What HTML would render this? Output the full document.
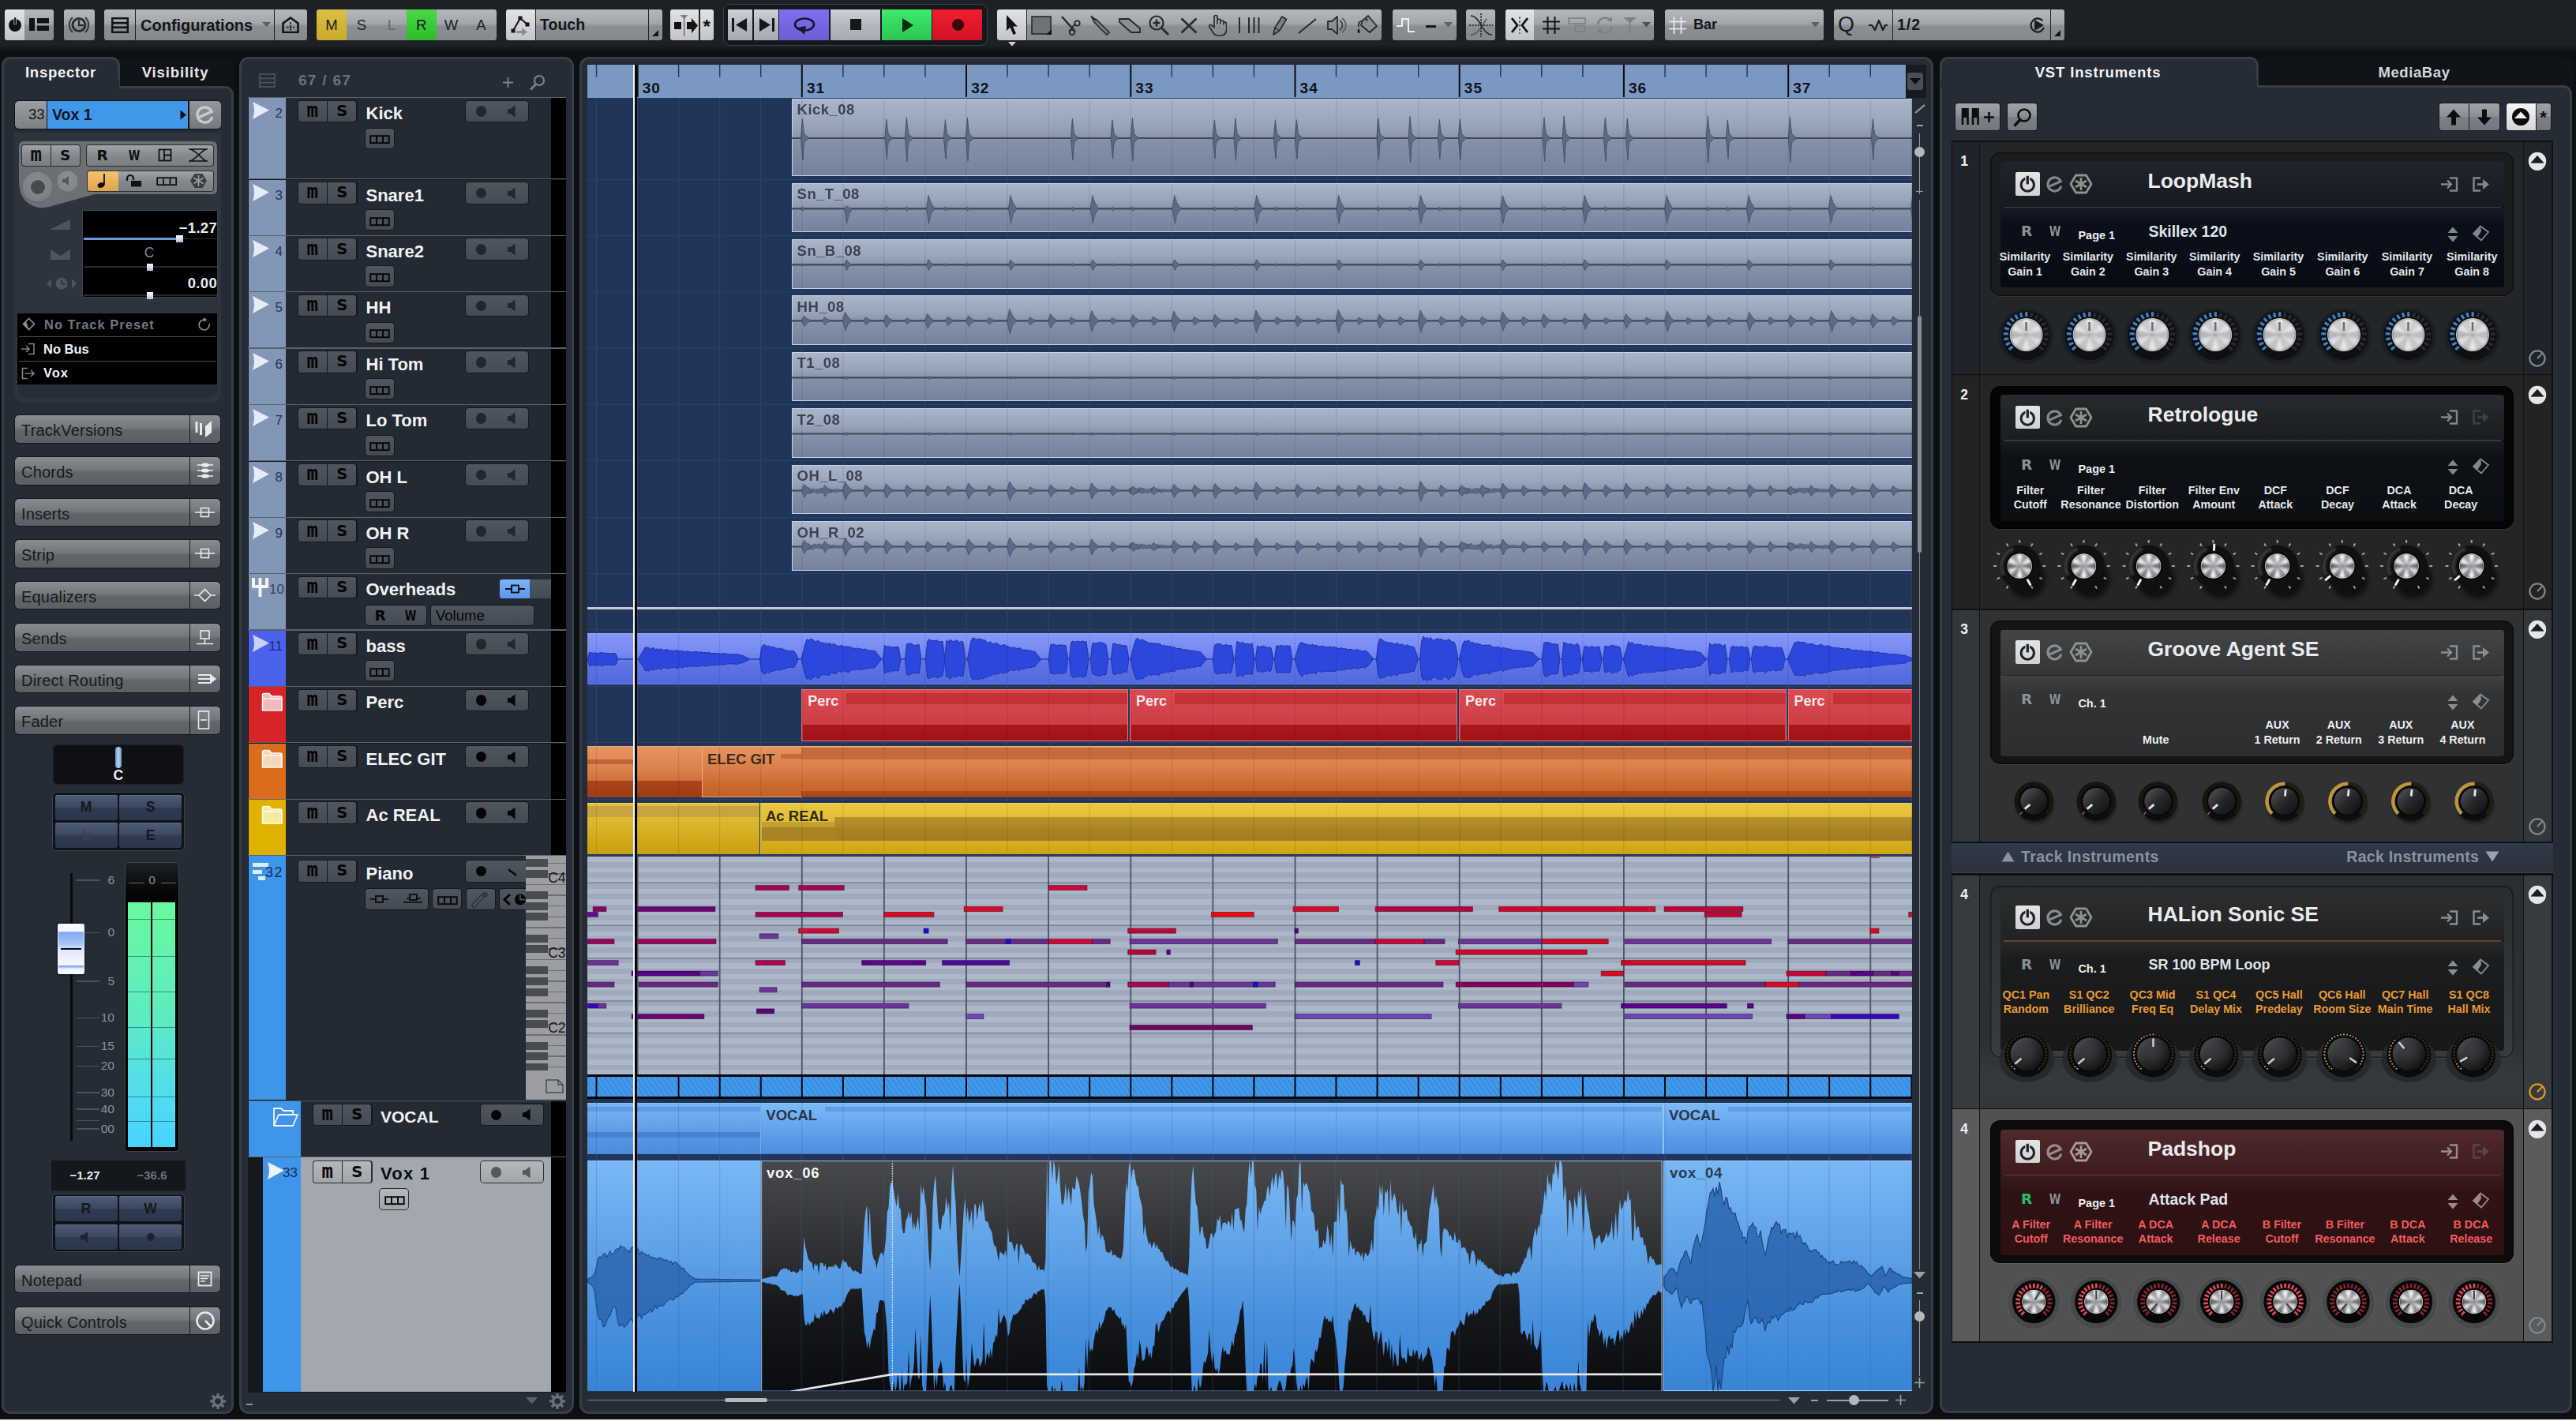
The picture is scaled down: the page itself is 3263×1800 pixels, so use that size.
<!DOCTYPE html>
<html><head><meta charset="utf-8"><title>Cubase</title><style>
html,body{margin:0;padding:0;background:#0d0f11;}
body{width:3263px;height:1800px;position:relative;overflow:hidden;font-family:"Liberation Sans","DejaVu Sans",sans-serif;}
body div,body svg{position:absolute;box-sizing:border-box;}
.t{white-space:nowrap;}
</style></head><body>
<div style="left:0px;top:0px;width:3263px;height:1800px;background:#0d0f11;"></div>
<div style="left:0px;top:0px;width:3263px;height:66px;background:linear-gradient(#1d2126 0,#1d2126 86%,#15181c 93%,#0d0f11 100%);"></div>
<div style="left:6px;top:12px;width:25px;height:39px;background:linear-gradient(#e2e3e5,#d2d4d6 50%,#c2c4c7);border-radius:3px 0 0 3px;"></div>
<div style="left:31px;top:12px;width:37px;height:39px;background:linear-gradient(#b4b7bb,#a3a7ab 45%,#8b8f94 55%,#85898e);border-radius:0 3px 3px 0;"></div>
<svg style="left:8px;top:20px;" width="22" height="22" viewBox="0 0 22 22"><path d="M6.5 5.5A8 8 0 1 0 15.5 5.5" fill="none" stroke="#111316" stroke-width="0"/><circle cx="11" cy="12" r="8" fill="#111316"/><rect x="9.5" y="2" width="3.4" height="9" fill="#dcdde0"/><rect x="10.2" y="2" width="2" height="8.5" fill="#111316"/></svg>
<svg style="left:37px;top:23px;" width="26" height="17" viewBox="0 0 26 17"><rect x="0" y="0" width="7" height="16" fill="#111316"/><rect x="10" y="0" width="15" height="6.5" fill="#111316"/><rect x="10" y="9.5" width="15" height="6.5" fill="#111316"/></svg>
<div style="left:81px;top:12px;width:39px;height:39px;background:linear-gradient(#b4b7bb,#a3a7ab 45%,#8b8f94 55%,#85898e);border-radius:3px;"></div>
<svg style="left:85px;top:17px;" width="30" height="30" viewBox="0 0 30 30"><circle cx="15" cy="14.5" r="8" fill="none" stroke="#2a2d31" stroke-width="3"/><path d="M15 8.5V15H21" fill="none" stroke="#2a2d31" stroke-width="2.5"/><path d="M7 5A13 13 0 0 0 7 24M23 5A13 13 0 0 1 23 24" fill="none" stroke="#3a3d42" stroke-width="2.2"/></svg>
<div style="left:132px;top:12px;width:39px;height:39px;background:linear-gradient(#b4b7bb,#a3a7ab 45%,#8b8f94 55%,#85898e);border-radius:3px 0 0 3px;"></div>
<div style="left:172px;top:12px;width:175px;height:39px;background:linear-gradient(#b4b7bb,#a3a7ab 45%,#8b8f94 55%,#85898e);border-radius:0;"></div>
<div style="left:348px;top:12px;width:41px;height:39px;background:linear-gradient(#b4b7bb,#a3a7ab 45%,#8b8f94 55%,#85898e);border-radius:0 3px 3px 0;"></div>
<svg style="left:141px;top:22px;" width="22" height="20" viewBox="0 0 22 20"><rect x="1.2" y="1.2" width="19.6" height="17.6" fill="none" stroke="#111316" stroke-width="2.4"/><rect x="1" y="5.8" width="20" height="2.6" fill="#111316"/><rect x="1" y="11.4" width="20" height="2.6" fill="#111316"/></svg>
<div class="t" style="left:178px;top:20px;font-size:20px;line-height:24px;color:#15171a;font-weight:bold;">Configurations</div>
<svg style="left:332px;top:27px;" width="12" height="8" viewBox="0 0 12 8"><path d="M0 1H11L5.5 7Z" fill="#5d6166"/></svg>
<svg style="left:356px;top:20px;" width="24" height="22" viewBox="0 0 24 22"><path d="M2.5 21V9.5L12 2.5L21.5 9.5V21Z" fill="none" stroke="#111316" stroke-width="2.6"/><path d="M12 8V19M7 14.5H17" stroke="#111316" stroke-width="1.6" stroke-dasharray="2.5 1.5"/></svg>
<div style="left:401px;top:12px;width:38px;height:39px;background:linear-gradient(#dcc044,#c8aa2c);border-radius:3px 0 0 3px;"></div>
<div class="t" style="left:401px;top:20.5px;width:38px;text-align:center;font-size:18.5px;line-height:22.2px;color:#1a1a1a;font-weight:normal;">M</div>
<div style="left:438.9px;top:12px;width:38px;height:39px;background:linear-gradient(#b4b7bb,#a3a7ab 45%,#8b8f94 55%,#85898e);border-radius:0;"></div>
<div class="t" style="left:438.9px;top:20.5px;width:38px;text-align:center;font-size:18.5px;line-height:22.2px;color:#1a1c1f;font-weight:normal;">S</div>
<div style="left:476.8px;top:12px;width:38px;height:39px;background:linear-gradient(#b4b7bb,#a3a7ab 45%,#8b8f94 55%,#85898e);border-radius:0;"></div>
<div class="t" style="left:476.8px;top:20.5px;width:38px;text-align:center;font-size:18.5px;line-height:22.2px;color:#63676c;font-weight:normal;">L</div>
<div style="left:514.7px;top:12px;width:38px;height:39px;background:linear-gradient(#48d848,#2cbc2c);border-radius:0;"></div>
<div class="t" style="left:514.7px;top:20.5px;width:38px;text-align:center;font-size:18.5px;line-height:22.2px;color:#0c1a0c;font-weight:normal;">R</div>
<div style="left:552.6px;top:12px;width:38px;height:39px;background:linear-gradient(#b4b7bb,#a3a7ab 45%,#8b8f94 55%,#85898e);border-radius:0;"></div>
<div class="t" style="left:552.6px;top:20.5px;width:38px;text-align:center;font-size:18.5px;line-height:22.2px;color:#1a1c1f;font-weight:normal;">W</div>
<div style="left:590.5px;top:12px;width:38px;height:39px;background:linear-gradient(#b4b7bb,#a3a7ab 45%,#8b8f94 55%,#85898e);border-radius:0 3px 3px 0;"></div>
<div class="t" style="left:590.5px;top:20.5px;width:38px;text-align:center;font-size:18.5px;line-height:22.2px;color:#1a1c1f;font-weight:normal;">A</div>
<div style="left:641px;top:12px;width:37px;height:39px;background:linear-gradient(#e2e3e5,#d2d4d6 50%,#c2c4c7);border-radius:3px 0 0 3px;"></div>
<div style="left:679px;top:12px;width:142px;height:39px;background:linear-gradient(#b4b7bb,#a3a7ab 45%,#8b8f94 55%,#85898e);border-radius:0;"></div>
<div style="left:822px;top:12px;width:17px;height:39px;background:linear-gradient(#b4b7bb,#a3a7ab 45%,#8b8f94 55%,#85898e);border-radius:0 3px 3px 0;"></div>
<svg style="left:646px;top:18px;" width="30" height="30" viewBox="0 0 30 30"><path d="M4 21L13 5L22 13" fill="none" stroke="#111316" stroke-width="2"/><rect x="10.5" y="2.5" width="5" height="5" fill="#111316"/><rect x="1.5" y="18.5" width="5" height="5" fill="#111316"/><rect x="19.5" y="10.5" width="5" height="5" fill="#111316"/><path d="M8 21H15V17L22 22.5L15 28V24H8Z" fill="#8b8f94"/></svg>
<div class="t" style="left:684px;top:20px;font-size:19.5px;line-height:23.4px;color:#15171a;font-weight:bold;">Touch</div>
<svg style="left:826px;top:38px;" width="9" height="9" viewBox="0 0 9 9"><path d="M8 0V8H0Z" fill="#111316"/></svg>
<div style="left:849px;top:12px;width:36px;height:39px;background:linear-gradient(#e2e3e5,#d2d4d6 50%,#c2c4c7);border-radius:3px 0 0 3px;"></div>
<div style="left:886.5px;top:12px;width:17.5px;height:39px;background:linear-gradient(#e2e3e5,#d2d4d6 50%,#c2c4c7);border-radius:0 3px 3px 0;"></div>
<svg style="left:853px;top:17px;" width="32" height="30" viewBox="0 0 32 30"><rect x="1" y="11" width="9" height="9" fill="#111316"/><path d="M17 11H23V6L31 15.5L23 25V20H17Z" fill="#111316"/><path d="M8 2H19L13.5 7Z" fill="#8a8d91"/><rect x="13" y="2" width="1.2" height="27" fill="#55585c"/></svg>
<div class="t" style="left:886.5px;top:20px;width:17.5px;text-align:center;font-size:24px;line-height:28.8px;color:#111316;font-weight:bold;">*</div>
<div style="left:916px;top:5px;width:335px;height:52.6px;background:#15181c;border:1.5px solid #3b4149;border-radius:9px;box-sizing:border-box;"></div>
<div style="left:922px;top:12px;width:31px;height:39px;background:linear-gradient(#cdd1d6,#b4b9c0 50%,#a4aab2);border-radius:0;"></div>
<div style="left:955px;top:12px;width:31px;height:39px;background:linear-gradient(#cdd1d6,#b4b9c0 50%,#a4aab2);border-radius:0;"></div>
<div style="left:987px;top:12px;width:63.4px;height:39px;background:linear-gradient(#8070f0,#6c5cd4);border-radius:0;"></div>
<div style="left:1052px;top:12px;width:63px;height:39px;background:linear-gradient(#cdd1d6,#b4b9c0 50%,#a4aab2);border-radius:0;"></div>
<div style="left:1116.5px;top:12px;width:63.1px;height:39px;background:linear-gradient(#3cec6c,#2cc455);border-radius:0;"></div>
<div style="left:1181px;top:12px;width:63px;height:39px;background:linear-gradient(#f41c30,#d01424);border-radius:0;"></div>
<svg style="left:927px;top:23px;" width="22" height="17" viewBox="0 0 22 17"><rect x="0" y="0" width="3" height="17" fill="#15171a"/><path d="M19 0V17L5 8.5Z" fill="#15171a"/></svg>
<svg style="left:961px;top:23px;" width="22" height="17" viewBox="0 0 22 17"><rect x="17" y="0" width="3" height="17" fill="#15171a"/><path d="M1 0V17L15 8.5Z" fill="#15171a"/></svg>
<svg style="left:1004px;top:19px;" width="30" height="26" viewBox="0 0 30 26"><ellipse cx="15" cy="12" rx="12" ry="7.5" fill="none" stroke="#18152e" stroke-width="2.6"/><path d="M6 16L17 14L15 25Z" fill="#18152e"/></svg>
<div style="left:1076.5px;top:24px;width:14px;height:14px;background:#15171a;"></div>
<svg style="left:1141px;top:22px;" width="18" height="20" viewBox="0 0 18 20"><path d="M2 1L16 10L2 19Z" fill="#0a2a12"/></svg>
<div style="left:1205.5px;top:24px;width:15px;height:15px;background:#3a0408;border-radius:50%;"></div>
<div style="left:1262.8px;top:12px;width:37.7px;height:39px;background:linear-gradient(#e2e3e5,#d2d4d6 50%,#c2c4c7);border-radius:3px 0 0 3px;"></div>
<div style="left:1300.5px;top:12px;width:449.1px;height:39px;background:linear-gradient(#b4b7bb,#a3a7ab 45%,#8b8f94 55%,#85898e);border-radius:0 3px 3px 0;"></div>
<svg style="left:1274px;top:18px;" width="16" height="28" viewBox="0 0 16 28"><path d="M1 1V21L5.5 16.5L9.5 26L13 24.5L9 15.5H15Z" fill="#111316"/></svg>
<svg style="left:1277px;top:53px;" width="10" height="6" viewBox="0 0 10 6"><path d="M0 0H10L5 5.5Z" fill="#d0d2d4"/></svg>
<svg style="left:1306px;top:20px;" width="28" height="25" viewBox="0 0 28 25"><rect x="1" y="1" width="24" height="22" fill="#6f7378" stroke="#26292d" stroke-width="1.6"/><path d="M26 17V24H19Z" fill="#111316"/></svg>
<svg style="left:1342px;top:18px;" width="30" height="28" viewBox="0 0 30 28"><path d="M3 3L20 22" stroke="#26292d" stroke-width="2.4"/><path d="M20 12L12 22" stroke="#26292d" stroke-width="2"/><circle cx="22.5" cy="11.5" r="3.2" fill="none" stroke="#26292d" stroke-width="1.8"/><circle cx="16" cy="23" r="3.2" fill="none" stroke="#26292d" stroke-width="1.8"/></svg>
<svg style="left:1380px;top:18px;" width="28" height="28" viewBox="0 0 28 28"><path d="M3 4L9 7L25 23L22 26L6 10Z" fill="#7d8186" stroke="#26292d" stroke-width="1.6"/><path d="M2 2L8 8" stroke="#26292d" stroke-width="1.6"/></svg>
<svg style="left:1416px;top:20px;" width="30" height="24" viewBox="0 0 30 24"><path d="M2 4H14L28 16V21H17L2 8Z" fill="#8b8f94" stroke="#26292d" stroke-width="1.8"/><path d="M2 8L14 4M17 21L28 16" stroke="#26292d" stroke-width="0"/></svg>
<svg style="left:1454px;top:18px;" width="30" height="28" viewBox="0 0 30 28"><circle cx="11" cy="11" r="8.5" fill="none" stroke="#26292d" stroke-width="2.2"/><path d="M17.5 17.5L26 26" stroke="#26292d" stroke-width="3"/><path d="M6.5 11H15.5M11 6.5V15.5" stroke="#26292d" stroke-width="2.4"/></svg>
<svg style="left:1495px;top:22px;" width="22" height="21" viewBox="0 0 22 21"><path d="M1.5 1.5L20.5 19.5M20.5 1.5L1.5 19.5" stroke="#26292d" stroke-width="2.6"/></svg>
<svg style="left:1530px;top:17px;" width="24" height="30" viewBox="0 0 24 30"><path d="M8 14V4.5a2 2 0 0 1 4 0V13V9a2 2 0 0 1 4 0v4V11a2 2 0 0 1 4 0v3v-1a1.8 1.8 0 0 1 3.6 0V20c0 5-3 8-8 8h-3c-3 0-5-2-7-5L2 17c-1-2 1.5-3.5 3-2L8 18Z" fill="none" stroke="#26292d" stroke-width="1.7" stroke-linejoin="round"/></svg>
<svg style="left:1568px;top:22px;" width="30" height="21" viewBox="0 0 30 21"><path d="M2 0V20M14 0V20M20.5 0V20M26.5 0V20" stroke="#26292d" stroke-width="2"/></svg>
<svg style="left:1610px;top:18px;" width="22" height="28" viewBox="0 0 22 28"><path d="M3 26L5 17L14 3L19.5 6.5L10.5 21Z" fill="#7d8186" stroke="#26292d" stroke-width="1.7" stroke-linejoin="round"/><path d="M5 17L10.5 21" stroke="#26292d" stroke-width="1.2"/></svg>
<svg style="left:1643px;top:22px;" width="26" height="22" viewBox="0 0 26 22"><path d="M2 20L24 2" stroke="#26292d" stroke-width="2"/></svg>
<svg style="left:1680px;top:19px;" width="30" height="26" viewBox="0 0 30 26"><path d="M2 8H7L14 2V24L7 18H2Z" fill="#8b8f94" stroke="#26292d" stroke-width="1.8" stroke-linejoin="round"/><path d="M17 7A7 7 0 0 1 17 19" fill="none" stroke="#3c4045" stroke-width="1.8"/><path d="M20 4A11 11 0 0 1 20 22" fill="none" stroke="#5a5e63" stroke-width="1.8"/></svg>
<svg style="left:1716px;top:17px;" width="30" height="30" viewBox="0 0 30 30"><path d="M10 9L17 3L28 16L19 24L8 15Z" fill="#8b8f94" stroke="#26292d" stroke-width="1.8" stroke-linejoin="round"/><path d="M10 9C6 10 4 13 5 17" fill="none" stroke="#26292d" stroke-width="1.8"/><path d="M5 19C3 22 3 25 5 25C7 25 7 22 5 19Z" fill="#111316"/><circle cx="15" cy="8" r="1.5" fill="#26292d"/></svg>
<div style="left:1763.7px;top:12px;width:81.3px;height:39px;background:linear-gradient(#b4b7bb,#a3a7ab 45%,#8b8f94 55%,#85898e);border-radius:3px;"></div>
<svg style="left:1768px;top:22px;" width="26" height="20" viewBox="0 0 26 20"><path d="M1 11H8V2H16V18H24" fill="none" stroke="#eceef0" stroke-width="2"/></svg>
<div style="left:1806px;top:31.5px;width:13px;height:3.5px;background:#15171a;"></div>
<svg style="left:1829px;top:28px;" width="11" height="7" viewBox="0 0 11 7"><path d="M0 0H11L5.5 6.5Z" fill="#5d6166"/></svg>
<div style="left:1857px;top:12px;width:37px;height:39px;background:linear-gradient(#b4b7bb,#a3a7ab 45%,#8b8f94 55%,#85898e);border-radius:3px;"></div>
<svg style="left:1861px;top:16px;" width="30" height="32" viewBox="0 0 30 32"><path d="M2 4C14 4 16 28 29 28" fill="none" stroke="#26292d" stroke-width="1.6"/><path d="M2 28C12 28 16 16 22 8" fill="none" stroke="#4a4e53" stroke-width="1.4"/><path d="M0 16H30M15 1V31" stroke="#111316" stroke-width="1.6" stroke-dasharray="2 1.6"/></svg>
<div style="left:1906.6px;top:12px;width:36.8px;height:39px;background:linear-gradient(#e2e3e5,#d2d4d6 50%,#c2c4c7);border-radius:3px 0 0 3px;"></div>
<div style="left:1943.4px;top:12px;width:152px;height:39px;background:linear-gradient(#b4b7bb,#a3a7ab 45%,#8b8f94 55%,#85898e);border-radius:0 3px 3px 0;"></div>
<svg style="left:1913px;top:21px;" width="24" height="22" viewBox="0 0 24 22"><path d="M2 2L9 11L2 20M22 2L15 11L22 20" fill="none" stroke="#111316" stroke-width="2.8"/><path d="M12 0V22" stroke="#55585c" stroke-width="1.6" stroke-dasharray="3 2"/></svg>
<svg style="left:1954px;top:21px;" width="22" height="22" viewBox="0 0 22 22"><path d="M6.5 0V22M15.5 0V22M0 6.5H22M0 15.5H22" stroke="#111316" stroke-width="2"/></svg>
<svg style="left:1986px;top:22px;" width="24" height="20" viewBox="0 0 24 20"><rect x="1" y="1" width="21" height="7" fill="none" stroke="#7c8085" stroke-width="1.6"/><rect x="9" y="11" width="13" height="7" fill="none" stroke="#7c8085" stroke-width="1.6"/></svg>
<svg style="left:2020px;top:20px;" width="26" height="24" viewBox="0 0 26 24"><path d="M4 11A9 9 0 0 1 20 6M22 13A9 9 0 0 1 6 18" fill="none" stroke="#7c8085" stroke-width="2.4"/><path d="M16 7H22V1ZM10 17H4V23Z" fill="#7c8085"/></svg>
<svg style="left:2056px;top:21px;" width="18" height="22" viewBox="0 0 18 22"><path d="M0 1H17L8.5 8Z" fill="#7c8085"/><rect x="7.5" y="1" width="2" height="21" fill="#7c8085"/></svg>
<svg style="left:2080px;top:28px;" width="11" height="7" viewBox="0 0 11 7"><path d="M0 0H11L5.5 6.5Z" fill="#4d5156"/></svg>
<div style="left:2109px;top:12px;width:200.6px;height:39px;background:linear-gradient(#b4b7bb,#a3a7ab 45%,#8b8f94 55%,#85898e);border-radius:3px;"></div>
<svg style="left:2114px;top:21px;" width="22" height="22" viewBox="0 0 22 22"><path d="M6.5 0V22M15.5 0V22M0 6.5H22M0 15.5H22" stroke="#eef0f2" stroke-width="1.6"/></svg>
<div class="t" style="left:2145px;top:21px;font-size:18px;line-height:21.6px;color:#15171a;font-weight:bold;">Bar</div>
<svg style="left:2294px;top:28px;" width="11" height="7" viewBox="0 0 11 7"><path d="M0 0H11L5.5 6.5Z" fill="#5d6166"/></svg>
<div style="left:2323px;top:12px;width:73.5px;height:39px;background:linear-gradient(#b4b7bb,#a3a7ab 45%,#8b8f94 55%,#85898e);border-radius:3px 0 0 3px;"></div>
<div style="left:2397.5px;top:12px;width:199px;height:39px;background:linear-gradient(#b4b7bb,#a3a7ab 45%,#8b8f94 55%,#85898e);border-radius:0;"></div>
<div style="left:2597.5px;top:12px;width:17.1px;height:39px;background:linear-gradient(#b4b7bb,#a3a7ab 45%,#8b8f94 55%,#85898e);border-radius:0 3px 3px 0;"></div>
<div class="t" style="left:2328px;top:15px;font-size:27px;line-height:32.4px;color:#1a1c1f;font-weight:normal;">Q</div>
<svg style="left:2366px;top:24px;" width="26" height="16" viewBox="0 0 26 16"><path d="M1 8H5L9 14L14 2L19 14L22 8H25" fill="none" stroke="#1a1c1f" stroke-width="2.2" stroke-linejoin="round"/></svg>
<div class="t" style="left:2403px;top:20px;font-size:19.5px;line-height:23.4px;color:#15171a;font-weight:bold;letter-spacing:1px;">1/2</div>
<svg style="left:2570px;top:20px;" width="24" height="24" viewBox="0 0 24 24"><circle cx="11" cy="12" r="8.5" fill="none" stroke="#1a1c1f" stroke-width="2.2" stroke-dasharray="44 9.4" transform="rotate(20 11 12)"/><path d="M7 5V19L19 12Z" fill="#1a1c1f"/></svg>
<svg style="left:2602px;top:38px;" width="9" height="9" viewBox="0 0 9 9"><path d="M8 0V8H0Z" fill="#111316"/></svg>
<div style="left:150px;top:73px;width:146px;height:40px;background:#101317;border-radius:0 10px 0 0;"></div>
<div style="left:1.8px;top:72px;width:150.2px;height:41px;background:#252c36;border-radius:11px 11px 0 0;border:3px solid #353e49;border-bottom:none;"></div>
<div style="left:1.8px;top:108.5px;width:294px;height:1682.8px;background:#252c36;border-radius:0 11px 11px 11px;border:3px solid #353e49;"></div>
<div style="left:4.5px;top:100px;width:146px;height:12px;background:#252c36;"></div>
<div class="t" style="left:3px;top:81px;width:148px;text-align:center;font-size:18.5px;line-height:22.2px;color:#f2f3f5;font-weight:bold;letter-spacing:.75px;">Inspector</div>
<div class="t" style="left:150px;top:81px;width:144px;text-align:center;font-size:18.5px;line-height:22.2px;color:#e6e8ea;font-weight:bold;letter-spacing:.9px;">Visibility</div>
<div style="left:17.5px;top:126.5px;width:262.5px;height:37.5px;background:#101317;border-radius:6px;"></div>
<div style="left:18.5px;top:127.5px;width:40px;height:35.5px;background:linear-gradient(#9a9da1,#7c8085);border-radius:5px 0 0 5px;"></div>
<div style="left:59.5px;top:127.5px;width:178.5px;height:35.5px;background:#4197ea;"></div>
<div style="left:239.5px;top:127.5px;width:40px;height:35.5px;background:linear-gradient(#94989c,#74787d);border-radius:0 5px 5px 0;"></div>
<div class="t" style="left:18.5px;top:134px;width:40px;text-align:right;font-size:18.5px;line-height:22.2px;color:#15171a;font-weight:normal;padding-right:2px;">33</div>
<div class="t" style="left:66px;top:134px;font-size:19.5px;line-height:23.4px;color:#0c1624;font-weight:bold;">Vox 1</div>
<svg style="left:228px;top:139px;" width="9" height="13" viewBox="0 0 9 13"><path d="M0.5 0.5V12.5L8 6.5Z" fill="#0c1018"/></svg>
<svg style="left:245px;top:130px;" width="30" height="30" viewBox="0 0 30 30"><g transform="rotate(-24 15 15)"><path d="M5 15H24A9.6 9.6 0 1 0 20.8 22.4" fill="none" stroke="#c8cacd" stroke-width="3.4" stroke-linecap="round"/></g></svg>
<div style="left:18px;top:168px;width:262px;height:342px;background:#2d343d;border-radius:0 0 12px 12px;"></div>
<div style="left:23px;top:397px;width:252px;height:107px;background:#272e37;border-radius:0 0 10px 10px;"></div>
<svg style="left:22px;top:178px;" width="256" height="90" viewBox="0 0 256 90"><path d="M8 1H246Q253 1 253 8V62Q253 68 246 68H98L40 84Q24 88 12 78Q2 70 2 50V8Q2 1 8 1Z" fill="#6c6f73"/></svg>
<div style="left:26.5px;top:183px;width:75px;height:27.5px;background:#2a2d31;border-radius:4px;"></div>
<div style="left:27.5px;top:184px;width:36.5px;height:25.5px;background:linear-gradient(#a0a3a7,#85898e 50%,#7a7e83);border-radius:3px 0 0 3px;"></div>
<div style="left:65px;top:184px;width:35.5px;height:25.5px;background:linear-gradient(#a0a3a7,#85898e 50%,#7a7e83);border-radius:0 3px 3px 0;"></div>
<div class="t" style="left:27.5px;top:182px;width:36.5px;text-align:center;font-size:24px;line-height:28.8px;color:#0d0e10;font-weight:bold;font-family:DejaVu Sans Mono,Liberation Mono,monospace;">m</div>
<div class="t" style="left:65px;top:185.5px;width:35.5px;text-align:center;font-size:18.5px;line-height:22.2px;color:#0d0e10;font-weight:bold;font-family:DejaVu Sans,Liberation Sans,sans-serif;">S</div>
<div style="left:108.5px;top:183px;width:162px;height:27.5px;background:#2a2d31;border-radius:4px;"></div>
<div style="left:109.5px;top:184px;width:160px;height:25.5px;background:linear-gradient(#a0a3a7,#85898e 50%,#7a7e83);border-radius:3px;"></div>
<div class="t" style="left:109.5px;top:185.5px;width:40px;text-align:center;font-size:18.5px;line-height:22.2px;color:#0d0e10;font-weight:bold;font-family:DejaVu Sans,Liberation Sans,sans-serif;">R</div>
<div class="t" style="left:149.5px;top:185.5px;width:40px;text-align:center;font-size:18.5px;line-height:22.2px;color:#0d0e10;font-weight:bold;font-family:DejaVu Sans,Liberation Sans,sans-serif;transform:scaleX(.72);">W</div>
<svg style="left:200px;top:188px;" width="20" height="18" viewBox="0 0 20 18"><rect x="1.5" y="1.5" width="15" height="14" fill="none" stroke="#111" stroke-width="1.8"/><path d="M8 1.5V15.5M8 8.5H16" stroke="#111" stroke-width="1.8"/></svg>
<svg style="left:238px;top:188px;" width="26" height="18" viewBox="0 0 26 18"><path d="M1 1H25M1 16H25M3 1C12 4 16 12 23 16M3 16C12 12 16 4 23 1" fill="none" stroke="#111" stroke-width="1.6"/></svg>
<div style="left:109.5px;top:215.5px;width:161.5px;height:27px;background:#2a2d31;border-radius:4px;"></div>
<div style="left:110.5px;top:216.5px;width:39.5px;height:25px;background:linear-gradient(#f4c46c,#e0a44c);border-radius:3px 0 0 3px;"></div>
<div style="left:150px;top:216.5px;width:120px;height:25px;background:linear-gradient(#a0a3a7,#85898e 50%,#7a7e83);border-radius:0 3px 3px 0;"></div>
<svg style="left:122px;top:219px;" width="16" height="20" viewBox="0 0 16 20"><ellipse cx="6" cy="15.5" rx="4.5" ry="3.2" fill="#111" transform="rotate(-20 6 15.5)"/><path d="M10 15V1" stroke="#111" stroke-width="1.8"/></svg>
<svg style="left:157px;top:220px;" width="26" height="18" viewBox="0 0 26 18"><path d="M4 9V6A4 4 0 0 1 12 6V8" fill="none" stroke="#111" stroke-width="2.2"/><rect x="9" y="9" width="13" height="7.5" fill="#111"/></svg>
<svg style="left:198px;top:224px;" width="28" height="12" viewBox="0 0 28 12"><rect x="1.2" y="1.2" width="24" height="9" fill="none" stroke="#111" stroke-width="1.8"/><path d="M9 1V10M17.5 1V10" stroke="#111" stroke-width="1.8"/></svg>
<svg style="left:240px;top:218px;" width="24" height="22" viewBox="0 0 24 22"><path d="M6.5 2H16.5L22 11L16.5 20H6.5L1 11Z" fill="#3a3d41"/><path d="M11.5 4V18M5.5 7.5L17.5 14.5M17.5 7.5L5.5 14.5" stroke="#a0a3a7" stroke-width="1.6"/></svg>
<div style="left:27px;top:216px;width:40.5px;height:40.5px;background:radial-gradient(circle at 50% 40%,#8a8e93,#74787d);border-radius:50%;box-shadow:inset 0 0 0 1.5px #66696e;"></div>
<div style="left:38.5px;top:227.5px;width:18px;height:18px;background:#46494e;border-radius:50%;"></div>
<div style="left:71px;top:215px;width:28.5px;height:28.5px;background:radial-gradient(circle at 50% 40%,#8e9297,#7a7e83);border-radius:50%;box-shadow:inset 0 0 0 1.2px #66696e;"></div>
<svg style="left:78px;top:222px;" width="14" height="14" viewBox="0 0 14 14"><path d="M1 4.5H4.5L9 1V13L4.5 9.5H1Z" fill="#55585d"/></svg>
<div style="left:104px;top:266px;width:171.5px;height:111px;background:#000;border:1px solid #3a424d;"></div>
<div class="t" style="left:150px;top:278px;width:125px;text-align:right;font-size:18.5px;line-height:22.2px;color:#e4ecf6;font-weight:bold;letter-spacing:.3px;">−1.27</div>
<div style="left:105.5px;top:301.5px;width:169px;height:1.5px;background:#262a30;"></div>
<div style="left:105.5px;top:301px;width:121px;height:2.5px;background:#6e98d8;"></div>
<div style="left:223px;top:298px;width:8.5px;height:8.5px;background:linear-gradient(#fff,#a8c0dc);"></div>
<div class="t" style="left:150px;top:310px;width:78px;text-align:center;font-size:17.5px;line-height:21px;color:#7888a0;font-weight:normal;">C</div>
<div style="left:105.5px;top:337px;width:169px;height:1.5px;background:#262a30;"></div>
<div style="left:185.5px;top:334px;width:8.5px;height:8.5px;background:linear-gradient(#fff,#a8c0dc);"></div>
<div class="t" style="left:150px;top:348px;width:125px;text-align:right;font-size:18.5px;line-height:22.2px;color:#e4ecf6;font-weight:bold;letter-spacing:.3px;">0.00</div>
<div style="left:105.5px;top:373px;width:169px;height:1.5px;background:#262a30;"></div>
<div style="left:185.5px;top:370px;width:8.5px;height:8.5px;background:linear-gradient(#fff,#a8c0dc);"></div>
<svg style="left:62px;top:276px;" width="30" height="16" viewBox="0 0 30 16"><path d="M1 15H27V2Z" fill="#4c545f"/></svg>
<svg style="left:62px;top:315px;" width="30" height="15" viewBox="0 0 30 15"><path d="M2 1V14H27V1L14.5 9Z" fill="#4c545f"/></svg>
<svg style="left:58px;top:350px;" width="40" height="18" viewBox="0 0 40 18"><path d="M7 3V15L1 9ZM33 3V15L39 9Z" fill="#4c545f"/><circle cx="20" cy="9" r="7.5" fill="#4c545f"/><path d="M20 4V9.5H25" fill="none" stroke="#2d343d" stroke-width="1.8"/></svg>
<div style="left:22px;top:396.5px;width:253px;height:90px;background:#000;"></div>
<div style="left:24px;top:426px;width:250px;height:1.2px;background:#4a4f56;"></div>
<div style="left:24px;top:457px;width:250px;height:1.2px;background:#4a4f56;"></div>
<div class="t" style="left:56px;top:402px;font-size:16.5px;line-height:19.8px;color:#6c7787;font-weight:bold;letter-spacing:1px;">No Track Preset</div>
<div class="t" style="left:55px;top:432.5px;font-size:16.5px;line-height:19.8px;color:#f0f2f4;font-weight:bold;">No Bus</div>
<div class="t" style="left:55px;top:463px;font-size:16.5px;line-height:19.8px;color:#f0f2f4;font-weight:bold;letter-spacing:1px;">Vox</div>
<svg style="left:28px;top:402px;" width="18" height="18" viewBox="0 0 18 18"><path d="M8.5 1.5L15.5 8.5L8.5 15.5L1.5 8.5Z" fill="none" stroke="#8a9098" stroke-width="1.6"/><path d="M8.5 15.5L1.5 8.5L5 5Z" fill="#8a9098"/></svg>
<svg style="left:250px;top:402px;" width="18" height="18" viewBox="0 0 18 18"><path d="M9 3A6.5 6.5 0 1 0 15 8" fill="none" stroke="#8a9098" stroke-width="1.6"/><path d="M8 0L12 3L8 6Z" fill="#8a9098"/></svg>
<svg style="left:27px;top:434px;" width="20" height="16" viewBox="0 0 20 16"><path d="M0 8H10M6 4L10 8L6 12" fill="none" stroke="#7c838c" stroke-width="1.6"/><path d="M9 1.5H16V14.5H9" fill="none" stroke="#7c838c" stroke-width="1.6"/></svg>
<svg style="left:27px;top:465px;" width="20" height="16" viewBox="0 0 20 16"><path d="M8 1.5H1.5V14.5H8" fill="none" stroke="#7c838c" stroke-width="1.6"/><path d="M5 8H16M12 4L16 8L12 12" fill="none" stroke="#7c838c" stroke-width="1.6"/></svg>
<div style="left:18px;top:525px;width:262px;height:36.5px;background:#14171b;border-radius:6px;"></div>
<div style="left:19px;top:526px;width:221px;height:34.5px;background:linear-gradient(#898d92,#74787d 45%,#62666b 55%,#5c6065);border-radius:5px 0 0 5px;"></div>
<div style="left:241px;top:526px;width:38px;height:34.5px;background:linear-gradient(#898d92,#74787d 45%,#62666b 55%,#5c6065);border-radius:0 5px 5px 0;"></div>
<div class="t" style="left:27px;top:533px;font-size:20px;line-height:24px;color:#17191c;font-weight:normal;letter-spacing:.2px;">TrackVersions</div>
<svg style="left:241px;top:526px;" width="38" height="34.5" viewBox="0 0 38 34.5"><path d="M8 8V22M13.5 10V25" stroke="#e8eaec" stroke-width="3"/><path d="M19 14L27 7V22L19 28Z" fill="#e8eaec"/></svg>
<div style="left:18px;top:578px;width:262px;height:36.5px;background:#14171b;border-radius:6px;"></div>
<div style="left:19px;top:579px;width:221px;height:34.5px;background:linear-gradient(#898d92,#74787d 45%,#62666b 55%,#5c6065);border-radius:5px 0 0 5px;"></div>
<div style="left:241px;top:579px;width:38px;height:34.5px;background:linear-gradient(#898d92,#74787d 45%,#62666b 55%,#5c6065);border-radius:0 5px 5px 0;"></div>
<div class="t" style="left:27px;top:586px;font-size:20px;line-height:24px;color:#17191c;font-weight:normal;letter-spacing:.2px;">Chords</div>
<svg style="left:241px;top:579px;" width="38" height="34.5" viewBox="0 0 38 34.5"><path d="M9 10H29M9 17H29M9 24H29" stroke="#e8eaec" stroke-width="1.5"/><ellipse cx="19" cy="10" rx="5" ry="2.6" fill="#e8eaec"/><ellipse cx="19" cy="17" rx="5" ry="2.6" fill="#e8eaec"/><ellipse cx="19" cy="24" rx="5" ry="2.6" fill="#e8eaec"/></svg>
<div style="left:18px;top:630.5px;width:262px;height:36.5px;background:#14171b;border-radius:6px;"></div>
<div style="left:19px;top:631.5px;width:221px;height:34.5px;background:linear-gradient(#898d92,#74787d 45%,#62666b 55%,#5c6065);border-radius:5px 0 0 5px;"></div>
<div style="left:241px;top:631.5px;width:38px;height:34.5px;background:linear-gradient(#898d92,#74787d 45%,#62666b 55%,#5c6065);border-radius:0 5px 5px 0;"></div>
<div class="t" style="left:27px;top:638.5px;font-size:20px;line-height:24px;color:#17191c;font-weight:normal;letter-spacing:.2px;">Inserts</div>
<svg style="left:241px;top:631.5px;" width="38" height="34.5" viewBox="0 0 38 34.5"><path d="M6 17H31" stroke="#e8eaec" stroke-width="1.6"/><rect x="13.5" y="11.5" width="10" height="11" fill="none" stroke="#e8eaec" stroke-width="1.6"/></svg>
<div style="left:18px;top:683px;width:262px;height:36.5px;background:#14171b;border-radius:6px;"></div>
<div style="left:19px;top:684px;width:221px;height:34.5px;background:linear-gradient(#898d92,#74787d 45%,#62666b 55%,#5c6065);border-radius:5px 0 0 5px;"></div>
<div style="left:241px;top:684px;width:38px;height:34.5px;background:linear-gradient(#898d92,#74787d 45%,#62666b 55%,#5c6065);border-radius:0 5px 5px 0;"></div>
<div class="t" style="left:27px;top:691px;font-size:20px;line-height:24px;color:#17191c;font-weight:normal;letter-spacing:.2px;">Strip</div>
<svg style="left:241px;top:684px;" width="38" height="34.5" viewBox="0 0 38 34.5"><path d="M6 17H31" stroke="#e8eaec" stroke-width="1.6"/><rect x="13.5" y="11.5" width="10" height="11" fill="none" stroke="#e8eaec" stroke-width="1.6"/></svg>
<div style="left:18px;top:735.6px;width:262px;height:36.5px;background:#14171b;border-radius:6px;"></div>
<div style="left:19px;top:736.6px;width:221px;height:34.5px;background:linear-gradient(#898d92,#74787d 45%,#62666b 55%,#5c6065);border-radius:5px 0 0 5px;"></div>
<div style="left:241px;top:736.6px;width:38px;height:34.5px;background:linear-gradient(#898d92,#74787d 45%,#62666b 55%,#5c6065);border-radius:0 5px 5px 0;"></div>
<div class="t" style="left:27px;top:743.6px;font-size:20px;line-height:24px;color:#17191c;font-weight:normal;letter-spacing:.2px;">Equalizers</div>
<svg style="left:241px;top:736.6px;" width="38" height="34.5" viewBox="0 0 38 34.5"><path d="M5 17H11L18.5 9.5L26 17H32M11 17L18.5 24.5L26 17" fill="none" stroke="#e8eaec" stroke-width="1.6"/></svg>
<div style="left:18px;top:789px;width:262px;height:36.5px;background:#14171b;border-radius:6px;"></div>
<div style="left:19px;top:790px;width:221px;height:34.5px;background:linear-gradient(#898d92,#74787d 45%,#62666b 55%,#5c6065);border-radius:5px 0 0 5px;"></div>
<div style="left:241px;top:790px;width:38px;height:34.5px;background:linear-gradient(#898d92,#74787d 45%,#62666b 55%,#5c6065);border-radius:0 5px 5px 0;"></div>
<div class="t" style="left:27px;top:797px;font-size:20px;line-height:24px;color:#17191c;font-weight:normal;letter-spacing:.2px;">Sends</div>
<svg style="left:241px;top:790px;" width="38" height="34.5" viewBox="0 0 38 34.5"><rect x="13" y="9" width="11" height="10" fill="none" stroke="#e8eaec" stroke-width="1.6"/><path d="M18.5 19V25M8 25.5H29" stroke="#e8eaec" stroke-width="1.6"/></svg>
<div style="left:18px;top:841.5px;width:262px;height:36.5px;background:#14171b;border-radius:6px;"></div>
<div style="left:19px;top:842.5px;width:221px;height:34.5px;background:linear-gradient(#898d92,#74787d 45%,#62666b 55%,#5c6065);border-radius:5px 0 0 5px;"></div>
<div style="left:241px;top:842.5px;width:38px;height:34.5px;background:linear-gradient(#898d92,#74787d 45%,#62666b 55%,#5c6065);border-radius:0 5px 5px 0;"></div>
<div class="t" style="left:27px;top:849.5px;font-size:20px;line-height:24px;color:#17191c;font-weight:normal;letter-spacing:.2px;">Direct Routing</div>
<svg style="left:241px;top:842.5px;" width="38" height="34.5" viewBox="0 0 38 34.5"><path d="M10 12H25M10 17H25M10 22H25" stroke="#e8eaec" stroke-width="1.8"/><path d="M25 10.5L33 17L25 23.5Z" fill="#e8eaec"/></svg>
<div style="left:18px;top:894px;width:262px;height:36.5px;background:#14171b;border-radius:6px;"></div>
<div style="left:19px;top:895px;width:221px;height:34.5px;background:linear-gradient(#898d92,#74787d 45%,#62666b 55%,#5c6065);border-radius:5px 0 0 5px;"></div>
<div style="left:241px;top:895px;width:38px;height:34.5px;background:linear-gradient(#898d92,#74787d 45%,#62666b 55%,#5c6065);border-radius:0 5px 5px 0;"></div>
<div class="t" style="left:27px;top:902px;font-size:20px;line-height:24px;color:#17191c;font-weight:normal;letter-spacing:.2px;">Fader</div>
<svg style="left:241px;top:895px;" width="38" height="34.5" viewBox="0 0 38 34.5"><rect x="10.5" y="6" width="13" height="22" fill="none" stroke="#e8eaec" stroke-width="1.6"/><path d="M13 17H21" stroke="#e8eaec" stroke-width="1.6"/></svg>
<div style="left:18px;top:1601.5px;width:262px;height:36.5px;background:#14171b;border-radius:6px;"></div>
<div style="left:19px;top:1602.5px;width:221px;height:34.5px;background:linear-gradient(#898d92,#74787d 45%,#62666b 55%,#5c6065);border-radius:5px 0 0 5px;"></div>
<div style="left:241px;top:1602.5px;width:38px;height:34.5px;background:linear-gradient(#898d92,#74787d 45%,#62666b 55%,#5c6065);border-radius:0 5px 5px 0;"></div>
<div class="t" style="left:27px;top:1609.5px;font-size:20px;line-height:24px;color:#17191c;font-weight:normal;letter-spacing:.2px;">Notepad</div>
<svg style="left:241px;top:1602.5px;" width="38" height="34.5" viewBox="0 0 38 34.5"><rect x="10.5" y="8.5" width="16" height="17" fill="none" stroke="#e8eaec" stroke-width="1.8"/><path d="M13 13H24M13 16.5H22M13 20H19" stroke="#e8eaec" stroke-width="1.4"/></svg>
<div style="left:18px;top:1654.5px;width:262px;height:36.5px;background:#14171b;border-radius:6px;"></div>
<div style="left:19px;top:1655.5px;width:221px;height:34.5px;background:linear-gradient(#898d92,#74787d 45%,#62666b 55%,#5c6065);border-radius:5px 0 0 5px;"></div>
<div style="left:241px;top:1655.5px;width:38px;height:34.5px;background:linear-gradient(#898d92,#74787d 45%,#62666b 55%,#5c6065);border-radius:0 5px 5px 0;"></div>
<div class="t" style="left:27px;top:1662.5px;font-size:20px;line-height:24px;color:#17191c;font-weight:normal;letter-spacing:.2px;">Quick Controls</div>
<svg style="left:241px;top:1655.5px;" width="38" height="34.5" viewBox="0 0 38 34.5"><circle cx="19" cy="17" r="10.5" fill="none" stroke="#e8eaec" stroke-width="2.6"/><path d="M19 17L26 24" stroke="#e8eaec" stroke-width="2.6"/></svg>
<div style="left:66.5px;top:943px;width:166.5px;height:51px;background:#0e1014;border-radius:6px;border:1px solid #1c2026;"></div>
<div style="left:146px;top:946px;width:8px;height:27px;background:linear-gradient(90deg,#6e94c0,#b4d4f4 50%,#6e94c0);border-radius:4px;"></div>
<div class="t" style="left:66.5px;top:972px;width:166.5px;text-align:center;font-size:17.5px;line-height:21px;color:#f0f2f4;font-weight:bold;">C</div>
<div style="left:65.5px;top:1003px;width:168.5px;height:74.5px;background:#0f1216;border:1.5px solid #3c444f;border-radius:6px;"></div>
<div style="left:69.5px;top:1006.5px;width:79px;height:32px;background:linear-gradient(#4d5d77,#3b4960 48%,#2f3b50 52%,#2b364a);border-radius:3px;box-shadow:inset 0 1px 0 #5c6c86;"></div>
<div class="t" style="left:69.5px;top:1012px;width:79px;text-align:center;font-size:17.5px;line-height:21px;color:#14171b;font-weight:bold;">M</div>
<div style="left:151px;top:1006.5px;width:79px;height:32px;background:linear-gradient(#4d5d77,#3b4960 48%,#2f3b50 52%,#2b364a);border-radius:3px;box-shadow:inset 0 1px 0 #5c6c86;"></div>
<div class="t" style="left:151px;top:1012px;width:79px;text-align:center;font-size:17.5px;line-height:21px;color:#14171b;font-weight:bold;">S</div>
<div style="left:69.5px;top:1042px;width:79px;height:32px;background:linear-gradient(#4d5d77,#3b4960 48%,#2f3b50 52%,#2b364a);border-radius:3px;box-shadow:inset 0 1px 0 #5c6c86;"></div>
<div class="t" style="left:69.5px;top:1047.5px;width:79px;text-align:center;font-size:17.5px;line-height:21px;color:#3a4250;font-weight:bold;">L</div>
<div style="left:151px;top:1042px;width:79px;height:32px;background:linear-gradient(#4d5d77,#3b4960 48%,#2f3b50 52%,#2b364a);border-radius:3px;box-shadow:inset 0 1px 0 #5c6c86;"></div>
<div class="t" style="left:151px;top:1047.5px;width:79px;text-align:center;font-size:17.5px;line-height:21px;color:#14171b;font-weight:bold;">E</div>
<div style="left:88.7px;top:1106px;width:3px;height:339px;background:#07080a;"></div>
<div style="left:97px;top:1114.4px;width:28.5px;height:1.3px;background:#4a525d;"></div>
<div class="t" style="left:100px;top:1105.5px;width:45px;text-align:right;font-size:15.5px;line-height:18.6px;color:#8a929c;font-weight:normal;">6</div>
<div style="left:97px;top:1181px;width:28.5px;height:1.3px;background:#4a525d;"></div>
<div class="t" style="left:100px;top:1172.1px;width:45px;text-align:right;font-size:15.5px;line-height:18.6px;color:#8a929c;font-weight:normal;">0</div>
<div style="left:97px;top:1242.4px;width:28.5px;height:1.3px;background:#4a525d;"></div>
<div class="t" style="left:100px;top:1233.5px;width:45px;text-align:right;font-size:15.5px;line-height:18.6px;color:#8a929c;font-weight:normal;">5</div>
<div style="left:97px;top:1288.9px;width:28.5px;height:1.3px;background:#4a525d;"></div>
<div class="t" style="left:100px;top:1280px;width:45px;text-align:right;font-size:15.5px;line-height:18.6px;color:#8a929c;font-weight:normal;">10</div>
<div style="left:97px;top:1324.9px;width:28.5px;height:1.3px;background:#4a525d;"></div>
<div class="t" style="left:100px;top:1316px;width:45px;text-align:right;font-size:15.5px;line-height:18.6px;color:#8a929c;font-weight:normal;">15</div>
<div style="left:97px;top:1349.9px;width:28.5px;height:1.3px;background:#4a525d;"></div>
<div class="t" style="left:100px;top:1341px;width:45px;text-align:right;font-size:15.5px;line-height:18.6px;color:#8a929c;font-weight:normal;">20</div>
<div style="left:97px;top:1383.4px;width:28.5px;height:1.3px;background:#4a525d;"></div>
<div class="t" style="left:100px;top:1374.5px;width:45px;text-align:right;font-size:15.5px;line-height:18.6px;color:#8a929c;font-weight:normal;">30</div>
<div style="left:97px;top:1404.4px;width:28.5px;height:1.3px;background:#4a525d;"></div>
<div class="t" style="left:100px;top:1395.5px;width:45px;text-align:right;font-size:15.5px;line-height:18.6px;color:#8a929c;font-weight:normal;">40</div>
<div style="left:97px;top:1429.4px;width:28.5px;height:1.3px;background:#4a525d;"></div>
<div class="t" style="left:100px;top:1420.5px;width:45px;text-align:right;font-size:15.5px;line-height:18.6px;color:#8a929c;font-weight:normal;">00</div>
<div style="left:97px;top:1418.5px;width:28.5px;height:1.3px;background:#4a525d;"></div>
<div style="left:72px;top:1169px;width:35px;height:66px;background:rgba(0,0,0,.45);border-radius:3px;filter:blur(1.5px);"></div>
<div style="left:73px;top:1170px;width:33.5px;height:64px;background:linear-gradient(#fdfeff 0%,#f0f5ff 14%,#7eaaf2 16%,#a8c6f8 40%,#dfe9fc 52%,#f4f7ff 82%,#74a4f0 86%,#e8f0ff 90%,#ffffff 100%);border:1px solid #e8eefc;border-radius:2px;"></div>
<div style="left:77px;top:1201px;width:26px;height:2px;background:#0a0c10;"></div>
<div style="left:158px;top:1091.5px;width:69px;height:367px;background:linear-gradient(#1e2126,#0a0b0d 8%,#000 14%);border:1.5px solid #3c444f;border-radius:5px;"></div>
<div class="t" style="left:161.7px;top:1106px;width:61.5px;text-align:center;font-size:15.5px;line-height:18.6px;color:#8a929c;font-weight:normal;">0</div>
<div style="left:163px;top:1118px;width:19px;height:1.2px;background:#666c74;"></div>
<div style="left:204px;top:1118px;width:19px;height:1.2px;background:#666c74;"></div>
<div style="left:161.7px;top:1143px;width:29px;height:310px;background:linear-gradient(#6af99e,#5eecc0 45%,#50dcf0 80%,#48d4ff);"></div>
<div style="left:192.7px;top:1143px;width:29.6px;height:310px;background:linear-gradient(#6af99e,#5eecc0 45%,#50dcf0 80%,#48d4ff);"></div>
<div style="left:161.7px;top:1164px;width:60.6px;height:1.2px;background:rgba(20,70,70,.55);"></div>
<div style="left:161.7px;top:1210.6px;width:60.6px;height:1.2px;background:rgba(20,70,70,.55);"></div>
<div style="left:161.7px;top:1256px;width:60.6px;height:1.2px;background:rgba(20,70,70,.55);"></div>
<div style="left:161.7px;top:1300.7px;width:60.6px;height:1.2px;background:rgba(20,70,70,.55);"></div>
<div style="left:161.7px;top:1341px;width:60.6px;height:1.2px;background:rgba(20,70,70,.55);"></div>
<div style="left:161.7px;top:1389px;width:60.6px;height:1.2px;background:rgba(20,70,70,.55);"></div>
<div style="left:161.7px;top:1420px;width:60.6px;height:1.2px;background:rgba(20,70,70,.55);"></div>
<div style="left:65px;top:1470px;width:169.6px;height:38px;background:#14171c;"></div>
<div class="t" style="left:65px;top:1480px;width:85px;text-align:center;font-size:15px;line-height:18px;color:#e8eaec;font-weight:bold;">−1.27</div>
<div class="t" style="left:150px;top:1480px;width:85px;text-align:center;font-size:15px;line-height:18px;color:#6c7480;font-weight:bold;">−36.6</div>
<div style="left:65.5px;top:1511.5px;width:168.5px;height:74.5px;background:#0f1216;border:1.5px solid #3c444f;border-radius:6px;"></div>
<div style="left:69.5px;top:1515px;width:79px;height:32px;background:linear-gradient(#4d5d77,#3b4960 48%,#2f3b50 52%,#2b364a);border-radius:3px;box-shadow:inset 0 1px 0 #5c6c86;"></div>
<div class="t" style="left:69.5px;top:1520.5px;width:79px;text-align:center;font-size:17.5px;line-height:21px;color:#14171b;font-weight:bold;">R</div>
<div style="left:151px;top:1515px;width:79px;height:32px;background:linear-gradient(#4d5d77,#3b4960 48%,#2f3b50 52%,#2b364a);border-radius:3px;box-shadow:inset 0 1px 0 #5c6c86;"></div>
<div class="t" style="left:151px;top:1520.5px;width:79px;text-align:center;font-size:17.5px;line-height:21px;color:#14171b;font-weight:bold;">W</div>
<div style="left:69.5px;top:1550.5px;width:79px;height:32px;background:linear-gradient(#4d5d77,#3b4960 48%,#2f3b50 52%,#2b364a);border-radius:3px;box-shadow:inset 0 1px 0 #5c6c86;"></div>
<svg style="left:99.5px;top:1558.5px;" width="18" height="16" viewBox="0 0 18 16"><path d="M2 5H6L11 1V15L6 11H2Z" fill="#1c2230"/></svg>
<div style="left:151px;top:1550.5px;width:79px;height:32px;background:linear-gradient(#4d5d77,#3b4960 48%,#2f3b50 52%,#2b364a);border-radius:3px;box-shadow:inset 0 1px 0 #5c6c86;"></div>
<div style="left:185.5px;top:1561.5px;width:10px;height:10px;background:#1c2230;border-radius:50%;"></div>
<svg style="left:266px;top:1765px;" width="20" height="20" viewBox="0 0 20 20"><circle cx="10" cy="10" r="5.5" fill="none" stroke="#6a727c" stroke-width="3.4"/><g stroke="#6a727c" stroke-width="3.2"><path d="M10 0V4M10 16V20M0 10H4M16 10H20M2.9 2.9L5.8 5.8M14.2 14.2L17.1 17.1M2.9 17.1L5.8 14.2M14.2 5.8L17.1 2.9"/></g></svg>
<div style="left:0px;top:1798.2px;width:3263px;height:1.8px;background:#f4f5f6;"></div>
<div style="left:303px;top:72px;width:424px;height:1719px;background:#252c36;border:3px solid #353e49;border-radius:12px;"></div>
<svg style="left:328px;top:93px;" width="22" height="19" viewBox="0 0 22 19"><rect x="1" y="1" width="19" height="16" fill="none" stroke="#4a525c" stroke-width="1.8"/><path d="M1 6.3H20M1 11.6H20" stroke="#4a525c" stroke-width="1.8"/></svg>
<div class="t" style="left:378px;top:91px;font-size:19px;line-height:22.8px;color:#6a7280;font-weight:bold;letter-spacing:1.3px;">67 / 67</div>
<svg style="left:636px;top:97px;" width="15" height="15" viewBox="0 0 15 15"><path d="M7.5 1V14M1 7.5H14" stroke="#7a828c" stroke-width="1.8"/></svg>
<svg style="left:670px;top:94px;" width="22" height="22" viewBox="0 0 22 22"><circle cx="13" cy="8" r="6" fill="none" stroke="#7a828c" stroke-width="2.2"/><path d="M9 12.5L2 19.5" stroke="#7a828c" stroke-width="2.8"/></svg>
<div style="left:314px;top:123px;width:403px;height:1641px;background:#15181c;"></div>
<div style="left:314px;top:122.7px;width:403px;height:1.3px;background:#59616b;"></div>
<div style="left:315px;top:124px;width:47px;height:102px;background:#8296b6;"></div>
<div style="left:362px;top:124px;width:336px;height:102px;background:#232a33;"></div>
<div style="left:698px;top:124px;width:19px;height:102px;background:#000;"></div>
<div style="left:376.5px;top:126.5px;width:76px;height:28.6px;background:#15181c;border-radius:4px;"></div>
<div style="left:377.5px;top:127.5px;width:36.5px;height:26.6px;background:linear-gradient(#50565f,#454b54);border-radius:3px 0 0 3px;"></div>
<div style="left:415.2px;top:127.5px;width:36.3px;height:26.6px;background:linear-gradient(#50565f,#454b54);border-radius:0 3px 3px 0;"></div>
<div class="t" style="left:377.5px;top:125.8px;width:36.5px;text-align:center;font-size:24px;line-height:28.8px;color:#050607;font-weight:bold;font-family:DejaVu Sans Mono,Liberation Mono,monospace;">m</div>
<div class="t" style="left:415.2px;top:128.7px;width:36.3px;text-align:center;font-size:19.5px;line-height:23.4px;color:#050607;font-weight:bold;font-family:DejaVu Sans,Liberation Sans,sans-serif;">S</div>
<div class="t" style="left:463.5px;top:131px;font-size:22px;line-height:26.4px;color:#f0f2f5;font-weight:bold;">Kick</div>
<svg style="left:319px;top:128px;" width="24" height="25" viewBox="0 0 24 25"><path d="M1 1L22 11.5L1 23Q5 11.5 1 1Z" fill="#e6ecf6"/></svg>
<div class="t" style="left:330px;top:134px;width:28px;text-align:right;font-size:17px;line-height:20.4px;color:#2c3444;font-weight:normal;">2</div>
<div style="left:589px;top:126.5px;width:81px;height:28.6px;background:#15181c;border-radius:5px;"></div>
<div style="left:590px;top:127.5px;width:79px;height:26.6px;background:linear-gradient(#50565f,#454b54);border-radius:4px;"></div>
<div style="left:602.5px;top:134.3px;width:13.5px;height:13.5px;background:#22272e;border-radius:50%;"></div>
<svg style="left:642px;top:133px;" width="14" height="16" viewBox="0 0 14 16"><path d="M1 5H4.5L10.5 0.5V15.5L4.5 11H1Z" fill="#22272e"/></svg>
<div style="left:461.7px;top:161.5px;width:38.3px;height:27.3px;background:#15181c;border-radius:5px;"></div>
<div style="left:462.7px;top:162.5px;width:36.3px;height:25.3px;background:linear-gradient(#50565f,#454b54);border-radius:4px;"></div>
<svg style="left:468.2px;top:171px;" width="26" height="12" viewBox="0 0 26 12"><rect x="1.2" y="1.2" width="23.5" height="9" fill="none" stroke="#050607" stroke-width="1.9"/><path d="M9 1V10M17 1V10" stroke="#050607" stroke-width="1.9"/></svg>
<div style="left:314px;top:226.2px;width:403px;height:1.3px;background:#59616b;"></div>
<div style="left:315px;top:227.5px;width:47px;height:70.2px;background:#8296b6;"></div>
<div style="left:362px;top:227.5px;width:336px;height:70.2px;background:#232a33;"></div>
<div style="left:698px;top:227.5px;width:19px;height:70.2px;background:#000;"></div>
<div style="left:376.5px;top:230px;width:76px;height:28.6px;background:#15181c;border-radius:4px;"></div>
<div style="left:377.5px;top:231px;width:36.5px;height:26.6px;background:linear-gradient(#50565f,#454b54);border-radius:3px 0 0 3px;"></div>
<div style="left:415.2px;top:231px;width:36.3px;height:26.6px;background:linear-gradient(#50565f,#454b54);border-radius:0 3px 3px 0;"></div>
<div class="t" style="left:377.5px;top:229.3px;width:36.5px;text-align:center;font-size:24px;line-height:28.8px;color:#050607;font-weight:bold;font-family:DejaVu Sans Mono,Liberation Mono,monospace;">m</div>
<div class="t" style="left:415.2px;top:232.2px;width:36.3px;text-align:center;font-size:19.5px;line-height:23.4px;color:#050607;font-weight:bold;font-family:DejaVu Sans,Liberation Sans,sans-serif;">S</div>
<div class="t" style="left:463.5px;top:234.5px;font-size:22px;line-height:26.4px;color:#f0f2f5;font-weight:bold;">Snare1</div>
<svg style="left:319px;top:231.5px;" width="24" height="25" viewBox="0 0 24 25"><path d="M1 1L22 11.5L1 23Q5 11.5 1 1Z" fill="#e6ecf6"/></svg>
<div class="t" style="left:330px;top:237.5px;width:28px;text-align:right;font-size:17px;line-height:20.4px;color:#2c3444;font-weight:normal;">3</div>
<div style="left:589px;top:230px;width:81px;height:28.6px;background:#15181c;border-radius:5px;"></div>
<div style="left:590px;top:231px;width:79px;height:26.6px;background:linear-gradient(#50565f,#454b54);border-radius:4px;"></div>
<div style="left:602.5px;top:237.8px;width:13.5px;height:13.5px;background:#22272e;border-radius:50%;"></div>
<svg style="left:642px;top:236.5px;" width="14" height="16" viewBox="0 0 14 16"><path d="M1 5H4.5L10.5 0.5V15.5L4.5 11H1Z" fill="#22272e"/></svg>
<div style="left:461.7px;top:265px;width:38.3px;height:27.3px;background:#15181c;border-radius:5px;"></div>
<div style="left:462.7px;top:266px;width:36.3px;height:25.3px;background:linear-gradient(#50565f,#454b54);border-radius:4px;"></div>
<svg style="left:468.2px;top:274.5px;" width="26" height="12" viewBox="0 0 26 12"><rect x="1.2" y="1.2" width="23.5" height="9" fill="none" stroke="#050607" stroke-width="1.9"/><path d="M9 1V10M17 1V10" stroke="#050607" stroke-width="1.9"/></svg>
<div style="left:314px;top:297.6px;width:403px;height:1.3px;background:#59616b;"></div>
<div style="left:315px;top:298.9px;width:47px;height:70.2px;background:#8296b6;"></div>
<div style="left:362px;top:298.9px;width:336px;height:70.2px;background:#232a33;"></div>
<div style="left:698px;top:298.9px;width:19px;height:70.2px;background:#000;"></div>
<div style="left:376.5px;top:301.4px;width:76px;height:28.6px;background:#15181c;border-radius:4px;"></div>
<div style="left:377.5px;top:302.4px;width:36.5px;height:26.6px;background:linear-gradient(#50565f,#454b54);border-radius:3px 0 0 3px;"></div>
<div style="left:415.2px;top:302.4px;width:36.3px;height:26.6px;background:linear-gradient(#50565f,#454b54);border-radius:0 3px 3px 0;"></div>
<div class="t" style="left:377.5px;top:300.7px;width:36.5px;text-align:center;font-size:24px;line-height:28.8px;color:#050607;font-weight:bold;font-family:DejaVu Sans Mono,Liberation Mono,monospace;">m</div>
<div class="t" style="left:415.2px;top:303.6px;width:36.3px;text-align:center;font-size:19.5px;line-height:23.4px;color:#050607;font-weight:bold;font-family:DejaVu Sans,Liberation Sans,sans-serif;">S</div>
<div class="t" style="left:463.5px;top:305.9px;font-size:22px;line-height:26.4px;color:#f0f2f5;font-weight:bold;">Snare2</div>
<svg style="left:319px;top:302.9px;" width="24" height="25" viewBox="0 0 24 25"><path d="M1 1L22 11.5L1 23Q5 11.5 1 1Z" fill="#e6ecf6"/></svg>
<div class="t" style="left:330px;top:308.9px;width:28px;text-align:right;font-size:17px;line-height:20.4px;color:#2c3444;font-weight:normal;">4</div>
<div style="left:589px;top:301.4px;width:81px;height:28.6px;background:#15181c;border-radius:5px;"></div>
<div style="left:590px;top:302.4px;width:79px;height:26.6px;background:linear-gradient(#50565f,#454b54);border-radius:4px;"></div>
<div style="left:602.5px;top:309.2px;width:13.5px;height:13.5px;background:#22272e;border-radius:50%;"></div>
<svg style="left:642px;top:307.9px;" width="14" height="16" viewBox="0 0 14 16"><path d="M1 5H4.5L10.5 0.5V15.5L4.5 11H1Z" fill="#22272e"/></svg>
<div style="left:461.7px;top:336.4px;width:38.3px;height:27.3px;background:#15181c;border-radius:5px;"></div>
<div style="left:462.7px;top:337.4px;width:36.3px;height:25.3px;background:linear-gradient(#50565f,#454b54);border-radius:4px;"></div>
<svg style="left:468.2px;top:345.9px;" width="26" height="12" viewBox="0 0 26 12"><rect x="1.2" y="1.2" width="23.5" height="9" fill="none" stroke="#050607" stroke-width="1.9"/><path d="M9 1V10M17 1V10" stroke="#050607" stroke-width="1.9"/></svg>
<div style="left:314px;top:369px;width:403px;height:1.3px;background:#59616b;"></div>
<div style="left:315px;top:370.3px;width:47px;height:70.2px;background:#8296b6;"></div>
<div style="left:362px;top:370.3px;width:336px;height:70.2px;background:#232a33;"></div>
<div style="left:698px;top:370.3px;width:19px;height:70.2px;background:#000;"></div>
<div style="left:376.5px;top:372.8px;width:76px;height:28.6px;background:#15181c;border-radius:4px;"></div>
<div style="left:377.5px;top:373.8px;width:36.5px;height:26.6px;background:linear-gradient(#50565f,#454b54);border-radius:3px 0 0 3px;"></div>
<div style="left:415.2px;top:373.8px;width:36.3px;height:26.6px;background:linear-gradient(#50565f,#454b54);border-radius:0 3px 3px 0;"></div>
<div class="t" style="left:377.5px;top:372.1px;width:36.5px;text-align:center;font-size:24px;line-height:28.8px;color:#050607;font-weight:bold;font-family:DejaVu Sans Mono,Liberation Mono,monospace;">m</div>
<div class="t" style="left:415.2px;top:375px;width:36.3px;text-align:center;font-size:19.5px;line-height:23.4px;color:#050607;font-weight:bold;font-family:DejaVu Sans,Liberation Sans,sans-serif;">S</div>
<div class="t" style="left:463.5px;top:377.3px;font-size:22px;line-height:26.4px;color:#f0f2f5;font-weight:bold;">HH</div>
<svg style="left:319px;top:374.3px;" width="24" height="25" viewBox="0 0 24 25"><path d="M1 1L22 11.5L1 23Q5 11.5 1 1Z" fill="#e6ecf6"/></svg>
<div class="t" style="left:330px;top:380.3px;width:28px;text-align:right;font-size:17px;line-height:20.4px;color:#2c3444;font-weight:normal;">5</div>
<div style="left:589px;top:372.8px;width:81px;height:28.6px;background:#15181c;border-radius:5px;"></div>
<div style="left:590px;top:373.8px;width:79px;height:26.6px;background:linear-gradient(#50565f,#454b54);border-radius:4px;"></div>
<div style="left:602.5px;top:380.6px;width:13.5px;height:13.5px;background:#22272e;border-radius:50%;"></div>
<svg style="left:642px;top:379.3px;" width="14" height="16" viewBox="0 0 14 16"><path d="M1 5H4.5L10.5 0.5V15.5L4.5 11H1Z" fill="#22272e"/></svg>
<div style="left:461.7px;top:407.8px;width:38.3px;height:27.3px;background:#15181c;border-radius:5px;"></div>
<div style="left:462.7px;top:408.8px;width:36.3px;height:25.3px;background:linear-gradient(#50565f,#454b54);border-radius:4px;"></div>
<svg style="left:468.2px;top:417.3px;" width="26" height="12" viewBox="0 0 26 12"><rect x="1.2" y="1.2" width="23.5" height="9" fill="none" stroke="#050607" stroke-width="1.9"/><path d="M9 1V10M17 1V10" stroke="#050607" stroke-width="1.9"/></svg>
<div style="left:314px;top:440.4px;width:403px;height:1.3px;background:#59616b;"></div>
<div style="left:315px;top:441.7px;width:47px;height:70.2px;background:#8296b6;"></div>
<div style="left:362px;top:441.7px;width:336px;height:70.2px;background:#232a33;"></div>
<div style="left:698px;top:441.7px;width:19px;height:70.2px;background:#000;"></div>
<div style="left:376.5px;top:444.2px;width:76px;height:28.6px;background:#15181c;border-radius:4px;"></div>
<div style="left:377.5px;top:445.2px;width:36.5px;height:26.6px;background:linear-gradient(#50565f,#454b54);border-radius:3px 0 0 3px;"></div>
<div style="left:415.2px;top:445.2px;width:36.3px;height:26.6px;background:linear-gradient(#50565f,#454b54);border-radius:0 3px 3px 0;"></div>
<div class="t" style="left:377.5px;top:443.5px;width:36.5px;text-align:center;font-size:24px;line-height:28.8px;color:#050607;font-weight:bold;font-family:DejaVu Sans Mono,Liberation Mono,monospace;">m</div>
<div class="t" style="left:415.2px;top:446.4px;width:36.3px;text-align:center;font-size:19.5px;line-height:23.4px;color:#050607;font-weight:bold;font-family:DejaVu Sans,Liberation Sans,sans-serif;">S</div>
<div class="t" style="left:463.5px;top:448.7px;font-size:22px;line-height:26.4px;color:#f0f2f5;font-weight:bold;">Hi Tom</div>
<svg style="left:319px;top:445.7px;" width="24" height="25" viewBox="0 0 24 25"><path d="M1 1L22 11.5L1 23Q5 11.5 1 1Z" fill="#e6ecf6"/></svg>
<div class="t" style="left:330px;top:451.7px;width:28px;text-align:right;font-size:17px;line-height:20.4px;color:#2c3444;font-weight:normal;">6</div>
<div style="left:589px;top:444.2px;width:81px;height:28.6px;background:#15181c;border-radius:5px;"></div>
<div style="left:590px;top:445.2px;width:79px;height:26.6px;background:linear-gradient(#50565f,#454b54);border-radius:4px;"></div>
<div style="left:602.5px;top:452px;width:13.5px;height:13.5px;background:#22272e;border-radius:50%;"></div>
<svg style="left:642px;top:450.7px;" width="14" height="16" viewBox="0 0 14 16"><path d="M1 5H4.5L10.5 0.5V15.5L4.5 11H1Z" fill="#22272e"/></svg>
<div style="left:461.7px;top:479.2px;width:38.3px;height:27.3px;background:#15181c;border-radius:5px;"></div>
<div style="left:462.7px;top:480.2px;width:36.3px;height:25.3px;background:linear-gradient(#50565f,#454b54);border-radius:4px;"></div>
<svg style="left:468.2px;top:488.7px;" width="26" height="12" viewBox="0 0 26 12"><rect x="1.2" y="1.2" width="23.5" height="9" fill="none" stroke="#050607" stroke-width="1.9"/><path d="M9 1V10M17 1V10" stroke="#050607" stroke-width="1.9"/></svg>
<div style="left:314px;top:511.8px;width:403px;height:1.3px;background:#59616b;"></div>
<div style="left:315px;top:513.1px;width:47px;height:70.2px;background:#8296b6;"></div>
<div style="left:362px;top:513.1px;width:336px;height:70.2px;background:#232a33;"></div>
<div style="left:698px;top:513.1px;width:19px;height:70.2px;background:#000;"></div>
<div style="left:376.5px;top:515.6px;width:76px;height:28.6px;background:#15181c;border-radius:4px;"></div>
<div style="left:377.5px;top:516.6px;width:36.5px;height:26.6px;background:linear-gradient(#50565f,#454b54);border-radius:3px 0 0 3px;"></div>
<div style="left:415.2px;top:516.6px;width:36.3px;height:26.6px;background:linear-gradient(#50565f,#454b54);border-radius:0 3px 3px 0;"></div>
<div class="t" style="left:377.5px;top:514.9px;width:36.5px;text-align:center;font-size:24px;line-height:28.8px;color:#050607;font-weight:bold;font-family:DejaVu Sans Mono,Liberation Mono,monospace;">m</div>
<div class="t" style="left:415.2px;top:517.8px;width:36.3px;text-align:center;font-size:19.5px;line-height:23.4px;color:#050607;font-weight:bold;font-family:DejaVu Sans,Liberation Sans,sans-serif;">S</div>
<div class="t" style="left:463.5px;top:520.1px;font-size:22px;line-height:26.4px;color:#f0f2f5;font-weight:bold;">Lo Tom</div>
<svg style="left:319px;top:517.1px;" width="24" height="25" viewBox="0 0 24 25"><path d="M1 1L22 11.5L1 23Q5 11.5 1 1Z" fill="#e6ecf6"/></svg>
<div class="t" style="left:330px;top:523.1px;width:28px;text-align:right;font-size:17px;line-height:20.4px;color:#2c3444;font-weight:normal;">7</div>
<div style="left:589px;top:515.6px;width:81px;height:28.6px;background:#15181c;border-radius:5px;"></div>
<div style="left:590px;top:516.6px;width:79px;height:26.6px;background:linear-gradient(#50565f,#454b54);border-radius:4px;"></div>
<div style="left:602.5px;top:523.4px;width:13.5px;height:13.5px;background:#22272e;border-radius:50%;"></div>
<svg style="left:642px;top:522.1px;" width="14" height="16" viewBox="0 0 14 16"><path d="M1 5H4.5L10.5 0.5V15.5L4.5 11H1Z" fill="#22272e"/></svg>
<div style="left:461.7px;top:550.6px;width:38.3px;height:27.3px;background:#15181c;border-radius:5px;"></div>
<div style="left:462.7px;top:551.6px;width:36.3px;height:25.3px;background:linear-gradient(#50565f,#454b54);border-radius:4px;"></div>
<svg style="left:468.2px;top:560.1px;" width="26" height="12" viewBox="0 0 26 12"><rect x="1.2" y="1.2" width="23.5" height="9" fill="none" stroke="#050607" stroke-width="1.9"/><path d="M9 1V10M17 1V10" stroke="#050607" stroke-width="1.9"/></svg>
<div style="left:314px;top:583.2px;width:403px;height:1.3px;background:#59616b;"></div>
<div style="left:315px;top:584.5px;width:47px;height:70.2px;background:#8296b6;"></div>
<div style="left:362px;top:584.5px;width:336px;height:70.2px;background:#232a33;"></div>
<div style="left:698px;top:584.5px;width:19px;height:70.2px;background:#000;"></div>
<div style="left:376.5px;top:587px;width:76px;height:28.6px;background:#15181c;border-radius:4px;"></div>
<div style="left:377.5px;top:588px;width:36.5px;height:26.6px;background:linear-gradient(#50565f,#454b54);border-radius:3px 0 0 3px;"></div>
<div style="left:415.2px;top:588px;width:36.3px;height:26.6px;background:linear-gradient(#50565f,#454b54);border-radius:0 3px 3px 0;"></div>
<div class="t" style="left:377.5px;top:586.3px;width:36.5px;text-align:center;font-size:24px;line-height:28.8px;color:#050607;font-weight:bold;font-family:DejaVu Sans Mono,Liberation Mono,monospace;">m</div>
<div class="t" style="left:415.2px;top:589.2px;width:36.3px;text-align:center;font-size:19.5px;line-height:23.4px;color:#050607;font-weight:bold;font-family:DejaVu Sans,Liberation Sans,sans-serif;">S</div>
<div class="t" style="left:463.5px;top:591.5px;font-size:22px;line-height:26.4px;color:#f0f2f5;font-weight:bold;">OH L</div>
<svg style="left:319px;top:588.5px;" width="24" height="25" viewBox="0 0 24 25"><path d="M1 1L22 11.5L1 23Q5 11.5 1 1Z" fill="#e6ecf6"/></svg>
<div class="t" style="left:330px;top:594.5px;width:28px;text-align:right;font-size:17px;line-height:20.4px;color:#2c3444;font-weight:normal;">8</div>
<div style="left:589px;top:587px;width:81px;height:28.6px;background:#15181c;border-radius:5px;"></div>
<div style="left:590px;top:588px;width:79px;height:26.6px;background:linear-gradient(#50565f,#454b54);border-radius:4px;"></div>
<div style="left:602.5px;top:594.8px;width:13.5px;height:13.5px;background:#22272e;border-radius:50%;"></div>
<svg style="left:642px;top:593.5px;" width="14" height="16" viewBox="0 0 14 16"><path d="M1 5H4.5L10.5 0.5V15.5L4.5 11H1Z" fill="#22272e"/></svg>
<div style="left:461.7px;top:622px;width:38.3px;height:27.3px;background:#15181c;border-radius:5px;"></div>
<div style="left:462.7px;top:623px;width:36.3px;height:25.3px;background:linear-gradient(#50565f,#454b54);border-radius:4px;"></div>
<svg style="left:468.2px;top:631.5px;" width="26" height="12" viewBox="0 0 26 12"><rect x="1.2" y="1.2" width="23.5" height="9" fill="none" stroke="#050607" stroke-width="1.9"/><path d="M9 1V10M17 1V10" stroke="#050607" stroke-width="1.9"/></svg>
<div style="left:314px;top:654.6px;width:403px;height:1.3px;background:#59616b;"></div>
<div style="left:315px;top:655.9px;width:47px;height:70.2px;background:#8296b6;"></div>
<div style="left:362px;top:655.9px;width:336px;height:70.2px;background:#232a33;"></div>
<div style="left:698px;top:655.9px;width:19px;height:70.2px;background:#000;"></div>
<div style="left:376.5px;top:658.4px;width:76px;height:28.6px;background:#15181c;border-radius:4px;"></div>
<div style="left:377.5px;top:659.4px;width:36.5px;height:26.6px;background:linear-gradient(#50565f,#454b54);border-radius:3px 0 0 3px;"></div>
<div style="left:415.2px;top:659.4px;width:36.3px;height:26.6px;background:linear-gradient(#50565f,#454b54);border-radius:0 3px 3px 0;"></div>
<div class="t" style="left:377.5px;top:657.7px;width:36.5px;text-align:center;font-size:24px;line-height:28.8px;color:#050607;font-weight:bold;font-family:DejaVu Sans Mono,Liberation Mono,monospace;">m</div>
<div class="t" style="left:415.2px;top:660.6px;width:36.3px;text-align:center;font-size:19.5px;line-height:23.4px;color:#050607;font-weight:bold;font-family:DejaVu Sans,Liberation Sans,sans-serif;">S</div>
<div class="t" style="left:463.5px;top:662.9px;font-size:22px;line-height:26.4px;color:#f0f2f5;font-weight:bold;">OH R</div>
<svg style="left:319px;top:659.9px;" width="24" height="25" viewBox="0 0 24 25"><path d="M1 1L22 11.5L1 23Q5 11.5 1 1Z" fill="#e6ecf6"/></svg>
<div class="t" style="left:330px;top:665.9px;width:28px;text-align:right;font-size:17px;line-height:20.4px;color:#2c3444;font-weight:normal;">9</div>
<div style="left:589px;top:658.4px;width:81px;height:28.6px;background:#15181c;border-radius:5px;"></div>
<div style="left:590px;top:659.4px;width:79px;height:26.6px;background:linear-gradient(#50565f,#454b54);border-radius:4px;"></div>
<div style="left:602.5px;top:666.2px;width:13.5px;height:13.5px;background:#22272e;border-radius:50%;"></div>
<svg style="left:642px;top:664.9px;" width="14" height="16" viewBox="0 0 14 16"><path d="M1 5H4.5L10.5 0.5V15.5L4.5 11H1Z" fill="#22272e"/></svg>
<div style="left:461.7px;top:693.4px;width:38.3px;height:27.3px;background:#15181c;border-radius:5px;"></div>
<div style="left:462.7px;top:694.4px;width:36.3px;height:25.3px;background:linear-gradient(#50565f,#454b54);border-radius:4px;"></div>
<svg style="left:468.2px;top:702.9px;" width="26" height="12" viewBox="0 0 26 12"><rect x="1.2" y="1.2" width="23.5" height="9" fill="none" stroke="#050607" stroke-width="1.9"/><path d="M9 1V10M17 1V10" stroke="#050607" stroke-width="1.9"/></svg>
<div style="left:314px;top:726px;width:403px;height:1.3px;background:#59616b;"></div>
<div style="left:315px;top:727.3px;width:47px;height:70.2px;background:#8296b6;"></div>
<div style="left:362px;top:727.3px;width:336px;height:70.2px;background:#232a33;"></div>
<div style="left:698px;top:727.3px;width:19px;height:70.2px;background:#000;"></div>
<div style="left:376.5px;top:729.8px;width:76px;height:28.6px;background:#15181c;border-radius:4px;"></div>
<div style="left:377.5px;top:730.8px;width:36.5px;height:26.6px;background:linear-gradient(#50565f,#454b54);border-radius:3px 0 0 3px;"></div>
<div style="left:415.2px;top:730.8px;width:36.3px;height:26.6px;background:linear-gradient(#50565f,#454b54);border-radius:0 3px 3px 0;"></div>
<div class="t" style="left:377.5px;top:729.1px;width:36.5px;text-align:center;font-size:24px;line-height:28.8px;color:#050607;font-weight:bold;font-family:DejaVu Sans Mono,Liberation Mono,monospace;">m</div>
<div class="t" style="left:415.2px;top:732px;width:36.3px;text-align:center;font-size:19.5px;line-height:23.4px;color:#050607;font-weight:bold;font-family:DejaVu Sans,Liberation Sans,sans-serif;">S</div>
<div class="t" style="left:463.5px;top:734.3px;font-size:22px;line-height:26.4px;color:#f0f2f5;font-weight:bold;">Overheads</div>
<svg style="left:319px;top:731.3px;" width="22" height="26" viewBox="0 0 22 26"><path d="M2 1V12H19V1M10.5 1V25" fill="none" stroke="#f2f4f6" stroke-width="4"/></svg>
<div class="t" style="left:330px;top:737.3px;width:30px;text-align:right;font-size:17px;line-height:20.4px;color:#39414f;font-weight:normal;">10</div>
<div style="left:633px;top:733.8px;width:38px;height:24.5px;background:linear-gradient(#7ab4fc,#5a98ee);border-radius:3px 0 0 3px;"></div>
<div style="left:671px;top:733.8px;width:27px;height:24.5px;background:linear-gradient(#50565f,#454b54);"></div>
<svg style="left:640px;top:738.3px;" width="26" height="16" viewBox="0 0 26 16"><path d="M0 8H8M17 8H25" stroke="#0a0c10" stroke-width="1.8"/><rect x="8" y="3.5" width="9" height="9" fill="none" stroke="#0a0c10" stroke-width="1.8"/></svg>
<div style="left:461.7px;top:766.3px;width:79px;height:27px;background:#15181c;border-radius:5px;"></div>
<div style="left:462.7px;top:767.3px;width:77px;height:25px;background:linear-gradient(#50565f,#454b54);border-radius:4px;"></div>
<div class="t" style="left:462.7px;top:768.8px;width:38px;text-align:center;font-size:18.5px;line-height:22.2px;color:#050607;font-weight:bold;font-family:DejaVu Sans,Liberation Sans,sans-serif;">R</div>
<div class="t" style="left:500.7px;top:768.8px;width:38px;text-align:center;font-size:18.5px;line-height:22.2px;color:#050607;font-weight:bold;font-family:DejaVu Sans,Liberation Sans,sans-serif;transform:scaleX(.72);">W</div>
<div style="left:544.8px;top:766.3px;width:132px;height:27px;background:#15181c;border-radius:5px;"></div>
<div style="left:545.8px;top:767.3px;width:130px;height:25px;background:linear-gradient(#50565f,#454b54);border-radius:4px;"></div>
<div class="t" style="left:552px;top:769.3px;font-size:18.5px;line-height:22.2px;color:#050607;font-weight:normal;">Volume</div>
<div style="left:314px;top:797.4px;width:403px;height:1.3px;background:#59616b;"></div>
<div style="left:315px;top:798.7px;width:47px;height:70.2px;background:#4a62ec;"></div>
<div style="left:362px;top:798.7px;width:336px;height:70.2px;background:#232a33;"></div>
<div style="left:698px;top:798.7px;width:19px;height:70.2px;background:#000;"></div>
<div style="left:376.5px;top:801.2px;width:76px;height:28.6px;background:#15181c;border-radius:4px;"></div>
<div style="left:377.5px;top:802.2px;width:36.5px;height:26.6px;background:linear-gradient(#50565f,#454b54);border-radius:3px 0 0 3px;"></div>
<div style="left:415.2px;top:802.2px;width:36.3px;height:26.6px;background:linear-gradient(#50565f,#454b54);border-radius:0 3px 3px 0;"></div>
<div class="t" style="left:377.5px;top:800.5px;width:36.5px;text-align:center;font-size:24px;line-height:28.8px;color:#050607;font-weight:bold;font-family:DejaVu Sans Mono,Liberation Mono,monospace;">m</div>
<div class="t" style="left:415.2px;top:803.4px;width:36.3px;text-align:center;font-size:19.5px;line-height:23.4px;color:#050607;font-weight:bold;font-family:DejaVu Sans,Liberation Sans,sans-serif;">S</div>
<div class="t" style="left:463.5px;top:805.7px;font-size:22px;line-height:26.4px;color:#f0f2f5;font-weight:bold;">bass</div>
<svg style="left:319px;top:802.7px;" width="24" height="25" viewBox="0 0 24 25"><path d="M1 1L22 11.5L1 23Q5 11.5 1 1Z" fill="#c8d2fc"/></svg>
<div class="t" style="left:330px;top:808.7px;width:28px;text-align:right;font-size:17px;line-height:20.4px;color:#1c2a80;font-weight:normal;">11</div>
<div style="left:589px;top:801.2px;width:81px;height:28.6px;background:#15181c;border-radius:5px;"></div>
<div style="left:590px;top:802.2px;width:79px;height:26.6px;background:linear-gradient(#50565f,#454b54);border-radius:4px;"></div>
<div style="left:602.5px;top:809px;width:13.5px;height:13.5px;background:#22272e;border-radius:50%;"></div>
<svg style="left:642px;top:807.7px;" width="14" height="16" viewBox="0 0 14 16"><path d="M1 5H4.5L10.5 0.5V15.5L4.5 11H1Z" fill="#22272e"/></svg>
<div style="left:461.7px;top:836.2px;width:38.3px;height:27.3px;background:#15181c;border-radius:5px;"></div>
<div style="left:462.7px;top:837.2px;width:36.3px;height:25.3px;background:linear-gradient(#50565f,#454b54);border-radius:4px;"></div>
<svg style="left:468.2px;top:845.7px;" width="26" height="12" viewBox="0 0 26 12"><rect x="1.2" y="1.2" width="23.5" height="9" fill="none" stroke="#050607" stroke-width="1.9"/><path d="M9 1V10M17 1V10" stroke="#050607" stroke-width="1.9"/></svg>
<div style="left:314px;top:868.8px;width:403px;height:1.3px;background:#59616b;"></div>
<div style="left:315px;top:870.1px;width:47px;height:70.2px;background:#d62428;"></div>
<div style="left:362px;top:870.1px;width:336px;height:70.2px;background:#232a33;"></div>
<div style="left:698px;top:870.1px;width:19px;height:70.2px;background:#000;"></div>
<div style="left:376.5px;top:872.6px;width:76px;height:28.6px;background:#15181c;border-radius:4px;"></div>
<div style="left:377.5px;top:873.6px;width:36.5px;height:26.6px;background:linear-gradient(#50565f,#454b54);border-radius:3px 0 0 3px;"></div>
<div style="left:415.2px;top:873.6px;width:36.3px;height:26.6px;background:linear-gradient(#50565f,#454b54);border-radius:0 3px 3px 0;"></div>
<div class="t" style="left:377.5px;top:871.9px;width:36.5px;text-align:center;font-size:24px;line-height:28.8px;color:#050607;font-weight:bold;font-family:DejaVu Sans Mono,Liberation Mono,monospace;">m</div>
<div class="t" style="left:415.2px;top:874.8px;width:36.3px;text-align:center;font-size:19.5px;line-height:23.4px;color:#050607;font-weight:bold;font-family:DejaVu Sans,Liberation Sans,sans-serif;">S</div>
<div class="t" style="left:463.5px;top:877.1px;font-size:22px;line-height:26.4px;color:#f0f2f5;font-weight:bold;">Perc</div>
<svg style="left:331px;top:877.1px;" width="30" height="26" viewBox="0 0 30 26"><path d="M1.5 23V3.5Q1.5 1.5 3.5 1.5H10L13 5H24Q26 5 26 7V23Z" fill="#f6b8ba" stroke="#fdfdfd" stroke-width="1.6" stroke-linejoin="round"/><path d="M1.5 8H26" stroke="#fdfdfd" stroke-width="1.4"/></svg>
<div style="left:589px;top:872.6px;width:81px;height:28.6px;background:#15181c;border-radius:5px;"></div>
<div style="left:590px;top:873.6px;width:79px;height:26.6px;background:linear-gradient(#50565f,#454b54);border-radius:4px;"></div>
<div style="left:602.5px;top:880.4px;width:13.5px;height:13.5px;background:#050607;border-radius:50%;"></div>
<svg style="left:642px;top:879.1px;" width="14" height="16" viewBox="0 0 14 16"><path d="M1 5H4.5L10.5 0.5V15.5L4.5 11H1Z" fill="#050607"/></svg>
<div style="left:314px;top:940.2px;width:403px;height:1.3px;background:#59616b;"></div>
<div style="left:315px;top:941.5px;width:47px;height:70.2px;background:#da6c1c;"></div>
<div style="left:362px;top:941.5px;width:336px;height:70.2px;background:#232a33;"></div>
<div style="left:698px;top:941.5px;width:19px;height:70.2px;background:#000;"></div>
<div style="left:376.5px;top:944px;width:76px;height:28.6px;background:#15181c;border-radius:4px;"></div>
<div style="left:377.5px;top:945px;width:36.5px;height:26.6px;background:linear-gradient(#50565f,#454b54);border-radius:3px 0 0 3px;"></div>
<div style="left:415.2px;top:945px;width:36.3px;height:26.6px;background:linear-gradient(#50565f,#454b54);border-radius:0 3px 3px 0;"></div>
<div class="t" style="left:377.5px;top:943.3px;width:36.5px;text-align:center;font-size:24px;line-height:28.8px;color:#050607;font-weight:bold;font-family:DejaVu Sans Mono,Liberation Mono,monospace;">m</div>
<div class="t" style="left:415.2px;top:946.2px;width:36.3px;text-align:center;font-size:19.5px;line-height:23.4px;color:#050607;font-weight:bold;font-family:DejaVu Sans,Liberation Sans,sans-serif;">S</div>
<div class="t" style="left:463.5px;top:948.5px;font-size:22px;line-height:26.4px;color:#f0f2f5;font-weight:bold;">ELEC GIT</div>
<svg style="left:331px;top:948.5px;" width="30" height="26" viewBox="0 0 30 26"><path d="M1.5 23V3.5Q1.5 1.5 3.5 1.5H10L13 5H24Q26 5 26 7V23Z" fill="#f8d6b8" stroke="#fdfdfd" stroke-width="1.6" stroke-linejoin="round"/><path d="M1.5 8H26" stroke="#fdfdfd" stroke-width="1.4"/></svg>
<div style="left:589px;top:944px;width:81px;height:28.6px;background:#15181c;border-radius:5px;"></div>
<div style="left:590px;top:945px;width:79px;height:26.6px;background:linear-gradient(#50565f,#454b54);border-radius:4px;"></div>
<div style="left:602.5px;top:951.8px;width:13.5px;height:13.5px;background:#050607;border-radius:50%;"></div>
<svg style="left:642px;top:950.5px;" width="14" height="16" viewBox="0 0 14 16"><path d="M1 5H4.5L10.5 0.5V15.5L4.5 11H1Z" fill="#050607"/></svg>
<div style="left:314px;top:1011.6px;width:403px;height:1.3px;background:#59616b;"></div>
<div style="left:315px;top:1012.9px;width:47px;height:70.2px;background:#e0b200;"></div>
<div style="left:362px;top:1012.9px;width:336px;height:70.2px;background:#232a33;"></div>
<div style="left:698px;top:1012.9px;width:19px;height:70.2px;background:#000;"></div>
<div style="left:376.5px;top:1015.4px;width:76px;height:28.6px;background:#15181c;border-radius:4px;"></div>
<div style="left:377.5px;top:1016.4px;width:36.5px;height:26.6px;background:linear-gradient(#50565f,#454b54);border-radius:3px 0 0 3px;"></div>
<div style="left:415.2px;top:1016.4px;width:36.3px;height:26.6px;background:linear-gradient(#50565f,#454b54);border-radius:0 3px 3px 0;"></div>
<div class="t" style="left:377.5px;top:1014.7px;width:36.5px;text-align:center;font-size:24px;line-height:28.8px;color:#050607;font-weight:bold;font-family:DejaVu Sans Mono,Liberation Mono,monospace;">m</div>
<div class="t" style="left:415.2px;top:1017.6px;width:36.3px;text-align:center;font-size:19.5px;line-height:23.4px;color:#050607;font-weight:bold;font-family:DejaVu Sans,Liberation Sans,sans-serif;">S</div>
<div class="t" style="left:463.5px;top:1019.9px;font-size:22px;line-height:26.4px;color:#f0f2f5;font-weight:bold;">Ac REAL</div>
<svg style="left:331px;top:1019.9px;" width="30" height="26" viewBox="0 0 30 26"><path d="M1.5 23V3.5Q1.5 1.5 3.5 1.5H10L13 5H24Q26 5 26 7V23Z" fill="#f8ec98" stroke="#fdfdfd" stroke-width="1.6" stroke-linejoin="round"/><path d="M1.5 8H26" stroke="#fdfdfd" stroke-width="1.4"/></svg>
<div style="left:589px;top:1015.4px;width:81px;height:28.6px;background:#15181c;border-radius:5px;"></div>
<div style="left:590px;top:1016.4px;width:79px;height:26.6px;background:linear-gradient(#50565f,#454b54);border-radius:4px;"></div>
<div style="left:602.5px;top:1023.2px;width:13.5px;height:13.5px;background:#050607;border-radius:50%;"></div>
<svg style="left:642px;top:1021.9px;" width="14" height="16" viewBox="0 0 14 16"><path d="M1 5H4.5L10.5 0.5V15.5L4.5 11H1Z" fill="#050607"/></svg>
<div style="left:314px;top:1083px;width:403px;height:1.3px;background:#59616b;"></div>
<div style="left:315px;top:1084.3px;width:47px;height:309px;background:#3f95e9;"></div>
<div style="left:362px;top:1084.3px;width:303.6px;height:309px;background:#232a33;"></div>
<div style="left:376.5px;top:1089.1px;width:76px;height:28.6px;background:#15181c;border-radius:4px;"></div>
<div style="left:377.5px;top:1090.1px;width:36.5px;height:26.6px;background:linear-gradient(#50565f,#454b54);border-radius:3px 0 0 3px;"></div>
<div style="left:415.2px;top:1090.1px;width:36.3px;height:26.6px;background:linear-gradient(#50565f,#454b54);border-radius:0 3px 3px 0;"></div>
<div class="t" style="left:377.5px;top:1088.4px;width:36.5px;text-align:center;font-size:24px;line-height:28.8px;color:#050607;font-weight:bold;font-family:DejaVu Sans Mono,Liberation Mono,monospace;">m</div>
<div class="t" style="left:415.2px;top:1091.3px;width:36.3px;text-align:center;font-size:19.5px;line-height:23.4px;color:#050607;font-weight:bold;font-family:DejaVu Sans,Liberation Sans,sans-serif;">S</div>
<div class="t" style="left:463.5px;top:1093.6px;font-size:22px;line-height:26.4px;color:#f0f2f5;font-weight:bold;">Piano</div>
<svg style="left:319px;top:1091.6px;" width="24" height="26" viewBox="0 0 24 26"><rect x="1" y="1" width="20" height="5" fill="#dcecfc"/><rect x="1" y="10" width="12" height="5" fill="#dcecfc"/><rect x="8" y="18" width="9" height="5" fill="#dcecfc"/></svg>
<div class="t" style="left:330px;top:1094.6px;width:29px;text-align:right;font-size:18px;line-height:21.6px;color:#14305c;font-weight:normal;letter-spacing:1.5px;">32</div>
<div style="left:589px;top:1089.1px;width:77px;height:28.6px;background:#15181c;border-radius:5px 0 0 5px;"></div>
<div style="left:590px;top:1090.1px;width:76px;height:26.6px;background:linear-gradient(#50565f,#454b54);border-radius:4px 0 0 4px;"></div>
<div style="left:602.5px;top:1096.9px;width:13.5px;height:13.5px;background:#050607;border-radius:50%;"></div>
<svg style="left:642px;top:1096.6px;" width="14" height="14" viewBox="0 0 14 14"><path d="M2 3L12 10V13L2 6Z" fill="#050607"/></svg>
<div style="left:461.7px;top:1125.1px;width:81px;height:27.5px;background:#15181c;border-radius:5px;"></div>
<div style="left:462.7px;top:1126.1px;width:79px;height:25.5px;background:linear-gradient(#50565f,#454b54);border-radius:4px;"></div>
<svg style="left:469px;top:1130.6px;" width="24" height="16" viewBox="0 0 24 16"><path d="M0 8H7M16 8H23" stroke="#050607" stroke-width="1.7"/><rect x="7" y="4" width="9" height="8" fill="none" stroke="#050607" stroke-width="1.7"/></svg>
<svg style="left:511px;top:1129.6px;" width="24" height="16" viewBox="0 0 24 16"><path d="M0 13H24M4 8H8M17 8H22" stroke="#050607" stroke-width="1.7"/><rect x="8" y="3" width="9" height="7" fill="none" stroke="#050607" stroke-width="1.7"/></svg>
<div style="left:547px;top:1125.1px;width:38.3px;height:27.3px;background:#15181c;border-radius:5px;"></div>
<div style="left:548px;top:1126.1px;width:36.3px;height:25.3px;background:linear-gradient(#50565f,#454b54);border-radius:4px;"></div>
<svg style="left:553.5px;top:1134.6px;" width="26" height="12" viewBox="0 0 26 12"><rect x="1.2" y="1.2" width="23.5" height="9" fill="none" stroke="#050607" stroke-width="1.9"/><path d="M9 1V10M17 1V10" stroke="#050607" stroke-width="1.9"/></svg>
<div style="left:589.5px;top:1125.1px;width:38px;height:27.5px;background:#15181c;border-radius:5px;"></div>
<div style="left:590.5px;top:1126.1px;width:36px;height:25.5px;background:linear-gradient(#50565f,#454b54);border-radius:4px;"></div>
<svg style="left:597px;top:1128.6px;" width="24" height="22" viewBox="0 0 24 22"><path d="M3 18L15 5" stroke="#2a2f36" stroke-width="5.5" stroke-linecap="round"/><path d="M3 18L15 5" stroke="#50565f" stroke-width="2.6" stroke-linecap="round"/><circle cx="17.5" cy="4" r="2.6" fill="none" stroke="#2a2f36" stroke-width="1.4"/></svg>
<div style="left:632px;top:1125.1px;width:34px;height:27.5px;background:#15181c;border-radius:5px 0 0 5px;"></div>
<div style="left:633px;top:1126.1px;width:33px;height:25.5px;background:linear-gradient(#50565f,#454b54);border-radius:4px 0 0 4px;"></div>
<svg style="left:637px;top:1131.6px;" width="30" height="16" viewBox="0 0 30 16"><path d="M9 1L2 7.5L9 14" fill="none" stroke="#050607" stroke-width="3"/><circle cx="22" cy="7.5" r="7" fill="#050607"/><path d="M22 2V7.5H28" fill="none" stroke="#50565f" stroke-width="1.8"/></svg>
<div style="left:665.6px;top:1084.3px;width:51.4px;height:309px;background:#9b9da1;"></div>
<div style="left:665.6px;top:1119.7px;width:51.4px;height:1.6px;background:#6c6e72;"></div>
<div style="left:665.6px;top:1106.1px;width:51.4px;height:1.6px;background:#6c6e72;"></div>
<div style="left:665.6px;top:1092.5px;width:51.4px;height:1.6px;background:#6c6e72;"></div>
<div style="left:665.6px;top:1101.9px;width:28.5px;height:10px;background:#484b4f;"></div>
<div style="left:665.6px;top:1088.3px;width:28.5px;height:10px;background:#484b4f;"></div>
<div style="left:665.6px;top:1214.9px;width:51.4px;height:1.6px;background:#6c6e72;"></div>
<div style="left:665.6px;top:1201.3px;width:51.4px;height:1.6px;background:#6c6e72;"></div>
<div style="left:665.6px;top:1187.7px;width:51.4px;height:1.6px;background:#6c6e72;"></div>
<div style="left:665.6px;top:1174.1px;width:51.4px;height:1.6px;background:#6c6e72;"></div>
<div style="left:665.6px;top:1160.5px;width:51.4px;height:1.6px;background:#6c6e72;"></div>
<div style="left:665.6px;top:1146.9px;width:51.4px;height:1.6px;background:#6c6e72;"></div>
<div style="left:665.6px;top:1133.3px;width:51.4px;height:1.6px;background:#6c6e72;"></div>
<div style="left:665.6px;top:1197.1px;width:28.5px;height:10px;background:#484b4f;"></div>
<div style="left:665.6px;top:1183.5px;width:28.5px;height:10px;background:#484b4f;"></div>
<div style="left:665.6px;top:1156.3px;width:28.5px;height:10px;background:#484b4f;"></div>
<div style="left:665.6px;top:1142.7px;width:28.5px;height:10px;background:#484b4f;"></div>
<div style="left:665.6px;top:1129.1px;width:28.5px;height:10px;background:#484b4f;"></div>
<div style="left:665.6px;top:1310.1px;width:51.4px;height:1.6px;background:#6c6e72;"></div>
<div style="left:665.6px;top:1296.5px;width:51.4px;height:1.6px;background:#6c6e72;"></div>
<div style="left:665.6px;top:1282.9px;width:51.4px;height:1.6px;background:#6c6e72;"></div>
<div style="left:665.6px;top:1269.3px;width:51.4px;height:1.6px;background:#6c6e72;"></div>
<div style="left:665.6px;top:1255.7px;width:51.4px;height:1.6px;background:#6c6e72;"></div>
<div style="left:665.6px;top:1242.1px;width:51.4px;height:1.6px;background:#6c6e72;"></div>
<div style="left:665.6px;top:1228.5px;width:51.4px;height:1.6px;background:#6c6e72;"></div>
<div style="left:665.6px;top:1292.3px;width:28.5px;height:10px;background:#484b4f;"></div>
<div style="left:665.6px;top:1278.7px;width:28.5px;height:10px;background:#484b4f;"></div>
<div style="left:665.6px;top:1251.5px;width:28.5px;height:10px;background:#484b4f;"></div>
<div style="left:665.6px;top:1237.9px;width:28.5px;height:10px;background:#484b4f;"></div>
<div style="left:665.6px;top:1224.3px;width:28.5px;height:10px;background:#484b4f;"></div>
<div style="left:665.6px;top:1350.9px;width:51.4px;height:1.6px;background:#6c6e72;"></div>
<div style="left:665.6px;top:1337.3px;width:51.4px;height:1.6px;background:#6c6e72;"></div>
<div style="left:665.6px;top:1323.7px;width:51.4px;height:1.6px;background:#6c6e72;"></div>
<div style="left:665.6px;top:1346.7px;width:28.5px;height:10px;background:#484b4f;"></div>
<div style="left:665.6px;top:1333.1px;width:28.5px;height:10px;background:#484b4f;"></div>
<div style="left:665.6px;top:1319.5px;width:28.5px;height:10px;background:#484b4f;"></div>
<div class="t" style="left:685.6px;top:1101.5px;width:31px;text-align:right;font-size:17.5px;line-height:21px;color:#14161a;font-weight:normal;">C4</div>
<div class="t" style="left:685.6px;top:1196.5px;width:31px;text-align:right;font-size:17.5px;line-height:21px;color:#14161a;font-weight:normal;">C3</div>
<div class="t" style="left:685.6px;top:1291.5px;width:31px;text-align:right;font-size:17.5px;line-height:21px;color:#14161a;font-weight:normal;">C2</div>
<div style="left:665.6px;top:1356.3px;width:51.4px;height:37px;background:#9b9da1;"></div>
<svg style="left:691px;top:1367.3px;" width="24" height="20" viewBox="0 0 24 20"><path d="M1 1H16L22 7V17H1Z" fill="none" stroke="#4a4d52" stroke-width="1.5"/><path d="M16 1V7H22" fill="none" stroke="#4a4d52" stroke-width="1.5"/></svg>
<div style="left:314px;top:1393.5px;width:403px;height:1.3px;background:#59616b;"></div>
<div style="left:315px;top:1394.8px;width:66px;height:70.2px;background:#3f95e9;"></div>
<div style="left:381px;top:1394.8px;width:317px;height:70.2px;background:#232a33;"></div>
<div style="left:698px;top:1394.8px;width:19px;height:70.2px;background:#000;"></div>
<svg style="left:345px;top:1400.8px;" width="34" height="30" viewBox="0 0 34 30"><path d="M2 25V3H11L14 6H26V11" fill="none" stroke="#f4f6f8" stroke-width="1.8"/><path d="M2 25L8 11H32L26 25Z" fill="#3f95e9" stroke="#f4f6f8" stroke-width="1.8" stroke-linejoin="round"/></svg>
<div style="left:395.5px;top:1397.8px;width:76px;height:28.6px;background:#15181c;border-radius:4px;"></div>
<div style="left:396.5px;top:1398.8px;width:36.5px;height:26.6px;background:linear-gradient(#50565f,#454b54);border-radius:3px 0 0 3px;"></div>
<div style="left:434.2px;top:1398.8px;width:36.3px;height:26.6px;background:linear-gradient(#50565f,#454b54);border-radius:0 3px 3px 0;"></div>
<div class="t" style="left:396.5px;top:1397.1px;width:36.5px;text-align:center;font-size:24px;line-height:28.8px;color:#050607;font-weight:bold;font-family:DejaVu Sans Mono,Liberation Mono,monospace;">m</div>
<div class="t" style="left:434.2px;top:1400px;width:36.3px;text-align:center;font-size:19.5px;line-height:23.4px;color:#050607;font-weight:bold;font-family:DejaVu Sans,Liberation Sans,sans-serif;">S</div>
<div class="t" style="left:482px;top:1402.3px;font-size:21px;line-height:25.2px;color:#f0f2f5;font-weight:bold;">VOCAL</div>
<div style="left:608px;top:1397.8px;width:81px;height:28.6px;background:#15181c;border-radius:5px;"></div>
<div style="left:609px;top:1398.8px;width:79px;height:26.6px;background:linear-gradient(#50565f,#454b54);border-radius:4px;"></div>
<div style="left:621.5px;top:1405.6px;width:13.5px;height:13.5px;background:#050607;border-radius:50%;"></div>
<svg style="left:661px;top:1404.3px;" width="14" height="16" viewBox="0 0 14 16"><path d="M1 5H4.5L10.5 0.5V15.5L4.5 11H1Z" fill="#050607"/></svg>
<div style="left:314px;top:1465px;width:403px;height:1.3px;background:#59616b;"></div>
<div style="left:314px;top:1466.3px;width:19px;height:296.7px;background:#15181c;"></div>
<div style="left:333px;top:1466.3px;width:48px;height:296.7px;background:#3f95e9;"></div>
<div style="left:381px;top:1466.3px;width:317px;height:296.7px;background:#a3a8b0;"></div>
<div style="left:698px;top:1466.3px;width:19px;height:296.7px;background:#000;"></div>
<svg style="left:338px;top:1470.8px;" width="24" height="25" viewBox="0 0 24 25"><path d="M1 1L22 11.5L1 23Q5 11.5 1 1Z" fill="#ecf2fa"/></svg>
<div class="t" style="left:347px;top:1476.3px;width:30px;text-align:right;font-size:17px;line-height:20.4px;color:#14305c;font-weight:normal;">33</div>
<div style="left:395.5px;top:1470.3px;width:76px;height:28.6px;background:#2a2d31;border-radius:4px;"></div>
<div style="left:396.5px;top:1471.3px;width:36.5px;height:26.6px;background:linear-gradient(#b4b8bd,#a2a6ab);border-radius:3px 0 0 3px;"></div>
<div style="left:434.2px;top:1471.3px;width:36.3px;height:26.6px;background:linear-gradient(#b4b8bd,#a2a6ab);border-radius:0 3px 3px 0;"></div>
<div class="t" style="left:396.5px;top:1469.6px;width:36.5px;text-align:center;font-size:24px;line-height:28.8px;color:#0a0b0c;font-weight:bold;font-family:DejaVu Sans Mono,Liberation Mono,monospace;">m</div>
<div class="t" style="left:434.2px;top:1472.5px;width:36.3px;text-align:center;font-size:19.5px;line-height:23.4px;color:#0a0b0c;font-weight:bold;font-family:DejaVu Sans,Liberation Sans,sans-serif;">S</div>
<div class="t" style="left:482px;top:1474.3px;font-size:22px;line-height:26.4px;color:#0a0c10;font-weight:bold;letter-spacing:1.2px;">Vox 1</div>
<div style="left:608px;top:1470.3px;width:81px;height:28.6px;background:#2a2d31;border-radius:5px;"></div>
<div style="left:609px;top:1471.3px;width:79px;height:26.6px;background:linear-gradient(#b4b8bd,#a2a6ab);border-radius:4px;"></div>
<div style="left:621.5px;top:1478.1px;width:13.5px;height:13.5px;background:#55595e;border-radius:50%;"></div>
<svg style="left:661px;top:1476.8px;" width="14" height="16" viewBox="0 0 14 16"><path d="M1 5H4.5L10.5 0.5V15.5L4.5 11H1Z" fill="#55595e"/></svg>
<div style="left:480px;top:1505.3px;width:38.3px;height:27.3px;background:#2a2d31;border-radius:5px;"></div>
<div style="left:481px;top:1506.3px;width:36.3px;height:25.3px;background:linear-gradient(#b4b8bd,#a2a6ab);border-radius:4px;"></div>
<svg style="left:486.5px;top:1514.8px;" width="26" height="12" viewBox="0 0 26 12"><rect x="1.2" y="1.2" width="23.5" height="9" fill="none" stroke="#050607" stroke-width="1.9"/><path d="M9 1V10M17 1V10" stroke="#050607" stroke-width="1.9"/></svg>
<div style="left:312px;top:1777.5px;width:8px;height:2px;background:#8a929c;"></div>
<svg style="left:666px;top:1770px;" width="16" height="10" viewBox="0 0 16 10"><path d="M0 0H15L7.5 8.5Z" fill="#5a626c"/></svg>
<svg style="left:696px;top:1765px;" width="20" height="20" viewBox="0 0 20 20"><circle cx="10" cy="10" r="5.5" fill="none" stroke="#6a727c" stroke-width="3.4"/><g stroke="#6a727c" stroke-width="3.2"><path d="M10 0V4M10 16V20M0 10H4M16 10H20M2.9 2.9L5.8 5.8M14.2 14.2L17.1 17.1M2.9 17.1L5.8 14.2M14.2 5.8L17.1 2.9"/></g></svg>
<div style="left:734px;top:72px;width:1715px;height:1719px;background:#252c36;border:3px solid #353e49;border-radius:12px;"></div>
<div style="left:743.6px;top:81.5px;width:1670.4px;height:42.5px;background:#7a98c1;"></div>
<div style="left:2414px;top:81.5px;width:26px;height:42.5px;background:#171a1f;"></div>
<div style="left:2415.5px;top:92px;width:20.5px;height:22px;background:#4a4f57;border-radius:3px;"></div>
<svg style="left:2419px;top:99px;" width="14" height="9" viewBox="0 0 14 9"><path d="M0 0H14L7 8Z" fill="#0c0e11"/></svg>
<div style="left:743.6px;top:124px;width:1678.4px;height:1639px;background:#203559;"></div>
<div style="left:743.6px;top:226.5px;width:1678.4px;height:1.2px;background:#2b4066;"></div>
<div style="left:743.6px;top:297.5px;width:1678.4px;height:1.2px;background:#2b4066;"></div>
<div style="left:743.6px;top:368.9px;width:1678.4px;height:1.2px;background:#2b4066;"></div>
<div style="left:743.6px;top:440.3px;width:1678.4px;height:1.2px;background:#2b4066;"></div>
<div style="left:743.6px;top:511.7px;width:1678.4px;height:1.2px;background:#2b4066;"></div>
<div style="left:743.6px;top:583.1px;width:1678.4px;height:1.2px;background:#2b4066;"></div>
<div style="left:743.6px;top:654.5px;width:1678.4px;height:1.2px;background:#2b4066;"></div>
<div style="left:743.6px;top:725.9px;width:1678.4px;height:1.2px;background:#2b4066;"></div>
<div style="left:743.6px;top:797.3px;width:1678.4px;height:1.2px;background:#2b4066;"></div>
<div style="left:743.6px;top:868.7px;width:1678.4px;height:1.2px;background:#2b4066;"></div>
<div style="left:743.6px;top:940.1px;width:1678.4px;height:1.2px;background:#2b4066;"></div>
<div style="left:743.6px;top:1011.5px;width:1678.4px;height:1.2px;background:#2b4066;"></div>
<div style="left:743.6px;top:1082.9px;width:1678.4px;height:1.2px;background:#2b4066;"></div>
<svg style="left:743.6px;top:124px;" width="1678.4" height="1639" viewBox="0 0 1678.4 1639"><rect x="10.9" y="0" width="1.2" height="1639" fill="#3b4961"/><rect x="63.0" y="0" width="1.2" height="1639" fill="#3b4961"/><rect x="115.0" y="0" width="1.2" height="1639" fill="#3b4961"/><rect x="167.1" y="0" width="1.2" height="1639" fill="#3b4961"/><rect x="219.1" y="0" width="1.2" height="1639" fill="#3b4961"/><rect x="271.2" y="0" width="1.2" height="1639" fill="#3b4961"/><rect x="323.3" y="0" width="1.2" height="1639" fill="#3b4961"/><rect x="375.3" y="0" width="1.2" height="1639" fill="#3b4961"/><rect x="427.4" y="0" width="1.2" height="1639" fill="#3b4961"/><rect x="479.4" y="0" width="1.2" height="1639" fill="#3b4961"/><rect x="531.5" y="0" width="1.2" height="1639" fill="#3b4961"/><rect x="583.5" y="0" width="1.2" height="1639" fill="#3b4961"/><rect x="635.6" y="0" width="1.2" height="1639" fill="#3b4961"/><rect x="687.7" y="0" width="1.2" height="1639" fill="#3b4961"/><rect x="739.7" y="0" width="1.2" height="1639" fill="#3b4961"/><rect x="791.8" y="0" width="1.2" height="1639" fill="#3b4961"/><rect x="843.8" y="0" width="1.2" height="1639" fill="#3b4961"/><rect x="895.9" y="0" width="1.2" height="1639" fill="#3b4961"/><rect x="947.9" y="0" width="1.2" height="1639" fill="#3b4961"/><rect x="1000.0" y="0" width="1.2" height="1639" fill="#3b4961"/><rect x="1052.1" y="0" width="1.2" height="1639" fill="#3b4961"/><rect x="1104.1" y="0" width="1.2" height="1639" fill="#3b4961"/><rect x="1156.2" y="0" width="1.2" height="1639" fill="#3b4961"/><rect x="1208.2" y="0" width="1.2" height="1639" fill="#3b4961"/><rect x="1260.3" y="0" width="1.2" height="1639" fill="#3b4961"/><rect x="1312.3" y="0" width="1.2" height="1639" fill="#3b4961"/><rect x="1364.4" y="0" width="1.2" height="1639" fill="#3b4961"/><rect x="1416.5" y="0" width="1.2" height="1639" fill="#3b4961"/><rect x="1468.5" y="0" width="1.2" height="1639" fill="#3b4961"/><rect x="1520.6" y="0" width="1.2" height="1639" fill="#3b4961"/><rect x="1572.6" y="0" width="1.2" height="1639" fill="#3b4961"/><rect x="1624.7" y="0" width="1.2" height="1639" fill="#3b4961"/><rect x="1676.8" y="0" width="1.2" height="1639" fill="#3b4961"/></svg>
<svg style="left:743.6px;top:81.5px;" width="1670.4" height="42.5" viewBox="0 0 1670.4 42.5"><rect x="10.8" y="0" width="1.4" height="15.5" fill="#2a3548"/><rect x="62.6" y="0" width="2" height="41" fill="#0b0d12"/><rect x="114.9" y="0" width="1.4" height="15.5" fill="#2a3548"/><rect x="167.0" y="0" width="1.4" height="15.5" fill="#2a3548"/><rect x="219.0" y="0" width="1.4" height="15.5" fill="#2a3548"/><rect x="270.8" y="0" width="2" height="41" fill="#0b0d12"/><rect x="323.2" y="0" width="1.4" height="15.5" fill="#2a3548"/><rect x="375.2" y="0" width="1.4" height="15.5" fill="#2a3548"/><rect x="427.3" y="0" width="1.4" height="15.5" fill="#2a3548"/><rect x="479.0" y="0" width="2" height="41" fill="#0b0d12"/><rect x="531.4" y="0" width="1.4" height="15.5" fill="#2a3548"/><rect x="583.4" y="0" width="1.4" height="15.5" fill="#2a3548"/><rect x="635.5" y="0" width="1.4" height="15.5" fill="#2a3548"/><rect x="687.3" y="0" width="2" height="41" fill="#0b0d12"/><rect x="739.6" y="0" width="1.4" height="15.5" fill="#2a3548"/><rect x="791.7" y="0" width="1.4" height="15.5" fill="#2a3548"/><rect x="843.7" y="0" width="1.4" height="15.5" fill="#2a3548"/><rect x="895.5" y="0" width="2" height="41" fill="#0b0d12"/><rect x="947.8" y="0" width="1.4" height="15.5" fill="#2a3548"/><rect x="999.9" y="0" width="1.4" height="15.5" fill="#2a3548"/><rect x="1052.0" y="0" width="1.4" height="15.5" fill="#2a3548"/><rect x="1103.7" y="0" width="2" height="41" fill="#0b0d12"/><rect x="1156.1" y="0" width="1.4" height="15.5" fill="#2a3548"/><rect x="1208.1" y="0" width="1.4" height="15.5" fill="#2a3548"/><rect x="1260.2" y="0" width="1.4" height="15.5" fill="#2a3548"/><rect x="1311.9" y="0" width="2" height="41" fill="#0b0d12"/><rect x="1364.3" y="0" width="1.4" height="15.5" fill="#2a3548"/><rect x="1416.4" y="0" width="1.4" height="15.5" fill="#2a3548"/><rect x="1468.4" y="0" width="1.4" height="15.5" fill="#2a3548"/><rect x="1520.2" y="0" width="2" height="41" fill="#0b0d12"/><rect x="1572.5" y="0" width="1.4" height="15.5" fill="#2a3548"/><rect x="1624.6" y="0" width="1.4" height="15.5" fill="#2a3548"/></svg>
<div class="t" style="left:813.67px;top:100.5px;font-size:19px;line-height:22.8px;color:#0e1219;font-weight:bold;letter-spacing:1px;">30</div>
<div class="t" style="left:1021.9px;top:100.5px;font-size:19px;line-height:22.8px;color:#0e1219;font-weight:bold;letter-spacing:1px;">31</div>
<div class="t" style="left:1230.13px;top:100.5px;font-size:19px;line-height:22.8px;color:#0e1219;font-weight:bold;letter-spacing:1px;">32</div>
<div class="t" style="left:1438.36px;top:100.5px;font-size:19px;line-height:22.8px;color:#0e1219;font-weight:bold;letter-spacing:1px;">33</div>
<div class="t" style="left:1646.59px;top:100.5px;font-size:19px;line-height:22.8px;color:#0e1219;font-weight:bold;letter-spacing:1px;">34</div>
<div class="t" style="left:1854.82px;top:100.5px;font-size:19px;line-height:22.8px;color:#0e1219;font-weight:bold;letter-spacing:1px;">35</div>
<div class="t" style="left:2063.05px;top:100.5px;font-size:19px;line-height:22.8px;color:#0e1219;font-weight:bold;letter-spacing:1px;">36</div>
<div class="t" style="left:2271.28px;top:100.5px;font-size:19px;line-height:22.8px;color:#0e1219;font-weight:bold;letter-spacing:1px;">37</div>
<div style="left:1002.6px;top:124.8px;width:1419.4px;height:98.1px;background:linear-gradient(#a9b5c9 0%,#97a4b9 35%,#8491a8 55%,#74829b 100%);border:1.8px solid #c3d2e8;border-right:none;"></div>
<div class="t" style="left:1009.6px;top:128.3px;font-size:18.5px;line-height:22.2px;color:#353a43;font-weight:bold;opacity:.92;letter-spacing:.45px;">Kick_08</div>
<svg style="left:1002.6px;top:124.8px;" width="1419.4" height="98.1" viewBox="0 0 1419.4 98.1"><path d="M0 50.0H1419.4" stroke="#414957" stroke-width="2.2"/><path d="M11.4 50.0L12.4 36.5L13.4 25.4L14.6 37.7L15.8 45.1L20.9 49.5L20.9 50.5L15.8 55.0L14.8 62.4L14.0 77.7L12.6 62.4ZM117.9 50.0L118.9 37.0L119.9 26.3L121.1 38.2L122.3 45.3L127.4 49.5L127.4 50.5L122.3 54.8L121.3 61.9L120.5 76.7L119.1 61.9ZM143.4 50.0L144.4 35.5L145.4 23.6L146.6 36.8L147.8 44.8L152.9 49.5L152.9 50.5L147.8 55.3L146.8 63.3L146.0 79.7L144.6 63.3ZM192.4 50.0L193.4 37.2L194.4 26.7L195.6 38.4L196.8 45.4L201.9 49.5L201.9 50.5L196.8 54.7L195.8 61.7L195.0 76.2L193.6 61.7ZM220.4 50.0L221.4 35.8L222.4 24.2L223.6 37.1L224.8 44.9L229.9 49.5L229.9 50.5L224.8 55.2L223.8 63.0L223.0 79.0L221.6 63.0ZM353.4 50.0L354.4 36.3L355.4 25.1L356.6 37.6L357.8 45.1L362.9 49.5L362.9 50.5L357.8 55.0L356.8 62.5L356.0 78.0L354.6 62.5ZM404.0 50.0L405.0 37.3L406.0 26.8L407.2 38.4L408.4 45.4L413.5 49.5L413.5 50.5L408.4 54.7L407.4 61.7L406.6 76.1L405.2 61.7ZM429.4 50.0L430.4 35.9L431.4 24.4L432.6 37.2L433.8 44.9L438.9 49.5L438.9 50.5L433.8 55.2L432.8 62.9L432.0 78.8L430.6 62.9ZM533.4 50.0L534.4 37.3L535.4 26.9L536.6 38.5L537.8 45.4L542.9 49.5L542.9 50.5L537.8 54.7L536.8 61.6L536.0 76.0L534.6 61.6ZM559.9 50.0L560.9 36.1L561.9 24.8L563.1 37.4L564.3 45.0L569.4 49.5L569.4 50.5L564.3 55.1L563.3 62.7L562.5 78.4L561.1 62.7ZM610.4 50.0L611.4 37.2L612.4 26.7L613.6 38.4L614.8 45.4L619.9 49.5L619.9 50.5L614.8 54.7L613.8 61.7L613.0 76.2L611.6 61.7ZM637.4 50.0L638.4 37.2L639.4 26.6L640.6 38.3L641.8 45.4L646.9 49.5L646.9 50.5L641.8 54.7L640.8 61.8L640.0 76.3L638.6 61.8ZM740.9 50.0L741.9 36.2L742.9 24.8L744.1 37.4L745.3 45.0L750.4 49.5L750.4 50.5L745.3 55.1L744.3 62.7L743.5 78.3L742.1 62.7ZM781.1 50.0L782.1 35.0L783.1 22.6L784.3 36.3L785.5 44.6L790.6 49.5L790.6 50.5L785.5 55.5L784.5 63.8L783.7 80.8L782.3 63.8ZM818.4 50.0L819.4 37.1L820.4 26.4L821.6 38.2L822.8 45.3L827.9 49.5L827.9 50.5L822.8 54.8L821.8 61.9L821.0 76.5L819.6 61.9ZM844.4 50.0L845.4 36.8L846.4 25.9L847.6 38.0L848.8 45.2L853.9 49.5L853.9 50.5L848.8 54.9L847.8 62.1L847.0 77.1L845.6 62.1ZM951.0 50.0L952.0 35.6L953.0 23.7L954.2 36.9L955.4 44.8L960.5 49.5L960.5 50.5L955.4 55.3L954.4 63.2L953.6 79.5L952.2 63.2ZM976.2 50.0L977.2 34.6L978.2 22.0L979.4 36.0L980.6 44.4L985.7 49.5L985.7 50.5L980.6 55.7L979.6 64.1L978.8 81.5L977.4 64.1ZM1028.4 50.0L1029.4 35.7L1030.4 24.0L1031.6 37.0L1032.8 44.8L1037.9 49.5L1037.9 50.5L1032.8 55.3L1031.8 63.1L1031.0 79.2L1029.6 63.1ZM1056.4 50.0L1057.4 36.2L1058.4 25.0L1059.6 37.5L1060.8 45.0L1065.9 49.5L1065.9 50.5L1060.8 55.1L1059.8 62.6L1059.0 78.2L1057.6 62.6ZM1158.4 50.0L1159.4 34.5L1160.4 21.8L1161.6 35.9L1162.8 44.4L1167.9 49.5L1167.9 50.5L1162.8 55.7L1161.8 64.2L1161.0 81.7L1159.6 64.2ZM1183.4 50.0L1184.4 37.3L1185.4 26.8L1186.6 38.4L1187.8 45.4L1192.9 49.5L1192.9 50.5L1187.8 54.7L1186.8 61.7L1186.0 76.0L1184.6 61.7ZM1262.4 50.0L1263.4 34.9L1264.4 22.5L1265.6 36.3L1266.8 44.5L1271.9 49.5L1271.9 50.5L1266.8 55.6L1265.8 63.8L1265.0 80.9L1263.6 63.8ZM1367.4 50.0L1368.4 36.6L1369.4 25.5L1370.6 37.8L1371.8 45.1L1376.9 49.5L1376.9 50.5L1371.8 55.0L1370.8 62.3L1370.0 77.5L1368.6 62.3Z" fill="#5b6b85" stroke="#434e62" stroke-width="0.9"/></svg>
<div style="left:1002.6px;top:231.5px;width:1419.4px;height:62.5px;background:linear-gradient(#a9b5c9 0%,#97a4b9 35%,#8491a8 55%,#74829b 100%);border:1.8px solid #c3d2e8;border-right:none;"></div>
<div class="t" style="left:1009.6px;top:235px;font-size:18.5px;line-height:22.2px;color:#353a43;font-weight:bold;opacity:.92;letter-spacing:.45px;">Sn_T_08</div>
<svg style="left:1002.6px;top:231.5px;" width="1419.4" height="62.5" viewBox="0 0 1419.4 62.5"><path d="M0 32.4H1419.4" stroke="#414957" stroke-width="2.2"/><path d="M66.6 32.4L69.1 29.0L72.3 30.9L77.1 32.4L72.3 39.2L69.6 51.1ZM170.5 32.4L173.0 15.4L176.2 24.8L181.0 32.4L176.2 39.2L173.5 51.1ZM274.4 32.4L276.9 15.4L280.1 24.8L284.9 32.4L280.1 39.2L277.4 51.1ZM378.3 32.4L380.8 15.4L384.0 24.8L388.8 32.4L384.0 39.2L381.3 51.1ZM482.2 32.4L484.7 15.4L487.9 24.8L492.7 32.4L487.9 39.2L485.2 51.1ZM586.1 32.4L588.6 15.4L591.8 24.8L596.6 32.4L591.8 39.2L589.1 51.1ZM690.0 32.4L692.5 15.4L695.7 24.8L700.5 32.4L695.7 39.2L693.0 51.1ZM793.9 32.4L796.4 15.4L799.6 24.8L804.4 32.4L799.6 39.2L796.9 51.1ZM897.8 32.4L900.3 15.4L903.5 24.8L908.3 32.4L903.5 39.2L900.8 51.1ZM1001.7 32.4L1004.2 15.4L1007.4 24.8L1012.2 32.4L1007.4 39.2L1004.7 51.1ZM1105.6 32.4L1108.1 15.4L1111.3 24.8L1116.1 32.4L1111.3 39.2L1108.6 51.1ZM1209.5 32.4L1212.0 15.4L1215.2 24.8L1220.0 32.4L1215.2 39.2L1212.5 51.1ZM1313.4 32.4L1315.9 15.4L1319.1 24.8L1323.9 32.4L1319.1 39.2L1316.4 51.1ZM1417.3 32.4L1419.8 15.4L1423.0 24.8L1427.8 32.4L1423.0 39.2L1420.3 51.1ZM11.9 32.4L13.4 29.9L14.6 31.3L16.4 32.4L14.6 33.4L13.9 35.2ZM118.4 32.4L119.9 29.9L121.1 31.3L122.9 32.4L121.1 33.4L120.4 35.2ZM143.9 32.4L145.4 29.9L146.6 31.3L148.4 32.4L146.6 33.4L145.9 35.2ZM192.9 32.4L194.4 29.9L195.6 31.3L197.4 32.4L195.6 33.4L194.9 35.2ZM220.9 32.4L222.4 29.9L223.6 31.3L225.4 32.4L223.6 33.4L222.9 35.2ZM353.9 32.4L355.4 29.9L356.6 31.3L358.4 32.4L356.6 33.4L355.9 35.2ZM404.5 32.4L406.0 29.9L407.2 31.3L409.0 32.4L407.2 33.4L406.5 35.2ZM429.9 32.4L431.4 29.9L432.6 31.3L434.4 32.4L432.6 33.4L431.9 35.2ZM533.9 32.4L535.4 29.9L536.6 31.3L538.4 32.4L536.6 33.4L535.9 35.2ZM560.4 32.4L561.9 29.9L563.1 31.3L564.9 32.4L563.1 33.4L562.4 35.2ZM610.9 32.4L612.4 29.9L613.6 31.3L615.4 32.4L613.6 33.4L612.9 35.2ZM637.9 32.4L639.4 29.9L640.6 31.3L642.4 32.4L640.6 33.4L639.9 35.2ZM741.4 32.4L742.9 29.9L744.1 31.3L745.9 32.4L744.1 33.4L743.4 35.2ZM781.6 32.4L783.1 29.9L784.3 31.3L786.1 32.4L784.3 33.4L783.6 35.2ZM818.9 32.4L820.4 29.9L821.6 31.3L823.4 32.4L821.6 33.4L820.9 35.2ZM844.9 32.4L846.4 29.9L847.6 31.3L849.4 32.4L847.6 33.4L846.9 35.2ZM951.5 32.4L953.0 29.9L954.2 31.3L956.0 32.4L954.2 33.4L953.5 35.2ZM976.7 32.4L978.2 29.9L979.4 31.3L981.2 32.4L979.4 33.4L978.7 35.2ZM1028.9 32.4L1030.4 29.9L1031.6 31.3L1033.4 32.4L1031.6 33.4L1030.9 35.2ZM1056.9 32.4L1058.4 29.9L1059.6 31.3L1061.4 32.4L1059.6 33.4L1058.9 35.2ZM1158.9 32.4L1160.4 29.9L1161.6 31.3L1163.4 32.4L1161.6 33.4L1160.9 35.2ZM1183.9 32.4L1185.4 29.9L1186.6 31.3L1188.4 32.4L1186.6 33.4L1185.9 35.2ZM1262.9 32.4L1264.4 29.9L1265.6 31.3L1267.4 32.4L1265.6 33.4L1264.9 35.2ZM1367.9 32.4L1369.4 29.9L1370.6 31.3L1372.4 32.4L1370.6 33.4L1369.9 35.2Z" fill="#5b6b85" stroke="#434e62" stroke-width="0.8"/></svg>
<div style="left:1002.6px;top:303px;width:1419.4px;height:62.5px;background:linear-gradient(#a9b5c9 0%,#97a4b9 35%,#8491a8 55%,#74829b 100%);border:1.8px solid #c3d2e8;border-right:none;"></div>
<div class="t" style="left:1009.6px;top:306.5px;font-size:18.5px;line-height:22.2px;color:#353a43;font-weight:bold;opacity:.92;letter-spacing:.45px;">Sn_B_08</div>
<svg style="left:1002.6px;top:303px;" width="1419.4" height="62.5" viewBox="0 0 1419.4 62.5"><path d="M0 32.4H1419.4" stroke="#414957" stroke-width="2.2"/><path d="M66.6 32.4L69.1 25.9L71.9 29.5L76.1 32.4L71.9 35.0L69.6 39.6ZM170.5 32.4L173.0 25.9L175.8 29.5L180.0 32.4L175.8 35.0L173.5 39.6ZM274.4 32.4L276.9 25.9L279.7 29.5L283.9 32.4L279.7 35.0L277.4 39.6ZM378.3 32.4L380.8 25.9L383.6 29.5L387.8 32.4L383.6 35.0L381.3 39.6ZM482.2 32.4L484.7 25.9L487.5 29.5L491.7 32.4L487.5 35.0L485.2 39.6ZM586.1 32.4L588.6 25.9L591.4 29.5L595.6 32.4L591.4 35.0L589.1 39.6ZM690.0 32.4L692.5 25.9L695.3 29.5L699.5 32.4L695.3 35.0L693.0 39.6ZM793.9 32.4L796.4 25.9L799.2 29.5L803.4 32.4L799.2 35.0L796.9 39.6ZM897.8 32.4L900.3 25.9L903.1 29.5L907.3 32.4L903.1 35.0L900.8 39.6ZM1001.7 32.4L1004.2 25.9L1007.0 29.5L1011.2 32.4L1007.0 35.0L1004.7 39.6ZM1105.6 32.4L1108.1 25.9L1110.9 29.5L1115.1 32.4L1110.9 35.0L1108.6 39.6ZM1209.5 32.4L1212.0 25.9L1214.8 29.5L1219.0 32.4L1214.8 35.0L1212.5 39.6ZM1313.4 32.4L1315.9 25.9L1318.7 29.5L1322.9 32.4L1318.7 35.0L1316.4 39.6ZM1417.3 32.4L1419.8 25.9L1422.6 29.5L1426.8 32.4L1422.6 35.0L1420.3 39.6ZM11.9 32.4L13.4 30.6L14.6 31.6L16.4 32.4L14.6 33.2L13.9 34.4ZM118.4 32.4L119.9 30.6L121.1 31.6L122.9 32.4L121.1 33.2L120.4 34.4ZM143.9 32.4L145.4 30.6L146.6 31.6L148.4 32.4L146.6 33.2L145.9 34.4ZM192.9 32.4L194.4 30.6L195.6 31.6L197.4 32.4L195.6 33.2L194.9 34.4ZM220.9 32.4L222.4 30.6L223.6 31.6L225.4 32.4L223.6 33.2L222.9 34.4ZM353.9 32.4L355.4 30.6L356.6 31.6L358.4 32.4L356.6 33.2L355.9 34.4ZM404.5 32.4L406.0 30.6L407.2 31.6L409.0 32.4L407.2 33.2L406.5 34.4ZM429.9 32.4L431.4 30.6L432.6 31.6L434.4 32.4L432.6 33.2L431.9 34.4ZM533.9 32.4L535.4 30.6L536.6 31.6L538.4 32.4L536.6 33.2L535.9 34.4ZM560.4 32.4L561.9 30.6L563.1 31.6L564.9 32.4L563.1 33.2L562.4 34.4ZM610.9 32.4L612.4 30.6L613.6 31.6L615.4 32.4L613.6 33.2L612.9 34.4ZM637.9 32.4L639.4 30.6L640.6 31.6L642.4 32.4L640.6 33.2L639.9 34.4ZM741.4 32.4L742.9 30.6L744.1 31.6L745.9 32.4L744.1 33.2L743.4 34.4ZM781.6 32.4L783.1 30.6L784.3 31.6L786.1 32.4L784.3 33.2L783.6 34.4ZM818.9 32.4L820.4 30.6L821.6 31.6L823.4 32.4L821.6 33.2L820.9 34.4ZM844.9 32.4L846.4 30.6L847.6 31.6L849.4 32.4L847.6 33.2L846.9 34.4ZM951.5 32.4L953.0 30.6L954.2 31.6L956.0 32.4L954.2 33.2L953.5 34.4ZM976.7 32.4L978.2 30.6L979.4 31.6L981.2 32.4L979.4 33.2L978.7 34.4ZM1028.9 32.4L1030.4 30.6L1031.6 31.6L1033.4 32.4L1031.6 33.2L1030.9 34.4ZM1056.9 32.4L1058.4 30.6L1059.6 31.6L1061.4 32.4L1059.6 33.2L1058.9 34.4ZM1158.9 32.4L1160.4 30.6L1161.6 31.6L1163.4 32.4L1161.6 33.2L1160.9 34.4ZM1183.9 32.4L1185.4 30.6L1186.6 31.6L1188.4 32.4L1186.6 33.2L1185.9 34.4ZM1262.9 32.4L1264.4 30.6L1265.6 31.6L1267.4 32.4L1265.6 33.2L1264.9 34.4ZM1367.9 32.4L1369.4 30.6L1370.6 31.6L1372.4 32.4L1370.6 33.2L1369.9 34.4Z" fill="#5b6b85" stroke="#434e62" stroke-width="0.8"/></svg>
<div style="left:1002.6px;top:374.3px;width:1419.4px;height:62.5px;background:linear-gradient(#a9b5c9 0%,#97a4b9 35%,#8491a8 55%,#74829b 100%);border:1.8px solid #c3d2e8;border-right:none;"></div>
<div class="t" style="left:1009.6px;top:377.8px;font-size:18.5px;line-height:22.2px;color:#353a43;font-weight:bold;opacity:.92;letter-spacing:.45px;">HH_08</div>
<svg style="left:1002.6px;top:374.3px;" width="1419.4" height="62.5" viewBox="0 0 1419.4 62.5"><path d="M0 32.4H1419.4" stroke="#414957" stroke-width="2.2"/><path d="M12.4 32.4L15.4 26.0L19.0 29.5L24.4 32.4L19.0 35.0L15.9 39.6ZM38.4 32.4L41.4 27.7L45.0 30.3L50.4 32.4L45.0 34.3L41.9 37.6ZM64.5 32.4L67.5 21.2L71.1 27.4L76.5 32.4L71.1 37.0L68.0 44.8ZM90.5 32.4L93.5 27.6L97.1 30.3L102.5 32.4L97.1 34.4L94.0 37.8ZM116.5 32.4L119.5 24.6L123.1 28.9L128.5 32.4L123.1 35.6L120.0 41.1ZM142.5 32.4L145.5 28.8L149.1 30.8L154.5 32.4L149.1 33.9L146.0 36.5ZM168.6 32.4L171.6 23.3L175.2 28.3L180.6 32.4L175.2 36.1L172.1 42.5ZM194.6 32.4L197.6 27.1L201.2 30.0L206.6 32.4L201.2 34.6L198.1 38.4ZM220.6 32.4L223.6 25.9L227.2 29.5L232.6 32.4L227.2 35.1L224.1 39.6ZM246.7 32.4L249.7 28.4L253.3 30.6L258.7 32.4L253.3 34.1L250.2 36.9ZM272.7 32.4L275.7 17.5L279.3 25.7L284.7 32.4L279.3 38.4L276.2 48.9ZM298.7 32.4L301.7 27.9L305.3 30.4L310.7 32.4L305.3 34.3L302.2 37.5ZM324.7 32.4L327.7 23.8L331.3 28.6L336.7 32.4L331.3 35.9L328.2 41.9ZM350.8 32.4L353.8 27.9L357.4 30.4L362.8 32.4L357.4 34.3L354.3 37.5ZM376.8 32.4L379.8 19.6L383.4 26.7L388.8 32.4L383.4 37.6L380.3 46.6ZM402.8 32.4L405.8 28.6L409.4 30.7L414.8 32.4L409.4 34.0L406.3 36.7ZM428.9 32.4L431.9 24.6L435.5 28.9L440.9 32.4L435.5 35.6L432.4 41.1ZM454.9 32.4L457.9 27.0L461.5 30.0L466.9 32.4L461.5 34.6L458.4 38.4ZM480.9 32.4L483.9 20.3L487.5 27.0L492.9 32.4L487.5 37.3L484.4 45.8ZM506.9 32.4L509.9 27.3L513.5 30.1L518.9 32.4L513.5 34.5L510.4 38.1ZM533.0 32.4L536.0 24.4L539.6 28.8L545.0 32.4L539.6 35.7L536.5 41.3ZM559.0 32.4L562.0 28.8L565.6 30.8L571.0 32.4L565.6 33.9L562.5 36.5ZM585.0 32.4L588.0 18.9L591.6 26.4L597.0 32.4L591.6 37.9L588.5 47.3ZM611.1 32.4L614.1 27.6L617.7 30.3L623.1 32.4L617.7 34.4L614.6 37.8ZM637.1 32.4L640.1 25.8L643.7 29.4L649.1 32.4L643.7 35.1L640.6 39.8ZM663.1 32.4L666.1 28.9L669.7 30.8L675.1 32.4L669.7 33.9L666.6 36.4ZM689.1 32.4L692.1 18.3L695.7 26.1L701.1 32.4L695.7 38.1L692.6 48.0ZM715.2 32.4L718.2 27.9L721.8 30.4L727.2 32.4L721.8 34.3L718.7 37.5ZM741.2 32.4L744.2 24.3L747.8 28.8L753.2 32.4L747.8 35.7L744.7 41.5ZM767.2 32.4L770.2 27.0L773.8 30.0L779.2 32.4L773.8 34.6L770.7 38.5ZM793.3 32.4L796.3 19.2L799.9 26.5L805.3 32.4L799.9 37.8L796.8 47.1ZM819.3 32.4L822.3 26.9L825.9 29.9L831.3 32.4L825.9 34.7L822.8 38.6ZM845.3 32.4L848.3 25.4L851.9 29.3L857.3 32.4L851.9 35.3L848.8 40.2ZM871.3 32.4L874.3 27.1L877.9 30.1L883.3 32.4L877.9 34.6L874.8 38.3ZM897.4 32.4L900.4 20.7L904.0 27.2L909.4 32.4L904.0 37.1L900.9 45.3ZM923.4 32.4L926.4 26.8L930.0 29.9L935.4 32.4L930.0 34.7L926.9 38.6ZM949.4 32.4L952.4 23.7L956.0 28.5L961.4 32.4L956.0 36.0L952.9 42.1ZM975.5 32.4L978.5 28.7L982.1 30.8L987.5 32.4L982.1 33.9L979.0 36.5ZM1001.5 32.4L1004.5 22.6L1008.1 28.0L1013.5 32.4L1008.1 36.4L1005.0 43.3ZM1027.5 32.4L1030.5 28.5L1034.1 30.7L1039.5 32.4L1034.1 34.0L1031.0 36.8ZM1053.5 32.4L1056.5 23.4L1060.1 28.4L1065.5 32.4L1060.1 36.1L1057.0 42.4ZM1079.6 32.4L1082.6 28.0L1086.2 30.4L1091.6 32.4L1086.2 34.2L1083.1 37.4ZM1105.6 32.4L1108.6 19.7L1112.2 26.7L1117.6 32.4L1112.2 37.6L1109.1 46.5ZM1131.6 32.4L1134.6 28.3L1138.2 30.6L1143.6 32.4L1138.2 34.1L1135.1 37.0ZM1157.7 32.4L1160.7 25.0L1164.3 29.1L1169.7 32.4L1164.3 35.4L1161.2 40.6ZM1183.7 32.4L1186.7 28.1L1190.3 30.5L1195.7 32.4L1190.3 34.2L1187.2 37.3ZM1209.7 32.4L1212.7 21.3L1216.3 27.4L1221.7 32.4L1216.3 36.9L1213.2 44.7ZM1235.8 32.4L1238.8 27.6L1242.4 30.3L1247.8 32.4L1242.4 34.4L1239.3 37.7ZM1261.8 32.4L1264.8 24.7L1268.4 29.0L1273.8 32.4L1268.4 35.5L1265.3 40.9ZM1287.8 32.4L1290.8 26.9L1294.4 30.0L1299.8 32.4L1294.4 34.7L1291.3 38.5ZM1313.8 32.4L1316.8 19.4L1320.4 26.6L1325.8 32.4L1320.4 37.7L1317.3 46.8ZM1339.9 32.4L1342.9 26.9L1346.5 29.9L1351.9 32.4L1346.5 34.7L1343.4 38.6ZM1365.9 32.4L1368.9 23.8L1372.5 28.5L1377.9 32.4L1372.5 35.9L1369.4 42.0ZM1391.9 32.4L1394.9 26.7L1398.5 29.9L1403.9 32.4L1398.5 34.7L1395.4 38.8Z" fill="#5b6b85" stroke="#434e62" stroke-width="0.8"/></svg>
<div style="left:1002.6px;top:445.7px;width:1419.4px;height:62.5px;background:linear-gradient(#a9b5c9 0%,#97a4b9 35%,#8491a8 55%,#74829b 100%);border:1.8px solid #c3d2e8;border-right:none;"></div>
<div class="t" style="left:1009.6px;top:449.2px;font-size:18.5px;line-height:22.2px;color:#353a43;font-weight:bold;opacity:.92;letter-spacing:.45px;">T1_08</div>
<svg style="left:1002.6px;top:445.7px;" width="1419.4" height="62.5" viewBox="0 0 1419.4 62.5"><path d="M0 32.4H1419.4" stroke="#414957" stroke-width="2.2"/><path d="M67.1 32.4L69.1 30.4L70.3 31.5L72.1 32.4L70.3 33.2L69.6 34.6ZM171.0 32.4L173.0 30.4L174.2 31.5L176.0 32.4L174.2 33.2L173.5 34.6ZM274.9 32.4L276.9 30.4L278.1 31.5L279.9 32.4L278.1 33.2L277.4 34.6ZM378.8 32.4L380.8 30.4L382.0 31.5L383.8 32.4L382.0 33.2L381.3 34.6ZM482.7 32.4L484.7 30.4L485.9 31.5L487.7 32.4L485.9 33.2L485.2 34.6ZM586.6 32.4L588.6 30.4L589.8 31.5L591.6 32.4L589.8 33.2L589.1 34.6ZM690.5 32.4L692.5 30.4L693.7 31.5L695.5 32.4L693.7 33.2L693.0 34.6ZM794.4 32.4L796.4 30.4L797.6 31.5L799.4 32.4L797.6 33.2L796.9 34.6ZM898.3 32.4L900.3 30.4L901.5 31.5L903.3 32.4L901.5 33.2L900.8 34.6ZM1002.2 32.4L1004.2 30.4L1005.4 31.5L1007.2 32.4L1005.4 33.2L1004.7 34.6ZM1106.1 32.4L1108.1 30.4L1109.3 31.5L1111.1 32.4L1109.3 33.2L1108.6 34.6ZM1210.0 32.4L1212.0 30.4L1213.2 31.5L1215.0 32.4L1213.2 33.2L1212.5 34.6ZM1313.9 32.4L1315.9 30.4L1317.1 31.5L1318.9 32.4L1317.1 33.2L1316.4 34.6ZM1417.8 32.4L1419.8 30.4L1421.0 31.5L1422.8 32.4L1421.0 33.2L1420.3 34.6ZM11.4 32.4L13.4 31.0L14.6 31.8L16.4 32.4L14.6 33.0L13.9 34.0ZM117.9 32.4L119.9 31.0L121.1 31.8L122.9 32.4L121.1 33.0L120.4 34.0ZM143.4 32.4L145.4 31.0L146.6 31.8L148.4 32.4L146.6 33.0L145.9 34.0ZM192.4 32.4L194.4 31.0L195.6 31.8L197.4 32.4L195.6 33.0L194.9 34.0ZM220.4 32.4L222.4 31.0L223.6 31.8L225.4 32.4L223.6 33.0L222.9 34.0ZM353.4 32.4L355.4 31.0L356.6 31.8L358.4 32.4L356.6 33.0L355.9 34.0ZM404.0 32.4L406.0 31.0L407.2 31.8L409.0 32.4L407.2 33.0L406.5 34.0ZM429.4 32.4L431.4 31.0L432.6 31.8L434.4 32.4L432.6 33.0L431.9 34.0ZM533.4 32.4L535.4 31.0L536.6 31.8L538.4 32.4L536.6 33.0L535.9 34.0ZM559.9 32.4L561.9 31.0L563.1 31.8L564.9 32.4L563.1 33.0L562.4 34.0ZM610.4 32.4L612.4 31.0L613.6 31.8L615.4 32.4L613.6 33.0L612.9 34.0ZM637.4 32.4L639.4 31.0L640.6 31.8L642.4 32.4L640.6 33.0L639.9 34.0ZM740.9 32.4L742.9 31.0L744.1 31.8L745.9 32.4L744.1 33.0L743.4 34.0ZM781.1 32.4L783.1 31.0L784.3 31.8L786.1 32.4L784.3 33.0L783.6 34.0ZM818.4 32.4L820.4 31.0L821.6 31.8L823.4 32.4L821.6 33.0L820.9 34.0ZM844.4 32.4L846.4 31.0L847.6 31.8L849.4 32.4L847.6 33.0L846.9 34.0ZM951.0 32.4L953.0 31.0L954.2 31.8L956.0 32.4L954.2 33.0L953.5 34.0ZM976.2 32.4L978.2 31.0L979.4 31.8L981.2 32.4L979.4 33.0L978.7 34.0ZM1028.4 32.4L1030.4 31.0L1031.6 31.8L1033.4 32.4L1031.6 33.0L1030.9 34.0ZM1056.4 32.4L1058.4 31.0L1059.6 31.8L1061.4 32.4L1059.6 33.0L1058.9 34.0ZM1158.4 32.4L1160.4 31.0L1161.6 31.8L1163.4 32.4L1161.6 33.0L1160.9 34.0ZM1183.4 32.4L1185.4 31.0L1186.6 31.8L1188.4 32.4L1186.6 33.0L1185.9 34.0ZM1262.4 32.4L1264.4 31.0L1265.6 31.8L1267.4 32.4L1265.6 33.0L1264.9 34.0ZM1367.4 32.4L1369.4 31.0L1370.6 31.8L1372.4 32.4L1370.6 33.0L1369.9 34.0Z" fill="#5b6b85" stroke="#434e62" stroke-width="0.8"/></svg>
<div style="left:1002.6px;top:517px;width:1419.4px;height:62.6px;background:linear-gradient(#a9b5c9 0%,#97a4b9 35%,#8491a8 55%,#74829b 100%);border:1.8px solid #c3d2e8;border-right:none;"></div>
<div class="t" style="left:1009.6px;top:520.5px;font-size:18.5px;line-height:22.2px;color:#353a43;font-weight:bold;opacity:.92;letter-spacing:.45px;">T2_08</div>
<svg style="left:1002.6px;top:517px;" width="1419.4" height="62.6" viewBox="0 0 1419.4 62.6"><path d="M0 32.5H1419.4" stroke="#414957" stroke-width="2.2"/><path d="M67.1 32.5L69.1 30.5L70.3 31.6L72.1 32.5L70.3 33.3L69.6 34.7ZM171.0 32.5L173.0 30.5L174.2 31.6L176.0 32.5L174.2 33.3L173.5 34.7ZM274.9 32.5L276.9 30.5L278.1 31.6L279.9 32.5L278.1 33.3L277.4 34.7ZM378.8 32.5L380.8 30.5L382.0 31.6L383.8 32.5L382.0 33.3L381.3 34.7ZM482.7 32.5L484.7 30.5L485.9 31.6L487.7 32.5L485.9 33.3L485.2 34.7ZM586.6 32.5L588.6 30.5L589.8 31.6L591.6 32.5L589.8 33.3L589.1 34.7ZM690.5 32.5L692.5 30.5L693.7 31.6L695.5 32.5L693.7 33.3L693.0 34.7ZM794.4 32.5L796.4 30.5L797.6 31.6L799.4 32.5L797.6 33.3L796.9 34.7ZM898.3 32.5L900.3 30.5L901.5 31.6L903.3 32.5L901.5 33.3L900.8 34.7ZM1002.2 32.5L1004.2 30.5L1005.4 31.6L1007.2 32.5L1005.4 33.3L1004.7 34.7ZM1106.1 32.5L1108.1 30.5L1109.3 31.6L1111.1 32.5L1109.3 33.3L1108.6 34.7ZM1210.0 32.5L1212.0 30.5L1213.2 31.6L1215.0 32.5L1213.2 33.3L1212.5 34.7ZM1313.9 32.5L1315.9 30.5L1317.1 31.6L1318.9 32.5L1317.1 33.3L1316.4 34.7ZM1417.8 32.5L1419.8 30.5L1421.0 31.6L1422.8 32.5L1421.0 33.3L1420.3 34.7ZM11.4 32.5L13.4 31.1L14.6 31.9L16.4 32.5L14.6 33.1L13.9 34.0ZM117.9 32.5L119.9 31.1L121.1 31.9L122.9 32.5L121.1 33.1L120.4 34.0ZM143.4 32.5L145.4 31.1L146.6 31.9L148.4 32.5L146.6 33.1L145.9 34.0ZM192.4 32.5L194.4 31.1L195.6 31.9L197.4 32.5L195.6 33.1L194.9 34.0ZM220.4 32.5L222.4 31.1L223.6 31.9L225.4 32.5L223.6 33.1L222.9 34.0ZM353.4 32.5L355.4 31.1L356.6 31.9L358.4 32.5L356.6 33.1L355.9 34.0ZM404.0 32.5L406.0 31.1L407.2 31.9L409.0 32.5L407.2 33.1L406.5 34.0ZM429.4 32.5L431.4 31.1L432.6 31.9L434.4 32.5L432.6 33.1L431.9 34.0ZM533.4 32.5L535.4 31.1L536.6 31.9L538.4 32.5L536.6 33.1L535.9 34.0ZM559.9 32.5L561.9 31.1L563.1 31.9L564.9 32.5L563.1 33.1L562.4 34.0ZM610.4 32.5L612.4 31.1L613.6 31.9L615.4 32.5L613.6 33.1L612.9 34.0ZM637.4 32.5L639.4 31.1L640.6 31.9L642.4 32.5L640.6 33.1L639.9 34.0ZM740.9 32.5L742.9 31.1L744.1 31.9L745.9 32.5L744.1 33.1L743.4 34.0ZM781.1 32.5L783.1 31.1L784.3 31.9L786.1 32.5L784.3 33.1L783.6 34.0ZM818.4 32.5L820.4 31.1L821.6 31.9L823.4 32.5L821.6 33.1L820.9 34.0ZM844.4 32.5L846.4 31.1L847.6 31.9L849.4 32.5L847.6 33.1L846.9 34.0ZM951.0 32.5L953.0 31.1L954.2 31.9L956.0 32.5L954.2 33.1L953.5 34.0ZM976.2 32.5L978.2 31.1L979.4 31.9L981.2 32.5L979.4 33.1L978.7 34.0ZM1028.4 32.5L1030.4 31.1L1031.6 31.9L1033.4 32.5L1031.6 33.1L1030.9 34.0ZM1056.4 32.5L1058.4 31.1L1059.6 31.9L1061.4 32.5L1059.6 33.1L1058.9 34.0ZM1158.4 32.5L1160.4 31.1L1161.6 31.9L1163.4 32.5L1161.6 33.1L1160.9 34.0ZM1183.4 32.5L1185.4 31.1L1186.6 31.9L1188.4 32.5L1186.6 33.1L1185.9 34.0ZM1262.4 32.5L1264.4 31.1L1265.6 31.9L1267.4 32.5L1265.6 33.1L1264.9 34.0ZM1367.4 32.5L1369.4 31.1L1370.6 31.9L1372.4 32.5L1370.6 33.1L1369.9 34.0Z" fill="#5b6b85" stroke="#434e62" stroke-width="0.8"/></svg>
<div style="left:1002.6px;top:588.5px;width:1419.4px;height:62.5px;background:linear-gradient(#a9b5c9 0%,#97a4b9 35%,#8491a8 55%,#74829b 100%);border:1.8px solid #c3d2e8;border-right:none;"></div>
<div class="t" style="left:1009.6px;top:592px;font-size:18.5px;line-height:22.2px;color:#353a43;font-weight:bold;opacity:.92;letter-spacing:.45px;">OH_L_08</div>
<svg style="left:1002.6px;top:588.5px;" width="1419.4" height="62.5" viewBox="0 0 1419.4 62.5"><path d="M0 32.5H1419.4" stroke="#414957" stroke-width="2.2"/><polygon points="13.4,29.8 16.0,28.6 18.5,27.9 21.1,28.7 23.7,31.1 26.2,30.1 28.8,31.2 31.4,30.8 33.9,30.8 36.5,29.1 39.1,30.6 41.6,30.3 44.2,31.3 46.7,30.0 49.3,31.6 51.9,31.5 54.4,30.7 57.0,31.3 59.6,31.0 62.1,31.5 64.7,31.8 67.3,31.2 69.8,31.9 72.4,31.2 72.4,33.3 69.8,32.9 67.3,34.0 64.7,33.2 62.1,33.3 59.6,33.5 57.0,34.6 54.4,34.7 51.9,33.8 49.3,35.1 46.7,35.0 44.2,35.0 41.6,35.2 39.1,34.3 36.5,35.8 33.9,35.5 31.4,36.2 28.8,33.8 26.2,35.4 23.7,36.2 21.1,36.5 18.5,33.9 16.0,34.1 13.4,35.6" fill="#5b6b85" stroke="#434e62" stroke-width="0.6"/><polygon points="427.4,29.5 429.9,29.0 432.5,29.6 435.0,30.9 437.6,31.1 440.1,28.8 442.7,29.2 445.2,29.6 447.8,31.1 450.3,31.0 452.9,30.8 455.4,29.3 457.9,29.5 460.5,30.7 463.0,30.8 465.6,31.0 468.1,31.2 470.7,30.4 473.2,31.2 475.8,31.8 478.3,31.1 480.9,31.7 483.4,31.4 483.4,33.4 480.9,33.7 478.3,33.9 475.8,33.3 473.2,33.5 470.7,34.0 468.1,34.7 465.6,33.4 463.0,33.8 460.5,34.7 457.9,34.3 455.4,35.3 452.9,34.5 450.3,35.5 447.8,34.6 445.2,35.7 442.7,36.3 440.1,34.1 437.6,35.2 435.0,36.7 432.5,35.2 429.9,36.7 427.4,34.8" fill="#5b6b85" stroke="#434e62" stroke-width="0.6"/><polygon points="845.4,28.6 848.0,29.7 850.5,30.1 853.1,28.6 855.6,30.2 858.2,29.1 860.8,31.1 863.3,30.5 865.9,29.9 868.5,29.5 871.0,30.4 873.6,29.4 876.1,30.5 878.7,29.3 881.3,29.1 883.8,30.3 886.4,31.1 889.0,29.6 891.5,30.2 894.1,30.2 896.6,30.2 899.2,30.5 901.8,30.7 904.3,30.7 906.9,31.8 909.5,31.2 912.0,31.6 914.6,31.1 917.1,31.4 919.7,31.9 922.3,31.7 924.8,31.9 927.4,31.7 927.4,33.2 924.8,32.9 922.3,33.1 919.7,33.1 917.1,33.2 914.6,33.1 912.0,34.0 909.5,34.0 906.9,33.4 904.3,34.3 901.8,34.5 899.2,34.0 896.6,34.3 894.1,33.6 891.5,34.8 889.0,34.4 886.4,35.2 883.8,34.6 881.3,35.7 878.7,35.2 876.1,35.6 873.6,35.7 871.0,35.3 868.5,35.8 865.9,36.0 863.3,35.7 860.8,35.4 858.2,35.6 855.6,36.8 853.1,36.1 850.5,35.5 848.0,36.3 845.4,36.6" fill="#5b6b85" stroke="#434e62" stroke-width="0.6"/><polygon points="1261.4,28.8 1263.9,30.2 1266.5,31.0 1269.0,30.2 1271.6,30.8 1274.1,30.0 1276.6,29.4 1279.2,29.7 1281.7,29.7 1284.2,29.2 1286.8,29.4 1289.3,30.5 1291.9,30.1 1294.4,29.4 1296.9,30.3 1299.5,29.8 1302.0,31.4 1304.6,30.6 1307.1,30.7 1309.6,31.2 1312.2,31.5 1314.7,30.5 1317.2,30.7 1319.8,31.2 1322.3,30.9 1324.9,31.6 1327.4,31.2 1327.4,33.3 1324.9,33.2 1322.3,33.4 1319.8,33.3 1317.2,34.2 1314.7,33.6 1312.2,33.5 1309.6,33.8 1307.1,34.7 1304.6,33.5 1302.0,34.3 1299.5,33.3 1296.9,34.1 1294.4,35.5 1291.9,34.7 1289.3,33.8 1286.8,35.1 1284.2,34.6 1281.7,36.2 1279.2,34.6 1276.6,34.0 1274.1,33.8 1271.6,36.4 1269.0,35.1 1266.5,35.2 1263.9,37.0 1261.4,36.0" fill="#5b6b85" stroke="#434e62" stroke-width="0.6"/><path d="M12.4 32.5L15.4 24.2L19.4 28.8L25.4 32.5L19.4 35.7L15.9 41.5ZM38.4 32.5L41.4 25.7L45.4 29.4L51.4 32.5L45.4 35.2L41.9 39.9ZM64.5 32.5L67.5 21.5L71.5 27.5L77.5 32.5L71.5 36.8L68.0 44.5ZM90.5 32.5L93.5 25.0L97.5 29.1L103.5 32.5L97.5 35.4L94.0 40.7ZM116.5 32.5L119.5 23.7L123.5 28.5L129.5 32.5L123.5 35.9L120.0 42.1ZM142.5 32.5L145.5 25.0L149.5 29.1L155.5 32.5L149.5 35.4L146.0 40.6ZM168.6 32.5L171.6 25.7L175.6 29.4L181.6 32.5L175.6 35.2L172.1 39.9ZM194.6 32.5L197.6 26.6L201.6 29.8L207.6 32.5L201.6 34.8L198.1 38.9ZM220.6 32.5L223.6 22.8L227.6 28.1L233.6 32.5L227.6 36.3L224.1 43.1ZM246.7 32.5L249.7 26.0L253.7 29.5L259.7 32.5L253.7 35.0L250.2 39.6ZM272.7 32.5L275.7 20.9L279.7 27.3L285.7 32.5L279.7 37.1L276.2 45.2ZM298.7 32.5L301.7 27.9L305.7 30.4L311.7 32.5L305.7 34.3L302.2 37.5ZM324.7 32.5L327.7 24.9L331.7 29.1L337.7 32.5L331.7 35.5L328.2 40.7ZM350.8 32.5L353.8 27.4L357.8 30.2L363.8 32.5L357.8 34.5L354.3 38.0ZM376.8 32.5L379.8 22.9L383.8 28.1L389.8 32.5L383.8 36.3L380.3 43.0ZM402.8 32.5L405.8 26.2L409.8 29.7L415.8 32.5L409.8 34.9L406.3 39.3ZM428.9 32.5L431.9 27.0L435.9 30.0L441.9 32.5L435.9 34.6L432.4 38.5ZM454.9 32.5L457.9 27.5L461.9 30.2L467.9 32.5L461.9 34.4L458.4 37.9ZM480.9 32.5L483.9 24.3L487.9 28.8L493.9 32.5L487.9 35.7L484.4 41.4ZM506.9 32.5L509.9 25.0L513.9 29.1L519.9 32.5L513.9 35.4L510.4 40.6ZM533.0 32.5L536.0 23.6L540.0 28.5L546.0 32.5L540.0 36.0L536.5 42.2ZM559.0 32.5L562.0 27.7L566.0 30.3L572.0 32.5L566.0 34.4L562.5 37.7ZM585.0 32.5L588.0 21.5L592.0 27.5L598.0 32.5L592.0 36.8L588.5 44.5ZM611.1 32.5L614.1 27.8L618.1 30.3L624.1 32.5L618.1 34.3L614.6 37.6ZM637.1 32.5L640.1 24.3L644.1 28.8L650.1 32.5L644.1 35.7L640.6 41.4ZM663.1 32.5L666.1 27.8L670.1 30.4L676.1 32.5L670.1 34.3L666.6 37.6ZM689.1 32.5L692.1 25.8L696.1 29.5L702.1 32.5L696.1 35.1L692.6 39.7ZM715.2 32.5L718.2 25.2L722.2 29.2L728.2 32.5L722.2 35.3L718.7 40.4ZM741.2 32.5L744.2 26.1L748.2 29.6L754.2 32.5L748.2 35.0L744.7 39.4ZM767.2 32.5L770.2 27.5L774.2 30.2L780.2 32.5L774.2 34.4L770.7 37.9ZM793.3 32.5L796.3 20.4L800.3 27.0L806.3 32.5L800.3 37.3L796.8 45.7ZM819.3 32.5L822.3 25.2L826.3 29.2L832.3 32.5L826.3 35.4L822.8 40.4ZM845.3 32.5L848.3 25.7L852.3 29.4L858.3 32.5L852.3 35.1L848.8 39.8ZM871.3 32.5L874.3 24.9L878.3 29.0L884.3 32.5L878.3 35.5L874.8 40.8ZM897.4 32.5L900.4 22.9L904.4 28.1L910.4 32.5L904.4 36.3L900.9 43.0ZM923.4 32.5L926.4 25.9L930.4 29.5L936.4 32.5L930.4 35.1L926.9 39.7ZM949.4 32.5L952.4 26.1L956.4 29.6L962.4 32.5L956.4 35.0L952.9 39.4ZM975.5 32.5L978.5 25.0L982.5 29.1L988.5 32.5L982.5 35.4L979.0 40.7ZM1001.5 32.5L1004.5 22.1L1008.5 27.8L1014.5 32.5L1008.5 36.6L1005.0 43.9ZM1027.5 32.5L1030.5 24.9L1034.5 29.0L1040.5 32.5L1034.5 35.5L1031.0 40.8ZM1053.5 32.5L1056.5 23.0L1060.5 28.2L1066.5 32.5L1060.5 36.2L1057.0 42.8ZM1079.6 32.5L1082.6 27.2L1086.6 30.1L1092.6 32.5L1086.6 34.5L1083.1 38.2ZM1105.6 32.5L1108.6 23.9L1112.6 28.6L1118.6 32.5L1112.6 35.9L1109.1 41.9ZM1131.6 32.5L1134.6 27.7L1138.6 30.3L1144.6 32.5L1138.6 34.4L1135.1 37.7ZM1157.7 32.5L1160.7 26.4L1164.7 29.7L1170.7 32.5L1164.7 34.9L1161.2 39.1ZM1183.7 32.5L1186.7 28.0L1190.7 30.5L1196.7 32.5L1190.7 34.2L1187.2 37.3ZM1209.7 32.5L1212.7 24.2L1216.7 28.7L1222.7 32.5L1216.7 35.8L1213.2 41.5ZM1235.8 32.5L1238.8 26.1L1242.8 29.6L1248.8 32.5L1242.8 35.0L1239.3 39.4ZM1261.8 32.5L1264.8 27.0L1268.8 30.0L1274.8 32.5L1268.8 34.6L1265.3 38.4ZM1287.8 32.5L1290.8 25.9L1294.8 29.5L1300.8 32.5L1294.8 35.1L1291.3 39.7ZM1313.8 32.5L1316.8 24.0L1320.8 28.6L1326.8 32.5L1320.8 35.8L1317.3 41.8ZM1339.9 32.5L1342.9 27.2L1346.9 30.1L1352.9 32.5L1346.9 34.6L1343.4 38.3ZM1365.9 32.5L1368.9 23.4L1372.9 28.4L1378.9 32.5L1372.9 36.1L1369.4 42.4ZM1391.9 32.5L1394.9 26.6L1398.9 29.8L1404.9 32.5L1398.9 34.8L1395.4 38.9Z" fill="#5b6b85" stroke="#434e62" stroke-width="0.8"/></svg>
<div style="left:1002.6px;top:660px;width:1419.4px;height:62.5px;background:linear-gradient(#a9b5c9 0%,#97a4b9 35%,#8491a8 55%,#74829b 100%);border:1.8px solid #c3d2e8;border-right:none;"></div>
<div class="t" style="left:1009.6px;top:663.5px;font-size:18.5px;line-height:22.2px;color:#353a43;font-weight:bold;opacity:.92;letter-spacing:.45px;">OH_R_02</div>
<svg style="left:1002.6px;top:660px;" width="1419.4" height="62.5" viewBox="0 0 1419.4 62.5"><path d="M0 32.5H1419.4" stroke="#414957" stroke-width="2.2"/><polygon points="13.4,29.9 16.0,30.6 18.5,29.6 21.1,28.6 23.7,31.1 26.2,30.4 28.8,29.0 31.4,30.6 33.9,28.8 36.5,29.9 39.1,29.9 41.6,29.8 44.2,29.9 46.7,30.5 49.3,31.1 51.9,30.9 54.4,30.5 57.0,31.7 59.6,31.2 62.1,30.7 64.7,31.9 67.3,31.5 69.8,31.3 72.4,31.7 72.4,33.6 69.8,33.5 67.3,33.6 64.7,33.9 62.1,33.7 59.6,34.4 57.0,33.5 54.4,34.2 51.9,33.9 49.3,34.3 46.7,34.0 44.2,34.0 41.6,33.7 39.1,34.9 36.5,34.7 33.9,34.3 31.4,34.0 28.8,34.3 26.2,36.4 23.7,35.4 21.1,36.4 18.5,34.8 16.0,36.0 13.4,35.6" fill="#5b6b85" stroke="#434e62" stroke-width="0.6"/><polygon points="427.4,29.6 429.9,28.1 432.5,30.1 435.0,30.9 437.6,29.1 440.1,30.4 442.7,28.7 445.2,30.0 447.8,30.1 450.3,31.0 452.9,29.6 455.4,31.0 457.9,29.9 460.5,31.6 463.0,29.9 465.6,30.5 468.1,30.4 470.7,30.9 473.2,30.9 475.8,31.6 478.3,31.8 480.9,31.6 483.4,31.5 483.4,32.9 480.9,33.0 478.3,33.6 475.8,34.1 473.2,33.2 470.7,34.5 468.1,33.5 465.6,33.3 463.0,35.1 460.5,34.7 457.9,34.7 455.4,35.2 452.9,33.6 450.3,34.9 447.8,34.4 445.2,35.1 442.7,34.0 440.1,36.0 437.6,35.1 435.0,36.4 432.5,36.6 429.9,34.6 427.4,35.3" fill="#5b6b85" stroke="#434e62" stroke-width="0.6"/><polygon points="845.4,30.6 848.0,30.7 850.5,29.1 853.1,28.2 855.6,29.7 858.2,29.3 860.8,28.3 863.3,31.0 865.9,30.8 868.5,29.9 871.0,29.8 873.6,30.7 876.1,30.7 878.7,30.1 881.3,30.9 883.8,29.8 886.4,30.0 889.0,31.4 891.5,31.4 894.1,30.5 896.6,30.0 899.2,31.1 901.8,31.7 904.3,31.7 906.9,30.3 909.5,31.5 912.0,30.5 914.6,30.8 917.1,31.2 919.7,31.7 922.3,31.4 924.8,31.7 927.4,31.3 927.4,33.4 924.8,33.0 922.3,33.3 919.7,33.3 917.1,33.4 914.6,33.2 912.0,33.9 909.5,33.2 906.9,34.1 904.3,33.4 901.8,34.4 899.2,34.6 896.6,34.1 894.1,33.7 891.5,33.6 889.0,34.8 886.4,34.8 883.8,33.8 881.3,34.3 878.7,33.8 876.1,35.4 873.6,35.0 871.0,35.3 868.5,36.1 865.9,35.5 863.3,35.7 860.8,34.9 858.2,35.3 855.6,34.8 853.1,34.3 850.5,36.4 848.0,34.1 845.4,35.3" fill="#5b6b85" stroke="#434e62" stroke-width="0.6"/><polygon points="1261.4,28.1 1263.9,28.1 1266.5,29.1 1269.0,28.7 1271.6,30.8 1274.1,30.6 1276.6,28.6 1279.2,29.1 1281.7,30.0 1284.2,29.7 1286.8,30.2 1289.3,31.1 1291.9,30.6 1294.4,29.6 1296.9,31.0 1299.5,31.3 1302.0,31.2 1304.6,31.6 1307.1,31.1 1309.6,30.7 1312.2,31.1 1314.7,31.7 1317.2,31.5 1319.8,31.1 1322.3,31.8 1324.9,31.8 1327.4,31.7 1327.4,33.7 1324.9,32.9 1322.3,32.9 1319.8,33.1 1317.2,33.9 1314.7,34.0 1312.2,34.5 1309.6,34.2 1307.1,34.7 1304.6,34.9 1302.0,34.2 1299.5,33.9 1296.9,33.9 1294.4,33.7 1291.9,34.3 1289.3,33.9 1286.8,33.8 1284.2,34.7 1281.7,36.0 1279.2,33.6 1276.6,35.1 1274.1,33.9 1271.6,33.9 1269.0,35.1 1266.5,35.8 1263.9,35.7 1261.4,35.5" fill="#5b6b85" stroke="#434e62" stroke-width="0.6"/><path d="M12.4 32.5L15.4 24.2L19.4 28.8L25.4 32.5L19.4 35.7L15.9 41.5ZM38.4 32.5L41.4 25.7L45.4 29.4L51.4 32.5L45.4 35.2L41.9 39.9ZM64.5 32.5L67.5 21.5L71.5 27.5L77.5 32.5L71.5 36.8L68.0 44.5ZM90.5 32.5L93.5 25.0L97.5 29.1L103.5 32.5L97.5 35.4L94.0 40.7ZM116.5 32.5L119.5 23.7L123.5 28.5L129.5 32.5L123.5 35.9L120.0 42.1ZM142.5 32.5L145.5 25.0L149.5 29.1L155.5 32.5L149.5 35.4L146.0 40.6ZM168.6 32.5L171.6 25.7L175.6 29.4L181.6 32.5L175.6 35.2L172.1 39.9ZM194.6 32.5L197.6 26.6L201.6 29.8L207.6 32.5L201.6 34.8L198.1 38.9ZM220.6 32.5L223.6 22.8L227.6 28.1L233.6 32.5L227.6 36.3L224.1 43.1ZM246.7 32.5L249.7 26.0L253.7 29.5L259.7 32.5L253.7 35.0L250.2 39.6ZM272.7 32.5L275.7 20.9L279.7 27.3L285.7 32.5L279.7 37.1L276.2 45.2ZM298.7 32.5L301.7 27.9L305.7 30.4L311.7 32.5L305.7 34.3L302.2 37.5ZM324.7 32.5L327.7 24.9L331.7 29.1L337.7 32.5L331.7 35.5L328.2 40.7ZM350.8 32.5L353.8 27.4L357.8 30.2L363.8 32.5L357.8 34.5L354.3 38.0ZM376.8 32.5L379.8 22.9L383.8 28.1L389.8 32.5L383.8 36.3L380.3 43.0ZM402.8 32.5L405.8 26.2L409.8 29.7L415.8 32.5L409.8 34.9L406.3 39.3ZM428.9 32.5L431.9 27.0L435.9 30.0L441.9 32.5L435.9 34.6L432.4 38.5ZM454.9 32.5L457.9 27.5L461.9 30.2L467.9 32.5L461.9 34.4L458.4 37.9ZM480.9 32.5L483.9 24.3L487.9 28.8L493.9 32.5L487.9 35.7L484.4 41.4ZM506.9 32.5L509.9 25.0L513.9 29.1L519.9 32.5L513.9 35.4L510.4 40.6ZM533.0 32.5L536.0 23.6L540.0 28.5L546.0 32.5L540.0 36.0L536.5 42.2ZM559.0 32.5L562.0 27.7L566.0 30.3L572.0 32.5L566.0 34.4L562.5 37.7ZM585.0 32.5L588.0 21.5L592.0 27.5L598.0 32.5L592.0 36.8L588.5 44.5ZM611.1 32.5L614.1 27.8L618.1 30.3L624.1 32.5L618.1 34.3L614.6 37.6ZM637.1 32.5L640.1 24.3L644.1 28.8L650.1 32.5L644.1 35.7L640.6 41.4ZM663.1 32.5L666.1 27.8L670.1 30.4L676.1 32.5L670.1 34.3L666.6 37.6ZM689.1 32.5L692.1 25.8L696.1 29.5L702.1 32.5L696.1 35.1L692.6 39.7ZM715.2 32.5L718.2 25.2L722.2 29.2L728.2 32.5L722.2 35.3L718.7 40.4ZM741.2 32.5L744.2 26.1L748.2 29.6L754.2 32.5L748.2 35.0L744.7 39.4ZM767.2 32.5L770.2 27.5L774.2 30.2L780.2 32.5L774.2 34.4L770.7 37.9ZM793.3 32.5L796.3 20.4L800.3 27.0L806.3 32.5L800.3 37.3L796.8 45.7ZM819.3 32.5L822.3 25.2L826.3 29.2L832.3 32.5L826.3 35.4L822.8 40.4ZM845.3 32.5L848.3 25.7L852.3 29.4L858.3 32.5L852.3 35.1L848.8 39.8ZM871.3 32.5L874.3 24.9L878.3 29.0L884.3 32.5L878.3 35.5L874.8 40.8ZM897.4 32.5L900.4 22.9L904.4 28.1L910.4 32.5L904.4 36.3L900.9 43.0ZM923.4 32.5L926.4 25.9L930.4 29.5L936.4 32.5L930.4 35.1L926.9 39.7ZM949.4 32.5L952.4 26.1L956.4 29.6L962.4 32.5L956.4 35.0L952.9 39.4ZM975.5 32.5L978.5 25.0L982.5 29.1L988.5 32.5L982.5 35.4L979.0 40.7ZM1001.5 32.5L1004.5 22.1L1008.5 27.8L1014.5 32.5L1008.5 36.6L1005.0 43.9ZM1027.5 32.5L1030.5 24.9L1034.5 29.0L1040.5 32.5L1034.5 35.5L1031.0 40.8ZM1053.5 32.5L1056.5 23.0L1060.5 28.2L1066.5 32.5L1060.5 36.2L1057.0 42.8ZM1079.6 32.5L1082.6 27.2L1086.6 30.1L1092.6 32.5L1086.6 34.5L1083.1 38.2ZM1105.6 32.5L1108.6 23.9L1112.6 28.6L1118.6 32.5L1112.6 35.9L1109.1 41.9ZM1131.6 32.5L1134.6 27.7L1138.6 30.3L1144.6 32.5L1138.6 34.4L1135.1 37.7ZM1157.7 32.5L1160.7 26.4L1164.7 29.7L1170.7 32.5L1164.7 34.9L1161.2 39.1ZM1183.7 32.5L1186.7 28.0L1190.7 30.5L1196.7 32.5L1190.7 34.2L1187.2 37.3ZM1209.7 32.5L1212.7 24.2L1216.7 28.7L1222.7 32.5L1216.7 35.8L1213.2 41.5ZM1235.8 32.5L1238.8 26.1L1242.8 29.6L1248.8 32.5L1242.8 35.0L1239.3 39.4ZM1261.8 32.5L1264.8 27.0L1268.8 30.0L1274.8 32.5L1268.8 34.6L1265.3 38.4ZM1287.8 32.5L1290.8 25.9L1294.8 29.5L1300.8 32.5L1294.8 35.1L1291.3 39.7ZM1313.8 32.5L1316.8 24.0L1320.8 28.6L1326.8 32.5L1320.8 35.8L1317.3 41.8ZM1339.9 32.5L1342.9 27.2L1346.9 30.1L1352.9 32.5L1346.9 34.6L1343.4 38.3ZM1365.9 32.5L1368.9 23.4L1372.9 28.4L1378.9 32.5L1372.9 36.1L1369.4 42.4ZM1391.9 32.5L1394.9 26.6L1398.9 29.8L1404.9 32.5L1398.9 34.8L1395.4 38.9Z" fill="#5b6b85" stroke="#434e62" stroke-width="0.8"/></svg>
<div style="left:743.6px;top:769.3px;width:1678.4px;height:2.5px;background:#c5c9ce;"></div>
<div style="left:743.6px;top:801.8px;width:1678.4px;height:65.5px;background:linear-gradient(#8597f7 0%,#7488f0 40%,#5f74e4 60%,#526ade 100%);border-top:1.6px solid #93a3f8;border-bottom:1.6px solid #6e82ec;"></div>
<svg style="left:743.6px;top:801.8px;" width="1678.4" height="65.5" viewBox="0 0 1678.4 65.5"><path d="M0 33.0H1678.4" stroke="#2a3cb8" stroke-width="1.6"/><polygon points="0.4,33.0 2.6,24.4 4.9,24.8 7.1,25.3 9.3,24.8 11.6,25.5 13.8,25.5 16.0,24.9 18.3,24.6 20.5,25.1 22.8,25.7 25.0,25.3 27.2,25.7 29.5,25.9 31.7,25.5 33.9,25.5 36.2,26.5 38.4,31.5 38.4,34.4 36.2,39.5 33.9,40.5 31.7,40.7 29.5,39.9 27.2,39.9 25.0,40.2 22.8,39.8 20.5,40.9 18.3,41.7 16.0,40.5 13.8,40.6 11.6,40.2 9.3,41.4 7.1,40.6 4.9,41.1 2.6,41.4 0.4,33.0" fill="#2c47dc" stroke="#2034a8" stroke-width="1"/><polygon points="64.4,33.0 66.6,29.0 68.8,25.5 71.1,21.8 73.3,18.0 75.5,18.2 77.7,18.2 80.0,20.4 82.2,18.8 84.4,18.9 86.6,20.8 88.8,19.7 91.1,21.1 93.3,19.8 95.5,21.4 97.7,21.6 100.0,20.6 102.2,21.2 104.4,22.0 106.6,22.2 108.8,22.4 111.1,22.4 113.3,21.4 115.5,22.6 117.7,22.9 120.0,22.1 122.2,23.4 124.4,23.3 126.6,22.7 128.8,23.5 131.1,23.9 133.3,23.9 135.5,23.8 137.7,23.2 140.0,23.9 142.2,24.5 144.4,23.7 146.6,24.7 148.8,24.3 151.1,25.1 153.3,24.4 155.5,25.1 157.7,25.6 160.0,25.5 162.2,25.7 164.4,25.4 166.6,26.0 168.8,26.2 171.1,25.9 173.3,26.0 175.5,25.8 177.7,26.8 180.0,26.5 182.2,26.9 184.4,26.7 186.6,27.0 188.8,26.6 191.1,27.0 193.3,27.6 195.5,28.2 197.7,28.8 200.0,30.2 202.2,31.0 204.4,32.0 204.4,34.0 202.2,35.0 200.0,35.8 197.7,37.4 195.5,38.0 193.3,38.0 191.1,39.0 188.8,39.4 186.6,39.2 184.4,38.9 182.2,38.9 180.0,39.0 177.7,38.9 175.5,39.8 173.3,39.7 171.1,40.3 168.8,39.4 166.6,40.1 164.4,40.3 162.2,40.5 160.0,40.5 157.7,40.7 155.5,40.4 153.3,41.6 151.1,41.3 148.8,42.1 146.6,40.8 144.4,42.5 142.2,41.0 140.0,42.4 137.7,42.6 135.5,42.0 133.3,42.1 131.1,42.0 128.8,41.8 126.6,42.9 124.4,42.2 122.2,43.1 120.0,44.0 117.7,42.8 115.5,43.8 113.3,44.9 111.1,43.1 108.8,43.3 106.6,43.8 104.4,44.2 102.2,44.5 100.0,44.7 97.7,43.5 95.5,44.0 93.3,46.5 91.1,44.4 88.8,45.7 86.6,45.2 84.4,46.7 82.2,46.9 80.0,45.0 77.7,48.2 75.5,47.4 73.3,47.6 71.1,43.4 68.8,40.1 66.6,37.1 64.4,33.0" fill="#2c47dc" stroke="#2034a8" stroke-width="1"/><polygon points="218.4,33.0 220.7,17.9 223.0,14.6 225.3,15.2 227.5,16.8 229.8,16.1 232.1,17.7 234.4,17.2 236.7,18.2 239.0,18.8 241.3,20.2 243.5,18.9 245.8,19.8 248.1,20.2 250.4,21.2 252.7,22.2 255.0,22.6 257.3,22.3 259.5,22.4 261.8,22.9 264.1,26.1 266.4,31.2 266.4,34.8 264.1,39.3 261.8,43.5 259.5,43.5 257.3,43.2 255.0,43.4 252.7,44.0 250.4,45.2 248.1,45.7 245.8,45.8 243.5,47.6 241.3,45.8 239.0,47.2 236.7,47.3 234.4,48.7 232.1,48.6 229.8,50.5 227.5,49.3 225.3,51.5 223.0,51.6 220.7,48.7 218.4,33.0" fill="#2c47dc" stroke="#2034a8" stroke-width="1"/><polygon points="271.4,33.0 273.6,22.7 275.8,13.8 278.1,7.8 280.3,9.0 282.5,7.4 284.7,7.7 287.0,9.3 289.2,11.2 291.4,9.4 293.6,10.3 295.8,12.1 298.1,12.0 300.3,13.2 302.5,12.4 304.7,13.7 307.0,12.2 309.2,15.1 311.4,13.4 313.6,14.2 315.8,15.6 318.1,16.7 320.3,16.0 322.5,15.5 324.7,17.5 327.0,16.7 329.2,17.1 331.4,17.1 333.6,17.7 335.8,18.5 338.1,19.8 340.3,18.7 342.5,19.9 344.7,19.5 347.0,20.0 349.2,20.7 351.4,20.2 353.6,20.5 355.8,22.2 358.1,21.7 360.3,22.4 362.5,22.0 364.7,22.6 367.0,25.9 369.2,28.6 371.4,31.1 371.4,34.9 369.2,37.6 367.0,39.7 364.7,43.2 362.5,44.3 360.3,43.5 358.1,44.8 355.8,43.6 353.6,45.7 351.4,45.0 349.2,45.6 347.0,46.3 344.7,46.4 342.5,45.6 340.3,46.5 338.1,45.9 335.8,46.7 333.6,47.5 331.4,49.7 329.2,49.0 327.0,48.9 324.7,47.4 322.5,49.7 320.3,48.7 318.1,48.3 315.8,50.8 313.6,51.7 311.4,51.2 309.2,49.5 307.0,53.4 304.7,52.9 302.5,53.3 300.3,52.3 298.1,53.0 295.8,52.7 293.6,56.7 291.4,57.3 289.2,54.4 287.0,55.8 284.7,57.5 282.5,59.6 280.3,56.5 278.1,58.4 275.8,52.9 273.6,43.3 271.4,33.0" fill="#2c47dc" stroke="#2034a8" stroke-width="1"/><polygon points="374.4,33.0 376.6,15.5 378.8,16.8 381.0,17.5 383.2,16.4 385.4,18.3 387.6,17.5 389.8,17.8 392.0,17.2 394.2,17.4 396.4,30.1 396.4,36.0 394.2,47.7 392.0,47.7 389.8,47.1 387.6,48.9 385.4,47.3 383.2,49.0 381.0,49.1 378.8,49.6 376.6,51.3 374.4,33.0" fill="#2c47dc" stroke="#2034a8" stroke-width="1"/><polygon points="402.4,33.0 404.6,13.7 406.8,13.1 409.1,13.1 411.3,13.4 413.5,15.5 415.7,15.5 418.0,14.8 420.2,14.5 422.4,29.6 422.4,36.3 420.2,51.4 418.0,51.0 415.7,50.7 413.5,50.3 411.3,51.3 409.1,52.6 406.8,53.0 404.6,52.5 402.4,33.0" fill="#2c47dc" stroke="#2034a8" stroke-width="1"/><polygon points="428.4,33.0 430.8,10.0 433.2,7.7 435.6,9.3 438.0,9.7 440.4,9.7 442.8,8.8 445.2,10.9 447.6,10.6 450.0,10.4 452.4,28.6 452.4,37.3 450.0,54.0 447.6,55.1 445.2,55.7 442.8,56.9 440.4,54.5 438.0,56.0 435.6,55.4 433.2,58.0 430.8,56.7 428.4,33.0" fill="#2c47dc" stroke="#2034a8" stroke-width="1"/><polygon points="452.4,33.0 454.8,9.7 457.1,10.5 459.5,8.4 461.9,9.8 464.2,11.0 466.6,8.8 468.9,9.5 471.3,11.6 473.7,10.2 476.0,11.4 478.4,28.9 478.4,37.2 476.0,54.6 473.7,54.9 471.3,53.3 468.9,54.7 466.6,55.7 464.2,55.0 461.9,55.3 459.5,58.5 457.1,55.0 454.8,55.9 452.4,33.0" fill="#2c47dc" stroke="#2034a8" stroke-width="1"/><polygon points="481.4,33.0 483.6,22.0 485.9,10.0 488.1,6.0 490.4,6.3 492.6,8.2 494.9,7.3 497.1,7.2 499.4,7.8 501.6,8.8 503.8,8.9 506.1,11.4 508.3,12.2 510.6,10.7 512.8,13.2 515.1,13.6 517.3,12.5 519.5,13.1 521.8,14.7 524.0,16.1 526.3,14.9 528.5,14.7 530.8,16.3 533.0,16.8 535.3,17.9 537.5,18.6 539.7,18.0 542.0,18.4 544.2,19.7 546.5,18.8 548.7,19.1 551.0,21.2 553.2,20.9 555.4,21.5 557.7,21.6 559.9,21.9 562.2,22.2 564.4,23.4 566.7,23.0 568.9,26.3 571.2,28.8 573.4,31.2 573.4,34.8 571.2,36.9 568.9,39.3 566.7,42.7 564.4,42.4 562.2,44.1 559.9,43.2 557.7,44.1 555.4,44.3 553.2,45.4 551.0,45.4 548.7,45.9 546.5,47.9 544.2,45.6 542.0,46.7 539.7,47.8 537.5,46.4 535.3,47.0 533.0,49.4 530.8,50.0 528.5,50.1 526.3,51.8 524.0,49.0 521.8,51.5 519.5,51.6 517.3,53.0 515.1,51.1 512.8,53.1 510.6,53.9 508.3,54.8 506.1,55.5 503.8,56.2 501.6,57.8 499.4,56.9 497.1,58.8 494.9,58.4 492.6,57.8 490.4,58.2 488.1,59.3 485.9,55.4 483.6,43.4 481.4,33.0" fill="#2c47dc" stroke="#2034a8" stroke-width="1"/><polygon points="584.4,33.0 586.8,14.4 589.2,14.7 591.6,13.9 594.0,16.0 596.4,15.0 598.8,15.0 601.2,14.9 603.6,15.6 606.0,15.6 608.4,29.6 608.4,36.2 606.0,49.9 603.6,50.7 601.2,51.7 598.8,50.5 596.4,51.4 594.0,50.7 591.6,52.5 589.2,51.0 586.8,51.1 584.4,33.0" fill="#2c47dc" stroke="#2034a8" stroke-width="1"/><polygon points="610.4,33.0 612.8,11.5 615.2,9.8 617.6,11.4 620.0,10.2 622.4,10.5 624.8,11.1 627.2,9.9 629.6,11.0 632.0,10.4 634.4,28.7 634.4,37.3 632.0,53.9 629.6,55.4 627.2,56.2 624.8,54.2 622.4,55.4 620.0,55.0 617.6,55.6 615.2,56.3 612.8,53.7 610.4,33.0" fill="#2c47dc" stroke="#2034a8" stroke-width="1"/><polygon points="637.4,33.0 639.6,13.2 641.8,12.5 644.0,13.1 646.2,12.5 648.4,11.5 650.6,11.6 652.8,12.3 655.0,13.1 657.2,14.9 659.4,29.3 659.4,36.6 657.2,51.9 655.0,53.2 652.8,52.2 650.6,54.5 648.4,54.4 646.2,53.3 644.0,53.6 641.8,52.1 639.6,51.7 637.4,33.0" fill="#2c47dc" stroke="#2034a8" stroke-width="1"/><polygon points="663.4,33.0 665.6,13.4 667.8,12.8 670.0,14.2 672.2,14.8 674.4,14.2 676.6,15.4 678.8,15.6 681.0,15.9 683.2,16.2 685.4,29.6 685.4,36.6 683.2,50.1 681.0,48.9 678.8,49.1 676.6,50.8 674.4,51.6 672.2,50.4 670.0,51.8 667.8,52.7 665.6,51.1 663.4,33.0" fill="#2c47dc" stroke="#2034a8" stroke-width="1"/><polygon points="688.4,33.0 690.6,22.1 692.8,13.9 695.0,7.5 697.2,6.4 699.4,8.7 701.7,8.6 703.9,8.3 706.1,10.1 708.3,10.6 710.5,12.5 712.7,12.0 714.9,12.7 717.1,13.1 719.3,13.2 721.5,13.2 723.7,13.1 726.0,14.2 728.2,16.3 730.4,15.0 732.6,16.5 734.8,16.1 737.0,16.8 739.2,16.9 741.4,18.4 743.6,17.4 745.8,19.6 748.1,19.5 750.3,19.2 752.5,19.8 754.7,21.0 756.9,20.6 759.1,21.2 761.3,21.9 763.5,21.4 765.7,22.8 767.9,22.1 770.1,22.5 772.4,23.4 774.6,23.3 776.8,23.9 779.0,26.9 781.2,29.0 783.4,31.4 783.4,34.5 781.2,37.1 779.0,39.1 776.8,42.6 774.6,42.4 772.4,42.1 770.1,42.9 767.9,43.9 765.7,42.5 763.5,44.9 761.3,43.7 759.1,44.5 756.9,45.5 754.7,45.1 752.5,45.3 750.3,45.9 748.1,46.1 745.8,45.4 743.6,49.2 741.4,48.3 739.2,48.2 737.0,49.2 734.8,49.7 732.6,48.8 730.4,51.0 728.2,50.3 726.0,50.8 723.7,53.8 721.5,52.6 719.3,52.2 717.1,52.0 714.9,53.4 712.7,52.7 710.5,52.0 708.3,54.9 706.1,54.4 703.9,58.3 701.7,56.9 699.4,58.4 697.2,58.3 695.0,58.0 692.8,52.8 690.6,44.3 688.4,33.0" fill="#2c47dc" stroke="#2034a8" stroke-width="1"/><polygon points="792.4,33.0 794.8,14.9 797.1,13.8 799.5,13.7 801.9,13.6 804.2,15.3 806.6,15.8 808.9,14.3 811.3,15.6 813.7,15.6 816.0,15.7 818.4,29.4 818.4,36.6 816.0,49.2 813.7,50.7 811.3,49.3 808.9,51.9 806.6,49.5 804.2,50.8 801.9,51.0 799.5,51.5 797.1,51.9 794.8,49.8 792.4,33.0" fill="#2c47dc" stroke="#2034a8" stroke-width="1"/><polygon points="820.4,33.0 822.8,10.6 825.2,11.2 827.6,12.9 830.0,11.3 832.4,13.6 834.8,13.4 837.2,13.5 839.6,14.3 842.0,12.8 844.4,29.0 844.4,37.0 842.0,53.0 839.6,51.6 837.2,51.9 834.8,51.9 832.4,51.8 830.0,55.5 827.6,52.5 825.2,53.9 822.8,54.9 820.4,33.0" fill="#2c47dc" stroke="#2034a8" stroke-width="1"/><polygon points="846.4,33.0 848.6,15.7 850.8,18.0 853.0,17.0 855.2,16.2 857.4,16.7 859.6,17.5 861.8,18.6 864.0,17.4 866.2,18.9 868.4,30.2 868.4,35.9 866.2,47.1 864.0,49.2 861.8,46.4 859.6,48.9 857.4,48.1 855.2,49.9 853.0,48.9 850.8,47.8 848.6,49.5 846.4,33.0" fill="#2c47dc" stroke="#2034a8" stroke-width="1"/><polygon points="870.4,33.0 872.6,16.4 874.8,15.9 877.0,16.4 879.2,15.2 881.4,16.5 883.6,16.1 885.8,15.9 888.0,16.2 890.2,16.3 892.4,29.7 892.4,36.4 890.2,50.1 888.0,49.9 885.8,49.7 883.6,50.1 881.4,49.3 879.2,50.9 877.0,49.0 874.8,50.5 872.6,49.9 870.4,33.0" fill="#2c47dc" stroke="#2034a8" stroke-width="1"/><polygon points="896.4,33.0 898.6,24.9 900.9,16.1 903.1,12.2 905.3,11.7 907.5,13.2 909.8,14.1 912.0,14.2 914.2,15.2 916.4,15.3 918.7,13.9 920.9,16.1 923.1,15.0 925.4,16.7 927.6,16.6 929.8,16.8 932.0,16.2 934.3,17.4 936.5,17.7 938.7,17.7 940.9,16.8 943.2,18.3 945.4,17.2 947.6,18.2 949.9,18.6 952.1,19.8 954.3,18.5 956.5,19.3 958.8,20.0 961.0,19.5 963.2,21.0 965.4,20.6 967.7,20.2 969.9,21.4 972.1,21.4 974.4,20.7 976.6,21.3 978.8,22.2 981.0,22.6 983.3,23.0 985.5,22.0 987.7,23.5 989.9,25.5 992.2,28.5 994.4,31.0 994.4,35.0 992.2,37.4 989.9,40.0 987.7,42.0 985.5,44.3 983.3,43.2 981.0,43.6 978.8,43.7 976.6,45.3 974.4,45.2 972.1,44.1 969.9,43.9 967.7,45.8 965.4,45.7 963.2,44.8 961.0,45.8 958.8,46.6 956.5,46.5 954.3,47.1 952.1,46.8 949.9,46.6 947.6,48.4 945.4,48.3 943.2,48.2 940.9,48.9 938.7,48.2 936.5,48.6 934.3,47.9 932.0,49.0 929.8,49.4 927.6,48.5 925.4,48.2 923.1,51.7 920.9,49.6 918.7,51.0 916.4,50.7 914.2,50.1 912.0,52.7 909.8,51.5 907.5,51.6 905.3,55.3 903.1,52.6 900.9,49.4 898.6,41.2 896.4,33.0" fill="#2c47dc" stroke="#2034a8" stroke-width="1"/><polygon points="999.4,33.0 1001.7,14.0 1003.9,6.9 1006.2,7.9 1008.4,9.5 1010.7,11.3 1013.0,11.3 1015.2,12.5 1017.5,11.8 1019.7,12.6 1022.0,13.8 1024.3,13.2 1026.5,12.6 1028.8,15.3 1031.1,13.8 1033.3,14.6 1035.6,16.4 1037.8,14.8 1040.1,15.7 1042.4,16.6 1044.6,17.2 1046.9,17.4 1049.1,22.6 1051.4,29.9 1051.4,36.0 1049.1,42.9 1046.9,48.7 1044.6,48.2 1042.4,49.2 1040.1,49.6 1037.8,50.2 1035.6,50.4 1033.3,51.0 1031.1,51.3 1028.8,50.2 1026.5,53.5 1024.3,53.7 1022.0,51.7 1019.7,53.6 1017.5,54.5 1015.2,52.6 1013.0,53.8 1010.7,55.3 1008.4,56.2 1006.2,56.8 1003.9,57.3 1001.7,51.5 999.4,33.0" fill="#2c47dc" stroke="#2034a8" stroke-width="1"/><polygon points="1054.4,33.0 1056.7,10.0 1059.0,4.0 1061.3,7.1 1063.5,5.3 1065.8,7.6 1068.1,5.4 1070.4,8.5 1072.7,8.5 1075.0,7.9 1077.3,6.3 1079.5,8.0 1081.8,7.4 1084.1,9.0 1086.4,9.1 1088.7,9.4 1091.0,7.7 1093.3,9.0 1095.5,11.4 1097.8,10.6 1100.1,17.0 1102.4,28.5 1102.4,37.6 1100.1,48.5 1097.8,55.5 1095.5,53.8 1093.3,57.0 1091.0,58.9 1088.7,56.8 1086.4,55.0 1084.1,56.1 1081.8,59.3 1079.5,58.1 1077.3,59.1 1075.0,56.4 1072.7,55.9 1070.4,56.3 1068.1,60.5 1065.8,57.7 1063.5,61.0 1061.3,57.2 1059.0,60.1 1056.7,55.2 1054.4,33.0" fill="#2c47dc" stroke="#2034a8" stroke-width="1"/><polygon points="1104.4,33.0 1106.6,24.5 1108.8,14.0 1111.1,9.6 1113.3,11.0 1115.5,8.8 1117.7,10.3 1120.0,12.4 1122.2,11.6 1124.4,13.7 1126.6,12.7 1128.8,13.8 1131.1,14.2 1133.3,15.3 1135.5,15.6 1137.7,15.0 1140.0,15.3 1142.2,14.9 1144.4,15.5 1146.6,17.6 1148.8,17.5 1151.1,18.0 1153.3,17.1 1155.5,18.1 1157.7,19.5 1160.0,17.9 1162.2,19.0 1164.4,19.3 1166.6,20.2 1168.8,19.8 1171.1,21.2 1173.3,21.7 1175.5,21.3 1177.7,21.7 1180.0,22.0 1182.2,22.2 1184.4,22.5 1186.6,22.4 1188.8,23.5 1191.1,23.6 1193.3,23.8 1195.5,24.4 1197.7,24.7 1200.0,27.5 1202.2,29.5 1204.4,31.5 1204.4,34.4 1202.2,36.6 1200.0,38.4 1197.7,41.6 1195.5,42.0 1193.3,42.4 1191.1,42.5 1188.8,42.3 1186.6,43.5 1184.4,42.8 1182.2,43.0 1180.0,43.6 1177.7,43.8 1175.5,44.0 1173.3,44.0 1171.1,44.5 1168.8,45.2 1166.6,45.7 1164.4,46.9 1162.2,46.5 1160.0,48.7 1157.7,45.7 1155.5,46.9 1153.3,48.0 1151.1,47.9 1148.8,49.0 1146.6,48.9 1144.4,50.5 1142.2,52.0 1140.0,49.9 1137.7,50.9 1135.5,51.0 1133.3,51.6 1131.1,51.4 1128.8,52.9 1126.6,53.5 1124.4,51.4 1122.2,53.3 1120.0,54.5 1117.7,56.4 1115.5,56.9 1113.3,55.3 1111.1,56.1 1108.8,51.8 1106.6,41.7 1104.4,33.0" fill="#2c47dc" stroke="#2034a8" stroke-width="1"/><polygon points="1209.4,33.0 1211.6,12.4 1213.8,11.4 1216.0,11.7 1218.2,11.9 1220.4,12.6 1222.6,14.1 1224.8,13.2 1227.0,14.7 1229.2,13.5 1231.4,29.3 1231.4,36.6 1229.2,51.5 1227.0,51.5 1224.8,52.2 1222.6,51.5 1220.4,52.0 1218.2,53.3 1216.0,54.3 1213.8,55.4 1211.6,52.1 1209.4,33.0" fill="#2c47dc" stroke="#2034a8" stroke-width="1"/><polygon points="1234.4,33.0 1236.8,11.6 1239.2,12.6 1241.6,13.5 1244.0,14.3 1246.4,13.6 1248.8,15.0 1251.2,15.2 1253.6,13.1 1256.0,15.2 1258.4,29.4 1258.4,36.3 1256.0,50.1 1253.6,51.3 1251.2,50.7 1248.8,51.4 1246.4,53.2 1244.0,52.0 1241.6,52.9 1239.2,54.1 1236.8,55.4 1234.4,33.0" fill="#2c47dc" stroke="#2034a8" stroke-width="1"/><polygon points="1260.4,33.0 1262.8,16.9 1265.2,16.7 1267.6,18.1 1270.0,17.7 1272.4,16.4 1274.8,17.6 1277.2,18.2 1279.6,17.0 1282.0,17.3 1284.4,30.0 1284.4,35.8 1282.0,48.2 1279.6,48.1 1277.2,48.4 1274.8,47.6 1272.4,50.3 1270.0,48.1 1267.6,48.4 1265.2,48.1 1262.8,48.6 1260.4,33.0" fill="#2c47dc" stroke="#2034a8" stroke-width="1"/><polygon points="1286.4,33.0 1288.8,16.4 1291.2,16.7 1293.6,17.2 1296.0,15.8 1298.4,15.5 1300.8,16.2 1303.2,16.4 1305.6,17.1 1308.0,17.8 1310.4,29.8 1310.4,36.1 1308.0,47.6 1305.6,47.8 1303.2,50.3 1300.8,48.8 1298.4,51.0 1296.0,49.6 1293.6,47.7 1291.2,49.9 1288.8,49.6 1286.4,33.0" fill="#2c47dc" stroke="#2034a8" stroke-width="1"/><polygon points="1312.4,33.0 1314.6,25.3 1316.8,18.1 1319.0,10.6 1321.3,13.2 1323.5,11.6 1325.7,13.9 1327.9,14.7 1330.1,14.1 1332.3,14.2 1334.5,14.4 1336.7,15.6 1339.0,16.4 1341.2,15.0 1343.4,16.5 1345.6,17.0 1347.8,15.4 1350.0,16.9 1352.2,17.4 1354.4,17.4 1356.7,17.6 1358.9,18.3 1361.1,17.6 1363.3,18.5 1365.5,18.4 1367.7,18.1 1369.9,18.8 1372.1,19.4 1374.4,19.9 1376.6,19.6 1378.8,20.8 1381.0,21.1 1383.2,20.9 1385.4,20.9 1387.6,21.2 1389.8,22.1 1392.1,22.6 1394.3,22.2 1396.5,22.7 1398.7,23.2 1400.9,22.7 1403.1,22.6 1405.3,23.8 1407.5,24.2 1409.8,24.3 1412.0,27.0 1414.2,29.3 1416.4,31.4 1416.4,34.6 1414.2,36.8 1412.0,38.9 1409.8,41.6 1407.5,41.5 1405.3,41.8 1403.1,42.9 1400.9,43.2 1398.7,43.2 1396.5,43.5 1394.3,43.6 1392.1,43.2 1389.8,43.2 1387.6,45.2 1385.4,45.2 1383.2,44.2 1381.0,44.9 1378.8,45.0 1376.6,46.8 1374.4,46.3 1372.1,46.0 1369.9,46.4 1367.7,47.0 1365.5,47.4 1363.3,47.9 1361.1,48.2 1358.9,47.8 1356.7,48.5 1354.4,47.7 1352.2,49.3 1350.0,49.4 1347.8,49.3 1345.6,49.6 1343.4,49.4 1341.2,50.2 1339.0,48.9 1336.7,50.8 1334.5,50.8 1332.3,50.4 1330.1,51.7 1327.9,52.1 1325.7,52.2 1323.5,54.6 1321.3,52.0 1319.0,55.3 1316.8,47.9 1314.6,40.9 1312.4,33.0" fill="#2c47dc" stroke="#2034a8" stroke-width="1"/><polygon points="1419.4,33.0 1421.8,12.8 1424.2,15.2 1426.6,14.6 1429.0,13.2 1431.4,14.7 1433.8,13.6 1436.2,15.1 1438.6,16.4 1441.0,14.4 1443.4,29.6 1443.4,36.3 1441.0,50.5 1438.6,48.8 1436.2,51.2 1433.8,51.2 1431.4,51.7 1429.0,51.3 1426.6,50.4 1424.2,50.3 1421.8,53.6 1419.4,33.0" fill="#2c47dc" stroke="#2034a8" stroke-width="1"/><polygon points="1446.4,33.0 1448.8,17.7 1451.1,16.2 1453.5,17.6 1455.9,17.1 1458.2,17.4 1460.6,17.8 1462.9,16.6 1465.3,18.8 1467.7,17.6 1470.0,18.4 1472.4,29.9 1472.4,36.1 1470.0,47.8 1467.7,47.3 1465.3,46.8 1462.9,49.4 1460.6,47.7 1458.2,49.2 1455.9,48.2 1453.5,47.6 1451.1,50.0 1448.8,49.0 1446.4,33.0" fill="#2c47dc" stroke="#2034a8" stroke-width="1"/><polygon points="1474.4,33.0 1476.6,17.9 1478.8,16.1 1481.0,16.8 1483.2,17.1 1485.5,17.4 1487.7,17.4 1489.9,17.4 1492.1,16.0 1494.3,16.5 1496.5,17.8 1498.7,17.3 1500.9,18.4 1503.1,18.7 1505.3,18.5 1507.6,17.9 1509.8,18.8 1512.0,17.8 1514.2,21.2 1516.4,30.0 1516.4,35.7 1514.2,44.9 1512.0,47.7 1509.8,46.3 1507.6,47.4 1505.3,48.1 1503.1,46.6 1500.9,46.5 1498.7,48.2 1496.5,47.1 1494.3,48.6 1492.1,50.1 1489.9,48.2 1487.7,48.3 1485.5,47.8 1483.2,48.8 1481.0,48.6 1478.8,50.2 1476.6,48.5 1474.4,33.0" fill="#2c47dc" stroke="#2034a8" stroke-width="1"/><polygon points="1520.4,33.0 1522.6,27.9 1524.8,22.5 1527.1,16.8 1529.3,11.8 1531.5,11.7 1533.7,10.4 1536.0,11.8 1538.2,11.5 1540.4,11.4 1542.6,11.8 1544.8,13.9 1547.1,13.8 1549.3,13.8 1551.5,12.9 1553.7,14.8 1556.0,15.3 1558.2,16.1 1560.4,15.1 1562.6,14.3 1564.8,15.4 1567.1,16.9 1569.3,16.1 1571.5,15.9 1573.7,16.8 1576.0,17.5 1578.2,18.7 1580.4,18.3 1582.6,18.7 1584.8,18.8 1587.1,19.5 1589.3,19.6 1591.5,19.7 1593.7,20.3 1596.0,19.6 1598.2,19.9 1600.4,20.7 1602.6,21.5 1604.8,21.8 1607.1,21.2 1609.3,21.9 1611.5,22.6 1613.7,21.5 1616.0,22.7 1618.2,23.1 1620.4,22.7 1622.6,23.3 1624.8,22.8 1627.1,23.5 1629.3,24.0 1631.5,24.5 1633.7,24.0 1636.0,24.2 1638.2,25.3 1640.4,25.4 1642.6,24.9 1644.8,26.0 1647.1,25.7 1649.3,26.7 1651.5,26.5 1653.7,26.7 1656.0,26.8 1658.2,27.1 1660.4,27.0 1662.6,27.7 1664.8,28.0 1667.1,28.0 1669.3,28.0 1671.5,29.5 1673.7,30.2 1676.0,31.0 1678.2,31.6 1680.4,32.3 1680.4,33.6 1678.2,34.4 1676.0,34.9 1673.7,35.8 1671.5,36.5 1669.3,38.1 1667.1,38.1 1664.8,38.1 1662.6,38.5 1660.4,38.8 1658.2,39.1 1656.0,39.2 1653.7,39.4 1651.5,39.2 1649.3,39.3 1647.1,39.9 1644.8,39.7 1642.6,40.6 1640.4,40.4 1638.2,40.5 1636.0,41.2 1633.7,41.8 1631.5,41.8 1629.3,41.7 1627.1,42.5 1624.8,43.4 1622.6,42.6 1620.4,43.7 1618.2,42.7 1616.0,43.3 1613.7,44.4 1611.5,43.0 1609.3,43.6 1607.1,44.6 1604.8,44.0 1602.6,44.1 1600.4,44.9 1598.2,45.1 1596.0,46.3 1593.7,45.6 1591.5,46.0 1589.3,45.5 1587.1,46.6 1584.8,47.0 1582.6,46.4 1580.4,47.4 1578.2,46.9 1576.0,48.0 1573.7,48.1 1571.5,49.2 1569.3,50.7 1567.1,49.3 1564.8,51.3 1562.6,50.9 1560.4,51.4 1558.2,49.9 1556.0,49.4 1553.7,50.6 1551.5,52.1 1549.3,51.6 1547.1,52.4 1544.8,51.1 1542.6,54.4 1540.4,53.6 1538.2,53.2 1536.0,53.7 1533.7,53.8 1531.5,53.0 1529.3,53.2 1527.1,48.0 1524.8,43.7 1522.6,38.2 1520.4,33.0" fill="#2c47dc" stroke="#2034a8" stroke-width="1"/></svg>
<div style="left:1015.3px;top:873.4px;width:414px;height:65.5px;background:linear-gradient(#d94a52,#cf3f46 60%,#c8383e);border:1.6px solid #ec7476;"></div>
<div style="left:1072.3px;top:878.3px;width:355.5px;height:14.2px;background:#c23238;"></div>
<div style="left:1016.9px;top:917.5px;width:410.8px;height:20px;background:linear-gradient(#ab191c,#a11215);"></div>
<div class="t" style="left:1023.3px;top:877.5px;font-size:18px;line-height:21.6px;color:#fbe9ea;font-weight:bold;">Perc</div>
<div style="left:1431px;top:873.4px;width:415.3px;height:65.5px;background:linear-gradient(#d94a52,#cf3f46 60%,#c8383e);border:1.6px solid #ec7476;"></div>
<div style="left:1488px;top:878.3px;width:356.8px;height:14.2px;background:#c23238;"></div>
<div style="left:1432.6px;top:917.5px;width:412.1px;height:20px;background:linear-gradient(#ab191c,#a11215);"></div>
<div class="t" style="left:1439px;top:877.5px;font-size:18px;line-height:21.6px;color:#fbe9ea;font-weight:bold;">Perc</div>
<div style="left:1848px;top:873.4px;width:415px;height:65.5px;background:linear-gradient(#d94a52,#cf3f46 60%,#c8383e);border:1.6px solid #ec7476;"></div>
<div style="left:1905px;top:878.3px;width:356.5px;height:14.2px;background:#c23238;"></div>
<div style="left:1849.6px;top:917.5px;width:411.8px;height:20px;background:linear-gradient(#ab191c,#a11215);"></div>
<div class="t" style="left:1856px;top:877.5px;font-size:18px;line-height:21.6px;color:#fbe9ea;font-weight:bold;">Perc</div>
<div style="left:2264.6px;top:873.4px;width:157.4px;height:65.5px;background:linear-gradient(#d94a52,#cf3f46 60%,#c8383e);border:1.6px solid #ec7476;border-right:none;"></div>
<div style="left:2321.6px;top:878.3px;width:98.9px;height:14.2px;background:#c23238;"></div>
<div style="left:2266.2px;top:917.5px;width:154.2px;height:20px;background:linear-gradient(#ab191c,#a11215);"></div>
<div class="t" style="left:2272.6px;top:877.5px;font-size:18px;line-height:21.6px;color:#fbe9ea;font-weight:bold;">Perc</div>
<div style="left:743.6px;top:945px;width:145.1px;height:65.4px;background:linear-gradient(#e69562,#d9824a 45%,#cc7038 70%);border-top:1.6px solid #f0a878;"></div>
<div style="left:743.6px;top:961.6px;width:62px;height:6.4px;background:#c4623a;"></div>
<div style="left:743.6px;top:988.8px;width:145.1px;height:21.6px;background:linear-gradient(#a94619,#9e3c12);"></div>
<div style="left:888.7px;top:945px;width:1533.3px;height:65.4px;background:linear-gradient(#e59561 0%,#d98048 40%,#cb6b32 75%,#c0602a 100%);border:1.6px solid #f0ac80;border-right:none;border-bottom:none;"></div>
<div style="left:1015px;top:947px;width:1407px;height:14.5px;background:#c66a3c;"></div>
<div style="left:988.5px;top:954.6px;width:28px;height:6.9px;background:#c66a3c;"></div>
<div style="left:1015px;top:1002px;width:1407px;height:8.4px;background:linear-gradient(#b0501c,#a34414);"></div>
<div style="left:890px;top:1008.8px;width:126px;height:1.6px;background:#eaa478;"></div>
<div class="t" style="left:896px;top:951px;font-size:18.5px;line-height:22.2px;color:#3c2a20;font-weight:bold;">ELEC GIT</div>
<div style="left:743.6px;top:1016.7px;width:218.9px;height:65px;background:linear-gradient(#e2c03a,#dab82c 40%,#cfa818 75%,#c8a010);border-top:1.6px solid #f0d460;"></div>
<div style="left:743.6px;top:1021px;width:218.9px;height:14px;background:#c8a43c;"></div>
<div style="left:962.5px;top:1016.7px;width:1459.5px;height:65px;background:linear-gradient(#e8c840,#e0bc30 40%,#d4ac1c 80%,#cca414);border:1.6px solid #f0d868;border-right:none;border-bottom:none;"></div>
<div style="left:1057px;top:1035px;width:1365px;height:29.5px;background:linear-gradient(#b8942e,#a88222 55%,#a47c20);"></div>
<div style="left:965px;top:1048px;width:93px;height:16.5px;background:#a88424;"></div>
<div style="left:965px;top:1041px;width:93px;height:7px;background:#c4a030;"></div>
<div class="t" style="left:970px;top:1022.5px;font-size:18.5px;line-height:22.2px;color:#33290c;font-weight:bold;">Ac REAL</div>
<div style="left:743.6px;top:1085px;width:1678.4px;height:276px;background:repeating-linear-gradient(#acb7c8 0,#acb7c8 6.76px,#9fabbc 6.76px,#9fabbc 13.52px);"></div>
<svg style="left:743.6px;top:1085px;" width="1678.4" height="276" viewBox="0 0 1678.4 276"><rect x="0" y="32.6" width="1678.4" height="1.4" fill="#77818f"/><rect x="0" y="86.6" width="1678.4" height="1.4" fill="#77818f"/><rect x="0" y="128.3" width="1678.4" height="1.4" fill="#77818f"/><rect x="0" y="182.3" width="1678.4" height="1.4" fill="#77818f"/><rect x="0" y="222.9" width="1678.4" height="1.4" fill="#77818f"/><rect x="62.7" y="0" width="1.8" height="276" fill="#4d5563"/><rect x="166.8" y="0" width="1.8" height="276" fill="#4d5563"/><rect x="270.9" y="0" width="1.8" height="276" fill="#4d5563"/><rect x="375.0" y="0" width="1.8" height="276" fill="#4d5563"/><rect x="479.1" y="0" width="1.8" height="276" fill="#4d5563"/><rect x="583.2" y="0" width="1.8" height="276" fill="#4d5563"/><rect x="687.4" y="0" width="1.8" height="276" fill="#4d5563"/><rect x="791.5" y="0" width="1.8" height="276" fill="#4d5563"/><rect x="895.6" y="0" width="1.8" height="276" fill="#4d5563"/><rect x="999.7" y="0" width="1.8" height="276" fill="#4d5563"/><rect x="1103.8" y="0" width="1.8" height="276" fill="#4d5563"/><rect x="1207.9" y="0" width="1.8" height="276" fill="#4d5563"/><rect x="1312.0" y="0" width="1.8" height="276" fill="#4d5563"/><rect x="1416.2" y="0" width="1.8" height="276" fill="#4d5563"/><rect x="1520.3" y="0" width="1.8" height="276" fill="#4d5563"/><rect x="1624.4" y="0" width="1.8" height="276" fill="#4d5563"/><rect x="213.0" y="36.6" width="42.4" height="6" fill="#a8044e" stroke="rgba(40,0,40,.55)" stroke-width="0.9"/><rect x="267.7" y="36.6" width="57.5" height="6" fill="#a8044e" stroke="rgba(40,0,40,.55)" stroke-width="0.9"/><rect x="584.4" y="36.6" width="48.6" height="6" fill="#d00a34" stroke="rgba(40,0,40,.55)" stroke-width="0.9"/><rect x="7.2" y="63.6" width="16.7" height="6" fill="#8a0460" stroke="rgba(40,0,40,.55)" stroke-width="0.9"/><rect x="59.4" y="63.6" width="102.5" height="6" fill="#6a0470" stroke="rgba(40,0,40,.55)" stroke-width="0.9"/><rect x="477.2" y="63.6" width="48.8" height="6" fill="#dc0a20" stroke="rgba(40,0,40,.55)" stroke-width="0.9"/><rect x="894.2" y="63.6" width="57.2" height="6" fill="#dc0a20" stroke="rgba(40,0,40,.55)" stroke-width="0.9"/><rect x="998.2" y="63.6" width="123.2" height="6" fill="#b4043a" stroke="rgba(40,0,40,.55)" stroke-width="0.9"/><rect x="1154.7" y="63.6" width="198.1" height="6" fill="#d80520" stroke="rgba(40,0,40,.55)" stroke-width="0.9"/><rect x="1364.1" y="63.6" width="99.7" height="6" fill="#c00530" stroke="rgba(40,0,40,.55)" stroke-width="0.9"/><rect x="0.4" y="70.4" width="13.0" height="6" fill="#5a1090" stroke="rgba(40,0,40,.55)" stroke-width="0.9"/><rect x="213.0" y="70.4" width="110.4" height="6" fill="#a8044e" stroke="rgba(40,0,40,.55)" stroke-width="0.9"/><rect x="375.8" y="70.4" width="63.1" height="6" fill="#dc0a20" stroke="rgba(40,0,40,.55)" stroke-width="0.9"/><rect x="790.4" y="70.4" width="53.8" height="6" fill="#f00a0a" stroke="rgba(40,0,40,.55)" stroke-width="0.9"/><rect x="1415.2" y="70.4" width="46.8" height="6" fill="#c00530" stroke="rgba(40,0,40,.55)" stroke-width="0.9"/><rect x="1673.7" y="70.4" width="4.7" height="6" fill="#dc0a20" stroke="rgba(40,0,40,.55)" stroke-width="0.9"/><rect x="267.7" y="91.1" width="50.7" height="6" fill="#d40830" stroke="rgba(40,0,40,.55)" stroke-width="0.9"/><rect x="426.0" y="91.1" width="6.1" height="6" fill="#1010e0" stroke="rgba(40,0,40,.55)" stroke-width="0.9"/><rect x="684.7" y="91.1" width="60.7" height="6" fill="#c0043a" stroke="rgba(40,0,40,.55)" stroke-width="0.9"/><rect x="896.0" y="91.1" width="4.4" height="6" fill="#580088" stroke="rgba(40,0,40,.55)" stroke-width="0.9"/><rect x="1624.8" y="91.1" width="11.1" height="6" fill="#dc0a20" stroke="rgba(40,0,40,.55)" stroke-width="0.9"/><rect x="218.2" y="97.8" width="23.6" height="6" fill="#6a3598" stroke="rgba(40,0,40,.55)" stroke-width="0.9"/><rect x="0.4" y="104.6" width="33.6" height="6" fill="#9a0458" stroke="rgba(40,0,40,.55)" stroke-width="0.9"/><rect x="59.4" y="104.6" width="103.6" height="6" fill="#a00458" stroke="rgba(40,0,40,.55)" stroke-width="0.9"/><rect x="271.6" y="104.6" width="184.6" height="6" fill="#672a83" stroke="rgba(40,0,40,.55)" stroke-width="0.9"/><rect x="479.4" y="104.6" width="105.0" height="6" fill="#672a83" stroke="rgba(40,0,40,.55)" stroke-width="0.9"/><rect x="530.1" y="104.6" width="6.0" height="6" fill="#1010e0" stroke="rgba(40,0,40,.55)" stroke-width="0.9"/><rect x="584.4" y="104.6" width="55.3" height="6" fill="#d00838" stroke="rgba(40,0,40,.55)" stroke-width="0.9"/><rect x="639.7" y="104.6" width="22.5" height="6" fill="#672a83" stroke="rgba(40,0,40,.55)" stroke-width="0.9"/><rect x="687.0" y="104.6" width="187.4" height="6" fill="#6a3598" stroke="rgba(40,0,40,.55)" stroke-width="0.9"/><rect x="896.4" y="104.6" width="101.8" height="6" fill="#672a83" stroke="rgba(40,0,40,.55)" stroke-width="0.9"/><rect x="998.2" y="104.6" width="61.9" height="6" fill="#c80838" stroke="rgba(40,0,40,.55)" stroke-width="0.9"/><rect x="1060.1" y="104.6" width="25.9" height="6" fill="#672a83" stroke="rgba(40,0,40,.55)" stroke-width="0.9"/><rect x="1103.4" y="104.6" width="105.8" height="6" fill="#6a3598" stroke="rgba(40,0,40,.55)" stroke-width="0.9"/><rect x="1209.2" y="104.6" width="84.0" height="6" fill="#d80520" stroke="rgba(40,0,40,.55)" stroke-width="0.9"/><rect x="1314.1" y="104.6" width="185.5" height="6" fill="#6a3598" stroke="rgba(40,0,40,.55)" stroke-width="0.9"/><rect x="1521.0" y="104.6" width="157.4" height="6" fill="#672a83" stroke="rgba(40,0,40,.55)" stroke-width="0.9"/><rect x="684.7" y="118.1" width="35.4" height="6" fill="#b8043a" stroke="rgba(40,0,40,.55)" stroke-width="0.9"/><rect x="733.8" y="118.1" width="4.6" height="6" fill="#580088" stroke="rgba(40,0,40,.55)" stroke-width="0.9"/><rect x="1100.2" y="118.1" width="165.9" height="6" fill="#d00528" stroke="rgba(40,0,40,.55)" stroke-width="0.9"/><rect x="0.4" y="131.6" width="38.8" height="6" fill="#6a3598" stroke="rgba(40,0,40,.55)" stroke-width="0.9"/><rect x="213.0" y="131.6" width="37.4" height="6" fill="#b0044a" stroke="rgba(40,0,40,.55)" stroke-width="0.9"/><rect x="347.7" y="131.6" width="81.0" height="6" fill="#580088" stroke="rgba(40,0,40,.55)" stroke-width="0.9"/><rect x="449.4" y="131.6" width="85.2" height="6" fill="#4c0898" stroke="rgba(40,0,40,.55)" stroke-width="0.9"/><rect x="972.4" y="131.6" width="6.0" height="6" fill="#1010e0" stroke="rgba(40,0,40,.55)" stroke-width="0.9"/><rect x="1074.8" y="131.6" width="29.2" height="6" fill="#d00830" stroke="rgba(40,0,40,.55)" stroke-width="0.9"/><rect x="1309.6" y="131.6" width="157.4" height="6" fill="#d80520" stroke="rgba(40,0,40,.55)" stroke-width="0.9"/><rect x="56.1" y="145.1" width="86.7" height="6" fill="#580088" stroke="rgba(40,0,40,.55)" stroke-width="0.9"/><rect x="142.8" y="145.1" width="22.5" height="6" fill="#6a3598" stroke="rgba(40,0,40,.55)" stroke-width="0.9"/><rect x="1284.2" y="145.1" width="28.1" height="6" fill="#dc0a20" stroke="rgba(40,0,40,.55)" stroke-width="0.9"/><rect x="1519.0" y="145.1" width="50.0" height="6" fill="#c80530" stroke="rgba(40,0,40,.55)" stroke-width="0.9"/><rect x="1569.0" y="145.1" width="31.4" height="6" fill="#672a83" stroke="rgba(40,0,40,.55)" stroke-width="0.9"/><rect x="1600.4" y="145.1" width="28.3" height="6" fill="#580088" stroke="rgba(40,0,40,.55)" stroke-width="0.9"/><rect x="1628.7" y="145.1" width="23.2" height="6" fill="#672a83" stroke="rgba(40,0,40,.55)" stroke-width="0.9"/><rect x="1651.9" y="145.1" width="9.5" height="6" fill="#580088" stroke="rgba(40,0,40,.55)" stroke-width="0.9"/><rect x="1661.4" y="145.1" width="17.0" height="6" fill="#672a83" stroke="rgba(40,0,40,.55)" stroke-width="0.9"/><rect x="0.4" y="159.1" width="33.6" height="6" fill="#672a83" stroke="rgba(40,0,40,.55)" stroke-width="0.9"/><rect x="65.1" y="159.1" width="100.2" height="6" fill="#672a83" stroke="rgba(40,0,40,.55)" stroke-width="0.9"/><rect x="271.6" y="159.1" width="174.8" height="6" fill="#672a83" stroke="rgba(40,0,40,.55)" stroke-width="0.9"/><rect x="479.4" y="159.1" width="182.4" height="6" fill="#672a83" stroke="rgba(40,0,40,.55)" stroke-width="0.9"/><rect x="657.8" y="159.1" width="4.0" height="6" fill="#580088" stroke="rgba(40,0,40,.55)" stroke-width="0.9"/><rect x="684.7" y="159.1" width="51.7" height="6" fill="#a80450" stroke="rgba(40,0,40,.55)" stroke-width="0.9"/><rect x="736.4" y="159.1" width="134.8" height="6" fill="#6a3598" stroke="rgba(40,0,40,.55)" stroke-width="0.9"/><rect x="763.1" y="159.1" width="4.5" height="6" fill="#580088" stroke="rgba(40,0,40,.55)" stroke-width="0.9"/><rect x="843.4" y="159.1" width="5.7" height="6" fill="#1010e0" stroke="rgba(40,0,40,.55)" stroke-width="0.9"/><rect x="896.4" y="159.1" width="187.6" height="6" fill="#672a83" stroke="rgba(40,0,40,.55)" stroke-width="0.9"/><rect x="1100.2" y="159.1" width="149.1" height="6" fill="#84005e" stroke="rgba(40,0,40,.55)" stroke-width="0.9"/><rect x="1249.3" y="159.1" width="18.6" height="6" fill="#6c46b8" stroke="rgba(40,0,40,.55)" stroke-width="0.9"/><rect x="1314.1" y="159.1" width="177.9" height="6" fill="#672a83" stroke="rgba(40,0,40,.55)" stroke-width="0.9"/><rect x="1492.0" y="159.1" width="42.8" height="6" fill="#dc0a20" stroke="rgba(40,0,40,.55)" stroke-width="0.9"/><rect x="1534.8" y="159.1" width="143.6" height="6" fill="#672a83" stroke="rgba(40,0,40,.55)" stroke-width="0.9"/><rect x="218.2" y="165.8" width="21.8" height="6" fill="#6a3598" stroke="rgba(40,0,40,.55)" stroke-width="0.9"/><rect x="0.4" y="186.1" width="13.0" height="6" fill="#3208c0" stroke="rgba(40,0,40,.55)" stroke-width="0.9"/><rect x="13.4" y="186.1" width="10.5" height="6" fill="#6a3598" stroke="rgba(40,0,40,.55)" stroke-width="0.9"/><rect x="271.6" y="186.1" width="135.3" height="6" fill="#6a3598" stroke="rgba(40,0,40,.55)" stroke-width="0.9"/><rect x="687.0" y="186.1" width="172.3" height="6" fill="#6a3598" stroke="rgba(40,0,40,.55)" stroke-width="0.9"/><rect x="1103.4" y="186.1" width="130.5" height="6" fill="#6a3598" stroke="rgba(40,0,40,.55)" stroke-width="0.9"/><rect x="1309.6" y="186.1" width="133.8" height="6" fill="#580088" stroke="rgba(40,0,40,.55)" stroke-width="0.9"/><rect x="1469.4" y="186.1" width="7.7" height="6" fill="#580088" stroke="rgba(40,0,40,.55)" stroke-width="0.9"/><rect x="214.4" y="192.9" width="22.3" height="6" fill="#5a0478" stroke="rgba(40,0,40,.55)" stroke-width="0.9"/><rect x="56.1" y="199.6" width="91.8" height="6" fill="#6a0470" stroke="rgba(40,0,40,.55)" stroke-width="0.9"/><rect x="479.4" y="199.6" width="22.5" height="6" fill="#6c46b8" stroke="rgba(40,0,40,.55)" stroke-width="0.9"/><rect x="896.4" y="199.6" width="172.7" height="6" fill="#6c46b8" stroke="rgba(40,0,40,.55)" stroke-width="0.9"/><rect x="1314.1" y="199.6" width="161.5" height="6" fill="#6c46b8" stroke="rgba(40,0,40,.55)" stroke-width="0.9"/><rect x="1519.0" y="199.6" width="23.0" height="6" fill="#580088" stroke="rgba(40,0,40,.55)" stroke-width="0.9"/><rect x="1542.0" y="199.6" width="33.7" height="6" fill="#6c46b8" stroke="rgba(40,0,40,.55)" stroke-width="0.9"/><rect x="1575.7" y="199.6" width="85.6" height="6" fill="#3208c0" stroke="rgba(40,0,40,.55)" stroke-width="0.9"/><rect x="687.0" y="213.6" width="155.4" height="6" fill="#720468" stroke="rgba(40,0,40,.55)" stroke-width="0.9"/><rect x="1624.8" y="0.5" width="12" height="1.6" fill="#c03040"/></svg>
<div style="left:743.6px;top:1361px;width:1678.4px;height:32px;background:#05070a;"></div>
<div style="left:743.6px;top:1364px;width:1678.4px;height:24.5px;background:repeating-linear-gradient(55deg,#4198ec 0,#4198ec 4.2px,#3a86d4 4.2px,#3a86d4 5.4px);"></div>
<svg style="left:743.6px;top:1362px;" width="1678.4" height="31" viewBox="0 0 1678.4 31"><rect x="10.5" y="0" width="2" height="31" fill="#05070a"/><rect x="114.6" y="0" width="2" height="31" fill="#05070a"/><rect x="166.7" y="0" width="2" height="31" fill="#05070a"/><rect x="218.7" y="0" width="2" height="31" fill="#05070a"/><rect x="270.8" y="0" width="2" height="31" fill="#05070a"/><rect x="322.9" y="0" width="2" height="31" fill="#05070a"/><rect x="374.9" y="0" width="2" height="31" fill="#05070a"/><rect x="427.0" y="0" width="2" height="31" fill="#05070a"/><rect x="479.0" y="0" width="2" height="31" fill="#05070a"/><rect x="531.1" y="0" width="2" height="31" fill="#05070a"/><rect x="583.1" y="0" width="2" height="31" fill="#05070a"/><rect x="635.2" y="0" width="2" height="31" fill="#05070a"/><rect x="687.3" y="0" width="2" height="31" fill="#05070a"/><rect x="739.3" y="0" width="2" height="31" fill="#05070a"/><rect x="791.4" y="0" width="2" height="31" fill="#05070a"/><rect x="843.4" y="0" width="2" height="31" fill="#05070a"/><rect x="895.5" y="0" width="2" height="31" fill="#05070a"/><rect x="947.5" y="0" width="2" height="31" fill="#05070a"/><rect x="999.6" y="0" width="2" height="31" fill="#05070a"/><rect x="1051.7" y="0" width="2" height="31" fill="#05070a"/><rect x="1103.7" y="0" width="2" height="31" fill="#05070a"/><rect x="1155.8" y="0" width="2" height="31" fill="#05070a"/><rect x="1207.8" y="0" width="2" height="31" fill="#05070a"/><rect x="1259.9" y="0" width="2" height="31" fill="#05070a"/><rect x="1311.9" y="0" width="2" height="31" fill="#05070a"/><rect x="1364.0" y="0" width="2" height="31" fill="#05070a"/><rect x="1416.1" y="0" width="2" height="31" fill="#05070a"/><rect x="1468.1" y="0" width="2" height="31" fill="#05070a"/><rect x="1520.2" y="0" width="2" height="31" fill="#05070a"/><rect x="1572.2" y="0" width="2" height="31" fill="#05070a"/><rect x="1624.3" y="0" width="2" height="31" fill="#05070a"/><rect x="1676.4" y="0" width="2" height="31" fill="#05070a"/></svg>
<div style="left:743.6px;top:1391.5px;width:1678.4px;height:5.5px;background:#1e3356;"></div>
<div style="left:743.6px;top:1396.9px;width:219.7px;height:64.7px;background:linear-gradient(#78b4f2,#66a4ea 40%,#5496e2 70%,#4a8cdc);border-top:1.6px solid #8cc0f6;"></div>
<div style="left:743.6px;top:1401.5px;width:219.7px;height:6.5px;background:#5c9ae2;"></div>
<div style="left:743.6px;top:1433.5px;width:219.7px;height:7px;background:#4484d2;"></div>
<div style="left:963.3px;top:1396.9px;width:1143.7px;height:64.7px;background:linear-gradient(#7cbaf6,#68a8ee 40%,#5698e4 75%,#4e90e0);border:1.6px solid #90c4f8;border-bottom:1.6px solid #3f80cc;"></div>
<div style="left:1045.3px;top:1402px;width:1059.7px;height:6px;background:#5e9ee4;"></div>
<div class="t" style="left:970.3px;top:1401.5px;font-size:18.5px;line-height:22.2px;color:#2a3547;font-weight:bold;">VOCAL</div>
<div style="left:2107px;top:1396.9px;width:315px;height:64.7px;background:linear-gradient(#7cbaf6,#68a8ee 40%,#5698e4 75%,#4e90e0);border:1.6px solid #90c4f8;border-bottom:1.6px solid #3f80cc;border-right:none;"></div>
<div style="left:2189px;top:1402px;width:231px;height:6px;background:#5e9ee4;"></div>
<div class="t" style="left:2114px;top:1401.5px;font-size:18.5px;line-height:22.2px;color:#2a3547;font-weight:bold;">VOCAL</div>
<div style="left:743.6px;top:1469.5px;width:220.8px;height:292.8px;background:linear-gradient(#78b8f5 0%,#5a9ee4 45%,#4690de 70%,#3a84d8 100%);border-top:1.4px solid #94c8f8;"></div>
<svg style="left:743.6px;top:1469.5px;" width="220.8" height="292.8" viewBox="0 0 220.8 292.8"><polygon points="0.4,150.3 2.6,149.0 4.8,148.2 7.0,146.6 9.2,142.8 11.4,135.2 13.6,124.1 15.8,121.8 18.0,124.0 20.2,118.2 22.4,117.9 24.6,122.6 26.8,118.6 29.0,114.6 31.2,119.4 33.4,117.7 35.6,113.1 37.8,111.9 40.0,112.1 42.2,107.7 44.4,110.0 46.6,110.0 48.8,112.8 51.0,113.6 53.2,116.6 55.4,110.5 57.6,109.9 59.8,114.7 62.0,115.1 64.2,111.7 66.4,119.6 68.6,115.3 70.8,117.6 73.0,118.0 75.2,120.9 77.4,119.4 79.6,122.5 81.8,122.2 84.0,122.9 86.2,123.8 88.4,126.0 90.6,122.8 92.8,124.2 95.0,124.0 97.2,127.4 99.4,125.5 101.6,126.8 103.8,129.5 106.0,127.5 108.2,131.6 110.4,128.7 112.6,128.8 114.8,132.0 117.0,133.4 119.2,136.7 121.4,136.2 123.6,138.9 125.8,142.2 128.0,143.8 130.2,146.6 132.4,147.2 134.6,148.7 136.8,150.1 139.0,150.1 141.2,150.2 143.4,150.2 145.6,150.2 147.8,150.2 150.0,150.3 152.2,150.3 154.4,150.3 156.6,150.3 158.8,150.4 161.0,150.4 163.2,150.4 165.4,150.4 167.6,150.5 169.8,150.5 172.0,150.5 174.2,150.5 176.4,150.6 178.6,150.6 180.8,150.6 183.0,150.7 185.2,150.7 187.4,150.7 189.6,150.7 191.8,150.8 194.0,150.8 196.2,150.8 198.4,150.8 200.6,150.9 202.8,150.9 205.0,150.9 207.2,150.9 209.4,151.0 211.6,151.0 213.8,151.0 216.0,151.0 218.2,151.1 218.2,153.1 216.0,153.2 213.8,153.2 211.6,153.2 209.4,153.2 207.2,153.3 205.0,153.3 202.8,153.3 200.6,153.3 198.4,153.4 196.2,153.4 194.0,153.4 191.8,153.4 189.6,153.5 187.4,153.5 185.2,153.5 183.0,153.5 180.8,153.6 178.6,153.6 176.4,153.6 174.2,153.7 172.0,153.7 169.8,153.7 167.6,153.7 165.4,153.8 163.2,153.8 161.0,153.8 158.8,153.8 156.6,153.9 154.4,153.9 152.2,153.9 150.0,153.9 147.8,154.0 145.6,154.0 143.4,154.0 141.2,154.0 139.0,154.1 136.8,154.1 134.6,155.3 132.4,157.0 130.2,157.9 128.0,160.8 125.8,163.5 123.6,164.7 121.4,168.3 119.2,168.6 117.0,170.2 114.8,172.7 112.6,172.6 110.4,175.0 108.2,177.1 106.0,174.9 103.8,176.0 101.6,177.7 99.4,179.5 97.2,182.9 95.0,184.2 92.8,184.1 90.6,183.7 88.4,187.7 86.2,184.3 84.0,188.6 81.8,191.9 79.6,187.8 77.4,192.1 75.2,193.2 73.0,195.6 70.8,195.0 68.6,200.3 66.4,194.3 64.2,197.6 62.0,198.4 59.8,199.1 57.6,204.6 55.4,199.5 53.2,203.3 51.0,207.0 48.8,208.7 46.6,211.4 44.4,206.7 42.2,209.4 40.0,209.5 37.8,199.5 35.6,185.3 33.4,185.2 31.2,189.2 29.0,195.9 26.8,198.4 24.6,203.3 22.4,209.3 20.2,210.8 18.0,201.7 15.8,201.5 13.6,197.9 11.4,184.2 9.2,166.0 7.0,159.0 4.8,157.6 2.6,155.7 0.4,154.1" fill="rgba(38,98,170,.78)" stroke="#1d4a82" stroke-width="1.1"/></svg>
<div style="left:964.4px;top:1469.5px;width:1141.6px;height:292.8px;background:linear-gradient(#78b8f5 0%,#5a9ee4 45%,#4690de 70%,#3a84d8 100%);"></div>
<svg style="left:964.4px;top:1469.5px;" width="1141.6" height="292.8" viewBox="0 0 1141.6 292.8"><defs><linearGradient id="dk" gradientUnits="userSpaceOnUse" x1="0" y1="0" x2="0" y2="292.8"><stop offset="0" stop-color="#47494d"/><stop offset="0.45" stop-color="#2b2d31"/><stop offset="0.6" stop-color="#17191c"/><stop offset="1" stop-color="#0a0c0e"/></linearGradient></defs><polygon points="0.0,0.0 0.0,149.8 0.0,150.1 1.7,150.1 3.4,149.2 5.1,149.4 6.8,148.4 8.5,148.6 10.2,147.6 11.9,147.7 13.6,146.8 15.3,146.5 17.0,146.7 18.7,146.9 20.4,146.8 22.1,143.1 23.8,140.2 25.5,137.4 27.2,138.6 28.9,136.0 30.6,137.4 32.3,136.0 34.0,139.4 35.7,137.5 37.4,140.9 39.1,141.6 40.8,140.3 42.5,140.4 44.2,142.8 45.9,142.1 47.6,141.0 49.3,136.8 51.0,139.7 52.7,139.9 54.4,96.4 56.1,109.2 57.8,115.4 59.5,124.0 61.2,126.7 62.9,128.6 64.6,129.8 66.3,139.1 68.0,129.7 69.7,133.9 71.4,131.1 73.1,144.7 74.8,130.0 76.5,129.8 78.2,129.9 79.9,135.0 81.6,130.4 83.3,140.5 85.0,135.1 86.7,134.0 88.4,135.4 90.1,133.2 91.8,135.8 93.5,131.8 95.2,131.8 96.9,134.8 98.6,136.7 100.3,136.9 102.0,130.2 103.7,125.1 105.4,128.4 107.1,128.2 108.8,130.2 110.5,135.9 112.2,133.5 113.9,136.5 115.6,139.3 117.3,140.8 119.0,138.9 120.7,140.6 122.4,141.0 124.1,142.3 125.8,144.2 127.5,143.8 129.2,113.1 130.9,79.3 132.6,63.2 134.3,56.6 136.0,106.4 137.7,58.1 139.4,98.8 141.1,118.8 142.8,125.0 144.5,126.7 146.2,136.8 147.9,128.4 149.6,122.3 151.3,117.9 153.0,115.9 154.7,121.2 156.4,114.6 158.1,99.3 159.8,65.0 161.5,60.6 163.2,33.2 164.9,27.5 166.6,27.4 168.3,40.0 170.0,49.8 171.7,59.1 173.4,40.7 175.1,60.2 176.8,61.4 178.5,84.7 180.2,92.5 181.9,91.8 183.6,75.6 185.3,73.1 187.0,64.0 188.7,74.4 190.4,64.6 192.1,88.2 193.8,77.5 195.5,87.4 197.2,80.3 198.9,70.1 200.6,92.6 202.3,29.4 204.0,44.5 205.7,33.1 207.4,49.1 209.1,57.3 210.8,85.7 212.5,119.0 214.2,138.9 215.9,111.3 217.6,53.2 219.3,29.5 221.0,18.9 222.7,46.7 224.4,76.9 226.1,86.7 227.8,88.0 229.5,70.6 231.2,69.9 232.9,64.7 234.6,45.6 236.3,61.8 238.0,52.7 239.7,91.0 241.4,30.5 243.1,5.7 244.8,36.6 246.5,53.4 248.2,100.0 249.9,129.0 251.6,147.5 253.3,119.9 255.0,92.7 256.7,64.2 258.4,47.2 260.1,74.6 261.8,58.9 263.5,79.6 265.2,72.5 266.9,61.3 268.6,89.2 270.3,55.7 272.0,55.6 273.7,76.3 275.4,61.3 277.1,53.5 278.8,67.1 280.5,49.7 282.2,60.0 283.9,76.0 285.6,77.5 287.3,77.6 289.0,84.1 290.7,87.8 292.4,90.6 294.1,102.7 295.8,108.9 297.5,108.3 299.2,117.4 300.9,128.4 302.6,115.1 304.3,116.8 306.0,117.9 307.7,120.4 309.4,113.2 311.1,124.3 312.8,83.3 314.5,103.2 316.2,103.4 317.9,103.3 319.6,110.8 321.3,116.3 323.0,106.6 324.7,104.9 326.4,132.8 328.1,106.6 329.8,106.5 331.5,109.4 333.2,113.4 334.9,119.8 336.6,117.1 338.3,118.3 340.0,120.3 341.7,121.6 343.4,127.4 345.1,129.5 346.8,130.0 348.5,132.5 350.2,140.4 351.9,132.7 353.6,139.2 355.3,137.9 357.0,138.0 358.7,140.4 360.4,126.1 362.1,0.0 363.8,77.7 365.5,0.0 367.2,0.0 368.9,25.2 370.6,0.0 372.3,8.1 374.0,31.7 375.7,21.2 377.4,4.4 379.1,35.1 380.8,54.7 382.5,56.2 384.2,47.9 385.9,28.4 387.6,52.9 389.3,34.6 391.0,43.7 392.7,57.1 394.4,33.2 396.1,36.2 397.8,37.0 399.5,19.7 401.2,24.3 402.9,29.9 404.6,40.5 406.3,53.6 408.0,70.3 409.7,78.4 411.4,117.1 413.1,107.1 414.8,40.1 416.5,31.1 418.2,15.2 419.9,19.8 421.6,55.8 423.3,66.1 425.0,77.7 426.7,95.5 428.4,82.0 430.1,101.1 431.8,93.2 433.5,97.0 435.2,102.2 436.9,115.0 438.6,116.0 440.3,116.9 442.0,116.4 443.7,112.6 445.4,120.5 447.1,119.7 448.8,119.1 450.5,122.2 452.2,122.4 453.9,123.9 455.6,124.8 457.3,120.7 459.0,109.3 460.7,68.3 462.4,28.8 464.1,40.6 465.8,9.1 467.5,0.0 469.2,23.7 470.9,10.7 472.6,11.9 474.3,22.8 476.0,32.2 477.7,31.9 479.4,45.8 481.1,52.2 482.8,58.7 484.5,94.5 486.2,80.1 487.9,92.3 489.6,100.1 491.3,106.7 493.0,103.1 494.7,111.2 496.4,106.5 498.1,102.6 499.8,111.5 501.5,105.7 503.2,111.9 504.9,112.2 506.6,116.4 508.3,115.8 510.0,121.3 511.7,125.2 513.4,128.3 515.1,126.4 516.8,130.7 518.5,135.2 520.2,133.2 521.9,135.3 523.6,138.5 525.3,136.1 527.0,138.9 528.7,138.4 530.4,141.9 532.1,141.6 533.8,141.4 535.5,143.8 537.2,143.2 538.9,144.0 540.6,146.7 542.3,124.5 544.0,58.5 545.7,22.2 547.4,5.7 549.1,33.4 550.8,54.5 552.5,58.2 554.2,78.4 555.9,96.2 557.6,84.2 559.3,83.4 561.0,96.8 562.7,98.4 564.4,111.6 566.1,111.5 567.8,101.7 569.5,93.1 571.2,92.1 572.9,98.5 574.6,93.5 576.3,89.4 578.0,73.2 579.7,76.7 581.4,69.0 583.1,90.6 584.8,79.5 586.5,78.4 588.2,78.6 589.9,81.6 591.6,76.4 593.3,77.8 595.0,84.5 596.7,65.6 598.4,90.3 600.1,61.3 601.8,62.3 603.5,60.7 605.2,59.7 606.9,75.0 608.6,76.2 610.3,85.4 612.0,91.6 613.7,62.4 615.4,54.5 617.1,21.8 618.8,0.0 620.5,22.6 622.2,0.0 623.9,0.0 625.6,30.5 627.3,37.6 629.0,89.8 630.7,57.7 632.4,68.6 634.1,60.7 635.8,57.1 637.5,50.9 639.2,50.9 640.9,36.4 642.6,31.5 644.3,46.0 646.0,30.3 647.7,20.3 649.4,34.8 651.1,20.1 652.8,14.0 654.5,38.1 656.2,16.8 657.9,25.8 659.6,10.7 661.3,16.0 663.0,36.1 664.7,87.2 666.4,31.0 668.1,34.6 669.8,62.6 671.5,103.3 673.2,76.0 674.9,76.9 676.6,85.9 678.3,49.0 680.0,43.0 681.7,6.7 683.4,0.0 685.1,66.9 686.8,26.8 688.5,32.9 690.2,28.2 691.9,30.6 693.6,37.2 695.3,42.1 697.0,63.3 698.7,65.5 700.4,68.4 702.1,88.7 703.8,89.7 705.5,85.2 707.2,112.1 708.9,109.3 710.6,111.0 712.3,100.1 714.0,107.1 715.7,100.6 717.4,80.8 719.1,91.6 720.8,110.6 722.5,91.3 724.2,121.8 725.9,77.9 727.6,77.2 729.3,77.8 731.0,40.5 732.7,83.5 734.4,22.8 736.1,31.0 737.8,29.8 739.5,66.3 741.2,61.1 742.9,79.0 744.6,123.8 746.3,100.8 748.0,108.3 749.7,113.1 751.4,109.7 753.1,121.0 754.8,114.8 756.5,115.4 758.2,117.5 759.9,122.3 761.6,115.4 763.3,128.6 765.0,116.5 766.7,118.3 768.4,121.6 770.1,117.9 771.8,112.7 773.5,99.5 775.2,117.8 776.9,77.1 778.6,69.2 780.3,56.2 782.0,63.7 783.7,30.1 785.4,44.5 787.1,30.1 788.8,71.5 790.5,37.7 792.2,41.9 793.9,36.0 795.6,74.2 797.3,24.1 799.0,53.1 800.7,46.5 802.4,41.0 804.1,49.0 805.8,63.8 807.5,69.6 809.2,48.6 810.9,96.9 812.6,52.3 814.3,66.3 816.0,64.0 817.7,61.8 819.4,75.7 821.1,77.3 822.8,83.1 824.5,83.2 826.2,96.5 827.9,99.9 829.6,91.1 831.3,116.1 833.0,106.0 834.7,106.2 836.4,98.8 838.1,123.2 839.8,106.0 841.5,104.5 843.2,102.1 844.9,82.2 846.6,62.2 848.3,53.7 850.0,41.4 851.7,30.3 853.4,55.6 855.1,44.5 856.8,54.6 858.5,60.7 860.2,109.5 861.9,123.4 863.6,91.2 865.3,85.2 867.0,87.3 868.7,87.2 870.4,89.9 872.1,96.6 873.8,93.8 875.5,100.6 877.2,102.1 878.9,90.0 880.6,103.0 882.3,104.9 884.0,99.4 885.7,100.9 887.4,112.0 889.1,109.9 890.8,110.0 892.5,111.7 894.2,116.9 895.9,118.0 897.6,132.4 899.3,118.3 901.0,113.8 902.7,114.7 904.4,120.2 906.1,135.3 907.8,123.2 909.5,127.5 911.2,124.8 912.9,129.9 914.6,127.5 916.3,132.4 918.0,131.9 919.7,134.9 921.4,137.1 923.1,136.4 924.8,136.4 926.5,138.4 928.2,140.2 929.9,143.1 931.6,143.8 933.3,144.4 935.0,145.7 936.7,144.2 938.4,146.6 940.1,147.4 941.8,144.2 943.5,143.1 945.2,143.6 946.9,143.3 948.6,143.6 950.3,146.8 952.0,141.7 953.7,140.9 955.4,143.2 957.1,143.0 958.8,140.7 960.5,141.1 962.2,136.0 963.9,132.5 965.6,129.2 967.3,123.4 969.0,124.2 970.7,114.6 972.4,111.3 974.1,108.2 975.8,127.3 977.5,102.9 979.2,92.5 980.9,85.6 982.6,96.4 984.3,81.8 986.0,85.5 987.7,68.5 989.4,67.6 991.1,52.8 992.8,37.4 994.5,50.5 996.2,15.2 997.9,32.4 999.6,26.7 1001.3,40.4 1003.0,14.7 1004.7,18.7 1006.4,0.0 1008.1,11.4 1009.8,25.8 1011.5,0.0 1013.2,0.0 1014.9,8.3 1016.6,51.0 1018.3,31.7 1020.0,44.7 1021.7,98.3 1023.4,50.2 1025.1,50.2 1026.8,59.9 1028.5,84.0 1030.2,46.0 1031.9,55.2 1033.6,62.6 1035.3,37.1 1037.0,47.7 1038.7,32.1 1040.4,72.1 1042.1,95.1 1043.8,39.7 1045.5,50.5 1047.2,63.6 1048.9,70.6 1050.6,86.8 1052.3,91.8 1054.0,98.7 1055.7,115.2 1057.4,98.8 1059.1,98.6 1060.8,94.6 1062.5,95.2 1064.2,105.5 1065.9,102.7 1067.6,101.7 1069.3,96.2 1071.0,90.8 1072.7,98.2 1074.4,93.5 1076.1,90.1 1077.8,76.0 1079.5,103.5 1081.2,82.9 1082.9,64.9 1084.6,100.6 1086.3,68.9 1088.0,49.1 1089.7,62.7 1091.4,59.6 1093.1,53.7 1094.8,48.9 1096.5,53.9 1098.2,36.4 1099.9,51.6 1101.6,48.2 1103.3,102.1 1105.0,100.8 1106.7,63.7 1108.4,88.7 1110.1,83.7 1111.8,83.7 1113.5,95.7 1115.2,98.5 1116.9,97.1 1118.6,108.1 1120.3,106.3 1122.0,116.6 1123.7,132.3 1125.4,122.3 1127.1,120.3 1128.8,125.2 1130.5,124.7 1132.2,129.0 1133.9,133.4 1135.6,131.2 1137.3,132.4 1139.0,130.8 1140.7,132.5 1141.6,132.5 1141.6,0.0" fill="url(#dk)"/><polygon points="0.0,292.8 0.0,154.0 0.0,153.8 1.7,154.1 3.4,154.3 5.1,154.6 6.8,155.5 8.5,155.7 10.2,155.5 11.9,155.9 13.6,157.1 15.3,157.1 17.0,157.2 18.7,157.4 20.4,158.2 22.1,159.6 23.8,161.2 25.5,164.9 27.2,164.0 28.9,165.2 30.6,165.2 32.3,168.9 34.0,170.8 35.7,170.1 37.4,170.1 39.1,170.3 40.8,171.3 42.5,172.4 44.2,170.8 45.9,171.9 47.6,171.3 49.3,170.4 51.0,169.4 52.7,169.1 54.4,198.2 56.1,208.4 57.8,209.0 59.5,204.2 61.2,209.1 62.9,206.4 64.6,203.1 66.3,205.7 68.0,192.9 69.7,199.4 71.4,199.2 73.1,200.9 74.8,198.9 76.5,191.8 78.2,198.1 79.9,189.3 81.6,195.5 83.3,194.2 85.0,194.1 86.7,190.0 88.4,187.9 90.1,190.5 91.8,194.3 93.5,188.8 95.2,185.6 96.9,188.3 98.6,185.3 100.3,185.1 102.0,184.6 103.7,180.5 105.4,179.6 107.1,174.7 108.8,170.5 110.5,166.9 112.2,165.1 113.9,162.2 115.6,163.6 117.3,161.4 119.0,163.3 120.7,162.1 122.4,163.0 124.1,162.1 125.8,162.2 127.5,161.3 129.2,191.5 130.9,218.1 132.6,224.1 134.3,238.3 136.0,228.8 137.7,238.7 139.4,226.1 141.1,220.5 142.8,212.9 144.5,215.4 146.2,193.1 147.9,192.3 149.6,178.7 151.3,176.8 153.0,177.1 154.7,178.0 156.4,178.6 158.1,196.9 159.8,218.9 161.5,269.3 163.2,282.4 164.9,292.8 166.6,292.8 168.3,279.7 170.0,292.8 171.7,286.1 173.4,268.6 175.1,289.6 176.8,292.2 178.5,265.1 180.2,292.8 181.9,283.1 183.6,284.9 185.3,280.3 187.0,239.8 188.7,290.4 190.4,277.6 192.1,271.0 193.8,256.9 195.5,211.9 197.2,245.0 198.9,274.4 200.6,277.7 202.3,220.3 204.0,283.9 205.7,292.8 207.4,292.8 209.1,292.8 210.8,254.1 212.5,207.5 214.2,170.2 215.9,201.0 217.6,252.4 219.3,292.8 221.0,271.0 222.7,287.1 224.4,263.9 226.1,260.6 227.8,252.9 229.5,262.7 231.2,289.2 232.9,280.9 234.6,292.8 236.3,292.4 238.0,292.8 239.7,285.6 241.4,284.8 243.1,292.8 244.8,292.8 246.5,239.2 248.2,206.4 249.9,174.8 251.6,155.5 253.3,191.1 255.0,239.2 256.7,276.8 258.4,281.9 260.1,247.1 261.8,288.3 263.5,278.3 265.2,266.5 266.9,229.9 268.6,249.5 270.3,261.3 272.0,257.3 273.7,250.0 275.4,251.0 277.1,261.8 278.8,258.0 280.5,253.0 282.2,203.7 283.9,261.1 285.6,248.0 287.3,243.1 289.0,251.5 290.7,237.9 292.4,251.0 294.1,230.7 295.8,229.0 297.5,220.2 299.2,224.2 300.9,186.7 302.6,207.2 304.3,204.5 306.0,199.2 307.7,195.2 309.4,199.2 311.1,205.7 312.8,222.8 314.5,219.1 316.2,206.3 317.9,201.2 319.6,195.1 321.3,196.0 323.0,194.4 324.7,193.5 326.4,191.4 328.1,189.2 329.8,186.9 331.5,181.3 333.2,182.9 334.9,175.3 336.6,177.1 338.3,177.4 340.0,173.6 341.7,175.6 343.4,172.9 345.1,168.7 346.8,167.9 348.5,170.4 350.2,166.0 351.9,165.7 353.6,164.5 355.3,163.0 357.0,163.7 358.7,162.7 360.4,182.8 362.1,284.7 363.8,292.8 365.5,292.8 367.2,292.8 368.9,284.2 370.6,292.8 372.3,288.2 374.0,292.8 375.7,292.8 377.4,292.8 379.1,292.8 380.8,279.1 382.5,292.8 384.2,292.8 385.9,292.8 387.6,292.8 389.3,292.8 391.0,292.8 392.7,291.6 394.4,292.8 396.1,292.8 397.8,292.8 399.5,292.8 401.2,292.8 402.9,261.0 404.6,292.8 406.3,285.5 408.0,292.8 409.7,280.9 411.4,224.7 413.1,264.8 414.8,224.1 416.5,242.7 418.2,238.3 419.9,242.0 421.6,228.1 423.3,219.1 425.0,213.0 426.7,219.3 428.4,203.4 430.1,213.7 431.8,207.5 433.5,204.5 435.2,198.4 436.9,190.3 438.6,189.2 440.3,184.9 442.0,186.5 443.7,185.7 445.4,191.2 447.1,187.9 448.8,194.1 450.5,196.6 452.2,197.5 453.9,200.9 455.6,198.0 457.3,210.1 459.0,206.4 460.7,214.5 462.4,207.1 464.1,249.6 465.8,279.7 467.5,281.6 469.2,287.0 470.9,280.2 472.6,263.4 474.3,258.7 476.0,243.6 477.7,251.6 479.4,227.7 481.1,236.6 482.8,253.6 484.5,253.4 486.2,251.1 487.9,235.4 489.6,237.8 491.3,249.8 493.0,242.8 494.7,251.5 496.4,234.2 498.1,235.6 499.8,209.2 501.5,204.9 503.2,218.2 504.9,212.6 506.6,205.8 508.3,203.2 510.0,202.0 511.7,197.8 513.4,193.8 515.1,191.0 516.8,190.3 518.5,193.7 520.2,185.7 521.9,188.1 523.6,181.9 525.3,179.3 527.0,178.4 528.7,173.9 530.4,172.7 532.1,170.1 533.8,167.0 535.5,166.2 537.2,162.9 538.9,161.5 540.6,159.5 542.3,180.9 544.0,245.1 545.7,292.8 547.4,291.6 549.1,283.9 550.8,292.8 552.5,292.8 554.2,273.8 555.9,288.9 557.6,284.1 559.3,267.8 561.0,254.1 562.7,256.9 564.4,250.7 566.1,244.4 567.8,214.8 569.5,240.8 571.2,256.4 572.9,242.5 574.6,262.0 576.3,267.2 578.0,262.5 579.7,272.1 581.4,261.9 583.1,246.9 584.8,234.9 586.5,243.5 588.2,239.6 589.9,245.6 591.6,245.0 593.3,246.5 595.0,237.5 596.7,228.1 598.4,235.9 600.1,220.4 601.8,218.6 603.5,209.2 605.2,203.8 606.9,190.5 608.6,187.0 610.3,176.5 612.0,204.0 613.7,261.5 615.4,292.8 617.1,292.8 618.8,292.8 620.5,292.8 622.2,292.8 623.9,292.8 625.6,282.4 627.3,288.2 629.0,270.1 630.7,274.5 632.4,256.9 634.1,257.8 635.8,280.1 637.5,226.7 639.2,284.9 640.9,228.2 642.6,288.6 644.3,292.8 646.0,285.9 647.7,292.8 649.4,292.8 651.1,292.8 652.8,292.8 654.5,286.1 656.2,279.2 657.9,279.6 659.6,286.1 661.3,292.8 663.0,292.8 664.7,286.7 666.4,270.7 668.1,270.2 669.8,273.5 671.5,262.9 673.2,259.7 674.9,236.6 676.6,257.4 678.3,281.5 680.0,292.8 681.7,292.8 683.4,284.5 685.1,292.8 686.8,282.2 688.5,288.0 690.2,277.8 691.9,273.3 693.6,292.6 695.3,261.7 697.0,250.8 698.7,253.4 700.4,257.0 702.1,239.0 703.8,243.0 705.5,237.1 707.2,224.3 708.9,225.3 710.6,212.9 712.3,203.5 714.0,196.0 715.7,201.9 717.4,200.0 719.1,204.8 720.8,202.3 722.5,205.4 724.2,196.1 725.9,214.3 727.6,224.0 729.3,237.8 731.0,258.5 732.7,288.4 734.4,292.8 736.1,292.8 737.8,286.3 739.5,258.9 741.2,243.6 742.9,221.2 744.6,200.2 746.3,204.6 748.0,192.8 749.7,190.1 751.4,183.1 753.1,180.6 754.8,187.9 756.5,184.4 758.2,189.8 759.9,189.7 761.6,191.7 763.3,197.4 765.0,194.5 766.7,203.8 768.4,204.7 770.1,206.3 771.8,181.8 773.5,209.9 775.2,221.0 776.9,228.7 778.6,216.0 780.3,218.3 782.0,233.6 783.7,224.0 785.4,214.9 787.1,233.1 788.8,248.6 790.5,229.5 792.2,230.4 793.9,243.4 795.6,223.5 797.3,254.2 799.0,231.6 800.7,262.1 802.4,242.2 804.1,248.3 805.8,260.2 807.5,259.5 809.2,218.4 810.9,246.9 812.6,251.5 814.3,248.9 816.0,252.9 817.7,257.3 819.4,234.7 821.1,247.3 822.8,247.6 824.5,249.6 826.2,238.6 827.9,247.7 829.6,240.7 831.3,240.5 833.0,251.4 834.7,251.5 836.4,242.6 838.1,255.2 839.8,250.9 841.5,248.3 843.2,246.0 844.9,235.4 846.6,238.7 848.3,247.1 850.0,251.1 851.7,266.1 853.4,286.7 855.1,270.9 856.8,292.8 858.5,292.8 860.2,292.8 861.9,290.9 863.6,292.8 865.3,261.7 867.0,259.9 868.7,237.4 870.4,237.9 872.1,241.8 873.8,218.4 875.5,215.9 877.2,216.5 878.9,222.4 880.6,214.3 882.3,211.5 884.0,208.5 885.7,201.8 887.4,204.8 889.1,207.7 890.8,208.5 892.5,197.0 894.2,190.4 895.9,198.3 897.6,195.8 899.3,193.2 901.0,196.0 902.7,188.9 904.4,197.3 906.1,192.0 907.8,194.3 909.5,187.2 911.2,189.4 912.9,186.5 914.6,183.1 916.3,184.3 918.0,178.4 919.7,178.8 921.4,177.6 923.1,176.7 924.8,173.6 926.5,167.1 928.2,163.7 929.9,161.2 931.6,159.1 933.3,156.9 935.0,157.0 936.7,156.9 938.4,157.4 940.1,157.2 941.8,156.4 943.5,156.7 945.2,156.7 946.9,156.4 948.6,156.4 950.3,155.7 952.0,156.1 953.7,156.2 955.4,155.3 957.1,155.8 958.8,155.5 960.5,169.2 962.2,216.4 963.9,221.1 965.6,215.9 967.3,215.6 969.0,221.7 970.7,228.4 972.4,220.1 974.1,218.2 975.8,236.5 977.5,200.9 979.2,232.5 980.9,236.0 982.6,240.6 984.3,236.1 986.0,228.6 987.7,213.9 989.4,264.8 991.1,292.8 992.8,292.8 994.5,280.6 996.2,283.6 997.9,292.8 999.6,292.8 1001.3,292.8 1003.0,292.8 1004.7,289.7 1006.4,286.5 1008.1,292.8 1009.8,292.8 1011.5,289.3 1013.2,284.1 1014.9,279.1 1016.6,289.4 1018.3,290.2 1020.0,282.5 1021.7,287.2 1023.4,292.8 1025.1,281.3 1026.8,292.8 1028.5,292.8 1030.2,281.1 1031.9,292.8 1033.6,292.8 1035.3,253.6 1037.0,281.8 1038.7,290.3 1040.4,292.8 1042.1,292.8 1043.8,292.8 1045.5,292.8 1047.2,201.1 1048.9,224.6 1050.6,209.1 1052.3,201.4 1054.0,205.6 1055.7,194.0 1057.4,198.6 1059.1,212.0 1060.8,216.1 1062.5,223.7 1064.2,214.0 1065.9,220.0 1067.6,234.4 1069.3,222.9 1071.0,240.1 1072.7,226.1 1074.4,220.8 1076.1,227.2 1077.8,225.3 1079.5,225.0 1081.2,235.3 1082.9,225.3 1084.6,216.0 1086.3,214.6 1088.0,230.6 1089.7,220.2 1091.4,227.4 1093.1,212.7 1094.8,222.4 1096.5,212.5 1098.2,219.3 1099.9,216.8 1101.6,207.7 1103.3,203.4 1105.0,213.2 1106.7,189.7 1108.4,204.4 1110.1,188.6 1111.8,200.0 1113.5,199.6 1115.2,188.9 1116.9,195.7 1118.6,184.5 1120.3,190.3 1122.0,180.8 1123.7,181.9 1125.4,176.4 1127.1,174.7 1128.8,171.9 1130.5,170.1 1132.2,170.9 1133.9,169.8 1135.6,166.2 1137.3,164.9 1139.0,167.5 1140.7,167.3 1141.6,167.3 1141.6,292.8" fill="url(#dk)"/><rect x="50.5" y="0" width="1" height="292.8" fill="rgba(90,120,150,.22)"/><rect x="102.6" y="0" width="1" height="292.8" fill="rgba(90,120,150,.22)"/><rect x="154.6" y="0" width="1" height="292.8" fill="rgba(90,120,150,.22)"/><rect x="206.7" y="0" width="1" height="292.8" fill="rgba(90,120,150,.22)"/><rect x="258.7" y="0" width="1" height="292.8" fill="rgba(90,120,150,.22)"/><rect x="310.8" y="0" width="1" height="292.8" fill="rgba(90,120,150,.22)"/><rect x="362.8" y="0" width="1" height="292.8" fill="rgba(90,120,150,.22)"/><rect x="414.9" y="0" width="1" height="292.8" fill="rgba(90,120,150,.22)"/><rect x="467.0" y="0" width="1" height="292.8" fill="rgba(90,120,150,.22)"/><rect x="519.0" y="0" width="1" height="292.8" fill="rgba(90,120,150,.22)"/><rect x="571.1" y="0" width="1" height="292.8" fill="rgba(90,120,150,.22)"/><rect x="623.1" y="0" width="1" height="292.8" fill="rgba(90,120,150,.22)"/><rect x="675.2" y="0" width="1" height="292.8" fill="rgba(90,120,150,.22)"/><rect x="727.2" y="0" width="1" height="292.8" fill="rgba(90,120,150,.22)"/><rect x="779.3" y="0" width="1" height="292.8" fill="rgba(90,120,150,.22)"/><rect x="831.4" y="0" width="1" height="292.8" fill="rgba(90,120,150,.22)"/><rect x="883.4" y="0" width="1" height="292.8" fill="rgba(90,120,150,.22)"/><rect x="935.5" y="0" width="1" height="292.8" fill="rgba(90,120,150,.22)"/><rect x="987.5" y="0" width="1" height="292.8" fill="rgba(90,120,150,.22)"/><rect x="1039.6" y="0" width="1" height="292.8" fill="rgba(90,120,150,.22)"/><rect x="1091.6" y="0" width="1" height="292.8" fill="rgba(90,120,150,.22)"/><path d="M166.4 0V292.8" stroke="#e8eef4" stroke-width="1.3" stroke-dasharray="1.6 1.6"/><path d="M37.4 292.8L166.4 270.9H1141.6" fill="none" stroke="#e6e8ea" stroke-width="2.6"/><rect x="0.6" y="0.6" width="1140.4" height="291.6" fill="none" stroke="#9aa4b0" stroke-width="1.2"/></svg>
<div class="t" style="left:970.9px;top:1475px;font-size:18.5px;line-height:22.2px;color:#f4f6f8;font-weight:bold;letter-spacing:.8px;">vox_06</div>
<div style="left:2107px;top:1469.5px;width:315px;height:292.8px;background:linear-gradient(#78b8f5 0%,#5a9ee4 45%,#4690de 70%,#3a84d8 100%);border:1.4px solid #98ccfa;border-right:none;"></div>
<svg style="left:2107px;top:1469.5px;" width="315" height="292.8" viewBox="0 0 315 292.8"><polygon points="1.0,147.1 3.0,145.4 5.0,143.5 7.0,138.9 9.0,137.2 11.0,136.5 13.0,137.4 15.0,140.7 17.0,144.8 19.0,137.4 21.0,129.9 23.0,124.0 25.0,122.8 27.0,115.6 29.0,114.3 31.0,120.4 33.0,125.2 35.0,130.5 37.0,114.1 39.0,105.9 41.0,98.5 43.0,93.8 45.0,103.1 47.0,109.2 49.0,100.5 51.0,90.1 53.0,79.6 55.0,62.6 57.0,55.2 59.0,41.5 61.0,39.5 63.0,35.6 65.0,45.9 67.0,33.7 69.0,43.1 71.0,27.1 73.0,36.6 75.0,49.9 77.0,56.6 79.0,46.6 81.0,48.6 83.0,61.0 85.0,59.8 87.0,66.5 89.0,66.8 91.0,66.4 93.0,75.9 95.0,79.0 97.0,87.6 99.0,90.5 101.0,98.5 103.0,96.9 105.0,106.0 107.0,90.6 109.0,83.2 111.0,83.0 113.0,78.8 115.0,84.0 117.0,84.2 119.0,96.4 121.0,96.6 123.0,88.7 125.0,102.1 127.0,111.5 129.0,120.7 131.0,111.8 133.0,98.9 135.0,94.2 137.0,84.7 139.0,86.5 141.0,80.7 143.0,77.4 145.0,81.2 147.0,80.3 149.0,92.3 151.0,87.7 153.0,87.7 155.0,87.1 157.0,97.2 159.0,91.8 161.0,93.0 163.0,92.2 165.0,91.8 167.0,98.4 169.0,90.4 171.0,97.1 173.0,95.3 175.0,100.7 177.0,106.1 179.0,103.9 181.0,106.1 183.0,109.9 185.0,115.5 187.0,113.8 189.0,115.9 191.0,112.9 193.0,112.8 195.0,115.9 197.0,116.3 199.0,122.1 201.0,120.0 203.0,125.0 205.0,124.1 207.0,128.2 209.0,128.0 211.0,130.3 213.0,128.0 215.0,126.7 217.0,131.5 219.0,131.6 221.0,132.3 223.0,132.1 225.0,127.7 227.0,129.7 229.0,128.6 231.0,128.4 233.0,128.5 235.0,127.4 237.0,128.1 239.0,130.5 241.0,126.9 243.0,130.0 245.0,128.6 247.0,132.9 249.0,133.7 251.0,133.1 253.0,135.5 255.0,137.6 257.0,139.5 259.0,142.9 261.0,144.3 263.0,146.5 265.0,144.6 267.0,142.9 269.0,140.3 271.0,138.8 273.0,137.1 275.0,136.0 277.0,134.1 279.0,139.2 281.0,146.2 283.0,143.2 285.0,139.3 287.0,136.0 289.0,138.1 291.0,140.9 293.0,141.1 295.0,142.9 297.0,143.7 299.0,144.6 301.0,146.1 303.0,147.8 305.0,148.1 307.0,148.4 309.0,148.2 311.0,148.7 313.0,149.0 315.0,149.4 315.0,155.1 313.0,155.0 311.0,155.1 309.0,155.8 307.0,155.3 305.0,155.5 303.0,156.4 301.0,156.3 299.0,157.3 297.0,157.7 295.0,159.6 293.0,160.5 291.0,161.4 289.0,162.4 287.0,163.4 285.0,166.9 283.0,164.0 281.0,161.4 279.0,159.2 277.0,164.3 275.0,167.8 273.0,170.7 271.0,168.3 269.0,167.9 267.0,165.6 265.0,161.8 263.0,159.8 261.0,156.0 259.0,157.0 257.0,158.0 255.0,160.6 253.0,161.9 251.0,162.8 249.0,164.1 247.0,163.9 245.0,164.8 243.0,166.2 241.0,163.4 239.0,163.1 237.0,164.9 235.0,163.2 233.0,163.6 231.0,165.0 229.0,164.9 227.0,165.8 225.0,166.8 223.0,164.5 221.0,165.1 219.0,167.1 217.0,166.0 215.0,167.9 213.0,168.7 211.0,168.9 209.0,168.6 207.0,169.4 205.0,169.3 203.0,169.4 201.0,169.4 199.0,170.1 197.0,172.2 195.0,174.4 193.0,172.6 191.0,176.8 189.0,179.2 187.0,180.2 185.0,179.2 183.0,180.1 181.0,179.6 179.0,178.0 177.0,182.7 175.0,182.1 173.0,179.5 171.0,183.4 169.0,184.1 167.0,188.0 165.0,188.4 163.0,190.6 161.0,186.2 159.0,191.4 157.0,189.8 155.0,192.1 153.0,192.5 151.0,195.2 149.0,195.6 147.0,200.2 145.0,202.8 143.0,195.9 141.0,197.8 139.0,200.8 137.0,197.1 135.0,206.1 133.0,204.2 131.0,207.3 129.0,216.5 127.0,206.9 125.0,201.0 123.0,205.1 121.0,206.2 119.0,203.7 117.0,198.4 115.0,199.7 113.0,204.3 111.0,206.7 109.0,197.1 107.0,176.9 105.0,183.8 103.0,194.1 101.0,205.8 99.0,209.4 97.0,211.0 95.0,210.3 93.0,212.0 91.0,217.8 89.0,216.9 87.0,237.7 85.0,232.7 83.0,245.6 81.0,234.7 79.0,250.1 77.0,249.9 75.0,267.8 73.0,289.7 71.0,277.1 69.0,291.8 67.0,259.2 65.0,280.3 63.0,291.8 61.0,269.3 59.0,257.8 57.0,250.0 55.0,244.2 53.0,213.6 51.0,201.0 49.0,178.0 47.0,182.2 45.0,176.0 43.0,174.7 41.0,175.0 39.0,176.6 37.0,175.4 35.0,181.6 33.0,179.1 31.0,173.8 29.0,171.4 27.0,178.6 25.0,179.8 23.0,186.9 21.0,178.9 19.0,171.2 17.0,160.9 15.0,163.4 13.0,166.8 11.0,169.1 9.0,168.7 7.0,165.6 5.0,165.7 3.0,163.4 1.0,159.3" fill="rgba(36,96,170,.8)" stroke="#1b4478" stroke-width="1.1"/></svg>
<div class="t" style="left:2115px;top:1475px;font-size:18.5px;line-height:22.2px;color:#2a3a50;font-weight:bold;letter-spacing:.7px;">vox_04</div>
<svg style="left:743.6px;top:124px;pointer-events:none;" width="1678.4" height="1639" viewBox="0 0 1678.4 1639"><rect x="11.0" y="0" width="1" height="961" fill="rgba(10,10,40,.12)"/><rect x="11.0" y="1272.9" width="1" height="366" fill="rgba(30,70,140,.22)"/><rect x="63.1" y="0" width="1" height="961" fill="rgba(10,10,40,.12)"/><rect x="63.1" y="1272.9" width="1" height="366" fill="rgba(30,70,140,.22)"/><rect x="115.1" y="0" width="1" height="961" fill="rgba(10,10,40,.12)"/><rect x="115.1" y="1272.9" width="1" height="366" fill="rgba(30,70,140,.22)"/><rect x="167.2" y="0" width="1" height="961" fill="rgba(10,10,40,.12)"/><rect x="167.2" y="1272.9" width="1" height="366" fill="rgba(30,70,140,.22)"/><rect x="219.2" y="0" width="1" height="961" fill="rgba(10,10,40,.12)"/><rect x="219.2" y="1272.9" width="1" height="366" fill="rgba(30,70,140,.22)"/><rect x="271.3" y="0" width="1" height="961" fill="rgba(10,10,40,.12)"/><rect x="271.3" y="1272.9" width="1" height="366" fill="rgba(30,70,140,.22)"/><rect x="323.4" y="0" width="1" height="961" fill="rgba(10,10,40,.12)"/><rect x="323.4" y="1272.9" width="1" height="366" fill="rgba(30,70,140,.22)"/><rect x="375.4" y="0" width="1" height="961" fill="rgba(10,10,40,.12)"/><rect x="375.4" y="1272.9" width="1" height="366" fill="rgba(30,70,140,.22)"/><rect x="427.5" y="0" width="1" height="961" fill="rgba(10,10,40,.12)"/><rect x="427.5" y="1272.9" width="1" height="366" fill="rgba(30,70,140,.22)"/><rect x="479.5" y="0" width="1" height="961" fill="rgba(10,10,40,.12)"/><rect x="479.5" y="1272.9" width="1" height="366" fill="rgba(30,70,140,.22)"/><rect x="531.6" y="0" width="1" height="961" fill="rgba(10,10,40,.12)"/><rect x="531.6" y="1272.9" width="1" height="366" fill="rgba(30,70,140,.22)"/><rect x="583.6" y="0" width="1" height="961" fill="rgba(10,10,40,.12)"/><rect x="583.6" y="1272.9" width="1" height="366" fill="rgba(30,70,140,.22)"/><rect x="635.7" y="0" width="1" height="961" fill="rgba(10,10,40,.12)"/><rect x="635.7" y="1272.9" width="1" height="366" fill="rgba(30,70,140,.22)"/><rect x="687.8" y="0" width="1" height="961" fill="rgba(10,10,40,.12)"/><rect x="687.8" y="1272.9" width="1" height="366" fill="rgba(30,70,140,.22)"/><rect x="739.8" y="0" width="1" height="961" fill="rgba(10,10,40,.12)"/><rect x="739.8" y="1272.9" width="1" height="366" fill="rgba(30,70,140,.22)"/><rect x="791.9" y="0" width="1" height="961" fill="rgba(10,10,40,.12)"/><rect x="791.9" y="1272.9" width="1" height="366" fill="rgba(30,70,140,.22)"/><rect x="843.9" y="0" width="1" height="961" fill="rgba(10,10,40,.12)"/><rect x="843.9" y="1272.9" width="1" height="366" fill="rgba(30,70,140,.22)"/><rect x="896.0" y="0" width="1" height="961" fill="rgba(10,10,40,.12)"/><rect x="896.0" y="1272.9" width="1" height="366" fill="rgba(30,70,140,.22)"/><rect x="948.0" y="0" width="1" height="961" fill="rgba(10,10,40,.12)"/><rect x="948.0" y="1272.9" width="1" height="366" fill="rgba(30,70,140,.22)"/><rect x="1000.1" y="0" width="1" height="961" fill="rgba(10,10,40,.12)"/><rect x="1000.1" y="1272.9" width="1" height="366" fill="rgba(30,70,140,.22)"/><rect x="1052.2" y="0" width="1" height="961" fill="rgba(10,10,40,.12)"/><rect x="1052.2" y="1272.9" width="1" height="366" fill="rgba(30,70,140,.22)"/><rect x="1104.2" y="0" width="1" height="961" fill="rgba(10,10,40,.12)"/><rect x="1104.2" y="1272.9" width="1" height="366" fill="rgba(30,70,140,.22)"/><rect x="1156.3" y="0" width="1" height="961" fill="rgba(10,10,40,.12)"/><rect x="1156.3" y="1272.9" width="1" height="366" fill="rgba(30,70,140,.22)"/><rect x="1208.3" y="0" width="1" height="961" fill="rgba(10,10,40,.12)"/><rect x="1208.3" y="1272.9" width="1" height="366" fill="rgba(30,70,140,.22)"/><rect x="1260.4" y="0" width="1" height="961" fill="rgba(10,10,40,.12)"/><rect x="1260.4" y="1272.9" width="1" height="366" fill="rgba(30,70,140,.22)"/><rect x="1312.4" y="0" width="1" height="961" fill="rgba(10,10,40,.12)"/><rect x="1312.4" y="1272.9" width="1" height="366" fill="rgba(30,70,140,.22)"/><rect x="1364.5" y="0" width="1" height="961" fill="rgba(10,10,40,.12)"/><rect x="1364.5" y="1272.9" width="1" height="366" fill="rgba(30,70,140,.22)"/><rect x="1416.6" y="0" width="1" height="961" fill="rgba(10,10,40,.12)"/><rect x="1416.6" y="1272.9" width="1" height="366" fill="rgba(30,70,140,.22)"/><rect x="1468.6" y="0" width="1" height="961" fill="rgba(10,10,40,.12)"/><rect x="1468.6" y="1272.9" width="1" height="366" fill="rgba(30,70,140,.22)"/><rect x="1520.7" y="0" width="1" height="961" fill="rgba(10,10,40,.12)"/><rect x="1520.7" y="1272.9" width="1" height="366" fill="rgba(30,70,140,.22)"/><rect x="1572.7" y="0" width="1" height="961" fill="rgba(10,10,40,.12)"/><rect x="1572.7" y="1272.9" width="1" height="366" fill="rgba(30,70,140,.22)"/><rect x="1624.8" y="0" width="1" height="961" fill="rgba(10,10,40,.12)"/><rect x="1624.8" y="1272.9" width="1" height="366" fill="rgba(30,70,140,.22)"/><rect x="1676.9" y="0" width="1" height="961" fill="rgba(10,10,40,.12)"/><rect x="1676.9" y="1272.9" width="1" height="366" fill="rgba(30,70,140,.22)"/></svg>
<div style="left:801.6px;top:81.5px;width:2.7px;height:1681.5px;background:#f4f6f8;"></div>
<div style="left:804.3px;top:81.5px;width:2.7px;height:1681.5px;background:#05070a;"></div>
<div style="left:743.6px;top:1773px;width:1511.4px;height:1.4px;background:#7c838c;"></div>
<div style="left:918px;top:1771.3px;width:53.5px;height:5px;background:#b4b8bd;border-radius:2.5px;"></div>
<svg style="left:2265px;top:1770px;" width="15" height="9" viewBox="0 0 15 9"><path d="M0 0H15L7.5 8.5Z" fill="#9a9fa6"/></svg>
<div style="left:2294px;top:1773px;width:9px;height:1.6px;background:#9a9fa6;"></div>
<div style="left:2313.6px;top:1773px;width:78px;height:1.6px;background:#9a9fa6;"></div>
<div style="left:2341.5px;top:1767.3px;width:13px;height:13px;background:#b4b8bd;border-radius:50%;"></div>
<svg style="left:2401px;top:1767px;" width="13" height="13" viewBox="0 0 13 13"><path d="M6.5 0V13M0 6.5H13" stroke="#9a9fa6" stroke-width="1.6"/></svg>
<svg style="left:2424px;top:131px;" width="16" height="14" viewBox="0 0 16 14"><path d="M2 12L14 2" stroke="#9a9fa6" stroke-width="2.2"/></svg>
<div style="left:2427.5px;top:158px;width:8px;height:1.6px;background:#9a9fa6;"></div>
<div style="left:2430.7px;top:168.7px;width:1.6px;height:77px;background:#9a9fa6;"></div>
<div style="left:2425px;top:186.2px;width:13px;height:13px;background:#b4b8bd;border-radius:50%;"></div>
<div style="left:2427px;top:241.8px;width:9px;height:1.6px;background:#9a9fa6;"></div>
<div style="left:2430.7px;top:253px;width:1.6px;height:1355px;background:#7c838c;"></div>
<div style="left:2428.8px;top:400px;width:5.4px;height:300px;background:#8a9098;border-radius:2.7px;"></div>
<svg style="left:2424px;top:1611px;" width="15" height="9" viewBox="0 0 15 9"><path d="M0 0H15L7.5 8.5Z" fill="#9a9fa6"/></svg>
<div style="left:2427.5px;top:1637px;width:8px;height:1.6px;background:#9a9fa6;"></div>
<div style="left:2430.7px;top:1647px;width:1.6px;height:95.5px;background:#9a9fa6;"></div>
<div style="left:2425px;top:1660.5px;width:13px;height:13px;background:#b4b8bd;border-radius:50%;"></div>
<svg style="left:2425px;top:1745px;" width="13" height="13" viewBox="0 0 13 13"><path d="M6.5 0V13M0 6.5H13" stroke="#9a9fa6" stroke-width="1.6"/></svg>
<div style="left:2859px;top:72px;width:400px;height:40px;background:#101317;border-radius:0 10px 0 0;"></div>
<div style="left:2456.5px;top:71.8px;width:404px;height:40px;background:#252c36;border-radius:11px 11px 0 0;border:3px solid #353e49;border-bottom:none;"></div>
<div style="left:2456.5px;top:108.3px;width:801px;height:1681.5px;background:#252c36;border-radius:0 11px 11px 11px;border:3px solid #353e49;"></div>
<div style="left:2458px;top:100px;width:401px;height:12px;background:#252c36;"></div>
<div class="t" style="left:2456.5px;top:81px;width:402px;text-align:center;font-size:18.5px;line-height:22.2px;color:#f2f3f5;font-weight:bold;letter-spacing:.85px;">VST Instruments</div>
<div class="t" style="left:2859px;top:81px;width:398px;text-align:center;font-size:18.5px;line-height:22.2px;color:#d4d8dc;font-weight:bold;letter-spacing:.6px;">MediaBay</div>
<div style="left:2475.6px;top:130px;width:58.2px;height:36px;background:#15181c;border-radius:4px;"></div>
<div style="left:2476.6px;top:131px;width:56.2px;height:34px;background:linear-gradient(#a0a4a9,#8b8f95 48%,#7c8086 52%,#74787e);border-radius:3px;"></div>
<div style="left:2542px;top:130px;width:39px;height:36px;background:#15181c;border-radius:4px;"></div>
<div style="left:2543px;top:131px;width:37px;height:34px;background:linear-gradient(#a0a4a9,#8b8f95 48%,#7c8086 52%,#74787e);border-radius:3px;"></div>
<svg style="left:2484px;top:137px;" width="46" height="22" viewBox="0 0 46 22"><path d="M2 0V21M8.5 0V21M15 0V21M21.5 0V21" stroke="#0c0d0f" stroke-width="2.6"/><path d="M5.2 0V12M18.2 0V12" stroke="#0c0d0f" stroke-width="4.6"/><path d="M29 11.5H42M35.5 5V18" stroke="#0c0d0f" stroke-width="2.6"/></svg>
<svg style="left:2549px;top:136px;" width="26" height="26" viewBox="0 0 26 26"><circle cx="15" cy="10" r="7.5" fill="none" stroke="#0c0d0f" stroke-width="2.6"/><path d="M10 15.5L2.5 23.5" stroke="#0c0d0f" stroke-width="3.4"/></svg>
<div style="left:3088.5px;top:130px;width:39.5px;height:36px;background:#15181c;border-radius:4px;"></div>
<div style="left:3089.5px;top:131px;width:37.5px;height:34px;background:linear-gradient(#a0a4a9,#8b8f95 48%,#7c8086 52%,#74787e);border-radius:3px 0 0 3px;"></div>
<div style="left:3127px;top:130px;width:39.7px;height:36px;background:#15181c;border-radius:4px;"></div>
<div style="left:3128px;top:131px;width:37.7px;height:34px;background:linear-gradient(#a0a4a9,#8b8f95 48%,#7c8086 52%,#74787e);border-radius:0 3px 3px 0;"></div>
<svg style="left:3098px;top:138px;" width="20" height="21" viewBox="0 0 20 21"><path d="M10 0.5L19 10.5H13V20.5H7V10.5H1Z" fill="#0c0d0f"/></svg>
<svg style="left:3137px;top:138px;" width="20" height="21" viewBox="0 0 20 21"><path d="M10 20.5L19 10.5H13V0.5H7V10.5H1Z" fill="#0c0d0f"/></svg>
<div style="left:3173.6px;top:130px;width:39.4px;height:36px;background:#15181c;border-radius:4px;"></div>
<div style="left:3174.6px;top:131px;width:37.4px;height:34px;background:linear-gradient(#f4f5f6,#d4d6d9);border-radius:3px 0 0 3px;"></div>
<div style="left:3211.5px;top:130px;width:20px;height:36px;background:#15181c;border-radius:4px;"></div>
<div style="left:3212.5px;top:131px;width:18px;height:34px;background:linear-gradient(#a0a4a9,#8b8f95 48%,#7c8086 52%,#74787e);border-radius:0 3px 3px 0;"></div>
<svg style="left:3181px;top:136px;" width="24" height="24" viewBox="0 0 24 24"><circle cx="12" cy="12" r="11" fill="#0c0d0f"/><path d="M4 14H20L12 5.5Z" fill="#f0f1f2"/><path d="M1.5 15.2A11 11 0 0 0 22.5 15.2Z" fill="#0c0d0f"/></svg>
<div class="t" style="left:3212.5px;top:136px;width:18px;text-align:center;font-size:22px;line-height:26.4px;color:#0c0d0f;font-weight:bold;">*</div>
<div style="left:2471.5px;top:178px;width:762px;height:1523px;background:#0f1012;"></div>
<div style="left:2473px;top:179.7px;width:759px;height:294.6px;background:#22262b;"></div>
<div style="left:2473px;top:179.7px;width:35.2px;height:294.6px;background:#20242a;border-right:1.5px solid #121315;"></div>
<div style="left:3196px;top:179.7px;width:36px;height:294.6px;background:#20242a;border-left:1.5px solid #121315;"></div>
<div style="left:2473px;top:474.3px;width:759px;height:1.6px;background:#101113;"></div>
<div class="t" style="left:2473px;top:194.2px;width:30px;text-align:center;font-size:17.5px;line-height:21px;color:#eef0f2;font-weight:bold;">1</div>
<div style="left:2521px;top:193px;width:662.5px;height:181.8px;background:#1b1c1e;border-radius:13px;box-shadow:0 1px 0 rgba(255,255,255,.08), inset 0 0 0 1.5px rgba(0,0,0,.5);"></div>
<div style="left:2534.2px;top:204.8px;width:638px;height:159.7px;background:linear-gradient(#161c2a 0,#111726 13%,#090d18 15%,#0a0f1a 60%,#070a12 100%);border-radius:4px;"></div>
<div style="left:2534.2px;top:204.8px;width:638px;height:57.7px;background:linear-gradient(#20242b,#171a20);border-radius:4px 4px 0 0;"></div>
<div style="left:2538.2px;top:261.8px;width:630px;height:1.5px;background:#373d47;"></div>
<div style="left:2534.2px;top:263.3px;width:638px;height:22px;background:linear-gradient(rgba(255,255,255,.05),rgba(255,255,255,0));"></div>
<div style="left:2552.9px;top:218px;width:30.7px;height:29.7px;background:linear-gradient(#e4e5e7,#cfd1d4);border-radius:2px;"></div>
<svg style="left:2552.9px;top:218px;" width="30.7" height="29.7" viewBox="0 0 30.7 29.7"><circle cx="15.3" cy="16" r="8.2" fill="none" stroke="#1f2124" stroke-width="3.1"/><rect x="12.4" y="3.5" width="5.8" height="12" fill="#dadbde"/><rect x="13.7" y="4.8" width="3.2" height="10.6" fill="#1f2124"/></svg>
<svg style="left:2589px;top:219px;" width="28" height="28" viewBox="0 0 28 28"><g transform="rotate(-24 14 14)"><path d="M5.5 14H22A8.6 8.6 0 1 0 19.2 20.6" fill="none" stroke="#80888c" stroke-width="3.1" stroke-linecap="round"/></g></svg>
<svg style="left:2621px;top:220px;" width="30" height="26" viewBox="0 0 30 26"><path d="M8.5 2H21.5L28 13L21.5 24H8.5L2 13Z" fill="none" stroke="#8b958d" stroke-width="2.8" stroke-linejoin="round"/><path d="M15 5V21M8 9L22 17M22 9L8 17" stroke="#8b958d" stroke-width="2.8"/></svg>
<div class="t" style="left:2720.5px;top:214.2px;font-size:26.5px;line-height:31.8px;color:#e9ebed;font-weight:bold;">LoopMash</div>
<svg style="left:3092px;top:223.7px;" width="24" height="19" viewBox="0 0 24 19"><path d="M0 9.5H12M8 4.5L13 9.5L8 14.5" fill="none" stroke="#80888c" stroke-width="2.4"/><path d="M11 1.5H20V17.5H11" fill="none" stroke="#80888c" stroke-width="2.4"/></svg>
<svg style="left:3132px;top:223.7px;" width="24" height="19" viewBox="0 0 24 19"><path d="M10 1.5H1.5V17.5H10" fill="none" stroke="#80888c" stroke-width="2.4"/><path d="M6 9.5H14" stroke="#80888c" stroke-width="2.6"/><path d="M13 3L21 9.5L13 16Z" fill="#80888c"/></svg>
<div class="t" style="left:2560px;top:282.2px;font-size:18.5px;line-height:22.2px;color:#8a9094;font-weight:bold;font-family:DejaVu Sans,Liberation Sans,sans-serif;">R</div>
<div class="t" style="left:2589px;top:282.2px;width:28px;text-align:center;font-size:18.5px;line-height:22.2px;color:#8a9094;font-weight:bold;font-family:DejaVu Sans,Liberation Sans,sans-serif;transform:scaleX(.72);">W</div>
<div class="t" style="left:2632.4px;top:290.2px;font-size:14.5px;line-height:17.4px;color:#eceef0;font-weight:bold;">Page 1</div>
<div class="t" style="left:2721.4px;top:282.2px;font-size:19.5px;line-height:23.4px;color:#dfe3e8;font-weight:bold;">Skillex 120</div>
<svg style="left:3099px;top:286.7px;" width="16" height="20" viewBox="0 0 16 20"><path d="M8 0.5L14.5 8H1.5ZM8 19.5L14.5 12H1.5Z" fill="#80888c"/></svg>
<svg style="left:3131px;top:284.7px;" width="24" height="22" viewBox="0 0 24 22"><path d="M11 1.5L21 9L12 19.5L2 11Z" fill="none" stroke="#80888c" stroke-width="1.8"/><path d="M2 11L11 1.5L12 8L7 15.5Z" fill="#80888c"/></svg>
<div class="t" style="left:2505px;top:317.2px;width:120px;text-align:center;font-size:14.3px;line-height:17.16px;color:#e4e8ec;font-weight:bold;">Similarity</div>
<div class="t" style="left:2505px;top:335.7px;width:120px;text-align:center;font-size:14.3px;line-height:17.16px;color:#e4e8ec;font-weight:bold;">Gain 1</div>
<div class="t" style="left:2584.9px;top:317.2px;width:120px;text-align:center;font-size:14.3px;line-height:17.16px;color:#e4e8ec;font-weight:bold;">Similarity</div>
<div class="t" style="left:2584.9px;top:335.7px;width:120px;text-align:center;font-size:14.3px;line-height:17.16px;color:#e4e8ec;font-weight:bold;">Gain 2</div>
<div class="t" style="left:2665.3px;top:317.2px;width:120px;text-align:center;font-size:14.3px;line-height:17.16px;color:#e4e8ec;font-weight:bold;">Similarity</div>
<div class="t" style="left:2665.3px;top:335.7px;width:120px;text-align:center;font-size:14.3px;line-height:17.16px;color:#e4e8ec;font-weight:bold;">Gain 3</div>
<div class="t" style="left:2745.2px;top:317.2px;width:120px;text-align:center;font-size:14.3px;line-height:17.16px;color:#e4e8ec;font-weight:bold;">Similarity</div>
<div class="t" style="left:2745.2px;top:335.7px;width:120px;text-align:center;font-size:14.3px;line-height:17.16px;color:#e4e8ec;font-weight:bold;">Gain 4</div>
<div class="t" style="left:2826px;top:317.2px;width:120px;text-align:center;font-size:14.3px;line-height:17.16px;color:#e4e8ec;font-weight:bold;">Similarity</div>
<div class="t" style="left:2826px;top:335.7px;width:120px;text-align:center;font-size:14.3px;line-height:17.16px;color:#e4e8ec;font-weight:bold;">Gain 5</div>
<div class="t" style="left:2907.3px;top:317.2px;width:120px;text-align:center;font-size:14.3px;line-height:17.16px;color:#e4e8ec;font-weight:bold;">Similarity</div>
<div class="t" style="left:2907.3px;top:335.7px;width:120px;text-align:center;font-size:14.3px;line-height:17.16px;color:#e4e8ec;font-weight:bold;">Gain 6</div>
<div class="t" style="left:2989px;top:317.2px;width:120px;text-align:center;font-size:14.3px;line-height:17.16px;color:#e4e8ec;font-weight:bold;">Similarity</div>
<div class="t" style="left:2989px;top:335.7px;width:120px;text-align:center;font-size:14.3px;line-height:17.16px;color:#e4e8ec;font-weight:bold;">Gain 7</div>
<div class="t" style="left:3071.2px;top:317.2px;width:120px;text-align:center;font-size:14.3px;line-height:17.16px;color:#e4e8ec;font-weight:bold;">Similarity</div>
<div class="t" style="left:3071.2px;top:335.7px;width:120px;text-align:center;font-size:14.3px;line-height:17.16px;color:#e4e8ec;font-weight:bold;">Gain 8</div>
<svg style="left:3202px;top:192.2px;" width="24" height="24" viewBox="0 0 24 24"><circle cx="12" cy="12" r="11.2" fill="#e4e6e8"/><path d="M3.5 14.5H20.5L12 5Z" fill="#1c1e21"/><path d="M1.2 15A11 11 0 0 0 22.8 15Z" fill="#e4e6e8"/><path d="M4 14.2H20L12 5.2Z" fill="#1c1e21"/></svg>
<svg style="left:3202px;top:441.7px;" width="24" height="24" viewBox="0 0 24 24"><circle cx="12" cy="12" r="9.6" fill="none" stroke="#7d8a8c" stroke-width="2.2"/><path d="M12 12L18 6" stroke="#7d8a8c" stroke-width="2.2"/></svg>
<svg style="left:2520px;top:364.2px;" width="680" height="120" viewBox="0 0 680 120"><defs><radialGradient id="kshadow"><stop offset="0.7" stop-color="#000" stop-opacity=".6"/><stop offset="1" stop-color="#000" stop-opacity="0"/></radialGradient><linearGradient id="blk" x1="0" y1="0" x2="0" y2="1"><stop offset="0" stop-color="#4a4c4f"/><stop offset="0.5" stop-color="#1e1f21"/><stop offset="1" stop-color="#0c0d0e"/></linearGradient><linearGradient id="blk2" x1="0" y1="0" x2="1" y2="1"><stop offset="0" stop-color="#56585b"/><stop offset="0.5" stop-color="#262729"/><stop offset="1" stop-color="#0e0f10"/></linearGradient></defs><circle cx="46.6" cy="62" r="35" fill="#1a1d21" opacity=".85"/><circle cx="46.6" cy="61" r="31" fill="#0f1012"/><path d="M29.4 75.0L24.9 78.9" stroke="#3f80c6" stroke-width="3.2"/><path d="M26.2 70.1L20.8 72.8" stroke="#3f80c6" stroke-width="3.2"/><path d="M24.3 64.7L18.4 65.9" stroke="#3f80c6" stroke-width="3.2"/><path d="M23.8 58.9L17.8 58.6" stroke="#3f80c6" stroke-width="3.2"/><path d="M24.8 53.2L19.1 51.4" stroke="#3f80c6" stroke-width="3.2"/><path d="M27.3 47.9L22.2 44.7" stroke="#3f80c6" stroke-width="3.2"/><path d="M30.9 43.4L26.8 39.1" stroke="#3f80c6" stroke-width="3.2"/><path d="M35.6 40.0L32.7 34.8" stroke="#3f80c6" stroke-width="3.2"/><path d="M41.0 37.9L39.5 32.1" stroke="#3f80c6" stroke-width="3.2"/><path d="M46.8 37.2L46.8 31.2" stroke="#3f80c6" stroke-width="3.2"/><path d="M52.5 38.0L54.1 32.2" stroke="#2a2c2f" stroke-width="3.2"/><path d="M57.9 40.2L60.8 35.0" stroke="#2a2c2f" stroke-width="3.2"/><path d="M62.5 43.7L66.7 39.4" stroke="#2a2c2f" stroke-width="3.2"/><path d="M66.1 48.2L71.2 45.1" stroke="#2a2c2f" stroke-width="3.2"/><path d="M68.4 53.5L74.2 51.8" stroke="#2a2c2f" stroke-width="3.2"/><path d="M69.4 59.2L75.4 59.0" stroke="#2a2c2f" stroke-width="3.2"/><path d="M68.9 65.0L74.7 66.3" stroke="#2a2c2f" stroke-width="3.2"/><path d="M66.9 70.4L72.2 73.2" stroke="#2a2c2f" stroke-width="3.2"/><path d="M63.6 75.2L68.1 79.2" stroke="#2a2c2f" stroke-width="3.2"/><circle cx="46.6" cy="60" r="22.3" fill="#0a0b0c"/><clipPath id="c46_60"><circle cx="46.6" cy="60" r="21"/></clipPath><g clip-path="url(#c46_60)"><g style="filter:blur(1.5px)"><path d="M46.6 60.0L41.2 39.7A21 21 0 0 1 52.4 39.8Z" fill="#e9e9ea"/><path d="M46.6 60.0L52.0 39.7A21 21 0 0 1 61.7 45.4Z" fill="#cfd0d2"/><path d="M46.6 60.0L61.4 45.2A21 21 0 0 1 67.0 54.9Z" fill="#e2e3e4"/><path d="M46.6 60.0L66.9 54.6A21 21 0 0 1 66.8 65.8Z" fill="#bcbec0"/><path d="M46.6 60.0L66.9 65.4A21 21 0 0 1 61.2 75.1Z" fill="#dadbdc"/><path d="M46.6 60.0L61.4 74.8A21 21 0 0 1 51.7 80.4Z" fill="#c6c8ca"/><path d="M46.6 60.0L52.0 80.3A21 21 0 0 1 40.8 80.2Z" fill="#e6e6e7"/><path d="M46.6 60.0L41.2 80.3A21 21 0 0 1 31.5 74.6Z" fill="#c0c2c4"/><path d="M46.6 60.0L31.8 74.8A21 21 0 0 1 26.2 65.1Z" fill="#dedfe0"/><path d="M46.6 60.0L26.3 65.4A21 21 0 0 1 26.4 54.2Z" fill="#b4b6b8"/><path d="M46.6 60.0L26.3 54.6A21 21 0 0 1 32.0 44.9Z" fill="#e2e3e4"/><path d="M46.6 60.0L31.8 45.2A21 21 0 0 1 41.5 39.6Z" fill="#cccdcf"/></g><circle cx="46.6" cy="60" r="20.6" fill="none" stroke="#e4e5e7" stroke-width="1.1" opacity=".7"/></g><path d="M46.6 44V55" stroke="#6c6f73" stroke-width="2.6"/><circle cx="126.6" cy="62" r="35" fill="#1a1d21" opacity=".85"/><circle cx="126.6" cy="61" r="31" fill="#0f1012"/><path d="M109.4 75.0L104.9 78.9" stroke="#3f80c6" stroke-width="3.2"/><path d="M106.2 70.1L100.8 72.8" stroke="#3f80c6" stroke-width="3.2"/><path d="M104.3 64.7L98.4 65.9" stroke="#3f80c6" stroke-width="3.2"/><path d="M103.8 58.9L97.8 58.6" stroke="#3f80c6" stroke-width="3.2"/><path d="M104.8 53.2L99.1 51.4" stroke="#3f80c6" stroke-width="3.2"/><path d="M107.3 47.9L102.2 44.7" stroke="#3f80c6" stroke-width="3.2"/><path d="M110.9 43.4L106.8 39.1" stroke="#3f80c6" stroke-width="3.2"/><path d="M115.6 40.0L112.7 34.8" stroke="#3f80c6" stroke-width="3.2"/><path d="M121.0 37.9L119.5 32.1" stroke="#3f80c6" stroke-width="3.2"/><path d="M126.8 37.2L126.8 31.2" stroke="#3f80c6" stroke-width="3.2"/><path d="M132.5 38.0L134.1 32.2" stroke="#2a2c2f" stroke-width="3.2"/><path d="M137.9 40.2L140.8 35.0" stroke="#2a2c2f" stroke-width="3.2"/><path d="M142.5 43.7L146.7 39.4" stroke="#2a2c2f" stroke-width="3.2"/><path d="M146.1 48.2L151.2 45.1" stroke="#2a2c2f" stroke-width="3.2"/><path d="M148.4 53.5L154.2 51.8" stroke="#2a2c2f" stroke-width="3.2"/><path d="M149.4 59.2L155.4 59.0" stroke="#2a2c2f" stroke-width="3.2"/><path d="M148.9 65.0L154.7 66.3" stroke="#2a2c2f" stroke-width="3.2"/><path d="M146.9 70.4L152.2 73.2" stroke="#2a2c2f" stroke-width="3.2"/><path d="M143.6 75.2L148.1 79.2" stroke="#2a2c2f" stroke-width="3.2"/><circle cx="126.6" cy="60" r="22.3" fill="#0a0b0c"/><clipPath id="c126_60"><circle cx="126.6" cy="60" r="21"/></clipPath><g clip-path="url(#c126_60)"><g style="filter:blur(1.5px)"><path d="M126.6 60.0L121.2 39.7A21 21 0 0 1 132.4 39.8Z" fill="#e9e9ea"/><path d="M126.6 60.0L132.0 39.7A21 21 0 0 1 141.7 45.4Z" fill="#cfd0d2"/><path d="M126.6 60.0L141.4 45.2A21 21 0 0 1 147.0 54.9Z" fill="#e2e3e4"/><path d="M126.6 60.0L146.9 54.6A21 21 0 0 1 146.8 65.8Z" fill="#bcbec0"/><path d="M126.6 60.0L146.9 65.4A21 21 0 0 1 141.2 75.1Z" fill="#dadbdc"/><path d="M126.6 60.0L141.4 74.8A21 21 0 0 1 131.7 80.4Z" fill="#c6c8ca"/><path d="M126.6 60.0L132.0 80.3A21 21 0 0 1 120.8 80.2Z" fill="#e6e6e7"/><path d="M126.6 60.0L121.2 80.3A21 21 0 0 1 111.5 74.6Z" fill="#c0c2c4"/><path d="M126.6 60.0L111.8 74.8A21 21 0 0 1 106.2 65.1Z" fill="#dedfe0"/><path d="M126.6 60.0L106.3 65.4A21 21 0 0 1 106.4 54.2Z" fill="#b4b6b8"/><path d="M126.6 60.0L106.3 54.6A21 21 0 0 1 112.0 44.9Z" fill="#e2e3e4"/><path d="M126.6 60.0L111.8 45.2A21 21 0 0 1 121.5 39.6Z" fill="#cccdcf"/></g><circle cx="126.6" cy="60" r="20.6" fill="none" stroke="#e4e5e7" stroke-width="1.1" opacity=".7"/></g><path d="M126.6 44V55" stroke="#6c6f73" stroke-width="2.6"/><circle cx="206.4" cy="62" r="35" fill="#1a1d21" opacity=".85"/><circle cx="206.4" cy="61" r="31" fill="#0f1012"/><path d="M189.2 75.0L184.7 78.9" stroke="#3f80c6" stroke-width="3.2"/><path d="M186.0 70.1L180.6 72.8" stroke="#3f80c6" stroke-width="3.2"/><path d="M184.1 64.7L178.2 65.9" stroke="#3f80c6" stroke-width="3.2"/><path d="M183.6 58.9L177.6 58.6" stroke="#3f80c6" stroke-width="3.2"/><path d="M184.6 53.2L178.9 51.4" stroke="#3f80c6" stroke-width="3.2"/><path d="M187.1 47.9L182.0 44.7" stroke="#3f80c6" stroke-width="3.2"/><path d="M190.7 43.4L186.6 39.1" stroke="#3f80c6" stroke-width="3.2"/><path d="M195.4 40.0L192.5 34.8" stroke="#3f80c6" stroke-width="3.2"/><path d="M200.8 37.9L199.3 32.1" stroke="#3f80c6" stroke-width="3.2"/><path d="M206.6 37.2L206.6 31.2" stroke="#3f80c6" stroke-width="3.2"/><path d="M212.3 38.0L213.9 32.2" stroke="#2a2c2f" stroke-width="3.2"/><path d="M217.7 40.2L220.6 35.0" stroke="#2a2c2f" stroke-width="3.2"/><path d="M222.3 43.7L226.5 39.4" stroke="#2a2c2f" stroke-width="3.2"/><path d="M225.9 48.2L231.0 45.1" stroke="#2a2c2f" stroke-width="3.2"/><path d="M228.2 53.5L234.0 51.8" stroke="#2a2c2f" stroke-width="3.2"/><path d="M229.2 59.2L235.2 59.0" stroke="#2a2c2f" stroke-width="3.2"/><path d="M228.7 65.0L234.5 66.3" stroke="#2a2c2f" stroke-width="3.2"/><path d="M226.7 70.4L232.0 73.2" stroke="#2a2c2f" stroke-width="3.2"/><path d="M223.4 75.2L227.9 79.2" stroke="#2a2c2f" stroke-width="3.2"/><circle cx="206.4" cy="60" r="22.3" fill="#0a0b0c"/><clipPath id="c206_60"><circle cx="206.4" cy="60" r="21"/></clipPath><g clip-path="url(#c206_60)"><g style="filter:blur(1.5px)"><path d="M206.4 60.0L201.0 39.7A21 21 0 0 1 212.2 39.8Z" fill="#e9e9ea"/><path d="M206.4 60.0L211.8 39.7A21 21 0 0 1 221.5 45.4Z" fill="#cfd0d2"/><path d="M206.4 60.0L221.2 45.2A21 21 0 0 1 226.8 54.9Z" fill="#e2e3e4"/><path d="M206.4 60.0L226.7 54.6A21 21 0 0 1 226.6 65.8Z" fill="#bcbec0"/><path d="M206.4 60.0L226.7 65.4A21 21 0 0 1 221.0 75.1Z" fill="#dadbdc"/><path d="M206.4 60.0L221.2 74.8A21 21 0 0 1 211.5 80.4Z" fill="#c6c8ca"/><path d="M206.4 60.0L211.8 80.3A21 21 0 0 1 200.6 80.2Z" fill="#e6e6e7"/><path d="M206.4 60.0L201.0 80.3A21 21 0 0 1 191.3 74.6Z" fill="#c0c2c4"/><path d="M206.4 60.0L191.6 74.8A21 21 0 0 1 186.0 65.1Z" fill="#dedfe0"/><path d="M206.4 60.0L186.1 65.4A21 21 0 0 1 186.2 54.2Z" fill="#b4b6b8"/><path d="M206.4 60.0L186.1 54.6A21 21 0 0 1 191.8 44.9Z" fill="#e2e3e4"/><path d="M206.4 60.0L191.6 45.2A21 21 0 0 1 201.3 39.6Z" fill="#cccdcf"/></g><circle cx="206.4" cy="60" r="20.6" fill="none" stroke="#e4e5e7" stroke-width="1.1" opacity=".7"/></g><path d="M206.4 44V55" stroke="#6c6f73" stroke-width="2.6"/><circle cx="286.2" cy="62" r="35" fill="#1a1d21" opacity=".85"/><circle cx="286.2" cy="61" r="31" fill="#0f1012"/><path d="M269.0 75.0L264.5 78.9" stroke="#3f80c6" stroke-width="3.2"/><path d="M265.8 70.1L260.4 72.8" stroke="#3f80c6" stroke-width="3.2"/><path d="M263.9 64.7L258.0 65.9" stroke="#3f80c6" stroke-width="3.2"/><path d="M263.4 58.9L257.4 58.6" stroke="#3f80c6" stroke-width="3.2"/><path d="M264.4 53.2L258.7 51.4" stroke="#3f80c6" stroke-width="3.2"/><path d="M266.9 47.9L261.8 44.7" stroke="#3f80c6" stroke-width="3.2"/><path d="M270.5 43.4L266.4 39.1" stroke="#3f80c6" stroke-width="3.2"/><path d="M275.2 40.0L272.3 34.8" stroke="#3f80c6" stroke-width="3.2"/><path d="M280.6 37.9L279.1 32.1" stroke="#3f80c6" stroke-width="3.2"/><path d="M286.4 37.2L286.4 31.2" stroke="#3f80c6" stroke-width="3.2"/><path d="M292.1 38.0L293.7 32.2" stroke="#2a2c2f" stroke-width="3.2"/><path d="M297.5 40.2L300.4 35.0" stroke="#2a2c2f" stroke-width="3.2"/><path d="M302.1 43.7L306.3 39.4" stroke="#2a2c2f" stroke-width="3.2"/><path d="M305.7 48.2L310.8 45.1" stroke="#2a2c2f" stroke-width="3.2"/><path d="M308.0 53.5L313.8 51.8" stroke="#2a2c2f" stroke-width="3.2"/><path d="M309.0 59.2L315.0 59.0" stroke="#2a2c2f" stroke-width="3.2"/><path d="M308.5 65.0L314.3 66.3" stroke="#2a2c2f" stroke-width="3.2"/><path d="M306.5 70.4L311.8 73.2" stroke="#2a2c2f" stroke-width="3.2"/><path d="M303.2 75.2L307.7 79.2" stroke="#2a2c2f" stroke-width="3.2"/><circle cx="286.2" cy="60" r="22.3" fill="#0a0b0c"/><clipPath id="c286_60"><circle cx="286.2" cy="60" r="21"/></clipPath><g clip-path="url(#c286_60)"><g style="filter:blur(1.5px)"><path d="M286.2 60.0L280.8 39.7A21 21 0 0 1 292.0 39.8Z" fill="#e9e9ea"/><path d="M286.2 60.0L291.6 39.7A21 21 0 0 1 301.3 45.4Z" fill="#cfd0d2"/><path d="M286.2 60.0L301.0 45.2A21 21 0 0 1 306.6 54.9Z" fill="#e2e3e4"/><path d="M286.2 60.0L306.5 54.6A21 21 0 0 1 306.4 65.8Z" fill="#bcbec0"/><path d="M286.2 60.0L306.5 65.4A21 21 0 0 1 300.8 75.1Z" fill="#dadbdc"/><path d="M286.2 60.0L301.0 74.8A21 21 0 0 1 291.3 80.4Z" fill="#c6c8ca"/><path d="M286.2 60.0L291.6 80.3A21 21 0 0 1 280.4 80.2Z" fill="#e6e6e7"/><path d="M286.2 60.0L280.8 80.3A21 21 0 0 1 271.1 74.6Z" fill="#c0c2c4"/><path d="M286.2 60.0L271.4 74.8A21 21 0 0 1 265.8 65.1Z" fill="#dedfe0"/><path d="M286.2 60.0L265.9 65.4A21 21 0 0 1 266.0 54.2Z" fill="#b4b6b8"/><path d="M286.2 60.0L265.9 54.6A21 21 0 0 1 271.6 44.9Z" fill="#e2e3e4"/><path d="M286.2 60.0L271.4 45.2A21 21 0 0 1 281.1 39.6Z" fill="#cccdcf"/></g><circle cx="286.2" cy="60" r="20.6" fill="none" stroke="#e4e5e7" stroke-width="1.1" opacity=".7"/></g><path d="M286.2 44V55" stroke="#6c6f73" stroke-width="2.6"/><circle cx="367.5" cy="62" r="35" fill="#1a1d21" opacity=".85"/><circle cx="367.5" cy="61" r="31" fill="#0f1012"/><path d="M350.3 75.0L345.8 78.9" stroke="#3f80c6" stroke-width="3.2"/><path d="M347.1 70.1L341.7 72.8" stroke="#3f80c6" stroke-width="3.2"/><path d="M345.2 64.7L339.3 65.9" stroke="#3f80c6" stroke-width="3.2"/><path d="M344.7 58.9L338.7 58.6" stroke="#3f80c6" stroke-width="3.2"/><path d="M345.7 53.2L340.0 51.4" stroke="#3f80c6" stroke-width="3.2"/><path d="M348.2 47.9L343.1 44.7" stroke="#3f80c6" stroke-width="3.2"/><path d="M351.8 43.4L347.7 39.1" stroke="#3f80c6" stroke-width="3.2"/><path d="M356.5 40.0L353.6 34.8" stroke="#3f80c6" stroke-width="3.2"/><path d="M361.9 37.9L360.4 32.1" stroke="#3f80c6" stroke-width="3.2"/><path d="M367.7 37.2L367.7 31.2" stroke="#3f80c6" stroke-width="3.2"/><path d="M373.4 38.0L375.0 32.2" stroke="#2a2c2f" stroke-width="3.2"/><path d="M378.8 40.2L381.7 35.0" stroke="#2a2c2f" stroke-width="3.2"/><path d="M383.4 43.7L387.6 39.4" stroke="#2a2c2f" stroke-width="3.2"/><path d="M387.0 48.2L392.1 45.1" stroke="#2a2c2f" stroke-width="3.2"/><path d="M389.3 53.5L395.1 51.8" stroke="#2a2c2f" stroke-width="3.2"/><path d="M390.3 59.2L396.3 59.0" stroke="#2a2c2f" stroke-width="3.2"/><path d="M389.8 65.0L395.6 66.3" stroke="#2a2c2f" stroke-width="3.2"/><path d="M387.8 70.4L393.1 73.2" stroke="#2a2c2f" stroke-width="3.2"/><path d="M384.5 75.2L389.0 79.2" stroke="#2a2c2f" stroke-width="3.2"/><circle cx="367.5" cy="60" r="22.3" fill="#0a0b0c"/><clipPath id="c367_60"><circle cx="367.5" cy="60" r="21"/></clipPath><g clip-path="url(#c367_60)"><g style="filter:blur(1.5px)"><path d="M367.5 60.0L362.1 39.7A21 21 0 0 1 373.3 39.8Z" fill="#e9e9ea"/><path d="M367.5 60.0L372.9 39.7A21 21 0 0 1 382.6 45.4Z" fill="#cfd0d2"/><path d="M367.5 60.0L382.3 45.2A21 21 0 0 1 387.9 54.9Z" fill="#e2e3e4"/><path d="M367.5 60.0L387.8 54.6A21 21 0 0 1 387.7 65.8Z" fill="#bcbec0"/><path d="M367.5 60.0L387.8 65.4A21 21 0 0 1 382.1 75.1Z" fill="#dadbdc"/><path d="M367.5 60.0L382.3 74.8A21 21 0 0 1 372.6 80.4Z" fill="#c6c8ca"/><path d="M367.5 60.0L372.9 80.3A21 21 0 0 1 361.7 80.2Z" fill="#e6e6e7"/><path d="M367.5 60.0L362.1 80.3A21 21 0 0 1 352.4 74.6Z" fill="#c0c2c4"/><path d="M367.5 60.0L352.7 74.8A21 21 0 0 1 347.1 65.1Z" fill="#dedfe0"/><path d="M367.5 60.0L347.2 65.4A21 21 0 0 1 347.3 54.2Z" fill="#b4b6b8"/><path d="M367.5 60.0L347.2 54.6A21 21 0 0 1 352.9 44.9Z" fill="#e2e3e4"/><path d="M367.5 60.0L352.7 45.2A21 21 0 0 1 362.4 39.6Z" fill="#cccdcf"/></g><circle cx="367.5" cy="60" r="20.6" fill="none" stroke="#e4e5e7" stroke-width="1.1" opacity=".7"/></g><path d="M367.5 44V55" stroke="#6c6f73" stroke-width="2.6"/><circle cx="449" cy="62" r="35" fill="#1a1d21" opacity=".85"/><circle cx="449" cy="61" r="31" fill="#0f1012"/><path d="M431.8 75.0L427.3 78.9" stroke="#3f80c6" stroke-width="3.2"/><path d="M428.6 70.1L423.2 72.8" stroke="#3f80c6" stroke-width="3.2"/><path d="M426.7 64.7L420.8 65.9" stroke="#3f80c6" stroke-width="3.2"/><path d="M426.2 58.9L420.2 58.6" stroke="#3f80c6" stroke-width="3.2"/><path d="M427.2 53.2L421.5 51.4" stroke="#3f80c6" stroke-width="3.2"/><path d="M429.7 47.9L424.6 44.7" stroke="#3f80c6" stroke-width="3.2"/><path d="M433.3 43.4L429.2 39.1" stroke="#3f80c6" stroke-width="3.2"/><path d="M438.0 40.0L435.1 34.8" stroke="#3f80c6" stroke-width="3.2"/><path d="M443.4 37.9L441.9 32.1" stroke="#3f80c6" stroke-width="3.2"/><path d="M449.2 37.2L449.2 31.2" stroke="#3f80c6" stroke-width="3.2"/><path d="M454.9 38.0L456.5 32.2" stroke="#2a2c2f" stroke-width="3.2"/><path d="M460.3 40.2L463.2 35.0" stroke="#2a2c2f" stroke-width="3.2"/><path d="M464.9 43.7L469.1 39.4" stroke="#2a2c2f" stroke-width="3.2"/><path d="M468.5 48.2L473.6 45.1" stroke="#2a2c2f" stroke-width="3.2"/><path d="M470.8 53.5L476.6 51.8" stroke="#2a2c2f" stroke-width="3.2"/><path d="M471.8 59.2L477.8 59.0" stroke="#2a2c2f" stroke-width="3.2"/><path d="M471.3 65.0L477.1 66.3" stroke="#2a2c2f" stroke-width="3.2"/><path d="M469.3 70.4L474.6 73.2" stroke="#2a2c2f" stroke-width="3.2"/><path d="M466.0 75.2L470.5 79.2" stroke="#2a2c2f" stroke-width="3.2"/><circle cx="449" cy="60" r="22.3" fill="#0a0b0c"/><clipPath id="c449_60"><circle cx="449" cy="60" r="21"/></clipPath><g clip-path="url(#c449_60)"><g style="filter:blur(1.5px)"><path d="M449.0 60.0L443.6 39.7A21 21 0 0 1 454.8 39.8Z" fill="#e9e9ea"/><path d="M449.0 60.0L454.4 39.7A21 21 0 0 1 464.1 45.4Z" fill="#cfd0d2"/><path d="M449.0 60.0L463.8 45.2A21 21 0 0 1 469.4 54.9Z" fill="#e2e3e4"/><path d="M449.0 60.0L469.3 54.6A21 21 0 0 1 469.2 65.8Z" fill="#bcbec0"/><path d="M449.0 60.0L469.3 65.4A21 21 0 0 1 463.6 75.1Z" fill="#dadbdc"/><path d="M449.0 60.0L463.8 74.8A21 21 0 0 1 454.1 80.4Z" fill="#c6c8ca"/><path d="M449.0 60.0L454.4 80.3A21 21 0 0 1 443.2 80.2Z" fill="#e6e6e7"/><path d="M449.0 60.0L443.6 80.3A21 21 0 0 1 433.9 74.6Z" fill="#c0c2c4"/><path d="M449.0 60.0L434.2 74.8A21 21 0 0 1 428.6 65.1Z" fill="#dedfe0"/><path d="M449.0 60.0L428.7 65.4A21 21 0 0 1 428.8 54.2Z" fill="#b4b6b8"/><path d="M449.0 60.0L428.7 54.6A21 21 0 0 1 434.4 44.9Z" fill="#e2e3e4"/><path d="M449.0 60.0L434.2 45.2A21 21 0 0 1 443.9 39.6Z" fill="#cccdcf"/></g><circle cx="449" cy="60" r="20.6" fill="none" stroke="#e4e5e7" stroke-width="1.1" opacity=".7"/></g><path d="M449 44V55" stroke="#6c6f73" stroke-width="2.6"/><circle cx="530.5" cy="62" r="35" fill="#1a1d21" opacity=".85"/><circle cx="530.5" cy="61" r="31" fill="#0f1012"/><path d="M513.3 75.0L508.8 78.9" stroke="#3f80c6" stroke-width="3.2"/><path d="M510.1 70.1L504.7 72.8" stroke="#3f80c6" stroke-width="3.2"/><path d="M508.2 64.7L502.3 65.9" stroke="#3f80c6" stroke-width="3.2"/><path d="M507.7 58.9L501.7 58.6" stroke="#3f80c6" stroke-width="3.2"/><path d="M508.7 53.2L503.0 51.4" stroke="#3f80c6" stroke-width="3.2"/><path d="M511.2 47.9L506.1 44.7" stroke="#3f80c6" stroke-width="3.2"/><path d="M514.8 43.4L510.7 39.1" stroke="#3f80c6" stroke-width="3.2"/><path d="M519.5 40.0L516.6 34.8" stroke="#3f80c6" stroke-width="3.2"/><path d="M524.9 37.9L523.4 32.1" stroke="#3f80c6" stroke-width="3.2"/><path d="M530.7 37.2L530.7 31.2" stroke="#3f80c6" stroke-width="3.2"/><path d="M536.4 38.0L538.0 32.2" stroke="#2a2c2f" stroke-width="3.2"/><path d="M541.8 40.2L544.7 35.0" stroke="#2a2c2f" stroke-width="3.2"/><path d="M546.4 43.7L550.6 39.4" stroke="#2a2c2f" stroke-width="3.2"/><path d="M550.0 48.2L555.1 45.1" stroke="#2a2c2f" stroke-width="3.2"/><path d="M552.3 53.5L558.1 51.8" stroke="#2a2c2f" stroke-width="3.2"/><path d="M553.3 59.2L559.3 59.0" stroke="#2a2c2f" stroke-width="3.2"/><path d="M552.8 65.0L558.6 66.3" stroke="#2a2c2f" stroke-width="3.2"/><path d="M550.8 70.4L556.1 73.2" stroke="#2a2c2f" stroke-width="3.2"/><path d="M547.5 75.2L552.0 79.2" stroke="#2a2c2f" stroke-width="3.2"/><circle cx="530.5" cy="60" r="22.3" fill="#0a0b0c"/><clipPath id="c530_60"><circle cx="530.5" cy="60" r="21"/></clipPath><g clip-path="url(#c530_60)"><g style="filter:blur(1.5px)"><path d="M530.5 60.0L525.1 39.7A21 21 0 0 1 536.3 39.8Z" fill="#e9e9ea"/><path d="M530.5 60.0L535.9 39.7A21 21 0 0 1 545.6 45.4Z" fill="#cfd0d2"/><path d="M530.5 60.0L545.3 45.2A21 21 0 0 1 550.9 54.9Z" fill="#e2e3e4"/><path d="M530.5 60.0L550.8 54.6A21 21 0 0 1 550.7 65.8Z" fill="#bcbec0"/><path d="M530.5 60.0L550.8 65.4A21 21 0 0 1 545.1 75.1Z" fill="#dadbdc"/><path d="M530.5 60.0L545.3 74.8A21 21 0 0 1 535.6 80.4Z" fill="#c6c8ca"/><path d="M530.5 60.0L535.9 80.3A21 21 0 0 1 524.7 80.2Z" fill="#e6e6e7"/><path d="M530.5 60.0L525.1 80.3A21 21 0 0 1 515.4 74.6Z" fill="#c0c2c4"/><path d="M530.5 60.0L515.7 74.8A21 21 0 0 1 510.1 65.1Z" fill="#dedfe0"/><path d="M530.5 60.0L510.2 65.4A21 21 0 0 1 510.3 54.2Z" fill="#b4b6b8"/><path d="M530.5 60.0L510.2 54.6A21 21 0 0 1 515.9 44.9Z" fill="#e2e3e4"/><path d="M530.5 60.0L515.7 45.2A21 21 0 0 1 525.4 39.6Z" fill="#cccdcf"/></g><circle cx="530.5" cy="60" r="20.6" fill="none" stroke="#e4e5e7" stroke-width="1.1" opacity=".7"/></g><path d="M530.5 44V55" stroke="#6c6f73" stroke-width="2.6"/><circle cx="612" cy="62" r="35" fill="#1a1d21" opacity=".85"/><circle cx="612" cy="61" r="31" fill="#0f1012"/><path d="M594.8 75.0L590.3 78.9" stroke="#3f80c6" stroke-width="3.2"/><path d="M591.6 70.1L586.2 72.8" stroke="#3f80c6" stroke-width="3.2"/><path d="M589.7 64.7L583.8 65.9" stroke="#3f80c6" stroke-width="3.2"/><path d="M589.2 58.9L583.2 58.6" stroke="#3f80c6" stroke-width="3.2"/><path d="M590.2 53.2L584.5 51.4" stroke="#3f80c6" stroke-width="3.2"/><path d="M592.7 47.9L587.6 44.7" stroke="#3f80c6" stroke-width="3.2"/><path d="M596.3 43.4L592.2 39.1" stroke="#3f80c6" stroke-width="3.2"/><path d="M601.0 40.0L598.1 34.8" stroke="#3f80c6" stroke-width="3.2"/><path d="M606.4 37.9L604.9 32.1" stroke="#3f80c6" stroke-width="3.2"/><path d="M612.2 37.2L612.2 31.2" stroke="#3f80c6" stroke-width="3.2"/><path d="M617.9 38.0L619.5 32.2" stroke="#2a2c2f" stroke-width="3.2"/><path d="M623.3 40.2L626.2 35.0" stroke="#2a2c2f" stroke-width="3.2"/><path d="M627.9 43.7L632.1 39.4" stroke="#2a2c2f" stroke-width="3.2"/><path d="M631.5 48.2L636.6 45.1" stroke="#2a2c2f" stroke-width="3.2"/><path d="M633.8 53.5L639.6 51.8" stroke="#2a2c2f" stroke-width="3.2"/><path d="M634.8 59.2L640.8 59.0" stroke="#2a2c2f" stroke-width="3.2"/><path d="M634.3 65.0L640.1 66.3" stroke="#2a2c2f" stroke-width="3.2"/><path d="M632.3 70.4L637.6 73.2" stroke="#2a2c2f" stroke-width="3.2"/><path d="M629.0 75.2L633.5 79.2" stroke="#2a2c2f" stroke-width="3.2"/><circle cx="612" cy="60" r="22.3" fill="#0a0b0c"/><clipPath id="c612_60"><circle cx="612" cy="60" r="21"/></clipPath><g clip-path="url(#c612_60)"><g style="filter:blur(1.5px)"><path d="M612.0 60.0L606.6 39.7A21 21 0 0 1 617.8 39.8Z" fill="#e9e9ea"/><path d="M612.0 60.0L617.4 39.7A21 21 0 0 1 627.1 45.4Z" fill="#cfd0d2"/><path d="M612.0 60.0L626.8 45.2A21 21 0 0 1 632.4 54.9Z" fill="#e2e3e4"/><path d="M612.0 60.0L632.3 54.6A21 21 0 0 1 632.2 65.8Z" fill="#bcbec0"/><path d="M612.0 60.0L632.3 65.4A21 21 0 0 1 626.6 75.1Z" fill="#dadbdc"/><path d="M612.0 60.0L626.8 74.8A21 21 0 0 1 617.1 80.4Z" fill="#c6c8ca"/><path d="M612.0 60.0L617.4 80.3A21 21 0 0 1 606.2 80.2Z" fill="#e6e6e7"/><path d="M612.0 60.0L606.6 80.3A21 21 0 0 1 596.9 74.6Z" fill="#c0c2c4"/><path d="M612.0 60.0L597.2 74.8A21 21 0 0 1 591.6 65.1Z" fill="#dedfe0"/><path d="M612.0 60.0L591.7 65.4A21 21 0 0 1 591.8 54.2Z" fill="#b4b6b8"/><path d="M612.0 60.0L591.7 54.6A21 21 0 0 1 597.4 44.9Z" fill="#e2e3e4"/><path d="M612.0 60.0L597.2 45.2A21 21 0 0 1 606.9 39.6Z" fill="#cccdcf"/></g><circle cx="612" cy="60" r="20.6" fill="none" stroke="#e4e5e7" stroke-width="1.1" opacity=".7"/></g><path d="M612 44V55" stroke="#6c6f73" stroke-width="2.6"/></svg>
<div style="left:2473px;top:475.3px;width:759px;height:296.2px;background:#252523;"></div>
<div style="left:2473px;top:475.3px;width:35.2px;height:296.2px;background:#232321;border-right:1.5px solid #121315;"></div>
<div style="left:3196px;top:475.3px;width:36px;height:296.2px;background:#232321;border-left:1.5px solid #121315;"></div>
<div style="left:2473px;top:771.5px;width:759px;height:1.6px;background:#101113;"></div>
<div class="t" style="left:2473px;top:489.8px;width:30px;text-align:center;font-size:17.5px;line-height:21px;color:#eef0f2;font-weight:bold;">2</div>
<div style="left:2521px;top:488.6px;width:662.5px;height:181.8px;background:#050505;border-radius:13px;box-shadow:0 1px 0 rgba(255,255,255,.08), inset 0 0 0 1.5px rgba(0,0,0,.5);"></div>
<div style="left:2534.2px;top:500.4px;width:638px;height:159.7px;background:linear-gradient(#1b1f25 0,#14181e 13%,#0a0d11 15%,#0d1015 60%,#0b0e12 100%);border-radius:4px;"></div>
<div style="left:2534.2px;top:500.4px;width:638px;height:57.7px;background:linear-gradient(#272a2e,#1b1d20);border-radius:4px 4px 0 0;"></div>
<div style="left:2538.2px;top:557.4px;width:630px;height:1.5px;background:#363a3f;"></div>
<div style="left:2534.2px;top:558.9px;width:638px;height:22px;background:linear-gradient(rgba(255,255,255,.05),rgba(255,255,255,0));"></div>
<div style="left:2552.9px;top:513.6px;width:30.7px;height:29.7px;background:linear-gradient(#e4e5e7,#cfd1d4);border-radius:2px;"></div>
<svg style="left:2552.9px;top:513.6px;" width="30.7" height="29.7" viewBox="0 0 30.7 29.7"><circle cx="15.3" cy="16" r="8.2" fill="none" stroke="#1f2124" stroke-width="3.1"/><rect x="12.4" y="3.5" width="5.8" height="12" fill="#dadbde"/><rect x="13.7" y="4.8" width="3.2" height="10.6" fill="#1f2124"/></svg>
<svg style="left:2589px;top:514.6px;" width="28" height="28" viewBox="0 0 28 28"><g transform="rotate(-24 14 14)"><path d="M5.5 14H22A8.6 8.6 0 1 0 19.2 20.6" fill="none" stroke="#80888c" stroke-width="3.1" stroke-linecap="round"/></g></svg>
<svg style="left:2621px;top:515.6px;" width="30" height="26" viewBox="0 0 30 26"><path d="M8.5 2H21.5L28 13L21.5 24H8.5L2 13Z" fill="none" stroke="#8b958d" stroke-width="2.8" stroke-linejoin="round"/><path d="M15 5V21M8 9L22 17M22 9L8 17" stroke="#8b958d" stroke-width="2.8"/></svg>
<div class="t" style="left:2720.5px;top:509.8px;font-size:26.5px;line-height:31.8px;color:#e9ebed;font-weight:bold;">Retrologue</div>
<svg style="left:3092px;top:519.3px;" width="24" height="19" viewBox="0 0 24 19"><path d="M0 9.5H12M8 4.5L13 9.5L8 14.5" fill="none" stroke="#80888c" stroke-width="2.4"/><path d="M11 1.5H20V17.5H11" fill="none" stroke="#80888c" stroke-width="2.4"/></svg>
<svg style="left:3132px;top:519.3px;" width="24" height="19" viewBox="0 0 24 19"><path d="M10 1.5H1.5V17.5H10" fill="none" stroke="#3a4044" stroke-width="2.4"/><path d="M6 9.5H14" stroke="#3a4044" stroke-width="2.6"/><path d="M13 3L21 9.5L13 16Z" fill="#3a4044"/></svg>
<div class="t" style="left:2560px;top:577.8px;font-size:18.5px;line-height:22.2px;color:#8a9094;font-weight:bold;font-family:DejaVu Sans,Liberation Sans,sans-serif;">R</div>
<div class="t" style="left:2589px;top:577.8px;width:28px;text-align:center;font-size:18.5px;line-height:22.2px;color:#8a9094;font-weight:bold;font-family:DejaVu Sans,Liberation Sans,sans-serif;transform:scaleX(.72);">W</div>
<div class="t" style="left:2632.4px;top:585.8px;font-size:14.5px;line-height:17.4px;color:#eceef0;font-weight:bold;">Page 1</div>
<svg style="left:3099px;top:582.3px;" width="16" height="20" viewBox="0 0 16 20"><path d="M8 0.5L14.5 8H1.5ZM8 19.5L14.5 12H1.5Z" fill="#80888c"/></svg>
<svg style="left:3131px;top:580.3px;" width="24" height="22" viewBox="0 0 24 22"><path d="M11 1.5L21 9L12 19.5L2 11Z" fill="none" stroke="#80888c" stroke-width="1.8"/><path d="M2 11L11 1.5L12 8L7 15.5Z" fill="#80888c"/></svg>
<div class="t" style="left:2511.8px;top:612.8px;width:120px;text-align:center;font-size:14.3px;line-height:17.16px;color:#e4e8ec;font-weight:bold;">Filter</div>
<div class="t" style="left:2511.8px;top:631.3px;width:120px;text-align:center;font-size:14.3px;line-height:17.16px;color:#e4e8ec;font-weight:bold;">Cutoff</div>
<div class="t" style="left:2588.5px;top:612.8px;width:120px;text-align:center;font-size:14.3px;line-height:17.16px;color:#e4e8ec;font-weight:bold;">Filter</div>
<div class="t" style="left:2588.5px;top:631.3px;width:120px;text-align:center;font-size:14.3px;line-height:17.16px;color:#e4e8ec;font-weight:bold;">Resonance</div>
<div class="t" style="left:2666.2px;top:612.8px;width:120px;text-align:center;font-size:14.3px;line-height:17.16px;color:#e4e8ec;font-weight:bold;">Filter</div>
<div class="t" style="left:2666.2px;top:631.3px;width:120px;text-align:center;font-size:14.3px;line-height:17.16px;color:#e4e8ec;font-weight:bold;">Distortion</div>
<div class="t" style="left:2744.3px;top:612.8px;width:120px;text-align:center;font-size:14.3px;line-height:17.16px;color:#e4e8ec;font-weight:bold;">Filter Env</div>
<div class="t" style="left:2744.3px;top:631.3px;width:120px;text-align:center;font-size:14.3px;line-height:17.16px;color:#e4e8ec;font-weight:bold;">Amount</div>
<div class="t" style="left:2822.4px;top:612.8px;width:120px;text-align:center;font-size:14.3px;line-height:17.16px;color:#e4e8ec;font-weight:bold;">DCF</div>
<div class="t" style="left:2822.4px;top:631.3px;width:120px;text-align:center;font-size:14.3px;line-height:17.16px;color:#e4e8ec;font-weight:bold;">Attack</div>
<div class="t" style="left:2901px;top:612.8px;width:120px;text-align:center;font-size:14.3px;line-height:17.16px;color:#e4e8ec;font-weight:bold;">DCF</div>
<div class="t" style="left:2901px;top:631.3px;width:120px;text-align:center;font-size:14.3px;line-height:17.16px;color:#e4e8ec;font-weight:bold;">Decay</div>
<div class="t" style="left:2979px;top:612.8px;width:120px;text-align:center;font-size:14.3px;line-height:17.16px;color:#e4e8ec;font-weight:bold;">DCA</div>
<div class="t" style="left:2979px;top:631.3px;width:120px;text-align:center;font-size:14.3px;line-height:17.16px;color:#e4e8ec;font-weight:bold;">Attack</div>
<div class="t" style="left:3057.2px;top:612.8px;width:120px;text-align:center;font-size:14.3px;line-height:17.16px;color:#e4e8ec;font-weight:bold;">DCA</div>
<div class="t" style="left:3057.2px;top:631.3px;width:120px;text-align:center;font-size:14.3px;line-height:17.16px;color:#e4e8ec;font-weight:bold;">Decay</div>
<svg style="left:3202px;top:487.8px;" width="24" height="24" viewBox="0 0 24 24"><circle cx="12" cy="12" r="11.2" fill="#e4e6e8"/><path d="M3.5 14.5H20.5L12 5Z" fill="#1c1e21"/><path d="M1.2 15A11 11 0 0 0 22.8 15Z" fill="#e4e6e8"/><path d="M4 14.2H20L12 5.2Z" fill="#1c1e21"/></svg>
<svg style="left:3202px;top:737.3px;" width="24" height="24" viewBox="0 0 24 24"><circle cx="12" cy="12" r="9.6" fill="none" stroke="#7d8a8c" stroke-width="2.2"/><path d="M12 12L18 6" stroke="#7d8a8c" stroke-width="2.2"/></svg>
<svg style="left:2510px;top:654.7px;" width="690" height="120" viewBox="0 0 690 120"><circle cx="57.2" cy="79" r="24" fill="#0a0a0a" opacity=".8" style="filter:blur(3px)"/><path d="M33.6 87.3L31.7 90.6" stroke="#c4c6c8" stroke-width="2" opacity=".8"/><path d="M22.9 76.6L19.6 78.5" stroke="#c4c6c8" stroke-width="2" opacity=".8"/><path d="M19.0 62.0L15.2 62.0" stroke="#c4c6c8" stroke-width="2" opacity=".8"/><path d="M22.9 47.4L19.6 45.5" stroke="#c4c6c8" stroke-width="2" opacity=".8"/><path d="M33.6 36.7L31.7 33.4" stroke="#c4c6c8" stroke-width="2" opacity=".8"/><path d="M48.2 32.8L48.2 29.0" stroke="#c4c6c8" stroke-width="2" opacity=".8"/><path d="M62.8 36.7L64.7 33.4" stroke="#c4c6c8" stroke-width="2" opacity=".8"/><path d="M73.5 47.4L76.8 45.5" stroke="#c4c6c8" stroke-width="2" opacity=".8"/><path d="M77.4 62.0L81.2 62.0" stroke="#c4c6c8" stroke-width="2" opacity=".8"/><path d="M73.5 76.6L76.8 78.5" stroke="#c4c6c8" stroke-width="2" opacity=".8"/><path d="M62.8 87.3L64.7 90.6" stroke="#c4c6c8" stroke-width="2" opacity=".8"/><circle cx="48.2" cy="62" r="26.6" fill="#101011"/><path d="M28.1 73.6A23.2 23.2 0 0 1 40.3 40.2" fill="none" stroke="#34363a" stroke-width="5" style="filter:blur(1px)"/><path d="M58.5 79.8L61.7 85.4" stroke="#eceeef" stroke-width="3" stroke-linecap="round"/><circle cx="48.2" cy="62" r="17.3" fill="#050505"/><clipPath id="c48_62"><circle cx="48.2" cy="62" r="15.8"/></clipPath><g clip-path="url(#c48_62)"><g style="filter:blur(1.5px)"><path d="M48.2 62.0L44.1 46.7A15.8 15.8 0 0 1 52.6 46.8Z" fill="#fafafa"/><path d="M48.2 62.0L52.3 46.7A15.8 15.8 0 0 1 59.6 51.0Z" fill="#9c9ea1"/><path d="M48.2 62.0L59.4 50.8A15.8 15.8 0 0 1 63.5 58.2Z" fill="#ececed"/><path d="M48.2 62.0L63.5 57.9A15.8 15.8 0 0 1 63.4 66.4Z" fill="#6e7073"/><path d="M48.2 62.0L63.5 66.1A15.8 15.8 0 0 1 59.2 73.4Z" fill="#dedfe1"/><path d="M48.2 62.0L59.4 73.2A15.8 15.8 0 0 1 52.0 77.3Z" fill="#8a8c8f"/><path d="M48.2 62.0L52.3 77.3A15.8 15.8 0 0 1 43.8 77.2Z" fill="#f6f6f7"/><path d="M48.2 62.0L44.1 77.3A15.8 15.8 0 0 1 36.8 73.0Z" fill="#7c7e81"/><path d="M48.2 62.0L37.0 73.2A15.8 15.8 0 0 1 32.9 65.8Z" fill="#e2e3e5"/><path d="M48.2 62.0L32.9 66.1A15.8 15.8 0 0 1 33.0 57.6Z" fill="#66686b"/><path d="M48.2 62.0L32.9 57.9A15.8 15.8 0 0 1 37.2 50.6Z" fill="#eeeeef"/><path d="M48.2 62.0L37.0 50.8A15.8 15.8 0 0 1 44.4 46.7Z" fill="#a2a4a7"/></g><circle cx="48.2" cy="62" r="15.4" fill="none" stroke="#e4e5e7" stroke-width="1.1" opacity=".7"/></g><circle cx="138.5" cy="79" r="24" fill="#0a0a0a" opacity=".8" style="filter:blur(3px)"/><path d="M114.9 87.3L113.0 90.6" stroke="#c4c6c8" stroke-width="2" opacity=".8"/><path d="M104.2 76.6L100.9 78.5" stroke="#c4c6c8" stroke-width="2" opacity=".8"/><path d="M100.3 62.0L96.5 62.0" stroke="#c4c6c8" stroke-width="2" opacity=".8"/><path d="M104.2 47.4L100.9 45.5" stroke="#c4c6c8" stroke-width="2" opacity=".8"/><path d="M114.9 36.7L113.0 33.4" stroke="#c4c6c8" stroke-width="2" opacity=".8"/><path d="M129.5 32.8L129.5 29.0" stroke="#c4c6c8" stroke-width="2" opacity=".8"/><path d="M144.1 36.7L146.0 33.4" stroke="#c4c6c8" stroke-width="2" opacity=".8"/><path d="M154.8 47.4L158.1 45.5" stroke="#c4c6c8" stroke-width="2" opacity=".8"/><path d="M158.7 62.0L162.5 62.0" stroke="#c4c6c8" stroke-width="2" opacity=".8"/><path d="M154.8 76.6L158.1 78.5" stroke="#c4c6c8" stroke-width="2" opacity=".8"/><path d="M144.1 87.3L146.0 90.6" stroke="#c4c6c8" stroke-width="2" opacity=".8"/><circle cx="129.5" cy="62" r="26.6" fill="#101011"/><path d="M109.4 73.6A23.2 23.2 0 0 1 121.6 40.2" fill="none" stroke="#34363a" stroke-width="5" style="filter:blur(1px)"/><path d="M119.2 79.8L116.0 85.4" stroke="#eceeef" stroke-width="3" stroke-linecap="round"/><circle cx="129.5" cy="62" r="17.3" fill="#050505"/><clipPath id="c129_62"><circle cx="129.5" cy="62" r="15.8"/></clipPath><g clip-path="url(#c129_62)"><g style="filter:blur(1.5px)"><path d="M129.5 62.0L125.4 46.7A15.8 15.8 0 0 1 133.9 46.8Z" fill="#fafafa"/><path d="M129.5 62.0L133.6 46.7A15.8 15.8 0 0 1 140.9 51.0Z" fill="#9c9ea1"/><path d="M129.5 62.0L140.7 50.8A15.8 15.8 0 0 1 144.8 58.2Z" fill="#ececed"/><path d="M129.5 62.0L144.8 57.9A15.8 15.8 0 0 1 144.7 66.4Z" fill="#6e7073"/><path d="M129.5 62.0L144.8 66.1A15.8 15.8 0 0 1 140.5 73.4Z" fill="#dedfe1"/><path d="M129.5 62.0L140.7 73.2A15.8 15.8 0 0 1 133.3 77.3Z" fill="#8a8c8f"/><path d="M129.5 62.0L133.6 77.3A15.8 15.8 0 0 1 125.1 77.2Z" fill="#f6f6f7"/><path d="M129.5 62.0L125.4 77.3A15.8 15.8 0 0 1 118.1 73.0Z" fill="#7c7e81"/><path d="M129.5 62.0L118.3 73.2A15.8 15.8 0 0 1 114.2 65.8Z" fill="#e2e3e5"/><path d="M129.5 62.0L114.2 66.1A15.8 15.8 0 0 1 114.3 57.6Z" fill="#66686b"/><path d="M129.5 62.0L114.2 57.9A15.8 15.8 0 0 1 118.5 50.6Z" fill="#eeeeef"/><path d="M129.5 62.0L118.3 50.8A15.8 15.8 0 0 1 125.7 46.7Z" fill="#a2a4a7"/></g><circle cx="129.5" cy="62" r="15.4" fill="none" stroke="#e4e5e7" stroke-width="1.1" opacity=".7"/></g><circle cx="220.7" cy="79" r="24" fill="#0a0a0a" opacity=".8" style="filter:blur(3px)"/><path d="M197.1 87.3L195.2 90.6" stroke="#c4c6c8" stroke-width="2" opacity=".8"/><path d="M186.4 76.6L183.1 78.5" stroke="#c4c6c8" stroke-width="2" opacity=".8"/><path d="M182.5 62.0L178.7 62.0" stroke="#c4c6c8" stroke-width="2" opacity=".8"/><path d="M186.4 47.4L183.1 45.5" stroke="#c4c6c8" stroke-width="2" opacity=".8"/><path d="M197.1 36.7L195.2 33.4" stroke="#c4c6c8" stroke-width="2" opacity=".8"/><path d="M211.7 32.8L211.7 29.0" stroke="#c4c6c8" stroke-width="2" opacity=".8"/><path d="M226.3 36.7L228.2 33.4" stroke="#c4c6c8" stroke-width="2" opacity=".8"/><path d="M237.0 47.4L240.3 45.5" stroke="#c4c6c8" stroke-width="2" opacity=".8"/><path d="M240.9 62.0L244.7 62.0" stroke="#c4c6c8" stroke-width="2" opacity=".8"/><path d="M237.0 76.6L240.3 78.5" stroke="#c4c6c8" stroke-width="2" opacity=".8"/><path d="M226.3 87.3L228.2 90.6" stroke="#c4c6c8" stroke-width="2" opacity=".8"/><circle cx="211.7" cy="62" r="26.6" fill="#101011"/><path d="M191.6 73.6A23.2 23.2 0 0 1 203.8 40.2" fill="none" stroke="#34363a" stroke-width="5" style="filter:blur(1px)"/><path d="M201.4 79.8L198.2 85.4" stroke="#eceeef" stroke-width="3" stroke-linecap="round"/><circle cx="211.7" cy="62" r="17.3" fill="#050505"/><clipPath id="c211_62"><circle cx="211.7" cy="62" r="15.8"/></clipPath><g clip-path="url(#c211_62)"><g style="filter:blur(1.5px)"><path d="M211.7 62.0L207.6 46.7A15.8 15.8 0 0 1 216.1 46.8Z" fill="#fafafa"/><path d="M211.7 62.0L215.8 46.7A15.8 15.8 0 0 1 223.1 51.0Z" fill="#9c9ea1"/><path d="M211.7 62.0L222.9 50.8A15.8 15.8 0 0 1 227.0 58.2Z" fill="#ececed"/><path d="M211.7 62.0L227.0 57.9A15.8 15.8 0 0 1 226.9 66.4Z" fill="#6e7073"/><path d="M211.7 62.0L227.0 66.1A15.8 15.8 0 0 1 222.7 73.4Z" fill="#dedfe1"/><path d="M211.7 62.0L222.9 73.2A15.8 15.8 0 0 1 215.5 77.3Z" fill="#8a8c8f"/><path d="M211.7 62.0L215.8 77.3A15.8 15.8 0 0 1 207.3 77.2Z" fill="#f6f6f7"/><path d="M211.7 62.0L207.6 77.3A15.8 15.8 0 0 1 200.3 73.0Z" fill="#7c7e81"/><path d="M211.7 62.0L200.5 73.2A15.8 15.8 0 0 1 196.4 65.8Z" fill="#e2e3e5"/><path d="M211.7 62.0L196.4 66.1A15.8 15.8 0 0 1 196.5 57.6Z" fill="#66686b"/><path d="M211.7 62.0L196.4 57.9A15.8 15.8 0 0 1 200.7 50.6Z" fill="#eeeeef"/><path d="M211.7 62.0L200.5 50.8A15.8 15.8 0 0 1 207.9 46.7Z" fill="#a2a4a7"/></g><circle cx="211.7" cy="62" r="15.4" fill="none" stroke="#e4e5e7" stroke-width="1.1" opacity=".7"/></g><circle cx="302.4" cy="79" r="24" fill="#0a0a0a" opacity=".8" style="filter:blur(3px)"/><path d="M278.8 87.3L276.9 90.6" stroke="#c4c6c8" stroke-width="2" opacity=".8"/><path d="M268.1 76.6L264.8 78.5" stroke="#c4c6c8" stroke-width="2" opacity=".8"/><path d="M264.2 62.0L260.4 62.0" stroke="#c4c6c8" stroke-width="2" opacity=".8"/><path d="M268.1 47.4L264.8 45.5" stroke="#c4c6c8" stroke-width="2" opacity=".8"/><path d="M278.8 36.7L276.9 33.4" stroke="#c4c6c8" stroke-width="2" opacity=".8"/><path d="M293.4 32.8L293.4 29.0" stroke="#c4c6c8" stroke-width="2" opacity=".8"/><path d="M308.0 36.7L309.9 33.4" stroke="#c4c6c8" stroke-width="2" opacity=".8"/><path d="M318.7 47.4L322.0 45.5" stroke="#c4c6c8" stroke-width="2" opacity=".8"/><path d="M322.6 62.0L326.4 62.0" stroke="#c4c6c8" stroke-width="2" opacity=".8"/><path d="M318.7 76.6L322.0 78.5" stroke="#c4c6c8" stroke-width="2" opacity=".8"/><path d="M308.0 87.3L309.9 90.6" stroke="#c4c6c8" stroke-width="2" opacity=".8"/><circle cx="293.4" cy="62" r="26.6" fill="#101011"/><path d="M273.3 73.6A23.2 23.2 0 0 1 285.5 40.2" fill="none" stroke="#34363a" stroke-width="5" style="filter:blur(1px)"/><path d="M294.5 41.5L294.8 35.0" stroke="#eceeef" stroke-width="3" stroke-linecap="round"/><circle cx="293.4" cy="62" r="17.3" fill="#050505"/><clipPath id="c293_62"><circle cx="293.4" cy="62" r="15.8"/></clipPath><g clip-path="url(#c293_62)"><g style="filter:blur(1.5px)"><path d="M293.4 62.0L289.3 46.7A15.8 15.8 0 0 1 297.8 46.8Z" fill="#fafafa"/><path d="M293.4 62.0L297.5 46.7A15.8 15.8 0 0 1 304.8 51.0Z" fill="#9c9ea1"/><path d="M293.4 62.0L304.6 50.8A15.8 15.8 0 0 1 308.7 58.2Z" fill="#ececed"/><path d="M293.4 62.0L308.7 57.9A15.8 15.8 0 0 1 308.6 66.4Z" fill="#6e7073"/><path d="M293.4 62.0L308.7 66.1A15.8 15.8 0 0 1 304.4 73.4Z" fill="#dedfe1"/><path d="M293.4 62.0L304.6 73.2A15.8 15.8 0 0 1 297.2 77.3Z" fill="#8a8c8f"/><path d="M293.4 62.0L297.5 77.3A15.8 15.8 0 0 1 289.0 77.2Z" fill="#f6f6f7"/><path d="M293.4 62.0L289.3 77.3A15.8 15.8 0 0 1 282.0 73.0Z" fill="#7c7e81"/><path d="M293.4 62.0L282.2 73.2A15.8 15.8 0 0 1 278.1 65.8Z" fill="#e2e3e5"/><path d="M293.4 62.0L278.1 66.1A15.8 15.8 0 0 1 278.2 57.6Z" fill="#66686b"/><path d="M293.4 62.0L278.1 57.9A15.8 15.8 0 0 1 282.4 50.6Z" fill="#eeeeef"/><path d="M293.4 62.0L282.2 50.8A15.8 15.8 0 0 1 289.6 46.7Z" fill="#a2a4a7"/></g><circle cx="293.4" cy="62" r="15.4" fill="none" stroke="#e4e5e7" stroke-width="1.1" opacity=".7"/></g><circle cx="383.7" cy="79" r="24" fill="#0a0a0a" opacity=".8" style="filter:blur(3px)"/><path d="M360.1 87.3L358.2 90.6" stroke="#c4c6c8" stroke-width="2" opacity=".8"/><path d="M349.4 76.6L346.1 78.5" stroke="#c4c6c8" stroke-width="2" opacity=".8"/><path d="M345.5 62.0L341.7 62.0" stroke="#c4c6c8" stroke-width="2" opacity=".8"/><path d="M349.4 47.4L346.1 45.5" stroke="#c4c6c8" stroke-width="2" opacity=".8"/><path d="M360.1 36.7L358.2 33.4" stroke="#c4c6c8" stroke-width="2" opacity=".8"/><path d="M374.7 32.8L374.7 29.0" stroke="#c4c6c8" stroke-width="2" opacity=".8"/><path d="M389.3 36.7L391.2 33.4" stroke="#c4c6c8" stroke-width="2" opacity=".8"/><path d="M400.0 47.4L403.3 45.5" stroke="#c4c6c8" stroke-width="2" opacity=".8"/><path d="M403.9 62.0L407.7 62.0" stroke="#c4c6c8" stroke-width="2" opacity=".8"/><path d="M400.0 76.6L403.3 78.5" stroke="#c4c6c8" stroke-width="2" opacity=".8"/><path d="M389.3 87.3L391.2 90.6" stroke="#c4c6c8" stroke-width="2" opacity=".8"/><circle cx="374.7" cy="62" r="26.6" fill="#101011"/><path d="M354.6 73.6A23.2 23.2 0 0 1 366.8 40.2" fill="none" stroke="#34363a" stroke-width="5" style="filter:blur(1px)"/><path d="M364.4 79.8L361.2 85.4" stroke="#eceeef" stroke-width="3" stroke-linecap="round"/><circle cx="374.7" cy="62" r="17.3" fill="#050505"/><clipPath id="c374_62"><circle cx="374.7" cy="62" r="15.8"/></clipPath><g clip-path="url(#c374_62)"><g style="filter:blur(1.5px)"><path d="M374.7 62.0L370.6 46.7A15.8 15.8 0 0 1 379.1 46.8Z" fill="#fafafa"/><path d="M374.7 62.0L378.8 46.7A15.8 15.8 0 0 1 386.1 51.0Z" fill="#9c9ea1"/><path d="M374.7 62.0L385.9 50.8A15.8 15.8 0 0 1 390.0 58.2Z" fill="#ececed"/><path d="M374.7 62.0L390.0 57.9A15.8 15.8 0 0 1 389.9 66.4Z" fill="#6e7073"/><path d="M374.7 62.0L390.0 66.1A15.8 15.8 0 0 1 385.7 73.4Z" fill="#dedfe1"/><path d="M374.7 62.0L385.9 73.2A15.8 15.8 0 0 1 378.5 77.3Z" fill="#8a8c8f"/><path d="M374.7 62.0L378.8 77.3A15.8 15.8 0 0 1 370.3 77.2Z" fill="#f6f6f7"/><path d="M374.7 62.0L370.6 77.3A15.8 15.8 0 0 1 363.3 73.0Z" fill="#7c7e81"/><path d="M374.7 62.0L363.5 73.2A15.8 15.8 0 0 1 359.4 65.8Z" fill="#e2e3e5"/><path d="M374.7 62.0L359.4 66.1A15.8 15.8 0 0 1 359.5 57.6Z" fill="#66686b"/><path d="M374.7 62.0L359.4 57.9A15.8 15.8 0 0 1 363.7 50.6Z" fill="#eeeeef"/><path d="M374.7 62.0L363.5 50.8A15.8 15.8 0 0 1 370.9 46.7Z" fill="#a2a4a7"/></g><circle cx="374.7" cy="62" r="15.4" fill="none" stroke="#e4e5e7" stroke-width="1.1" opacity=".7"/></g><circle cx="465.8" cy="79" r="24" fill="#0a0a0a" opacity=".8" style="filter:blur(3px)"/><path d="M442.2 87.3L440.3 90.6" stroke="#c4c6c8" stroke-width="2" opacity=".8"/><path d="M431.5 76.6L428.2 78.5" stroke="#c4c6c8" stroke-width="2" opacity=".8"/><path d="M427.6 62.0L423.8 62.0" stroke="#c4c6c8" stroke-width="2" opacity=".8"/><path d="M431.5 47.4L428.2 45.5" stroke="#c4c6c8" stroke-width="2" opacity=".8"/><path d="M442.2 36.7L440.3 33.4" stroke="#c4c6c8" stroke-width="2" opacity=".8"/><path d="M456.8 32.8L456.8 29.0" stroke="#c4c6c8" stroke-width="2" opacity=".8"/><path d="M471.4 36.7L473.3 33.4" stroke="#c4c6c8" stroke-width="2" opacity=".8"/><path d="M482.1 47.4L485.4 45.5" stroke="#c4c6c8" stroke-width="2" opacity=".8"/><path d="M486.0 62.0L489.8 62.0" stroke="#c4c6c8" stroke-width="2" opacity=".8"/><path d="M482.1 76.6L485.4 78.5" stroke="#c4c6c8" stroke-width="2" opacity=".8"/><path d="M471.4 87.3L473.3 90.6" stroke="#c4c6c8" stroke-width="2" opacity=".8"/><circle cx="456.8" cy="62" r="26.6" fill="#101011"/><path d="M436.7 73.6A23.2 23.2 0 0 1 448.9 40.2" fill="none" stroke="#34363a" stroke-width="5" style="filter:blur(1px)"/><path d="M441.1 75.2L436.1 79.4" stroke="#eceeef" stroke-width="3" stroke-linecap="round"/><circle cx="456.8" cy="62" r="17.3" fill="#050505"/><clipPath id="c456_62"><circle cx="456.8" cy="62" r="15.8"/></clipPath><g clip-path="url(#c456_62)"><g style="filter:blur(1.5px)"><path d="M456.8 62.0L452.7 46.7A15.8 15.8 0 0 1 461.2 46.8Z" fill="#fafafa"/><path d="M456.8 62.0L460.9 46.7A15.8 15.8 0 0 1 468.2 51.0Z" fill="#9c9ea1"/><path d="M456.8 62.0L468.0 50.8A15.8 15.8 0 0 1 472.1 58.2Z" fill="#ececed"/><path d="M456.8 62.0L472.1 57.9A15.8 15.8 0 0 1 472.0 66.4Z" fill="#6e7073"/><path d="M456.8 62.0L472.1 66.1A15.8 15.8 0 0 1 467.8 73.4Z" fill="#dedfe1"/><path d="M456.8 62.0L468.0 73.2A15.8 15.8 0 0 1 460.6 77.3Z" fill="#8a8c8f"/><path d="M456.8 62.0L460.9 77.3A15.8 15.8 0 0 1 452.4 77.2Z" fill="#f6f6f7"/><path d="M456.8 62.0L452.7 77.3A15.8 15.8 0 0 1 445.4 73.0Z" fill="#7c7e81"/><path d="M456.8 62.0L445.6 73.2A15.8 15.8 0 0 1 441.5 65.8Z" fill="#e2e3e5"/><path d="M456.8 62.0L441.5 66.1A15.8 15.8 0 0 1 441.6 57.6Z" fill="#66686b"/><path d="M456.8 62.0L441.5 57.9A15.8 15.8 0 0 1 445.8 50.6Z" fill="#eeeeef"/><path d="M456.8 62.0L445.6 50.8A15.8 15.8 0 0 1 453.0 46.7Z" fill="#a2a4a7"/></g><circle cx="456.8" cy="62" r="15.4" fill="none" stroke="#e4e5e7" stroke-width="1.1" opacity=".7"/></g><circle cx="547.1" cy="79" r="24" fill="#0a0a0a" opacity=".8" style="filter:blur(3px)"/><path d="M523.5 87.3L521.6 90.6" stroke="#c4c6c8" stroke-width="2" opacity=".8"/><path d="M512.8 76.6L509.5 78.5" stroke="#c4c6c8" stroke-width="2" opacity=".8"/><path d="M508.9 62.0L505.1 62.0" stroke="#c4c6c8" stroke-width="2" opacity=".8"/><path d="M512.8 47.4L509.5 45.5" stroke="#c4c6c8" stroke-width="2" opacity=".8"/><path d="M523.5 36.7L521.6 33.4" stroke="#c4c6c8" stroke-width="2" opacity=".8"/><path d="M538.1 32.8L538.1 29.0" stroke="#c4c6c8" stroke-width="2" opacity=".8"/><path d="M552.7 36.7L554.6 33.4" stroke="#c4c6c8" stroke-width="2" opacity=".8"/><path d="M563.4 47.4L566.7 45.5" stroke="#c4c6c8" stroke-width="2" opacity=".8"/><path d="M567.3 62.0L571.1 62.0" stroke="#c4c6c8" stroke-width="2" opacity=".8"/><path d="M563.4 76.6L566.7 78.5" stroke="#c4c6c8" stroke-width="2" opacity=".8"/><path d="M552.7 87.3L554.6 90.6" stroke="#c4c6c8" stroke-width="2" opacity=".8"/><circle cx="538.1" cy="62" r="26.6" fill="#101011"/><path d="M518.0 73.6A23.2 23.2 0 0 1 530.2 40.2" fill="none" stroke="#34363a" stroke-width="5" style="filter:blur(1px)"/><path d="M527.9 79.8L524.6 85.4" stroke="#eceeef" stroke-width="3" stroke-linecap="round"/><circle cx="538.1" cy="62" r="17.3" fill="#050505"/><clipPath id="c538_62"><circle cx="538.1" cy="62" r="15.8"/></clipPath><g clip-path="url(#c538_62)"><g style="filter:blur(1.5px)"><path d="M538.1 62.0L534.0 46.7A15.8 15.8 0 0 1 542.5 46.8Z" fill="#fafafa"/><path d="M538.1 62.0L542.2 46.7A15.8 15.8 0 0 1 549.5 51.0Z" fill="#9c9ea1"/><path d="M538.1 62.0L549.3 50.8A15.8 15.8 0 0 1 553.4 58.2Z" fill="#ececed"/><path d="M538.1 62.0L553.4 57.9A15.8 15.8 0 0 1 553.3 66.4Z" fill="#6e7073"/><path d="M538.1 62.0L553.4 66.1A15.8 15.8 0 0 1 549.1 73.4Z" fill="#dedfe1"/><path d="M538.1 62.0L549.3 73.2A15.8 15.8 0 0 1 541.9 77.3Z" fill="#8a8c8f"/><path d="M538.1 62.0L542.2 77.3A15.8 15.8 0 0 1 533.7 77.2Z" fill="#f6f6f7"/><path d="M538.1 62.0L534.0 77.3A15.8 15.8 0 0 1 526.7 73.0Z" fill="#7c7e81"/><path d="M538.1 62.0L526.9 73.2A15.8 15.8 0 0 1 522.8 65.8Z" fill="#e2e3e5"/><path d="M538.1 62.0L522.8 66.1A15.8 15.8 0 0 1 522.9 57.6Z" fill="#66686b"/><path d="M538.1 62.0L522.8 57.9A15.8 15.8 0 0 1 527.1 50.6Z" fill="#eeeeef"/><path d="M538.1 62.0L526.9 50.8A15.8 15.8 0 0 1 534.3 46.7Z" fill="#a2a4a7"/></g><circle cx="538.1" cy="62" r="15.4" fill="none" stroke="#e4e5e7" stroke-width="1.1" opacity=".7"/></g><circle cx="629.7" cy="79" r="24" fill="#0a0a0a" opacity=".8" style="filter:blur(3px)"/><path d="M606.1 87.3L604.2 90.6" stroke="#c4c6c8" stroke-width="2" opacity=".8"/><path d="M595.4 76.6L592.1 78.5" stroke="#c4c6c8" stroke-width="2" opacity=".8"/><path d="M591.5 62.0L587.7 62.0" stroke="#c4c6c8" stroke-width="2" opacity=".8"/><path d="M595.4 47.4L592.1 45.5" stroke="#c4c6c8" stroke-width="2" opacity=".8"/><path d="M606.1 36.7L604.2 33.4" stroke="#c4c6c8" stroke-width="2" opacity=".8"/><path d="M620.7 32.8L620.7 29.0" stroke="#c4c6c8" stroke-width="2" opacity=".8"/><path d="M635.3 36.7L637.2 33.4" stroke="#c4c6c8" stroke-width="2" opacity=".8"/><path d="M646.0 47.4L649.3 45.5" stroke="#c4c6c8" stroke-width="2" opacity=".8"/><path d="M649.9 62.0L653.7 62.0" stroke="#c4c6c8" stroke-width="2" opacity=".8"/><path d="M646.0 76.6L649.3 78.5" stroke="#c4c6c8" stroke-width="2" opacity=".8"/><path d="M635.3 87.3L637.2 90.6" stroke="#c4c6c8" stroke-width="2" opacity=".8"/><circle cx="620.7" cy="62" r="26.6" fill="#101011"/><path d="M600.6 73.6A23.2 23.2 0 0 1 612.8 40.2" fill="none" stroke="#34363a" stroke-width="5" style="filter:blur(1px)"/><path d="M605.0 75.2L600.0 79.4" stroke="#eceeef" stroke-width="3" stroke-linecap="round"/><circle cx="620.7" cy="62" r="17.3" fill="#050505"/><clipPath id="c620_62"><circle cx="620.7" cy="62" r="15.8"/></clipPath><g clip-path="url(#c620_62)"><g style="filter:blur(1.5px)"><path d="M620.7 62.0L616.6 46.7A15.8 15.8 0 0 1 625.1 46.8Z" fill="#fafafa"/><path d="M620.7 62.0L624.8 46.7A15.8 15.8 0 0 1 632.1 51.0Z" fill="#9c9ea1"/><path d="M620.7 62.0L631.9 50.8A15.8 15.8 0 0 1 636.0 58.2Z" fill="#ececed"/><path d="M620.7 62.0L636.0 57.9A15.8 15.8 0 0 1 635.9 66.4Z" fill="#6e7073"/><path d="M620.7 62.0L636.0 66.1A15.8 15.8 0 0 1 631.7 73.4Z" fill="#dedfe1"/><path d="M620.7 62.0L631.9 73.2A15.8 15.8 0 0 1 624.5 77.3Z" fill="#8a8c8f"/><path d="M620.7 62.0L624.8 77.3A15.8 15.8 0 0 1 616.3 77.2Z" fill="#f6f6f7"/><path d="M620.7 62.0L616.6 77.3A15.8 15.8 0 0 1 609.3 73.0Z" fill="#7c7e81"/><path d="M620.7 62.0L609.5 73.2A15.8 15.8 0 0 1 605.4 65.8Z" fill="#e2e3e5"/><path d="M620.7 62.0L605.4 66.1A15.8 15.8 0 0 1 605.5 57.6Z" fill="#66686b"/><path d="M620.7 62.0L605.4 57.9A15.8 15.8 0 0 1 609.7 50.6Z" fill="#eeeeef"/><path d="M620.7 62.0L609.5 50.8A15.8 15.8 0 0 1 616.9 46.7Z" fill="#a2a4a7"/></g><circle cx="620.7" cy="62" r="15.4" fill="none" stroke="#e4e5e7" stroke-width="1.1" opacity=".7"/></g></svg>
<div style="left:2473px;top:772.8px;width:759px;height:293.2px;background:#2f3133;"></div>
<div style="left:2473px;top:772.8px;width:35.2px;height:293.2px;background:#34373a;border-right:1.5px solid #121315;"></div>
<div style="left:3196px;top:772.8px;width:36px;height:293.2px;background:#34373a;border-left:1.5px solid #121315;"></div>
<div style="left:2473px;top:1066px;width:759px;height:1.6px;background:#101113;"></div>
<div class="t" style="left:2473px;top:787.3px;width:30px;text-align:center;font-size:17.5px;line-height:21px;color:#eef0f2;font-weight:bold;">3</div>
<div style="left:2521px;top:786.1px;width:662.5px;height:181.8px;background:#141516;border-radius:13px;box-shadow:0 1px 0 rgba(255,255,255,.08), inset 0 0 0 1.5px rgba(0,0,0,.5);"></div>
<div style="left:2534.2px;top:797.9px;width:638px;height:159.7px;background:linear-gradient(#3b3d3f,#303234 60%,#2b2d2f);border-radius:4px;"></div>
<div style="left:2534.2px;top:797.9px;width:638px;height:57.7px;background:linear-gradient(#424446,#333537);border-radius:4px 4px 0 0;"></div>
<div style="left:2538.2px;top:854.9px;width:630px;height:1.5px;background:#222324;"></div>
<div style="left:2534.2px;top:856.4px;width:638px;height:22px;background:linear-gradient(rgba(255,255,255,.05),rgba(255,255,255,0));"></div>
<div style="left:2552.9px;top:811.1px;width:30.7px;height:29.7px;background:linear-gradient(#e4e5e7,#cfd1d4);border-radius:2px;"></div>
<svg style="left:2552.9px;top:811.1px;" width="30.7" height="29.7" viewBox="0 0 30.7 29.7"><circle cx="15.3" cy="16" r="8.2" fill="none" stroke="#1f2124" stroke-width="3.1"/><rect x="12.4" y="3.5" width="5.8" height="12" fill="#dadbde"/><rect x="13.7" y="4.8" width="3.2" height="10.6" fill="#1f2124"/></svg>
<svg style="left:2589px;top:812.1px;" width="28" height="28" viewBox="0 0 28 28"><g transform="rotate(-24 14 14)"><path d="M5.5 14H22A8.6 8.6 0 1 0 19.2 20.6" fill="none" stroke="#878f91" stroke-width="3.1" stroke-linecap="round"/></g></svg>
<svg style="left:2621px;top:813.1px;" width="30" height="26" viewBox="0 0 30 26"><path d="M8.5 2H21.5L28 13L21.5 24H8.5L2 13Z" fill="none" stroke="#8b958d" stroke-width="2.8" stroke-linejoin="round"/><path d="M15 5V21M8 9L22 17M22 9L8 17" stroke="#8b958d" stroke-width="2.8"/></svg>
<div class="t" style="left:2720.5px;top:807.3px;font-size:26.5px;line-height:31.8px;color:#e9ebed;font-weight:bold;">Groove Agent SE</div>
<svg style="left:3092px;top:816.8px;" width="24" height="19" viewBox="0 0 24 19"><path d="M0 9.5H12M8 4.5L13 9.5L8 14.5" fill="none" stroke="#878f91" stroke-width="2.4"/><path d="M11 1.5H20V17.5H11" fill="none" stroke="#878f91" stroke-width="2.4"/></svg>
<svg style="left:3132px;top:816.8px;" width="24" height="19" viewBox="0 0 24 19"><path d="M10 1.5H1.5V17.5H10" fill="none" stroke="#878f91" stroke-width="2.4"/><path d="M6 9.5H14" stroke="#878f91" stroke-width="2.6"/><path d="M13 3L21 9.5L13 16Z" fill="#878f91"/></svg>
<div class="t" style="left:2560px;top:875.3px;font-size:18.5px;line-height:22.2px;color:#8a9094;font-weight:bold;font-family:DejaVu Sans,Liberation Sans,sans-serif;">R</div>
<div class="t" style="left:2589px;top:875.3px;width:28px;text-align:center;font-size:18.5px;line-height:22.2px;color:#8a9094;font-weight:bold;font-family:DejaVu Sans,Liberation Sans,sans-serif;transform:scaleX(.72);">W</div>
<div class="t" style="left:2632.4px;top:883.3px;font-size:14.5px;line-height:17.4px;color:#eceef0;font-weight:bold;">Ch. 1</div>
<svg style="left:3099px;top:879.8px;" width="16" height="20" viewBox="0 0 16 20"><path d="M8 0.5L14.5 8H1.5ZM8 19.5L14.5 12H1.5Z" fill="#878f91"/></svg>
<svg style="left:3131px;top:877.8px;" width="24" height="22" viewBox="0 0 24 22"><path d="M11 1.5L21 9L12 19.5L2 11Z" fill="none" stroke="#878f91" stroke-width="1.8"/><path d="M2 11L11 1.5L12 8L7 15.5Z" fill="#878f91"/></svg>
<div class="t" style="left:2670.7px;top:928.8px;width:120px;text-align:center;font-size:14.3px;line-height:17.16px;color:#eceef0;font-weight:bold;">Mute</div>
<div class="t" style="left:2824.6px;top:910.3px;width:120px;text-align:center;font-size:14.3px;line-height:17.16px;color:#eceef0;font-weight:bold;">AUX</div>
<div class="t" style="left:2824.6px;top:928.8px;width:120px;text-align:center;font-size:14.3px;line-height:17.16px;color:#eceef0;font-weight:bold;">1 Return</div>
<div class="t" style="left:2902.8px;top:910.3px;width:120px;text-align:center;font-size:14.3px;line-height:17.16px;color:#eceef0;font-weight:bold;">AUX</div>
<div class="t" style="left:2902.8px;top:928.8px;width:120px;text-align:center;font-size:14.3px;line-height:17.16px;color:#eceef0;font-weight:bold;">2 Return</div>
<div class="t" style="left:2981.3px;top:910.3px;width:120px;text-align:center;font-size:14.3px;line-height:17.16px;color:#eceef0;font-weight:bold;">AUX</div>
<div class="t" style="left:2981.3px;top:928.8px;width:120px;text-align:center;font-size:14.3px;line-height:17.16px;color:#eceef0;font-weight:bold;">3 Return</div>
<div class="t" style="left:3059.4px;top:910.3px;width:120px;text-align:center;font-size:14.3px;line-height:17.16px;color:#eceef0;font-weight:bold;">AUX</div>
<div class="t" style="left:3059.4px;top:928.8px;width:120px;text-align:center;font-size:14.3px;line-height:17.16px;color:#eceef0;font-weight:bold;">4 Return</div>
<svg style="left:3202px;top:785.3px;" width="24" height="24" viewBox="0 0 24 24"><circle cx="12" cy="12" r="11.2" fill="#e4e6e8"/><path d="M3.5 14.5H20.5L12 5Z" fill="#1c1e21"/><path d="M1.2 15A11 11 0 0 0 22.8 15Z" fill="#e4e6e8"/><path d="M4 14.2H20L12 5.2Z" fill="#1c1e21"/></svg>
<svg style="left:3202px;top:1034.8px;" width="24" height="24" viewBox="0 0 24 24"><circle cx="12" cy="12" r="9.6" fill="none" stroke="#7d8a8c" stroke-width="2.2"/><path d="M12 12L18 6" stroke="#7d8a8c" stroke-width="2.2"/></svg>
<svg style="left:2520px;top:954.6px;" width="680" height="120" viewBox="0 0 680 120"><circle cx="57.3" cy="65" r="27" fill="url(#kshadow)" opacity=".8"/><circle cx="56.3" cy="60" r="24.6" fill="#0d0d0d"/><path d="M40.6 75.7A22.2 22.2 0 1 1 72.0 75.7" fill="none" stroke="#16150f" stroke-width="4.6"/><path d="M40.6 75.7A22.2 22.2 0 0 1 39.5 74.6" fill="none" stroke="#8a6a2c" stroke-width="4.6"/><circle cx="56.3" cy="60" r="18.6" fill="#060606"/><circle cx="56.3" cy="60" r="17" fill="url(#blk2)"/><path d="M51.3 64.2L44.8 69.6" stroke="#e4e6e8" stroke-width="2.8"/><circle cx="136.3" cy="65" r="27" fill="url(#kshadow)" opacity=".8"/><circle cx="135.3" cy="60" r="24.6" fill="#0d0d0d"/><path d="M119.6 75.7A22.2 22.2 0 1 1 151.0 75.7" fill="none" stroke="#16150f" stroke-width="4.6"/><path d="M119.6 75.7A22.2 22.2 0 0 1 118.5 74.6" fill="none" stroke="#8a6a2c" stroke-width="4.6"/><circle cx="135.3" cy="60" r="18.6" fill="#060606"/><circle cx="135.3" cy="60" r="17" fill="url(#blk2)"/><path d="M130.3 64.2L123.8 69.6" stroke="#e4e6e8" stroke-width="2.8"/><circle cx="214.4" cy="65" r="27" fill="url(#kshadow)" opacity=".8"/><circle cx="213.4" cy="60" r="24.6" fill="#0d0d0d"/><path d="M197.7 75.7A22.2 22.2 0 1 1 229.1 75.7" fill="none" stroke="#16150f" stroke-width="4.6"/><path d="M197.7 75.7A22.2 22.2 0 0 1 196.6 74.6" fill="none" stroke="#8a6a2c" stroke-width="4.6"/><circle cx="213.4" cy="60" r="18.6" fill="#060606"/><circle cx="213.4" cy="60" r="17" fill="url(#blk2)"/><path d="M208.4 64.2L201.9 69.6" stroke="#e4e6e8" stroke-width="2.8"/><circle cx="295.2" cy="65" r="27" fill="url(#kshadow)" opacity=".8"/><circle cx="294.2" cy="60" r="24.6" fill="#0d0d0d"/><path d="M278.5 75.7A22.2 22.2 0 1 1 309.9 75.7" fill="none" stroke="#16150f" stroke-width="4.6"/><path d="M278.5 75.7A22.2 22.2 0 0 1 277.4 74.6" fill="none" stroke="#8a6a2c" stroke-width="4.6"/><circle cx="294.2" cy="60" r="18.6" fill="#060606"/><circle cx="294.2" cy="60" r="17" fill="url(#blk2)"/><path d="M289.2 64.2L282.7 69.6" stroke="#e4e6e8" stroke-width="2.8"/><circle cx="374.7" cy="65" r="27" fill="url(#kshadow)" opacity=".8"/><circle cx="373.7" cy="60" r="24.6" fill="#0d0d0d"/><path d="M358.0 75.7A22.2 22.2 0 1 1 389.4 75.7" fill="none" stroke="#211f14" stroke-width="4.6"/><path d="M358.0 75.7A22.2 22.2 0 0 1 374.5 37.8" fill="none" stroke="#bb943c" stroke-width="4.6"/><circle cx="373.7" cy="60" r="18.6" fill="#060606"/><circle cx="373.7" cy="60" r="17" fill="url(#blk2)"/><path d="M374.4 53.5L375.3 45.1" stroke="#e4e6e8" stroke-width="2.8"/><circle cx="454.6" cy="65" r="27" fill="url(#kshadow)" opacity=".8"/><circle cx="453.6" cy="60" r="24.6" fill="#0d0d0d"/><path d="M437.9 75.7A22.2 22.2 0 1 1 469.3 75.7" fill="none" stroke="#211f14" stroke-width="4.6"/><path d="M437.9 75.7A22.2 22.2 0 0 1 454.4 37.8" fill="none" stroke="#bb943c" stroke-width="4.6"/><circle cx="453.6" cy="60" r="18.6" fill="#060606"/><circle cx="453.6" cy="60" r="17" fill="url(#blk2)"/><path d="M454.3 53.5L455.2 45.1" stroke="#e4e6e8" stroke-width="2.8"/><circle cx="534.5" cy="65" r="27" fill="url(#kshadow)" opacity=".8"/><circle cx="533.5" cy="60" r="24.6" fill="#0d0d0d"/><path d="M517.8 75.7A22.2 22.2 0 1 1 549.2 75.7" fill="none" stroke="#211f14" stroke-width="4.6"/><path d="M517.8 75.7A22.2 22.2 0 0 1 534.3 37.8" fill="none" stroke="#bb943c" stroke-width="4.6"/><circle cx="533.5" cy="60" r="18.6" fill="#060606"/><circle cx="533.5" cy="60" r="17" fill="url(#blk2)"/><path d="M534.2 53.5L535.1 45.1" stroke="#e4e6e8" stroke-width="2.8"/><circle cx="614.9" cy="65" r="27" fill="url(#kshadow)" opacity=".8"/><circle cx="613.9" cy="60" r="24.6" fill="#0d0d0d"/><path d="M598.2 75.7A22.2 22.2 0 1 1 629.6 75.7" fill="none" stroke="#211f14" stroke-width="4.6"/><path d="M598.2 75.7A22.2 22.2 0 0 1 614.7 37.8" fill="none" stroke="#bb943c" stroke-width="4.6"/><circle cx="613.9" cy="60" r="18.6" fill="#060606"/><circle cx="613.9" cy="60" r="17" fill="url(#blk2)"/><path d="M614.6 53.5L615.5 45.1" stroke="#e4e6e8" stroke-width="2.8"/></svg>
<div style="left:2471.5px;top:1067.5px;width:762px;height:38px;background:linear-gradient(#303946,#2b333f);border-bottom:1.5px solid #3a4350;"></div>
<svg style="left:2535px;top:1078px;" width="17" height="14" viewBox="0 0 17 14"><path d="M8.5 0.5L16.5 13.5H0.5Z" fill="#8a92a0"/></svg>
<div class="t" style="left:2560px;top:1073.5px;font-size:19.5px;line-height:23.4px;color:#8a92a0;font-weight:bold;letter-spacing:.4px;">Track Instruments</div>
<div class="t" style="left:2900px;top:1073.5px;width:240px;text-align:right;font-size:19.5px;line-height:23.4px;color:#8a92a0;font-weight:bold;letter-spacing:.25px;">Rack Instruments</div>
<svg style="left:3148px;top:1078px;" width="18" height="14" viewBox="0 0 18 14"><path d="M9 13.5L17.5 0.5H0.5Z" fill="#9aa2b0"/></svg>
<div style="left:2473px;top:1108.9px;width:759px;height:295px;background:linear-gradient(#2a2e31 0%,#2c3033 72%,#35393c 86%,#33373a 100%);"></div>
<div style="left:2473px;top:1108.9px;width:35.2px;height:295px;background:#373b3f;border-right:1.5px solid #121315;"></div>
<div style="left:3196px;top:1108.9px;width:36px;height:295px;background:#373b3f;border-left:1.5px solid #121315;"></div>
<div style="left:2473px;top:1403.9px;width:759px;height:1.6px;background:#101113;"></div>
<div class="t" style="left:2473px;top:1123.4px;width:30px;text-align:center;font-size:17.5px;line-height:21px;color:#eef0f2;font-weight:bold;">4</div>
<div style="left:2521px;top:1122.2px;width:662.5px;height:218px;background:linear-gradient(#2a2d30,#383c40);border-radius:13px;box-shadow:0 1px 0 rgba(255,255,255,.08), inset 0 0 0 1.5px rgba(0,0,0,.5);"></div>
<div style="left:2534.2px;top:1134px;width:638px;height:197px;background:linear-gradient(#1d1f21,#17181a);border-radius:4px;"></div>
<div style="left:2534.2px;top:1134px;width:638px;height:57.7px;background:linear-gradient(#2b2d2f,#202224);border-radius:4px 4px 0 0;"></div>
<div style="left:2538.2px;top:1191px;width:630px;height:1.5px;background:#5e452c;"></div>
<div style="left:2534.2px;top:1192.5px;width:638px;height:22px;background:linear-gradient(rgba(255,255,255,.05),rgba(255,255,255,0));"></div>
<div style="left:2552.9px;top:1147.2px;width:30.7px;height:29.7px;background:linear-gradient(#e4e5e7,#cfd1d4);border-radius:2px;"></div>
<svg style="left:2552.9px;top:1147.2px;" width="30.7" height="29.7" viewBox="0 0 30.7 29.7"><circle cx="15.3" cy="16" r="8.2" fill="none" stroke="#1f2124" stroke-width="3.1"/><rect x="12.4" y="3.5" width="5.8" height="12" fill="#dadbde"/><rect x="13.7" y="4.8" width="3.2" height="10.6" fill="#1f2124"/></svg>
<svg style="left:2589px;top:1148.2px;" width="28" height="28" viewBox="0 0 28 28"><g transform="rotate(-24 14 14)"><path d="M5.5 14H22A8.6 8.6 0 1 0 19.2 20.6" fill="none" stroke="#878f91" stroke-width="3.1" stroke-linecap="round"/></g></svg>
<svg style="left:2621px;top:1149.2px;" width="30" height="26" viewBox="0 0 30 26"><path d="M8.5 2H21.5L28 13L21.5 24H8.5L2 13Z" fill="none" stroke="#8b958d" stroke-width="2.8" stroke-linejoin="round"/><path d="M15 5V21M8 9L22 17M22 9L8 17" stroke="#8b958d" stroke-width="2.8"/></svg>
<div class="t" style="left:2720.5px;top:1143.4px;font-size:26.5px;line-height:31.8px;color:#e9ebed;font-weight:bold;">HALion Sonic SE</div>
<svg style="left:3092px;top:1152.9px;" width="24" height="19" viewBox="0 0 24 19"><path d="M0 9.5H12M8 4.5L13 9.5L8 14.5" fill="none" stroke="#878f91" stroke-width="2.4"/><path d="M11 1.5H20V17.5H11" fill="none" stroke="#878f91" stroke-width="2.4"/></svg>
<svg style="left:3132px;top:1152.9px;" width="24" height="19" viewBox="0 0 24 19"><path d="M10 1.5H1.5V17.5H10" fill="none" stroke="#878f91" stroke-width="2.4"/><path d="M6 9.5H14" stroke="#878f91" stroke-width="2.6"/><path d="M13 3L21 9.5L13 16Z" fill="#878f91"/></svg>
<div class="t" style="left:2560px;top:1211.4px;font-size:18.5px;line-height:22.2px;color:#8a9094;font-weight:bold;font-family:DejaVu Sans,Liberation Sans,sans-serif;">R</div>
<div class="t" style="left:2589px;top:1211.4px;width:28px;text-align:center;font-size:18.5px;line-height:22.2px;color:#8a9094;font-weight:bold;font-family:DejaVu Sans,Liberation Sans,sans-serif;transform:scaleX(.72);">W</div>
<div class="t" style="left:2632.4px;top:1219.4px;font-size:14.5px;line-height:17.4px;color:#eceef0;font-weight:bold;">Ch. 1</div>
<div class="t" style="left:2721.4px;top:1212.4px;font-size:18px;line-height:21.6px;color:#dfe3e8;font-weight:bold;">SR 100 BPM Loop</div>
<svg style="left:3099px;top:1215.9px;" width="16" height="20" viewBox="0 0 16 20"><path d="M8 0.5L14.5 8H1.5ZM8 19.5L14.5 12H1.5Z" fill="#878f91"/></svg>
<svg style="left:3131px;top:1213.9px;" width="24" height="22" viewBox="0 0 24 22"><path d="M11 1.5L21 9L12 19.5L2 11Z" fill="none" stroke="#878f91" stroke-width="1.8"/><path d="M2 11L11 1.5L12 8L7 15.5Z" fill="#878f91"/></svg>
<div class="t" style="left:2506.4px;top:1251.9px;width:120px;text-align:center;font-size:14.3px;line-height:17.16px;color:#ea9a2c;font-weight:bold;">QC1 Pan</div>
<div class="t" style="left:2506.4px;top:1270.4px;width:120px;text-align:center;font-size:14.3px;line-height:17.16px;color:#ea9a2c;font-weight:bold;">Random</div>
<div class="t" style="left:2586.3px;top:1251.9px;width:120px;text-align:center;font-size:14.3px;line-height:17.16px;color:#ea9a2c;font-weight:bold;">S1 QC2</div>
<div class="t" style="left:2586.3px;top:1270.4px;width:120px;text-align:center;font-size:14.3px;line-height:17.16px;color:#ea9a2c;font-weight:bold;">Brilliance</div>
<div class="t" style="left:2666.6px;top:1251.9px;width:120px;text-align:center;font-size:14.3px;line-height:17.16px;color:#ea9a2c;font-weight:bold;">QC3 Mid</div>
<div class="t" style="left:2666.6px;top:1270.4px;width:120px;text-align:center;font-size:14.3px;line-height:17.16px;color:#ea9a2c;font-weight:bold;">Freq Eq</div>
<div class="t" style="left:2747px;top:1251.9px;width:120px;text-align:center;font-size:14.3px;line-height:17.16px;color:#ea9a2c;font-weight:bold;">S1 QC4</div>
<div class="t" style="left:2747px;top:1270.4px;width:120px;text-align:center;font-size:14.3px;line-height:17.16px;color:#ea9a2c;font-weight:bold;">Delay Mix</div>
<div class="t" style="left:2826.9px;top:1251.9px;width:120px;text-align:center;font-size:14.3px;line-height:17.16px;color:#ea9a2c;font-weight:bold;">QC5 Hall</div>
<div class="t" style="left:2826.9px;top:1270.4px;width:120px;text-align:center;font-size:14.3px;line-height:17.16px;color:#ea9a2c;font-weight:bold;">Predelay</div>
<div class="t" style="left:2906.8px;top:1251.9px;width:120px;text-align:center;font-size:14.3px;line-height:17.16px;color:#ea9a2c;font-weight:bold;">QC6 Hall</div>
<div class="t" style="left:2906.8px;top:1270.4px;width:120px;text-align:center;font-size:14.3px;line-height:17.16px;color:#ea9a2c;font-weight:bold;">Room Size</div>
<div class="t" style="left:2986.7px;top:1251.9px;width:120px;text-align:center;font-size:14.3px;line-height:17.16px;color:#ea9a2c;font-weight:bold;">QC7 Hall</div>
<div class="t" style="left:2986.7px;top:1270.4px;width:120px;text-align:center;font-size:14.3px;line-height:17.16px;color:#ea9a2c;font-weight:bold;">Main Time</div>
<div class="t" style="left:3067.5px;top:1251.9px;width:120px;text-align:center;font-size:14.3px;line-height:17.16px;color:#ea9a2c;font-weight:bold;">S1 QC8</div>
<div class="t" style="left:3067.5px;top:1270.4px;width:120px;text-align:center;font-size:14.3px;line-height:17.16px;color:#ea9a2c;font-weight:bold;">Hall Mix</div>
<svg style="left:3202px;top:1121.4px;" width="24" height="24" viewBox="0 0 24 24"><circle cx="12" cy="12" r="11.2" fill="#e4e6e8"/><path d="M3.5 14.5H20.5L12 5Z" fill="#1c1e21"/><path d="M1.2 15A11 11 0 0 0 22.8 15Z" fill="#e4e6e8"/><path d="M4 14.2H20L12 5.2Z" fill="#1c1e21"/></svg>
<svg style="left:3202px;top:1370.9px;" width="24" height="24" viewBox="0 0 24 24"><circle cx="12" cy="12" r="9.6" fill="none" stroke="#e09a20" stroke-width="2.2"/><path d="M12 12L18 6" stroke="#e09a20" stroke-width="2.2"/></svg>
<svg style="left:2520px;top:1275.4px;" width="680" height="120" viewBox="0 0 680 120"><ellipse cx="47.3" cy="67" rx="35" ry="29" fill="#24282b" opacity=".9"/><circle cx="47.3" cy="61.5" r="28" fill="#0a0b0c"/><circle cx="31.5" cy="78.8" r="1.05" fill="#d8a050" opacity="1"/><circle cx="28.6" cy="76.0" r="1.05" fill="#d8a050" opacity="1"/><circle cx="26.3" cy="72.8" r="1.05" fill="#6a4a1c" opacity="0.8"/><circle cx="24.5" cy="69.2" r="1.05" fill="#6a4a1c" opacity="0.8"/><circle cx="23.3" cy="65.4" r="1.05" fill="#6a4a1c" opacity="0.8"/><circle cx="22.7" cy="61.4" r="1.05" fill="#6a4a1c" opacity="0.8"/><circle cx="22.8" cy="57.4" r="1.05" fill="#6a4a1c" opacity="0.8"/><circle cx="23.6" cy="53.5" r="1.05" fill="#6a4a1c" opacity="0.8"/><circle cx="24.9" cy="49.7" r="1.05" fill="#6a4a1c" opacity="0.8"/><circle cx="26.9" cy="46.3" r="1.05" fill="#6a4a1c" opacity="0.8"/><circle cx="29.4" cy="43.1" r="1.05" fill="#6a4a1c" opacity="0.8"/><circle cx="32.4" cy="40.4" r="1.05" fill="#6a4a1c" opacity="0.8"/><circle cx="35.7" cy="38.3" r="1.05" fill="#6a4a1c" opacity="0.8"/><circle cx="39.4" cy="36.7" r="1.05" fill="#6a4a1c" opacity="0.8"/><circle cx="43.3" cy="35.7" r="1.05" fill="#6a4a1c" opacity="0.8"/><circle cx="47.3" cy="35.4" r="1.05" fill="#6a4a1c" opacity="0.8"/><circle cx="51.3" cy="35.7" r="1.05" fill="#6a4a1c" opacity="0.8"/><circle cx="55.2" cy="36.7" r="1.05" fill="#6a4a1c" opacity="0.8"/><circle cx="58.8" cy="38.3" r="1.05" fill="#6a4a1c" opacity="0.8"/><circle cx="62.2" cy="40.4" r="1.05" fill="#6a4a1c" opacity="0.8"/><circle cx="65.2" cy="43.1" r="1.05" fill="#6a4a1c" opacity="0.8"/><circle cx="67.7" cy="46.2" r="1.05" fill="#6a4a1c" opacity="0.8"/><circle cx="69.6" cy="49.7" r="1.05" fill="#6a4a1c" opacity="0.8"/><circle cx="71.0" cy="53.5" r="1.05" fill="#6a4a1c" opacity="0.8"/><circle cx="71.8" cy="57.4" r="1.05" fill="#6a4a1c" opacity="0.8"/><circle cx="71.9" cy="61.4" r="1.05" fill="#6a4a1c" opacity="0.8"/><circle cx="71.3" cy="65.4" r="1.05" fill="#6a4a1c" opacity="0.8"/><circle cx="70.1" cy="69.2" r="1.05" fill="#6a4a1c" opacity="0.8"/><circle cx="68.3" cy="72.8" r="1.05" fill="#6a4a1c" opacity="0.8"/><circle cx="66.0" cy="76.0" r="1.05" fill="#6a4a1c" opacity="0.8"/><circle cx="63.1" cy="78.8" r="1.05" fill="#6a4a1c" opacity="0.8"/><circle cx="47.3" cy="60" r="20.5" fill="url(#blk2)"/><circle cx="47.3" cy="58" r="12" fill="#404245" opacity=".55" style="filter:blur(4px)"/><path d="M39.6 66.4L33.1 71.9" stroke="#c8cacc" stroke-width="2.6" stroke-linecap="round"/><ellipse cx="127.2" cy="67" rx="35" ry="29" fill="#24282b" opacity=".9"/><circle cx="127.2" cy="61.5" r="28" fill="#0a0b0c"/><circle cx="111.4" cy="78.8" r="1.05" fill="#d8a050" opacity="1"/><circle cx="108.5" cy="76.0" r="1.05" fill="#d8a050" opacity="1"/><circle cx="106.2" cy="72.8" r="1.05" fill="#6a4a1c" opacity="0.8"/><circle cx="104.4" cy="69.2" r="1.05" fill="#6a4a1c" opacity="0.8"/><circle cx="103.2" cy="65.4" r="1.05" fill="#6a4a1c" opacity="0.8"/><circle cx="102.6" cy="61.4" r="1.05" fill="#6a4a1c" opacity="0.8"/><circle cx="102.7" cy="57.4" r="1.05" fill="#6a4a1c" opacity="0.8"/><circle cx="103.5" cy="53.5" r="1.05" fill="#6a4a1c" opacity="0.8"/><circle cx="104.8" cy="49.7" r="1.05" fill="#6a4a1c" opacity="0.8"/><circle cx="106.8" cy="46.3" r="1.05" fill="#6a4a1c" opacity="0.8"/><circle cx="109.3" cy="43.1" r="1.05" fill="#6a4a1c" opacity="0.8"/><circle cx="112.3" cy="40.4" r="1.05" fill="#6a4a1c" opacity="0.8"/><circle cx="115.6" cy="38.3" r="1.05" fill="#6a4a1c" opacity="0.8"/><circle cx="119.3" cy="36.7" r="1.05" fill="#6a4a1c" opacity="0.8"/><circle cx="123.2" cy="35.7" r="1.05" fill="#6a4a1c" opacity="0.8"/><circle cx="127.2" cy="35.4" r="1.05" fill="#6a4a1c" opacity="0.8"/><circle cx="131.2" cy="35.7" r="1.05" fill="#6a4a1c" opacity="0.8"/><circle cx="135.1" cy="36.7" r="1.05" fill="#6a4a1c" opacity="0.8"/><circle cx="138.7" cy="38.3" r="1.05" fill="#6a4a1c" opacity="0.8"/><circle cx="142.1" cy="40.4" r="1.05" fill="#6a4a1c" opacity="0.8"/><circle cx="145.1" cy="43.1" r="1.05" fill="#6a4a1c" opacity="0.8"/><circle cx="147.6" cy="46.2" r="1.05" fill="#6a4a1c" opacity="0.8"/><circle cx="149.5" cy="49.7" r="1.05" fill="#6a4a1c" opacity="0.8"/><circle cx="150.9" cy="53.5" r="1.05" fill="#6a4a1c" opacity="0.8"/><circle cx="151.7" cy="57.4" r="1.05" fill="#6a4a1c" opacity="0.8"/><circle cx="151.8" cy="61.4" r="1.05" fill="#6a4a1c" opacity="0.8"/><circle cx="151.2" cy="65.4" r="1.05" fill="#6a4a1c" opacity="0.8"/><circle cx="150.0" cy="69.2" r="1.05" fill="#6a4a1c" opacity="0.8"/><circle cx="148.2" cy="72.8" r="1.05" fill="#6a4a1c" opacity="0.8"/><circle cx="145.9" cy="76.0" r="1.05" fill="#6a4a1c" opacity="0.8"/><circle cx="143.0" cy="78.8" r="1.05" fill="#6a4a1c" opacity="0.8"/><circle cx="127.2" cy="60" r="20.5" fill="url(#blk2)"/><circle cx="127.2" cy="58" r="12" fill="#404245" opacity=".55" style="filter:blur(4px)"/><path d="M119.5 66.4L113.0 71.9" stroke="#c8cacc" stroke-width="2.6" stroke-linecap="round"/><ellipse cx="207.5" cy="67" rx="35" ry="29" fill="#24282b" opacity=".9"/><circle cx="207.5" cy="61.5" r="28" fill="#0a0b0c"/><circle cx="191.7" cy="78.8" r="1.05" fill="#d8a050" opacity="1"/><circle cx="188.8" cy="76.0" r="1.05" fill="#d8a050" opacity="1"/><circle cx="186.5" cy="72.8" r="1.05" fill="#d8a050" opacity="1"/><circle cx="184.7" cy="69.2" r="1.05" fill="#d8a050" opacity="1"/><circle cx="183.5" cy="65.4" r="1.05" fill="#d8a050" opacity="1"/><circle cx="182.9" cy="61.4" r="1.05" fill="#d8a050" opacity="1"/><circle cx="183.0" cy="57.4" r="1.05" fill="#d8a050" opacity="1"/><circle cx="183.8" cy="53.5" r="1.05" fill="#d8a050" opacity="1"/><circle cx="185.1" cy="49.7" r="1.05" fill="#d8a050" opacity="1"/><circle cx="187.1" cy="46.3" r="1.05" fill="#d8a050" opacity="1"/><circle cx="189.6" cy="43.1" r="1.05" fill="#d8a050" opacity="1"/><circle cx="192.6" cy="40.4" r="1.05" fill="#d8a050" opacity="1"/><circle cx="195.9" cy="38.3" r="1.05" fill="#d8a050" opacity="1"/><circle cx="199.6" cy="36.7" r="1.05" fill="#d8a050" opacity="1"/><circle cx="203.5" cy="35.7" r="1.05" fill="#d8a050" opacity="1"/><circle cx="207.5" cy="35.4" r="1.05" fill="#d8a050" opacity="1"/><circle cx="211.5" cy="35.7" r="1.05" fill="#6a4a1c" opacity="0.8"/><circle cx="215.4" cy="36.7" r="1.05" fill="#6a4a1c" opacity="0.8"/><circle cx="219.0" cy="38.3" r="1.05" fill="#6a4a1c" opacity="0.8"/><circle cx="222.4" cy="40.4" r="1.05" fill="#6a4a1c" opacity="0.8"/><circle cx="225.4" cy="43.1" r="1.05" fill="#6a4a1c" opacity="0.8"/><circle cx="227.9" cy="46.2" r="1.05" fill="#6a4a1c" opacity="0.8"/><circle cx="229.8" cy="49.7" r="1.05" fill="#6a4a1c" opacity="0.8"/><circle cx="231.2" cy="53.5" r="1.05" fill="#6a4a1c" opacity="0.8"/><circle cx="232.0" cy="57.4" r="1.05" fill="#6a4a1c" opacity="0.8"/><circle cx="232.1" cy="61.4" r="1.05" fill="#6a4a1c" opacity="0.8"/><circle cx="231.5" cy="65.4" r="1.05" fill="#6a4a1c" opacity="0.8"/><circle cx="230.3" cy="69.2" r="1.05" fill="#6a4a1c" opacity="0.8"/><circle cx="228.5" cy="72.8" r="1.05" fill="#6a4a1c" opacity="0.8"/><circle cx="226.2" cy="76.0" r="1.05" fill="#6a4a1c" opacity="0.8"/><circle cx="223.3" cy="78.8" r="1.05" fill="#6a4a1c" opacity="0.8"/><circle cx="207.5" cy="60" r="20.5" fill="url(#blk2)"/><circle cx="207.5" cy="58" r="12" fill="#404245" opacity=".55" style="filter:blur(4px)"/><path d="M207.5 50.0L207.5 41.5" stroke="#c8cacc" stroke-width="2.6" stroke-linecap="round"/><ellipse cx="287.4" cy="67" rx="35" ry="29" fill="#24282b" opacity=".9"/><circle cx="287.4" cy="61.5" r="28" fill="#0a0b0c"/><circle cx="271.6" cy="78.8" r="1.05" fill="#d8a050" opacity="1"/><circle cx="268.7" cy="76.0" r="1.05" fill="#d8a050" opacity="1"/><circle cx="266.4" cy="72.8" r="1.05" fill="#6a4a1c" opacity="0.8"/><circle cx="264.6" cy="69.2" r="1.05" fill="#6a4a1c" opacity="0.8"/><circle cx="263.4" cy="65.4" r="1.05" fill="#6a4a1c" opacity="0.8"/><circle cx="262.8" cy="61.4" r="1.05" fill="#6a4a1c" opacity="0.8"/><circle cx="262.9" cy="57.4" r="1.05" fill="#6a4a1c" opacity="0.8"/><circle cx="263.7" cy="53.5" r="1.05" fill="#6a4a1c" opacity="0.8"/><circle cx="265.0" cy="49.7" r="1.05" fill="#6a4a1c" opacity="0.8"/><circle cx="267.0" cy="46.3" r="1.05" fill="#6a4a1c" opacity="0.8"/><circle cx="269.5" cy="43.1" r="1.05" fill="#6a4a1c" opacity="0.8"/><circle cx="272.5" cy="40.4" r="1.05" fill="#6a4a1c" opacity="0.8"/><circle cx="275.8" cy="38.3" r="1.05" fill="#6a4a1c" opacity="0.8"/><circle cx="279.5" cy="36.7" r="1.05" fill="#6a4a1c" opacity="0.8"/><circle cx="283.4" cy="35.7" r="1.05" fill="#6a4a1c" opacity="0.8"/><circle cx="287.4" cy="35.4" r="1.05" fill="#6a4a1c" opacity="0.8"/><circle cx="291.4" cy="35.7" r="1.05" fill="#6a4a1c" opacity="0.8"/><circle cx="295.3" cy="36.7" r="1.05" fill="#6a4a1c" opacity="0.8"/><circle cx="298.9" cy="38.3" r="1.05" fill="#6a4a1c" opacity="0.8"/><circle cx="302.3" cy="40.4" r="1.05" fill="#6a4a1c" opacity="0.8"/><circle cx="305.3" cy="43.1" r="1.05" fill="#6a4a1c" opacity="0.8"/><circle cx="307.8" cy="46.2" r="1.05" fill="#6a4a1c" opacity="0.8"/><circle cx="309.7" cy="49.7" r="1.05" fill="#6a4a1c" opacity="0.8"/><circle cx="311.1" cy="53.5" r="1.05" fill="#6a4a1c" opacity="0.8"/><circle cx="311.9" cy="57.4" r="1.05" fill="#6a4a1c" opacity="0.8"/><circle cx="312.0" cy="61.4" r="1.05" fill="#6a4a1c" opacity="0.8"/><circle cx="311.4" cy="65.4" r="1.05" fill="#6a4a1c" opacity="0.8"/><circle cx="310.2" cy="69.2" r="1.05" fill="#6a4a1c" opacity="0.8"/><circle cx="308.4" cy="72.8" r="1.05" fill="#6a4a1c" opacity="0.8"/><circle cx="306.1" cy="76.0" r="1.05" fill="#6a4a1c" opacity="0.8"/><circle cx="303.2" cy="78.8" r="1.05" fill="#6a4a1c" opacity="0.8"/><circle cx="287.4" cy="60" r="20.5" fill="url(#blk2)"/><circle cx="287.4" cy="58" r="12" fill="#404245" opacity=".55" style="filter:blur(4px)"/><path d="M279.7 66.4L273.2 71.9" stroke="#c8cacc" stroke-width="2.6" stroke-linecap="round"/><ellipse cx="367.8" cy="67" rx="35" ry="29" fill="#24282b" opacity=".9"/><circle cx="367.8" cy="61.5" r="28" fill="#0a0b0c"/><circle cx="352.0" cy="78.8" r="1.05" fill="#d8a050" opacity="1"/><circle cx="349.1" cy="76.0" r="1.05" fill="#d8a050" opacity="1"/><circle cx="346.8" cy="72.8" r="1.05" fill="#6a4a1c" opacity="0.8"/><circle cx="345.0" cy="69.2" r="1.05" fill="#6a4a1c" opacity="0.8"/><circle cx="343.8" cy="65.4" r="1.05" fill="#6a4a1c" opacity="0.8"/><circle cx="343.2" cy="61.4" r="1.05" fill="#6a4a1c" opacity="0.8"/><circle cx="343.3" cy="57.4" r="1.05" fill="#6a4a1c" opacity="0.8"/><circle cx="344.1" cy="53.5" r="1.05" fill="#6a4a1c" opacity="0.8"/><circle cx="345.4" cy="49.7" r="1.05" fill="#6a4a1c" opacity="0.8"/><circle cx="347.4" cy="46.3" r="1.05" fill="#6a4a1c" opacity="0.8"/><circle cx="349.9" cy="43.1" r="1.05" fill="#6a4a1c" opacity="0.8"/><circle cx="352.9" cy="40.4" r="1.05" fill="#6a4a1c" opacity="0.8"/><circle cx="356.2" cy="38.3" r="1.05" fill="#6a4a1c" opacity="0.8"/><circle cx="359.9" cy="36.7" r="1.05" fill="#6a4a1c" opacity="0.8"/><circle cx="363.8" cy="35.7" r="1.05" fill="#6a4a1c" opacity="0.8"/><circle cx="367.8" cy="35.4" r="1.05" fill="#6a4a1c" opacity="0.8"/><circle cx="371.8" cy="35.7" r="1.05" fill="#6a4a1c" opacity="0.8"/><circle cx="375.7" cy="36.7" r="1.05" fill="#6a4a1c" opacity="0.8"/><circle cx="379.3" cy="38.3" r="1.05" fill="#6a4a1c" opacity="0.8"/><circle cx="382.7" cy="40.4" r="1.05" fill="#6a4a1c" opacity="0.8"/><circle cx="385.7" cy="43.1" r="1.05" fill="#6a4a1c" opacity="0.8"/><circle cx="388.2" cy="46.2" r="1.05" fill="#6a4a1c" opacity="0.8"/><circle cx="390.1" cy="49.7" r="1.05" fill="#6a4a1c" opacity="0.8"/><circle cx="391.5" cy="53.5" r="1.05" fill="#6a4a1c" opacity="0.8"/><circle cx="392.3" cy="57.4" r="1.05" fill="#6a4a1c" opacity="0.8"/><circle cx="392.4" cy="61.4" r="1.05" fill="#6a4a1c" opacity="0.8"/><circle cx="391.8" cy="65.4" r="1.05" fill="#6a4a1c" opacity="0.8"/><circle cx="390.6" cy="69.2" r="1.05" fill="#6a4a1c" opacity="0.8"/><circle cx="388.8" cy="72.8" r="1.05" fill="#6a4a1c" opacity="0.8"/><circle cx="386.5" cy="76.0" r="1.05" fill="#6a4a1c" opacity="0.8"/><circle cx="383.6" cy="78.8" r="1.05" fill="#6a4a1c" opacity="0.8"/><circle cx="367.8" cy="60" r="20.5" fill="url(#blk2)"/><circle cx="367.8" cy="58" r="12" fill="#404245" opacity=".55" style="filter:blur(4px)"/><path d="M360.1 66.4L353.6 71.9" stroke="#c8cacc" stroke-width="2.6" stroke-linecap="round"/><ellipse cx="449" cy="67" rx="35" ry="29" fill="#24282b" opacity=".9"/><circle cx="449" cy="61.5" r="28" fill="#0a0b0c"/><circle cx="433.2" cy="78.8" r="1.05" fill="#d8a050" opacity="1"/><circle cx="430.3" cy="76.0" r="1.05" fill="#d8a050" opacity="1"/><circle cx="428.0" cy="72.8" r="1.05" fill="#d8a050" opacity="1"/><circle cx="426.2" cy="69.2" r="1.05" fill="#d8a050" opacity="1"/><circle cx="425.0" cy="65.4" r="1.05" fill="#d8a050" opacity="1"/><circle cx="424.4" cy="61.4" r="1.05" fill="#d8a050" opacity="1"/><circle cx="424.5" cy="57.4" r="1.05" fill="#d8a050" opacity="1"/><circle cx="425.3" cy="53.5" r="1.05" fill="#d8a050" opacity="1"/><circle cx="426.6" cy="49.7" r="1.05" fill="#d8a050" opacity="1"/><circle cx="428.6" cy="46.3" r="1.05" fill="#d8a050" opacity="1"/><circle cx="431.1" cy="43.1" r="1.05" fill="#d8a050" opacity="1"/><circle cx="434.1" cy="40.4" r="1.05" fill="#d8a050" opacity="1"/><circle cx="437.4" cy="38.3" r="1.05" fill="#d8a050" opacity="1"/><circle cx="441.1" cy="36.7" r="1.05" fill="#d8a050" opacity="1"/><circle cx="445.0" cy="35.7" r="1.05" fill="#d8a050" opacity="1"/><circle cx="449.0" cy="35.4" r="1.05" fill="#d8a050" opacity="1"/><circle cx="453.0" cy="35.7" r="1.05" fill="#d8a050" opacity="1"/><circle cx="456.9" cy="36.7" r="1.05" fill="#d8a050" opacity="1"/><circle cx="460.5" cy="38.3" r="1.05" fill="#d8a050" opacity="1"/><circle cx="463.9" cy="40.4" r="1.05" fill="#d8a050" opacity="1"/><circle cx="466.9" cy="43.1" r="1.05" fill="#d8a050" opacity="1"/><circle cx="469.4" cy="46.2" r="1.05" fill="#d8a050" opacity="1"/><circle cx="471.3" cy="49.7" r="1.05" fill="#d8a050" opacity="1"/><circle cx="472.7" cy="53.5" r="1.05" fill="#d8a050" opacity="1"/><circle cx="473.5" cy="57.4" r="1.05" fill="#d8a050" opacity="1"/><circle cx="473.6" cy="61.4" r="1.05" fill="#d8a050" opacity="1"/><circle cx="473.0" cy="65.4" r="1.05" fill="#d8a050" opacity="1"/><circle cx="471.8" cy="69.2" r="1.05" fill="#d8a050" opacity="1"/><circle cx="470.0" cy="72.8" r="1.05" fill="#d8a050" opacity="1"/><circle cx="467.7" cy="76.0" r="1.05" fill="#6a4a1c" opacity="0.8"/><circle cx="464.8" cy="78.8" r="1.05" fill="#6a4a1c" opacity="0.8"/><circle cx="449" cy="60" r="20.5" fill="url(#blk2)"/><circle cx="449" cy="58" r="12" fill="#404245" opacity=".55" style="filter:blur(4px)"/><path d="M457.2 65.7L464.2 70.6" stroke="#c8cacc" stroke-width="2.6" stroke-linecap="round"/><ellipse cx="531.2" cy="67" rx="35" ry="29" fill="#24282b" opacity=".9"/><circle cx="531.2" cy="61.5" r="28" fill="#0a0b0c"/><circle cx="515.4" cy="78.8" r="1.05" fill="#d8a050" opacity="1"/><circle cx="512.5" cy="76.0" r="1.05" fill="#d8a050" opacity="1"/><circle cx="510.2" cy="72.8" r="1.05" fill="#d8a050" opacity="1"/><circle cx="508.4" cy="69.2" r="1.05" fill="#d8a050" opacity="1"/><circle cx="507.2" cy="65.4" r="1.05" fill="#d8a050" opacity="1"/><circle cx="506.6" cy="61.4" r="1.05" fill="#d8a050" opacity="1"/><circle cx="506.7" cy="57.4" r="1.05" fill="#d8a050" opacity="1"/><circle cx="507.5" cy="53.5" r="1.05" fill="#d8a050" opacity="1"/><circle cx="508.8" cy="49.7" r="1.05" fill="#d8a050" opacity="1"/><circle cx="510.8" cy="46.3" r="1.05" fill="#d8a050" opacity="1"/><circle cx="513.3" cy="43.1" r="1.05" fill="#d8a050" opacity="1"/><circle cx="516.3" cy="40.4" r="1.05" fill="#6a4a1c" opacity="0.8"/><circle cx="519.6" cy="38.3" r="1.05" fill="#6a4a1c" opacity="0.8"/><circle cx="523.3" cy="36.7" r="1.05" fill="#6a4a1c" opacity="0.8"/><circle cx="527.2" cy="35.7" r="1.05" fill="#6a4a1c" opacity="0.8"/><circle cx="531.2" cy="35.4" r="1.05" fill="#6a4a1c" opacity="0.8"/><circle cx="535.2" cy="35.7" r="1.05" fill="#6a4a1c" opacity="0.8"/><circle cx="539.1" cy="36.7" r="1.05" fill="#6a4a1c" opacity="0.8"/><circle cx="542.7" cy="38.3" r="1.05" fill="#6a4a1c" opacity="0.8"/><circle cx="546.1" cy="40.4" r="1.05" fill="#6a4a1c" opacity="0.8"/><circle cx="549.1" cy="43.1" r="1.05" fill="#6a4a1c" opacity="0.8"/><circle cx="551.6" cy="46.2" r="1.05" fill="#6a4a1c" opacity="0.8"/><circle cx="553.5" cy="49.7" r="1.05" fill="#6a4a1c" opacity="0.8"/><circle cx="554.9" cy="53.5" r="1.05" fill="#6a4a1c" opacity="0.8"/><circle cx="555.7" cy="57.4" r="1.05" fill="#6a4a1c" opacity="0.8"/><circle cx="555.8" cy="61.4" r="1.05" fill="#6a4a1c" opacity="0.8"/><circle cx="555.2" cy="65.4" r="1.05" fill="#6a4a1c" opacity="0.8"/><circle cx="554.0" cy="69.2" r="1.05" fill="#6a4a1c" opacity="0.8"/><circle cx="552.2" cy="72.8" r="1.05" fill="#6a4a1c" opacity="0.8"/><circle cx="549.9" cy="76.0" r="1.05" fill="#6a4a1c" opacity="0.8"/><circle cx="547.0" cy="78.8" r="1.05" fill="#6a4a1c" opacity="0.8"/><circle cx="531.2" cy="60" r="20.5" fill="url(#blk2)"/><circle cx="531.2" cy="58" r="12" fill="#404245" opacity=".55" style="filter:blur(4px)"/><path d="M524.8 52.3L519.3 45.8" stroke="#c8cacc" stroke-width="2.6" stroke-linecap="round"/><ellipse cx="613" cy="67" rx="35" ry="29" fill="#24282b" opacity=".9"/><circle cx="613" cy="61.5" r="28" fill="#0a0b0c"/><circle cx="597.2" cy="78.8" r="1.05" fill="#d8a050" opacity="1"/><circle cx="594.3" cy="76.0" r="1.05" fill="#d8a050" opacity="1"/><circle cx="592.0" cy="72.8" r="1.05" fill="#d8a050" opacity="1"/><circle cx="590.2" cy="69.2" r="1.05" fill="#6a4a1c" opacity="0.8"/><circle cx="589.0" cy="65.4" r="1.05" fill="#6a4a1c" opacity="0.8"/><circle cx="588.4" cy="61.4" r="1.05" fill="#6a4a1c" opacity="0.8"/><circle cx="588.5" cy="57.4" r="1.05" fill="#6a4a1c" opacity="0.8"/><circle cx="589.3" cy="53.5" r="1.05" fill="#6a4a1c" opacity="0.8"/><circle cx="590.6" cy="49.7" r="1.05" fill="#6a4a1c" opacity="0.8"/><circle cx="592.6" cy="46.3" r="1.05" fill="#6a4a1c" opacity="0.8"/><circle cx="595.1" cy="43.1" r="1.05" fill="#6a4a1c" opacity="0.8"/><circle cx="598.1" cy="40.4" r="1.05" fill="#6a4a1c" opacity="0.8"/><circle cx="601.4" cy="38.3" r="1.05" fill="#6a4a1c" opacity="0.8"/><circle cx="605.1" cy="36.7" r="1.05" fill="#6a4a1c" opacity="0.8"/><circle cx="609.0" cy="35.7" r="1.05" fill="#6a4a1c" opacity="0.8"/><circle cx="613.0" cy="35.4" r="1.05" fill="#6a4a1c" opacity="0.8"/><circle cx="617.0" cy="35.7" r="1.05" fill="#6a4a1c" opacity="0.8"/><circle cx="620.9" cy="36.7" r="1.05" fill="#6a4a1c" opacity="0.8"/><circle cx="624.5" cy="38.3" r="1.05" fill="#6a4a1c" opacity="0.8"/><circle cx="627.9" cy="40.4" r="1.05" fill="#6a4a1c" opacity="0.8"/><circle cx="630.9" cy="43.1" r="1.05" fill="#6a4a1c" opacity="0.8"/><circle cx="633.4" cy="46.2" r="1.05" fill="#6a4a1c" opacity="0.8"/><circle cx="635.3" cy="49.7" r="1.05" fill="#6a4a1c" opacity="0.8"/><circle cx="636.7" cy="53.5" r="1.05" fill="#6a4a1c" opacity="0.8"/><circle cx="637.5" cy="57.4" r="1.05" fill="#6a4a1c" opacity="0.8"/><circle cx="637.6" cy="61.4" r="1.05" fill="#6a4a1c" opacity="0.8"/><circle cx="637.0" cy="65.4" r="1.05" fill="#6a4a1c" opacity="0.8"/><circle cx="635.8" cy="69.2" r="1.05" fill="#6a4a1c" opacity="0.8"/><circle cx="634.0" cy="72.8" r="1.05" fill="#6a4a1c" opacity="0.8"/><circle cx="631.7" cy="76.0" r="1.05" fill="#6a4a1c" opacity="0.8"/><circle cx="628.8" cy="78.8" r="1.05" fill="#6a4a1c" opacity="0.8"/><circle cx="613" cy="60" r="20.5" fill="url(#blk2)"/><circle cx="613" cy="58" r="12" fill="#404245" opacity=".55" style="filter:blur(4px)"/><path d="M604.3 65.0L597.0 69.2" stroke="#c8cacc" stroke-width="2.6" stroke-linecap="round"/></svg>
<div style="left:2473px;top:1405.4px;width:759px;height:293.6px;background:#4f5152;"></div>
<div style="left:2473px;top:1405.4px;width:35.2px;height:293.6px;background:#595b5c;border-right:1.5px solid #121315;"></div>
<div style="left:3196px;top:1405.4px;width:36px;height:293.6px;background:#595b5c;border-left:1.5px solid #121315;"></div>
<div style="left:2473px;top:1699px;width:759px;height:1.6px;background:#101113;"></div>
<div class="t" style="left:2473px;top:1419.9px;width:30px;text-align:center;font-size:17.5px;line-height:21px;color:#eef0f2;font-weight:bold;">4</div>
<div style="left:2521px;top:1418.7px;width:662.5px;height:181.8px;background:#0d0b0b;border-radius:13px;box-shadow:0 1px 0 rgba(255,255,255,.08), inset 0 0 0 1.5px rgba(0,0,0,.5);"></div>
<div style="left:2534.2px;top:1430.5px;width:638px;height:159.7px;background:linear-gradient(#3b1719 0,#341416 13%,#2a0f11 15%,#2f1214 60%,#2c1012 100%);border-radius:4px;"></div>
<div style="left:2534.2px;top:1430.5px;width:638px;height:57.7px;background:linear-gradient(#50292b,#3d1c1e);border-radius:4px 4px 0 0;"></div>
<div style="left:2538.2px;top:1487.5px;width:630px;height:1.5px;background:#7a2c30;"></div>
<div style="left:2534.2px;top:1489px;width:638px;height:22px;background:linear-gradient(rgba(255,255,255,.05),rgba(255,255,255,0));"></div>
<div style="left:2552.9px;top:1443.7px;width:30.7px;height:29.7px;background:linear-gradient(#e4e5e7,#cfd1d4);border-radius:2px;"></div>
<svg style="left:2552.9px;top:1443.7px;" width="30.7" height="29.7" viewBox="0 0 30.7 29.7"><circle cx="15.3" cy="16" r="8.2" fill="none" stroke="#1f2124" stroke-width="3.1"/><rect x="12.4" y="3.5" width="5.8" height="12" fill="#dadbde"/><rect x="13.7" y="4.8" width="3.2" height="10.6" fill="#1f2124"/></svg>
<svg style="left:2589px;top:1444.7px;" width="28" height="28" viewBox="0 0 28 28"><g transform="rotate(-24 14 14)"><path d="M5.5 14H22A8.6 8.6 0 1 0 19.2 20.6" fill="none" stroke="#9a8a8a" stroke-width="3.1" stroke-linecap="round"/></g></svg>
<svg style="left:2621px;top:1445.7px;" width="30" height="26" viewBox="0 0 30 26"><path d="M8.5 2H21.5L28 13L21.5 24H8.5L2 13Z" fill="none" stroke="#a59c98" stroke-width="2.8" stroke-linejoin="round"/><path d="M15 5V21M8 9L22 17M22 9L8 17" stroke="#a59c98" stroke-width="2.8"/></svg>
<div class="t" style="left:2720.5px;top:1439.9px;font-size:26.5px;line-height:31.8px;color:#e9ebed;font-weight:bold;">Padshop</div>
<svg style="left:3092px;top:1449.4px;" width="24" height="19" viewBox="0 0 24 19"><path d="M0 9.5H12M8 4.5L13 9.5L8 14.5" fill="none" stroke="#9a8a8a" stroke-width="2.4"/><path d="M11 1.5H20V17.5H11" fill="none" stroke="#9a8a8a" stroke-width="2.4"/></svg>
<svg style="left:3132px;top:1449.4px;" width="24" height="19" viewBox="0 0 24 19"><path d="M10 1.5H1.5V17.5H10" fill="none" stroke="#5a4444" stroke-width="2.4"/><path d="M6 9.5H14" stroke="#5a4444" stroke-width="2.6"/><path d="M13 3L21 9.5L13 16Z" fill="#5a4444"/></svg>
<div class="t" style="left:2560px;top:1507.9px;font-size:18.5px;line-height:22.2px;color:#22c064;font-weight:bold;font-family:DejaVu Sans,Liberation Sans,sans-serif;">R</div>
<div class="t" style="left:2589px;top:1507.9px;width:28px;text-align:center;font-size:18.5px;line-height:22.2px;color:#8a9094;font-weight:bold;font-family:DejaVu Sans,Liberation Sans,sans-serif;transform:scaleX(.72);">W</div>
<div class="t" style="left:2632.4px;top:1515.9px;font-size:14.5px;line-height:17.4px;color:#eceef0;font-weight:bold;">Page 1</div>
<div class="t" style="left:2721.4px;top:1507.9px;font-size:19.5px;line-height:23.4px;color:#dfe3e8;font-weight:bold;">Attack Pad</div>
<svg style="left:3099px;top:1512.4px;" width="16" height="20" viewBox="0 0 16 20"><path d="M8 0.5L14.5 8H1.5ZM8 19.5L14.5 12H1.5Z" fill="#9a8a8a"/></svg>
<svg style="left:3131px;top:1510.4px;" width="24" height="22" viewBox="0 0 24 22"><path d="M11 1.5L21 9L12 19.5L2 11Z" fill="none" stroke="#9a8a8a" stroke-width="1.8"/><path d="M2 11L11 1.5L12 8L7 15.5Z" fill="#9a8a8a"/></svg>
<div class="t" style="left:2512.7px;top:1542.9px;width:120px;text-align:center;font-size:14.3px;line-height:17.16px;color:#f25c5c;font-weight:bold;">A Filter</div>
<div class="t" style="left:2512.7px;top:1561.4px;width:120px;text-align:center;font-size:14.3px;line-height:17.16px;color:#f25c5c;font-weight:bold;">Cutoff</div>
<div class="t" style="left:2591.2px;top:1542.9px;width:120px;text-align:center;font-size:14.3px;line-height:17.16px;color:#f25c5c;font-weight:bold;">A Filter</div>
<div class="t" style="left:2591.2px;top:1561.4px;width:120px;text-align:center;font-size:14.3px;line-height:17.16px;color:#f25c5c;font-weight:bold;">Resonance</div>
<div class="t" style="left:2670.7px;top:1542.9px;width:120px;text-align:center;font-size:14.3px;line-height:17.16px;color:#f25c5c;font-weight:bold;">A DCA</div>
<div class="t" style="left:2670.7px;top:1561.4px;width:120px;text-align:center;font-size:14.3px;line-height:17.16px;color:#f25c5c;font-weight:bold;">Attack</div>
<div class="t" style="left:2750.6px;top:1542.9px;width:120px;text-align:center;font-size:14.3px;line-height:17.16px;color:#f25c5c;font-weight:bold;">A DCA</div>
<div class="t" style="left:2750.6px;top:1561.4px;width:120px;text-align:center;font-size:14.3px;line-height:17.16px;color:#f25c5c;font-weight:bold;">Release</div>
<div class="t" style="left:2830.5px;top:1542.9px;width:120px;text-align:center;font-size:14.3px;line-height:17.16px;color:#f25c5c;font-weight:bold;">B Filter</div>
<div class="t" style="left:2830.5px;top:1561.4px;width:120px;text-align:center;font-size:14.3px;line-height:17.16px;color:#f25c5c;font-weight:bold;">Cutoff</div>
<div class="t" style="left:2910.4px;top:1542.9px;width:120px;text-align:center;font-size:14.3px;line-height:17.16px;color:#f25c5c;font-weight:bold;">B Filter</div>
<div class="t" style="left:2910.4px;top:1561.4px;width:120px;text-align:center;font-size:14.3px;line-height:17.16px;color:#f25c5c;font-weight:bold;">Resonance</div>
<div class="t" style="left:2989.9px;top:1542.9px;width:120px;text-align:center;font-size:14.3px;line-height:17.16px;color:#f25c5c;font-weight:bold;">B DCA</div>
<div class="t" style="left:2989.9px;top:1561.4px;width:120px;text-align:center;font-size:14.3px;line-height:17.16px;color:#f25c5c;font-weight:bold;">Attack</div>
<div class="t" style="left:3070.2px;top:1542.9px;width:120px;text-align:center;font-size:14.3px;line-height:17.16px;color:#f25c5c;font-weight:bold;">B DCA</div>
<div class="t" style="left:3070.2px;top:1561.4px;width:120px;text-align:center;font-size:14.3px;line-height:17.16px;color:#f25c5c;font-weight:bold;">Release</div>
<svg style="left:3202px;top:1417.9px;" width="24" height="24" viewBox="0 0 24 24"><circle cx="12" cy="12" r="11.2" fill="#e4e6e8"/><path d="M3.5 14.5H20.5L12 5Z" fill="#1c1e21"/><path d="M1.2 15A11 11 0 0 0 22.8 15Z" fill="#e4e6e8"/><path d="M4 14.2H20L12 5.2Z" fill="#1c1e21"/></svg>
<svg style="left:3202px;top:1667.4px;" width="24" height="24" viewBox="0 0 24 24"><circle cx="12" cy="12" r="9.6" fill="none" stroke="#7d8a8c" stroke-width="2.2"/><path d="M12 12L18 6" stroke="#7d8a8c" stroke-width="2.2"/></svg>
<svg style="left:2520px;top:1589.2px;" width="680" height="120" viewBox="0 0 680 120"><circle cx="56.3" cy="61" r="33.7" fill="#47494a" stroke="#5b5d5e" stroke-width="1"/><circle cx="56.3" cy="60" r="27.2" fill="#070707"/><path d="M44.2 72.5L40.2 76.7" stroke="#e2475a" stroke-width="2.7"/><path d="M41.6 69.3L36.7 72.4" stroke="#e2475a" stroke-width="2.7"/><path d="M39.8 65.6L34.3 67.5" stroke="#e2475a" stroke-width="2.7"/><path d="M39.0 61.6L33.2 62.1" stroke="#e2475a" stroke-width="2.7"/><path d="M39.1 57.5L33.3 56.6" stroke="#e2475a" stroke-width="2.7"/><path d="M40.2 53.5L34.8 51.3" stroke="#e2475a" stroke-width="2.7"/><path d="M42.2 49.9L37.4 46.5" stroke="#e2475a" stroke-width="2.7"/><path d="M44.9 46.8L41.1 42.4" stroke="#e2475a" stroke-width="2.7"/><path d="M48.3 44.5L45.7 39.4" stroke="#e2475a" stroke-width="2.7"/><path d="M52.2 43.1L50.8 37.5" stroke="#e2475a" stroke-width="2.7"/><path d="M56.3 42.6L56.3 36.8" stroke="#e2475a" stroke-width="2.7"/><path d="M60.4 43.1L61.8 37.5" stroke="#e2475a" stroke-width="2.7"/><path d="M64.3 44.5L66.9 39.4" stroke="#e2475a" stroke-width="2.7"/><path d="M67.7 46.8L71.5 42.4" stroke="#8a2232" stroke-width="2.7"/><path d="M70.4 49.9L75.2 46.5" stroke="#8a2232" stroke-width="2.7"/><path d="M72.4 53.5L77.8 51.3" stroke="#8a2232" stroke-width="2.7"/><path d="M73.5 57.5L79.3 56.6" stroke="#8a2232" stroke-width="2.7"/><path d="M73.6 61.6L79.4 62.1" stroke="#8a2232" stroke-width="2.7"/><path d="M72.8 65.6L78.3 67.5" stroke="#8a2232" stroke-width="2.7"/><path d="M71.0 69.3L75.9 72.4" stroke="#8a2232" stroke-width="2.7"/><path d="M68.4 72.5L72.4 76.7" stroke="#8a2232" stroke-width="2.7"/><circle cx="56.3" cy="60" r="16.4" fill="#050505"/><clipPath id="c56_60"><circle cx="56.3" cy="60" r="15.2"/></clipPath><g clip-path="url(#c56_60)"><g style="filter:blur(1.5px)"><path d="M56.3 60.0L52.4 45.3A15.2 15.2 0 0 1 60.5 45.4Z" fill="#fafafa"/><path d="M56.3 60.0L60.2 45.3A15.2 15.2 0 0 1 67.2 49.4Z" fill="#9c9ea1"/><path d="M56.3 60.0L67.0 49.3A15.2 15.2 0 0 1 71.0 56.3Z" fill="#ececed"/><path d="M56.3 60.0L71.0 56.1A15.2 15.2 0 0 1 70.9 64.2Z" fill="#6e7073"/><path d="M56.3 60.0L71.0 63.9A15.2 15.2 0 0 1 66.9 70.9Z" fill="#dedfe1"/><path d="M56.3 60.0L67.0 70.7A15.2 15.2 0 0 1 60.0 74.7Z" fill="#8a8c8f"/><path d="M56.3 60.0L60.2 74.7A15.2 15.2 0 0 1 52.1 74.6Z" fill="#f6f6f7"/><path d="M56.3 60.0L52.4 74.7A15.2 15.2 0 0 1 45.4 70.6Z" fill="#7c7e81"/><path d="M56.3 60.0L45.6 70.7A15.2 15.2 0 0 1 41.6 63.7Z" fill="#e2e3e5"/><path d="M56.3 60.0L41.6 63.9A15.2 15.2 0 0 1 41.7 55.8Z" fill="#66686b"/><path d="M56.3 60.0L41.6 56.1A15.2 15.2 0 0 1 45.7 49.1Z" fill="#eeeeef"/><path d="M56.3 60.0L45.6 49.3A15.2 15.2 0 0 1 52.6 45.3Z" fill="#a2a4a7"/></g><circle cx="56.3" cy="60" r="14.799999999999999" fill="none" stroke="#e4e5e7" stroke-width="1.1" opacity=".7"/></g><path d="M57.8 57.4L63.5 47.4" stroke="#3a3c3f" stroke-width="2"/><circle cx="135.3" cy="61" r="33.7" fill="#47494a" stroke="#5b5d5e" stroke-width="1"/><circle cx="135.3" cy="60" r="27.2" fill="#070707"/><path d="M123.2 72.5L119.2 76.7" stroke="#e2475a" stroke-width="2.7"/><path d="M120.6 69.3L115.7 72.4" stroke="#e2475a" stroke-width="2.7"/><path d="M118.8 65.6L113.3 67.5" stroke="#e2475a" stroke-width="2.7"/><path d="M118.0 61.6L112.2 62.1" stroke="#e2475a" stroke-width="2.7"/><path d="M118.1 57.5L112.3 56.6" stroke="#e2475a" stroke-width="2.7"/><path d="M119.2 53.5L113.8 51.3" stroke="#e2475a" stroke-width="2.7"/><path d="M121.2 49.9L116.4 46.5" stroke="#e2475a" stroke-width="2.7"/><path d="M123.9 46.8L120.1 42.4" stroke="#e2475a" stroke-width="2.7"/><path d="M127.3 44.5L124.7 39.4" stroke="#e2475a" stroke-width="2.7"/><path d="M131.2 43.1L129.8 37.5" stroke="#e2475a" stroke-width="2.7"/><path d="M135.3 42.6L135.3 36.8" stroke="#e2475a" stroke-width="2.7"/><path d="M139.4 43.1L140.8 37.5" stroke="#8a2232" stroke-width="2.7"/><path d="M143.3 44.5L145.9 39.4" stroke="#8a2232" stroke-width="2.7"/><path d="M146.7 46.8L150.5 42.4" stroke="#8a2232" stroke-width="2.7"/><path d="M149.4 49.9L154.2 46.5" stroke="#8a2232" stroke-width="2.7"/><path d="M151.4 53.5L156.8 51.3" stroke="#8a2232" stroke-width="2.7"/><path d="M152.5 57.5L158.3 56.6" stroke="#8a2232" stroke-width="2.7"/><path d="M152.6 61.6L158.4 62.1" stroke="#8a2232" stroke-width="2.7"/><path d="M151.8 65.6L157.3 67.5" stroke="#8a2232" stroke-width="2.7"/><path d="M150.0 69.3L154.9 72.4" stroke="#8a2232" stroke-width="2.7"/><path d="M147.4 72.5L151.4 76.7" stroke="#8a2232" stroke-width="2.7"/><circle cx="135.3" cy="60" r="16.4" fill="#050505"/><clipPath id="c135_60"><circle cx="135.3" cy="60" r="15.2"/></clipPath><g clip-path="url(#c135_60)"><g style="filter:blur(1.5px)"><path d="M135.3 60.0L131.4 45.3A15.2 15.2 0 0 1 139.5 45.4Z" fill="#fafafa"/><path d="M135.3 60.0L139.2 45.3A15.2 15.2 0 0 1 146.2 49.4Z" fill="#9c9ea1"/><path d="M135.3 60.0L146.0 49.3A15.2 15.2 0 0 1 150.0 56.3Z" fill="#ececed"/><path d="M135.3 60.0L150.0 56.1A15.2 15.2 0 0 1 149.9 64.2Z" fill="#6e7073"/><path d="M135.3 60.0L150.0 63.9A15.2 15.2 0 0 1 145.9 70.9Z" fill="#dedfe1"/><path d="M135.3 60.0L146.0 70.7A15.2 15.2 0 0 1 139.0 74.7Z" fill="#8a8c8f"/><path d="M135.3 60.0L139.2 74.7A15.2 15.2 0 0 1 131.1 74.6Z" fill="#f6f6f7"/><path d="M135.3 60.0L131.4 74.7A15.2 15.2 0 0 1 124.4 70.6Z" fill="#7c7e81"/><path d="M135.3 60.0L124.6 70.7A15.2 15.2 0 0 1 120.6 63.7Z" fill="#e2e3e5"/><path d="M135.3 60.0L120.6 63.9A15.2 15.2 0 0 1 120.7 55.8Z" fill="#66686b"/><path d="M135.3 60.0L120.6 56.1A15.2 15.2 0 0 1 124.7 49.1Z" fill="#eeeeef"/><path d="M135.3 60.0L124.6 49.3A15.2 15.2 0 0 1 131.6 45.3Z" fill="#a2a4a7"/></g><circle cx="135.3" cy="60" r="14.799999999999999" fill="none" stroke="#e4e5e7" stroke-width="1.1" opacity=".7"/></g><path d="M135.3 57.0L135.3 45.5" stroke="#3a3c3f" stroke-width="2"/><circle cx="214.3" cy="61" r="33.7" fill="#47494a" stroke="#5b5d5e" stroke-width="1"/><circle cx="214.3" cy="60" r="27.2" fill="#070707"/><path d="M202.2 72.5L198.2 76.7" stroke="#8a2232" stroke-width="2.7"/><path d="M199.6 69.3L194.7 72.4" stroke="#8a2232" stroke-width="2.7"/><path d="M197.8 65.6L192.3 67.5" stroke="#8a2232" stroke-width="2.7"/><path d="M197.0 61.6L191.2 62.1" stroke="#8a2232" stroke-width="2.7"/><path d="M197.1 57.5L191.3 56.6" stroke="#8a2232" stroke-width="2.7"/><path d="M198.2 53.5L192.8 51.3" stroke="#8a2232" stroke-width="2.7"/><path d="M200.2 49.9L195.4 46.5" stroke="#8a2232" stroke-width="2.7"/><path d="M202.9 46.8L199.1 42.4" stroke="#8a2232" stroke-width="2.7"/><path d="M206.3 44.5L203.7 39.4" stroke="#8a2232" stroke-width="2.7"/><path d="M210.2 43.1L208.8 37.5" stroke="#8a2232" stroke-width="2.7"/><path d="M214.3 42.6L214.3 36.8" stroke="#8a2232" stroke-width="2.7"/><path d="M218.4 43.1L219.8 37.5" stroke="#8a2232" stroke-width="2.7"/><path d="M222.3 44.5L224.9 39.4" stroke="#8a2232" stroke-width="2.7"/><path d="M225.7 46.8L229.5 42.4" stroke="#8a2232" stroke-width="2.7"/><path d="M228.4 49.9L233.2 46.5" stroke="#8a2232" stroke-width="2.7"/><path d="M230.4 53.5L235.8 51.3" stroke="#8a2232" stroke-width="2.7"/><path d="M231.5 57.5L237.3 56.6" stroke="#8a2232" stroke-width="2.7"/><path d="M231.6 61.6L237.4 62.1" stroke="#8a2232" stroke-width="2.7"/><path d="M230.8 65.6L236.3 67.5" stroke="#8a2232" stroke-width="2.7"/><path d="M229.0 69.3L233.9 72.4" stroke="#8a2232" stroke-width="2.7"/><path d="M226.4 72.5L230.4 76.7" stroke="#8a2232" stroke-width="2.7"/><circle cx="214.3" cy="60" r="16.4" fill="#050505"/><clipPath id="c214_60"><circle cx="214.3" cy="60" r="15.2"/></clipPath><g clip-path="url(#c214_60)"><g style="filter:blur(1.5px)"><path d="M214.3 60.0L210.4 45.3A15.2 15.2 0 0 1 218.5 45.4Z" fill="#fafafa"/><path d="M214.3 60.0L218.2 45.3A15.2 15.2 0 0 1 225.2 49.4Z" fill="#9c9ea1"/><path d="M214.3 60.0L225.0 49.3A15.2 15.2 0 0 1 229.0 56.3Z" fill="#ececed"/><path d="M214.3 60.0L229.0 56.1A15.2 15.2 0 0 1 228.9 64.2Z" fill="#6e7073"/><path d="M214.3 60.0L229.0 63.9A15.2 15.2 0 0 1 224.9 70.9Z" fill="#dedfe1"/><path d="M214.3 60.0L225.0 70.7A15.2 15.2 0 0 1 218.0 74.7Z" fill="#8a8c8f"/><path d="M214.3 60.0L218.2 74.7A15.2 15.2 0 0 1 210.1 74.6Z" fill="#f6f6f7"/><path d="M214.3 60.0L210.4 74.7A15.2 15.2 0 0 1 203.4 70.6Z" fill="#7c7e81"/><path d="M214.3 60.0L203.6 70.7A15.2 15.2 0 0 1 199.6 63.7Z" fill="#e2e3e5"/><path d="M214.3 60.0L199.6 63.9A15.2 15.2 0 0 1 199.7 55.8Z" fill="#66686b"/><path d="M214.3 60.0L199.6 56.1A15.2 15.2 0 0 1 203.7 49.1Z" fill="#eeeeef"/><path d="M214.3 60.0L203.6 49.3A15.2 15.2 0 0 1 210.6 45.3Z" fill="#a2a4a7"/></g><circle cx="214.3" cy="60" r="14.799999999999999" fill="none" stroke="#e4e5e7" stroke-width="1.1" opacity=".7"/></g><path d="M212.4 62.3L205.0 71.1" stroke="#3a3c3f" stroke-width="2"/><circle cx="294.2" cy="61" r="33.7" fill="#47494a" stroke="#5b5d5e" stroke-width="1"/><circle cx="294.2" cy="60" r="27.2" fill="#070707"/><path d="M282.1 72.5L278.1 76.7" stroke="#e2475a" stroke-width="2.7"/><path d="M279.5 69.3L274.6 72.4" stroke="#e2475a" stroke-width="2.7"/><path d="M277.7 65.6L272.2 67.5" stroke="#e2475a" stroke-width="2.7"/><path d="M276.9 61.6L271.1 62.1" stroke="#e2475a" stroke-width="2.7"/><path d="M277.0 57.5L271.2 56.6" stroke="#e2475a" stroke-width="2.7"/><path d="M278.1 53.5L272.7 51.3" stroke="#e2475a" stroke-width="2.7"/><path d="M280.1 49.9L275.3 46.5" stroke="#e2475a" stroke-width="2.7"/><path d="M282.8 46.8L279.0 42.4" stroke="#e2475a" stroke-width="2.7"/><path d="M286.2 44.5L283.6 39.4" stroke="#e2475a" stroke-width="2.7"/><path d="M290.1 43.1L288.7 37.5" stroke="#e2475a" stroke-width="2.7"/><path d="M294.2 42.6L294.2 36.8" stroke="#e2475a" stroke-width="2.7"/><path d="M298.3 43.1L299.7 37.5" stroke="#8a2232" stroke-width="2.7"/><path d="M302.2 44.5L304.8 39.4" stroke="#8a2232" stroke-width="2.7"/><path d="M305.6 46.8L309.4 42.4" stroke="#8a2232" stroke-width="2.7"/><path d="M308.3 49.9L313.1 46.5" stroke="#8a2232" stroke-width="2.7"/><path d="M310.3 53.5L315.7 51.3" stroke="#8a2232" stroke-width="2.7"/><path d="M311.4 57.5L317.2 56.6" stroke="#8a2232" stroke-width="2.7"/><path d="M311.5 61.6L317.3 62.1" stroke="#8a2232" stroke-width="2.7"/><path d="M310.7 65.6L316.2 67.5" stroke="#8a2232" stroke-width="2.7"/><path d="M308.9 69.3L313.8 72.4" stroke="#8a2232" stroke-width="2.7"/><path d="M306.3 72.5L310.3 76.7" stroke="#8a2232" stroke-width="2.7"/><circle cx="294.2" cy="60" r="16.4" fill="#050505"/><clipPath id="c294_60"><circle cx="294.2" cy="60" r="15.2"/></clipPath><g clip-path="url(#c294_60)"><g style="filter:blur(1.5px)"><path d="M294.2 60.0L290.3 45.3A15.2 15.2 0 0 1 298.4 45.4Z" fill="#fafafa"/><path d="M294.2 60.0L298.1 45.3A15.2 15.2 0 0 1 305.1 49.4Z" fill="#9c9ea1"/><path d="M294.2 60.0L304.9 49.3A15.2 15.2 0 0 1 308.9 56.3Z" fill="#ececed"/><path d="M294.2 60.0L308.9 56.1A15.2 15.2 0 0 1 308.8 64.2Z" fill="#6e7073"/><path d="M294.2 60.0L308.9 63.9A15.2 15.2 0 0 1 304.8 70.9Z" fill="#dedfe1"/><path d="M294.2 60.0L304.9 70.7A15.2 15.2 0 0 1 297.9 74.7Z" fill="#8a8c8f"/><path d="M294.2 60.0L298.1 74.7A15.2 15.2 0 0 1 290.0 74.6Z" fill="#f6f6f7"/><path d="M294.2 60.0L290.3 74.7A15.2 15.2 0 0 1 283.3 70.6Z" fill="#7c7e81"/><path d="M294.2 60.0L283.5 70.7A15.2 15.2 0 0 1 279.5 63.7Z" fill="#e2e3e5"/><path d="M294.2 60.0L279.5 63.9A15.2 15.2 0 0 1 279.6 55.8Z" fill="#66686b"/><path d="M294.2 60.0L279.5 56.1A15.2 15.2 0 0 1 283.6 49.1Z" fill="#eeeeef"/><path d="M294.2 60.0L283.5 49.3A15.2 15.2 0 0 1 290.5 45.3Z" fill="#a2a4a7"/></g><circle cx="294.2" cy="60" r="14.799999999999999" fill="none" stroke="#e4e5e7" stroke-width="1.1" opacity=".7"/></g><path d="M294.2 57.0L294.2 45.5" stroke="#3a3c3f" stroke-width="2"/><circle cx="374.6" cy="61" r="33.7" fill="#47494a" stroke="#5b5d5e" stroke-width="1"/><circle cx="374.6" cy="60" r="27.2" fill="#070707"/><path d="M362.5 72.5L358.5 76.7" stroke="#e2475a" stroke-width="2.7"/><path d="M359.9 69.3L355.0 72.4" stroke="#e2475a" stroke-width="2.7"/><path d="M358.1 65.6L352.6 67.5" stroke="#e2475a" stroke-width="2.7"/><path d="M357.3 61.6L351.5 62.1" stroke="#e2475a" stroke-width="2.7"/><path d="M357.4 57.5L351.6 56.6" stroke="#e2475a" stroke-width="2.7"/><path d="M358.5 53.5L353.1 51.3" stroke="#e2475a" stroke-width="2.7"/><path d="M360.5 49.9L355.7 46.5" stroke="#e2475a" stroke-width="2.7"/><path d="M363.2 46.8L359.4 42.4" stroke="#e2475a" stroke-width="2.7"/><path d="M366.6 44.5L364.0 39.4" stroke="#e2475a" stroke-width="2.7"/><path d="M370.5 43.1L369.1 37.5" stroke="#e2475a" stroke-width="2.7"/><path d="M374.6 42.6L374.6 36.8" stroke="#e2475a" stroke-width="2.7"/><path d="M378.7 43.1L380.1 37.5" stroke="#e2475a" stroke-width="2.7"/><path d="M382.6 44.5L385.2 39.4" stroke="#e2475a" stroke-width="2.7"/><path d="M386.0 46.8L389.8 42.4" stroke="#e2475a" stroke-width="2.7"/><path d="M388.7 49.9L393.5 46.5" stroke="#e2475a" stroke-width="2.7"/><path d="M390.7 53.5L396.1 51.3" stroke="#e2475a" stroke-width="2.7"/><path d="M391.8 57.5L397.6 56.6" stroke="#e2475a" stroke-width="2.7"/><path d="M391.9 61.6L397.7 62.1" stroke="#e2475a" stroke-width="2.7"/><path d="M391.1 65.6L396.6 67.5" stroke="#e2475a" stroke-width="2.7"/><path d="M389.3 69.3L394.2 72.4" stroke="#e2475a" stroke-width="2.7"/><path d="M386.7 72.5L390.7 76.7" stroke="#e2475a" stroke-width="2.7"/><circle cx="374.6" cy="60" r="16.4" fill="#050505"/><clipPath id="c374_60"><circle cx="374.6" cy="60" r="15.2"/></clipPath><g clip-path="url(#c374_60)"><g style="filter:blur(1.5px)"><path d="M374.6 60.0L370.7 45.3A15.2 15.2 0 0 1 378.8 45.4Z" fill="#fafafa"/><path d="M374.6 60.0L378.5 45.3A15.2 15.2 0 0 1 385.5 49.4Z" fill="#9c9ea1"/><path d="M374.6 60.0L385.3 49.3A15.2 15.2 0 0 1 389.3 56.3Z" fill="#ececed"/><path d="M374.6 60.0L389.3 56.1A15.2 15.2 0 0 1 389.2 64.2Z" fill="#6e7073"/><path d="M374.6 60.0L389.3 63.9A15.2 15.2 0 0 1 385.2 70.9Z" fill="#dedfe1"/><path d="M374.6 60.0L385.3 70.7A15.2 15.2 0 0 1 378.3 74.7Z" fill="#8a8c8f"/><path d="M374.6 60.0L378.5 74.7A15.2 15.2 0 0 1 370.4 74.6Z" fill="#f6f6f7"/><path d="M374.6 60.0L370.7 74.7A15.2 15.2 0 0 1 363.7 70.6Z" fill="#7c7e81"/><path d="M374.6 60.0L363.9 70.7A15.2 15.2 0 0 1 359.9 63.7Z" fill="#e2e3e5"/><path d="M374.6 60.0L359.9 63.9A15.2 15.2 0 0 1 360.0 55.8Z" fill="#66686b"/><path d="M374.6 60.0L359.9 56.1A15.2 15.2 0 0 1 364.0 49.1Z" fill="#eeeeef"/><path d="M374.6 60.0L363.9 49.3A15.2 15.2 0 0 1 370.9 45.3Z" fill="#a2a4a7"/></g><circle cx="374.6" cy="60" r="14.799999999999999" fill="none" stroke="#e4e5e7" stroke-width="1.1" opacity=".7"/></g><path d="M376.5 62.3L383.9 71.1" stroke="#3a3c3f" stroke-width="2"/><circle cx="454.5" cy="61" r="33.7" fill="#47494a" stroke="#5b5d5e" stroke-width="1"/><circle cx="454.5" cy="60" r="27.2" fill="#070707"/><path d="M442.4 72.5L438.4 76.7" stroke="#8a2232" stroke-width="2.7"/><path d="M439.8 69.3L434.9 72.4" stroke="#8a2232" stroke-width="2.7"/><path d="M438.0 65.6L432.5 67.5" stroke="#8a2232" stroke-width="2.7"/><path d="M437.2 61.6L431.4 62.1" stroke="#8a2232" stroke-width="2.7"/><path d="M437.3 57.5L431.5 56.6" stroke="#8a2232" stroke-width="2.7"/><path d="M438.4 53.5L433.0 51.3" stroke="#8a2232" stroke-width="2.7"/><path d="M440.4 49.9L435.6 46.5" stroke="#8a2232" stroke-width="2.7"/><path d="M443.1 46.8L439.3 42.4" stroke="#8a2232" stroke-width="2.7"/><path d="M446.5 44.5L443.9 39.4" stroke="#8a2232" stroke-width="2.7"/><path d="M450.4 43.1L449.0 37.5" stroke="#8a2232" stroke-width="2.7"/><path d="M454.5 42.6L454.5 36.8" stroke="#8a2232" stroke-width="2.7"/><path d="M458.6 43.1L460.0 37.5" stroke="#8a2232" stroke-width="2.7"/><path d="M462.5 44.5L465.1 39.4" stroke="#8a2232" stroke-width="2.7"/><path d="M465.9 46.8L469.7 42.4" stroke="#8a2232" stroke-width="2.7"/><path d="M468.6 49.9L473.4 46.5" stroke="#8a2232" stroke-width="2.7"/><path d="M470.6 53.5L476.0 51.3" stroke="#8a2232" stroke-width="2.7"/><path d="M471.7 57.5L477.5 56.6" stroke="#8a2232" stroke-width="2.7"/><path d="M471.8 61.6L477.6 62.1" stroke="#8a2232" stroke-width="2.7"/><path d="M471.0 65.6L476.5 67.5" stroke="#8a2232" stroke-width="2.7"/><path d="M469.2 69.3L474.1 72.4" stroke="#8a2232" stroke-width="2.7"/><path d="M466.6 72.5L470.6 76.7" stroke="#8a2232" stroke-width="2.7"/><circle cx="454.5" cy="60" r="16.4" fill="#050505"/><clipPath id="c454_60"><circle cx="454.5" cy="60" r="15.2"/></clipPath><g clip-path="url(#c454_60)"><g style="filter:blur(1.5px)"><path d="M454.5 60.0L450.6 45.3A15.2 15.2 0 0 1 458.7 45.4Z" fill="#fafafa"/><path d="M454.5 60.0L458.4 45.3A15.2 15.2 0 0 1 465.4 49.4Z" fill="#9c9ea1"/><path d="M454.5 60.0L465.2 49.3A15.2 15.2 0 0 1 469.2 56.3Z" fill="#ececed"/><path d="M454.5 60.0L469.2 56.1A15.2 15.2 0 0 1 469.1 64.2Z" fill="#6e7073"/><path d="M454.5 60.0L469.2 63.9A15.2 15.2 0 0 1 465.1 70.9Z" fill="#dedfe1"/><path d="M454.5 60.0L465.2 70.7A15.2 15.2 0 0 1 458.2 74.7Z" fill="#8a8c8f"/><path d="M454.5 60.0L458.4 74.7A15.2 15.2 0 0 1 450.3 74.6Z" fill="#f6f6f7"/><path d="M454.5 60.0L450.6 74.7A15.2 15.2 0 0 1 443.6 70.6Z" fill="#7c7e81"/><path d="M454.5 60.0L443.8 70.7A15.2 15.2 0 0 1 439.8 63.7Z" fill="#e2e3e5"/><path d="M454.5 60.0L439.8 63.9A15.2 15.2 0 0 1 439.9 55.8Z" fill="#66686b"/><path d="M454.5 60.0L439.8 56.1A15.2 15.2 0 0 1 443.9 49.1Z" fill="#eeeeef"/><path d="M454.5 60.0L443.8 49.3A15.2 15.2 0 0 1 450.8 45.3Z" fill="#a2a4a7"/></g><circle cx="454.5" cy="60" r="14.799999999999999" fill="none" stroke="#e4e5e7" stroke-width="1.1" opacity=".7"/></g><path d="M452.6 62.3L445.2 71.1" stroke="#3a3c3f" stroke-width="2"/><circle cx="534" cy="61" r="33.7" fill="#47494a" stroke="#5b5d5e" stroke-width="1"/><circle cx="534" cy="60" r="27.2" fill="#070707"/><path d="M521.9 72.5L517.9 76.7" stroke="#8a2232" stroke-width="2.7"/><path d="M519.3 69.3L514.4 72.4" stroke="#8a2232" stroke-width="2.7"/><path d="M517.5 65.6L512.0 67.5" stroke="#8a2232" stroke-width="2.7"/><path d="M516.7 61.6L510.9 62.1" stroke="#8a2232" stroke-width="2.7"/><path d="M516.8 57.5L511.0 56.6" stroke="#8a2232" stroke-width="2.7"/><path d="M517.9 53.5L512.5 51.3" stroke="#8a2232" stroke-width="2.7"/><path d="M519.9 49.9L515.1 46.5" stroke="#8a2232" stroke-width="2.7"/><path d="M522.6 46.8L518.8 42.4" stroke="#8a2232" stroke-width="2.7"/><path d="M526.0 44.5L523.4 39.4" stroke="#8a2232" stroke-width="2.7"/><path d="M529.9 43.1L528.5 37.5" stroke="#8a2232" stroke-width="2.7"/><path d="M534.0 42.6L534.0 36.8" stroke="#8a2232" stroke-width="2.7"/><path d="M538.1 43.1L539.5 37.5" stroke="#8a2232" stroke-width="2.7"/><path d="M542.0 44.5L544.6 39.4" stroke="#8a2232" stroke-width="2.7"/><path d="M545.4 46.8L549.2 42.4" stroke="#8a2232" stroke-width="2.7"/><path d="M548.1 49.9L552.9 46.5" stroke="#8a2232" stroke-width="2.7"/><path d="M550.1 53.5L555.5 51.3" stroke="#8a2232" stroke-width="2.7"/><path d="M551.2 57.5L557.0 56.6" stroke="#8a2232" stroke-width="2.7"/><path d="M551.3 61.6L557.1 62.1" stroke="#8a2232" stroke-width="2.7"/><path d="M550.5 65.6L556.0 67.5" stroke="#8a2232" stroke-width="2.7"/><path d="M548.7 69.3L553.6 72.4" stroke="#8a2232" stroke-width="2.7"/><path d="M546.1 72.5L550.1 76.7" stroke="#8a2232" stroke-width="2.7"/><circle cx="534" cy="60" r="16.4" fill="#050505"/><clipPath id="c534_60"><circle cx="534" cy="60" r="15.2"/></clipPath><g clip-path="url(#c534_60)"><g style="filter:blur(1.5px)"><path d="M534.0 60.0L530.1 45.3A15.2 15.2 0 0 1 538.2 45.4Z" fill="#fafafa"/><path d="M534.0 60.0L537.9 45.3A15.2 15.2 0 0 1 544.9 49.4Z" fill="#9c9ea1"/><path d="M534.0 60.0L544.7 49.3A15.2 15.2 0 0 1 548.7 56.3Z" fill="#ececed"/><path d="M534.0 60.0L548.7 56.1A15.2 15.2 0 0 1 548.6 64.2Z" fill="#6e7073"/><path d="M534.0 60.0L548.7 63.9A15.2 15.2 0 0 1 544.6 70.9Z" fill="#dedfe1"/><path d="M534.0 60.0L544.7 70.7A15.2 15.2 0 0 1 537.7 74.7Z" fill="#8a8c8f"/><path d="M534.0 60.0L537.9 74.7A15.2 15.2 0 0 1 529.8 74.6Z" fill="#f6f6f7"/><path d="M534.0 60.0L530.1 74.7A15.2 15.2 0 0 1 523.1 70.6Z" fill="#7c7e81"/><path d="M534.0 60.0L523.3 70.7A15.2 15.2 0 0 1 519.3 63.7Z" fill="#e2e3e5"/><path d="M534.0 60.0L519.3 63.9A15.2 15.2 0 0 1 519.4 55.8Z" fill="#66686b"/><path d="M534.0 60.0L519.3 56.1A15.2 15.2 0 0 1 523.4 49.1Z" fill="#eeeeef"/><path d="M534.0 60.0L523.3 49.3A15.2 15.2 0 0 1 530.3 45.3Z" fill="#a2a4a7"/></g><circle cx="534" cy="60" r="14.799999999999999" fill="none" stroke="#e4e5e7" stroke-width="1.1" opacity=".7"/></g><path d="M532.1 62.3L524.7 71.1" stroke="#3a3c3f" stroke-width="2"/><circle cx="613.9" cy="61" r="33.7" fill="#47494a" stroke="#5b5d5e" stroke-width="1"/><circle cx="613.9" cy="60" r="27.2" fill="#070707"/><path d="M601.8 72.5L597.8 76.7" stroke="#e2475a" stroke-width="2.7"/><path d="M599.2 69.3L594.3 72.4" stroke="#e2475a" stroke-width="2.7"/><path d="M597.4 65.6L591.9 67.5" stroke="#e2475a" stroke-width="2.7"/><path d="M596.6 61.6L590.8 62.1" stroke="#e2475a" stroke-width="2.7"/><path d="M596.7 57.5L590.9 56.6" stroke="#e2475a" stroke-width="2.7"/><path d="M597.8 53.5L592.4 51.3" stroke="#e2475a" stroke-width="2.7"/><path d="M599.8 49.9L595.0 46.5" stroke="#e2475a" stroke-width="2.7"/><path d="M602.5 46.8L598.7 42.4" stroke="#e2475a" stroke-width="2.7"/><path d="M605.9 44.5L603.3 39.4" stroke="#e2475a" stroke-width="2.7"/><path d="M609.8 43.1L608.4 37.5" stroke="#e2475a" stroke-width="2.7"/><path d="M613.9 42.6L613.9 36.8" stroke="#e2475a" stroke-width="2.7"/><path d="M618.0 43.1L619.4 37.5" stroke="#8a2232" stroke-width="2.7"/><path d="M621.9 44.5L624.5 39.4" stroke="#8a2232" stroke-width="2.7"/><path d="M625.3 46.8L629.1 42.4" stroke="#8a2232" stroke-width="2.7"/><path d="M628.0 49.9L632.8 46.5" stroke="#8a2232" stroke-width="2.7"/><path d="M630.0 53.5L635.4 51.3" stroke="#8a2232" stroke-width="2.7"/><path d="M631.1 57.5L636.9 56.6" stroke="#8a2232" stroke-width="2.7"/><path d="M631.2 61.6L637.0 62.1" stroke="#8a2232" stroke-width="2.7"/><path d="M630.4 65.6L635.9 67.5" stroke="#8a2232" stroke-width="2.7"/><path d="M628.6 69.3L633.5 72.4" stroke="#8a2232" stroke-width="2.7"/><path d="M626.0 72.5L630.0 76.7" stroke="#8a2232" stroke-width="2.7"/><circle cx="613.9" cy="60" r="16.4" fill="#050505"/><clipPath id="c613_60"><circle cx="613.9" cy="60" r="15.2"/></clipPath><g clip-path="url(#c613_60)"><g style="filter:blur(1.5px)"><path d="M613.9 60.0L610.0 45.3A15.2 15.2 0 0 1 618.1 45.4Z" fill="#fafafa"/><path d="M613.9 60.0L617.8 45.3A15.2 15.2 0 0 1 624.8 49.4Z" fill="#9c9ea1"/><path d="M613.9 60.0L624.6 49.3A15.2 15.2 0 0 1 628.6 56.3Z" fill="#ececed"/><path d="M613.9 60.0L628.6 56.1A15.2 15.2 0 0 1 628.5 64.2Z" fill="#6e7073"/><path d="M613.9 60.0L628.6 63.9A15.2 15.2 0 0 1 624.5 70.9Z" fill="#dedfe1"/><path d="M613.9 60.0L624.6 70.7A15.2 15.2 0 0 1 617.6 74.7Z" fill="#8a8c8f"/><path d="M613.9 60.0L617.8 74.7A15.2 15.2 0 0 1 609.7 74.6Z" fill="#f6f6f7"/><path d="M613.9 60.0L610.0 74.7A15.2 15.2 0 0 1 603.0 70.6Z" fill="#7c7e81"/><path d="M613.9 60.0L603.2 70.7A15.2 15.2 0 0 1 599.2 63.7Z" fill="#e2e3e5"/><path d="M613.9 60.0L599.2 63.9A15.2 15.2 0 0 1 599.3 55.8Z" fill="#66686b"/><path d="M613.9 60.0L599.2 56.1A15.2 15.2 0 0 1 603.3 49.1Z" fill="#eeeeef"/><path d="M613.9 60.0L603.2 49.3A15.2 15.2 0 0 1 610.2 45.3Z" fill="#a2a4a7"/></g><circle cx="613.9" cy="60" r="14.799999999999999" fill="none" stroke="#e4e5e7" stroke-width="1.1" opacity=".7"/></g><path d="M613.9 57.0L613.9 45.5" stroke="#3a3c3f" stroke-width="2"/></svg>
<div style="left:2471.5px;top:1699px;width:762px;height:2px;background:#0f1012;"></div>
</body></html>
